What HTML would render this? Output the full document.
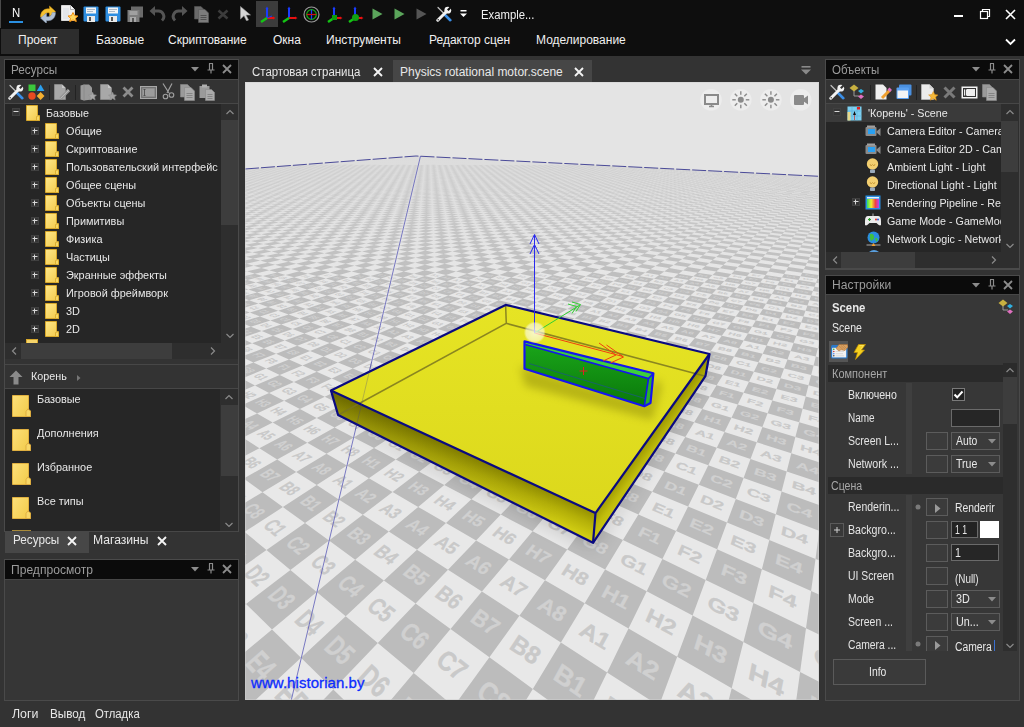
<!DOCTYPE html>
<html><head><meta charset="utf-8"><style>
html,body{margin:0;padding:0;}
body{width:1024px;height:727px;overflow:hidden;position:relative;background:#333333;font-family:"Liberation Sans",sans-serif;}
.a{position:absolute;}
.t{white-space:nowrap;}
svg{overflow:hidden;}
</style></head><body>
<svg class="a" style="left:245px;top:82px" width="574" height="618" viewBox="245 82 574 618"><rect x="245" y="82" width="574" height="618" fill="#e4e4e4"/><defs><clipPath id="fc"><path d="M245 169 L416 156 L819 176.3 L819 700 L245 700Z"/></clipPath><linearGradient id="fog" x1="0" y1="150" x2="0" y2="330" gradientUnits="userSpaceOnUse"><stop offset="0" stop-color="#d8d8d8" stop-opacity="0.75"/><stop offset="0.2" stop-color="#d8d8d8" stop-opacity="0.6"/><stop offset="0.45" stop-color="#d8d8d8" stop-opacity="0.32"/><stop offset="0.7" stop-color="#d8d8d8" stop-opacity="0.1"/><stop offset="1" stop-color="#d8d8d8" stop-opacity="0"/></linearGradient></defs><g clip-path="url(#fc)"><rect x="245" y="150" width="574" height="550" fill="#e8e8e8"/><path fill="#bcbcbc" d="M245.9 164.7 248 164.9 243.9 165.2 241.7 165ZM252.1 164.6 254.3 164.8 250.2 165.1 248 164.9ZM243.9 165.2 246 165.3 241.8 165.6 239.6 165.4ZM258.4 164.5 260.6 164.7 256.5 165 254.3 164.8ZM250.2 165.1 252.4 165.3 248.2 165.5 246 165.3ZM264.6 164.5 266.8 164.6 262.8 164.9 260.6 164.7ZM256.5 165 258.7 165.2 254.6 165.5 252.4 165.3ZM248.2 165.5 250.4 165.7 246.2 166 244 165.8ZM262.8 164.9 265 165.1 260.9 165.4 258.7 165.2ZM254.6 165.5 256.8 165.6 252.6 165.9 250.4 165.7ZM246.2 166 248.4 166.2 244.1 166.5 241.9 166.3ZM269 164.8 271.3 165 267.3 165.3 265 165.1ZM260.9 165.4 263.2 165.6 259.1 165.8 256.8 165.6ZM252.6 165.9 254.9 166.1 250.6 166.4 248.4 166.2ZM244.1 166.5 246.3 166.7 242 167 239.7 166.8ZM275.2 164.7 277.5 164.9 273.5 165.2 271.3 165ZM267.3 165.3 269.5 165.5 265.4 165.7 263.2 165.6ZM259.1 165.8 261.3 166 257.1 166.3 254.9 166.1ZM250.6 166.4 252.9 166.6 248.6 166.9 246.3 166.7ZM281.4 164.7 283.7 164.8 279.8 165.1 277.5 164.9ZM273.5 165.2 275.8 165.4 271.8 165.7 269.5 165.5ZM265.4 165.7 267.7 165.9 263.6 166.2 261.3 166ZM257.1 166.3 259.4 166.5 255.2 166.8 252.9 166.6ZM248.6 166.9 250.9 167.1 246.5 167.4 244.2 167.2ZM287.6 164.6 289.9 164.8 286 165 283.7 164.8ZM279.8 165.1 282.1 165.3 278.1 165.6 275.8 165.4ZM271.8 165.7 274.1 165.9 270 166.1 267.7 165.9ZM263.6 166.2 265.9 166.4 261.7 166.7 259.4 166.5ZM255.2 166.8 257.5 167 253.1 167.3 250.9 167.1ZM246.5 167.4 248.8 167.6 244.3 167.9 242.1 167.7ZM293.7 164.5 296.1 164.7 292.2 164.9 289.9 164.8ZM286 165 288.4 165.2 284.4 165.5 282.1 165.3ZM278.1 165.6 280.5 165.8 276.4 166 274.1 165.9ZM270 166.1 272.4 166.3 268.2 166.6 265.9 166.4ZM261.7 166.7 264 166.9 259.8 167.2 257.5 167ZM253.1 167.3 255.5 167.5 251.1 167.8 248.8 167.6ZM244.3 167.9 246.6 168.1 242.1 168.5 239.8 168.2ZM292.2 164.9 294.6 165.1 290.7 165.4 288.4 165.2ZM284.4 165.5 286.8 165.7 282.8 166 280.5 165.8ZM276.4 166 278.8 166.2 274.7 166.5 272.4 166.3ZM268.2 166.6 270.6 166.8 266.4 167.1 264 166.9ZM259.8 167.2 262.1 167.4 257.8 167.7 255.5 167.5ZM251.1 167.8 253.4 168 249 168.4 246.6 168.1ZM298.4 164.9 300.8 165 297 165.3 294.6 165.1ZM290.7 165.4 293.1 165.6 289.2 165.9 286.8 165.7ZM282.8 166 285.2 166.2 281.2 166.4 278.8 166.2ZM274.7 166.5 277.1 166.7 272.9 167 270.6 166.8ZM266.4 167.1 268.7 167.3 264.5 167.6 262.1 167.4ZM257.8 167.7 260.2 167.9 255.8 168.3 253.4 168ZM249 168.4 251.3 168.6 246.8 168.9 244.5 168.7ZM304.6 164.8 307 165 303.2 165.2 300.8 165ZM297 165.3 299.4 165.5 295.5 165.8 293.1 165.6ZM289.2 165.9 291.6 166.1 287.6 166.4 285.2 166.2ZM281.2 166.4 283.6 166.6 279.5 166.9 277.1 166.7ZM272.9 167 275.3 167.2 271.1 167.5 268.7 167.3ZM264.5 167.6 266.9 167.8 262.5 168.2 260.2 167.9ZM255.8 168.3 258.1 168.5 253.7 168.8 251.3 168.6ZM246.8 168.9 249.2 169.1 244.6 169.4 242.2 169.2ZM310.7 164.7 313.1 164.9 309.4 165.1 307 165ZM303.2 165.2 305.6 165.4 301.8 165.7 299.4 165.5ZM295.5 165.8 297.9 166 294 166.3 291.6 166.1ZM287.6 166.4 290 166.6 286 166.8 283.6 166.6ZM279.5 166.9 281.9 167.1 277.7 167.4 275.3 167.2ZM271.1 167.5 273.5 167.7 269.3 168.1 266.9 167.8ZM262.5 168.2 264.9 168.4 260.5 168.7 258.1 168.5ZM253.7 168.8 256.1 169 251.6 169.3 249.2 169.1ZM244.6 169.4 247 169.7 242.3 170 240 169.8ZM316.8 164.6 319.2 164.8 315.6 165.1 313.1 164.9ZM309.4 165.1 311.8 165.3 308.1 165.6 305.6 165.4ZM301.8 165.7 304.2 165.9 300.4 166.2 297.9 166ZM294 166.3 296.4 166.5 292.5 166.8 290 166.6ZM286 166.8 288.4 167 284.3 167.3 281.9 167.1ZM277.7 167.4 280.2 167.7 276 168 273.5 167.7ZM269.3 168.1 271.7 168.3 267.4 168.6 264.9 168.4ZM260.5 168.7 263 168.9 258.5 169.2 256.1 169ZM251.6 169.3 254 169.6 249.4 169.9 247 169.7ZM322.9 164.5 325.3 164.7 321.7 165 319.2 164.8ZM315.6 165.1 318 165.2 314.3 165.5 311.8 165.3ZM308.1 165.6 310.5 165.8 306.7 166.1 304.2 165.9ZM300.4 166.2 302.8 166.4 298.9 166.7 296.4 166.5ZM292.5 166.8 294.9 167 290.9 167.3 288.4 167ZM284.3 167.3 286.8 167.6 282.6 167.9 280.2 167.7ZM276 168 278.4 168.2 274.1 168.5 271.7 168.3ZM267.4 168.6 269.8 168.8 265.4 169.1 263 168.9ZM258.5 169.2 261 169.5 256.4 169.8 254 169.6ZM249.4 169.9 251.8 170.1 247.2 170.5 244.7 170.2ZM321.7 165 324.2 165.2 320.5 165.4 318 165.2ZM314.3 165.5 316.8 165.7 313 166 310.5 165.8ZM306.7 166.1 309.2 166.3 305.3 166.6 302.8 166.4ZM298.9 166.7 301.4 166.9 297.4 167.2 294.9 167ZM290.9 167.3 293.4 167.5 289.3 167.8 286.8 167.6ZM282.6 167.9 285.1 168.1 280.9 168.4 278.4 168.2ZM274.1 168.5 276.6 168.7 272.3 169 269.8 168.8ZM265.4 169.1 267.9 169.4 263.4 169.7 261 169.5ZM256.4 169.8 258.9 170 254.3 170.4 251.8 170.1ZM247.2 170.5 249.6 170.7 244.9 171.1 242.4 170.8ZM327.8 164.9 330.3 165.1 326.7 165.4 324.2 165.2ZM320.5 165.4 323 165.6 319.3 165.9 316.8 165.7ZM313 166 315.5 166.2 311.7 166.5 309.2 166.3ZM305.3 166.6 307.8 166.8 303.9 167.1 301.4 166.9ZM297.4 167.2 299.9 167.4 295.9 167.7 293.4 167.5ZM289.3 167.8 291.8 168 287.6 168.3 285.1 168.1ZM280.9 168.4 283.4 168.6 279.1 168.9 276.6 168.7ZM272.3 169 274.8 169.3 270.4 169.6 267.9 169.4ZM263.4 169.7 265.9 169.9 261.4 170.3 258.9 170ZM254.3 170.4 256.8 170.6 252.1 171 249.6 170.7ZM244.9 171.1 247.4 171.3 242.5 171.7 240.1 171.4ZM333.9 164.8 336.4 165 332.8 165.3 330.3 165.1ZM326.7 165.4 329.2 165.5 325.5 165.8 323 165.6ZM319.3 165.9 321.8 166.1 318.1 166.4 315.5 166.2ZM311.7 166.5 314.2 166.7 310.4 167 307.8 166.8ZM303.9 167.1 306.4 167.3 302.4 167.6 299.9 167.4ZM295.9 167.7 298.4 167.9 294.3 168.2 291.8 168ZM287.6 168.3 290.1 168.5 285.9 168.8 283.4 168.6ZM279.1 168.9 281.6 169.2 277.3 169.5 274.8 169.3ZM270.4 169.6 272.9 169.8 268.4 170.2 265.9 169.9ZM261.4 170.3 263.9 170.5 259.3 170.9 256.8 170.6ZM252.1 171 254.6 171.2 249.8 171.6 247.4 171.3ZM242.5 171.7 245 171.9 240.1 172.3 237.6 172.1ZM339.9 164.7 342.5 164.9 339 165.2 336.4 165ZM332.8 165.3 335.4 165.5 331.8 165.7 329.2 165.5ZM325.5 165.8 328.1 166 324.4 166.3 321.8 166.1ZM318.1 166.4 320.6 166.6 316.8 166.9 314.2 166.7ZM310.4 167 312.9 167.2 309 167.5 306.4 167.3ZM302.4 167.6 305 167.8 300.9 168.1 298.4 167.9ZM294.3 168.2 296.8 168.4 292.7 168.7 290.1 168.5ZM285.9 168.8 288.5 169.1 284.2 169.4 281.6 169.2ZM277.3 169.5 279.8 169.7 275.4 170.1 272.9 169.8ZM268.4 170.2 271 170.4 266.4 170.7 263.9 170.5ZM259.3 170.9 261.8 171.1 257.1 171.5 254.6 171.2ZM249.8 171.6 252.4 171.8 247.5 172.2 245 171.9ZM346 164.6 348.5 164.8 345.1 165.1 342.5 164.9ZM339 165.2 341.5 165.4 338 165.6 335.4 165.5ZM331.8 165.7 334.3 165.9 330.7 166.2 328.1 166ZM324.4 166.3 327 166.5 323.2 166.8 320.6 166.6ZM316.8 166.9 319.4 167.1 315.5 167.4 312.9 167.2ZM309 167.5 311.6 167.7 307.6 168 305 167.8ZM300.9 168.1 303.5 168.3 299.4 168.6 296.8 168.4ZM292.7 168.7 295.3 169 291 169.3 288.5 169.1ZM284.2 169.4 286.8 169.6 282.4 169.9 279.8 169.7ZM275.4 170.1 278 170.3 273.5 170.6 271 170.4ZM266.4 170.7 269 171 264.4 171.3 261.8 171.1ZM257.1 171.5 259.7 171.7 254.9 172.1 252.4 171.8ZM247.5 172.2 250.1 172.4 245.2 172.8 242.6 172.6ZM352 164.6 354.6 164.7 351.1 165 348.5 164.8ZM345.1 165.1 347.7 165.3 344.1 165.6 341.5 165.4ZM338 165.6 340.6 165.8 336.9 166.1 334.3 165.9ZM330.7 166.2 333.3 166.4 329.6 166.7 327 166.5ZM323.2 166.8 325.8 167 322 167.3 319.4 167.1ZM315.5 167.4 318.1 167.6 314.2 167.9 311.6 167.7ZM307.6 168 310.2 168.2 306.1 168.5 303.5 168.3ZM299.4 168.6 302 168.9 297.9 169.2 295.3 169ZM291 169.3 293.6 169.5 289.4 169.8 286.8 169.6ZM282.4 169.9 285 170.2 280.6 170.5 278 170.3ZM273.5 170.6 276.1 170.9 271.6 171.2 269 171ZM264.4 171.3 266.9 171.6 262.3 172 259.7 171.7ZM254.9 172.1 257.5 172.3 252.7 172.7 250.1 172.4ZM245.2 172.8 247.7 173.1 242.7 173.5 240.2 173.2ZM351.1 165 353.8 165.2 350.3 165.5 347.7 165.3ZM344.1 165.6 346.8 165.8 343.2 166 340.6 165.8ZM336.9 166.1 339.6 166.3 335.9 166.6 333.3 166.4ZM329.6 166.7 332.2 166.9 328.4 167.2 325.8 167ZM322 167.3 324.6 167.5 320.7 167.8 318.1 167.6ZM314.2 167.9 316.8 168.1 312.8 168.4 310.2 168.2ZM306.1 168.5 308.8 168.7 304.7 169.1 302 168.9ZM297.9 169.2 300.5 169.4 296.3 169.7 293.6 169.5ZM289.4 169.8 292 170.1 287.6 170.4 285 170.2ZM280.6 170.5 283.2 170.8 278.7 171.1 276.1 170.9ZM271.6 171.2 274.2 171.5 269.6 171.8 266.9 171.6ZM262.3 172 264.9 172.2 260.1 172.6 257.5 172.3ZM252.7 172.7 255.3 173 250.3 173.4 247.7 173.1ZM242.7 173.5 245.3 173.8 240.3 174.2 237.7 173.9ZM357.2 164.9 359.8 165.1 356.4 165.4 353.8 165.2ZM350.3 165.5 352.9 165.7 349.4 165.9 346.8 165.8ZM343.2 166 345.8 166.2 342.2 166.5 339.6 166.3ZM335.9 166.6 338.6 166.8 334.8 167.1 332.2 166.9ZM328.4 167.2 331.1 167.4 327.2 167.7 324.6 167.5ZM320.7 167.8 323.4 168 319.4 168.3 316.8 168.1ZM312.8 168.4 315.5 168.6 311.4 169 308.8 168.7ZM304.7 169.1 307.3 169.3 303.1 169.6 300.5 169.4ZM296.3 169.7 298.9 170 294.6 170.3 292 170.1ZM287.6 170.4 290.3 170.7 285.9 171 283.2 170.8ZM278.7 171.1 281.4 171.4 276.8 171.7 274.2 171.5ZM269.6 171.8 272.2 172.1 267.5 172.5 264.9 172.2ZM260.1 172.6 262.7 172.8 257.9 173.2 255.3 173ZM250.3 173.4 253 173.6 247.9 174 245.3 173.8ZM363.2 164.8 365.9 165 362.5 165.3 359.8 165.1ZM356.4 165.4 359.1 165.6 355.6 165.9 352.9 165.7ZM349.4 165.9 352.1 166.1 348.5 166.4 345.8 166.2ZM342.2 166.5 344.9 166.7 341.2 167 338.6 166.8ZM334.8 167.1 337.5 167.3 333.7 167.6 331.1 167.4ZM327.2 167.7 329.9 167.9 326 168.2 323.4 168ZM319.4 168.3 322.1 168.5 318.1 168.9 315.5 168.6ZM311.4 169 314.1 169.2 310 169.5 307.3 169.3ZM303.1 169.6 305.8 169.9 301.6 170.2 298.9 170ZM294.6 170.3 297.3 170.5 292.9 170.9 290.3 170.7ZM285.9 171 288.5 171.3 284 171.6 281.4 171.4ZM276.8 171.7 279.5 172 274.9 172.3 272.2 172.1ZM267.5 172.5 270.2 172.7 265.4 173.1 262.7 172.8ZM257.9 173.2 260.5 173.5 255.6 173.9 253 173.6ZM247.9 174 250.6 174.3 245.5 174.7 242.9 174.4ZM369.2 164.8 371.9 164.9 368.5 165.2 365.9 165ZM362.5 165.3 365.2 165.5 361.7 165.8 359.1 165.6ZM355.6 165.9 358.3 166.1 354.8 166.3 352.1 166.1ZM348.5 166.4 351.2 166.6 347.6 166.9 344.9 166.7ZM341.2 167 343.9 167.2 340.2 167.5 337.5 167.3ZM333.7 167.6 336.4 167.8 332.6 168.1 329.9 167.9ZM326 168.2 328.7 168.4 324.8 168.8 322.1 168.5ZM318.1 168.9 320.8 169.1 316.8 169.4 314.1 169.2ZM310 169.5 312.7 169.8 308.5 170.1 305.8 169.9ZM301.6 170.2 304.3 170.4 300 170.8 297.3 170.5ZM292.9 170.9 295.6 171.1 291.2 171.5 288.5 171.3ZM284 171.6 286.7 171.9 282.2 172.2 279.5 172ZM274.9 172.3 277.5 172.6 272.8 173 270.2 172.7ZM265.4 173.1 268.1 173.4 263.2 173.8 260.5 173.5ZM255.6 173.9 258.3 174.2 253.3 174.6 250.6 174.3ZM245.5 174.7 248.2 175 243 175.4 240.3 175.1ZM375.2 164.7 377.8 164.9 374.6 165.1 371.9 164.9ZM368.5 165.2 371.2 165.4 367.9 165.7 365.2 165.5ZM361.7 165.8 364.4 166 361 166.2 358.3 166.1ZM354.8 166.3 357.5 166.5 353.9 166.8 351.2 166.6ZM347.6 166.9 350.3 167.1 346.6 167.4 343.9 167.2ZM340.2 167.5 342.9 167.7 339.2 168 336.4 167.8ZM332.6 168.1 335.3 168.4 331.5 168.7 328.7 168.4ZM324.8 168.8 327.5 169 323.6 169.3 320.8 169.1ZM316.8 169.4 319.5 169.6 315.4 170 312.7 169.8ZM308.5 170.1 311.2 170.3 307 170.7 304.3 170.4ZM300 170.8 302.7 171 298.4 171.4 295.6 171.1ZM291.2 171.5 293.9 171.7 289.5 172.1 286.7 171.9ZM282.2 172.2 284.9 172.5 280.3 172.9 277.5 172.6ZM272.8 173 275.6 173.3 270.8 173.6 268.1 173.4ZM263.2 173.8 265.9 174 261 174.5 258.3 174.2ZM253.3 174.6 256 174.9 250.9 175.3 248.2 175ZM243 175.4 245.7 175.7 240.4 176.1 237.7 175.8ZM374.6 165.1 377.3 165.3 374 165.6 371.2 165.4ZM367.9 165.7 370.6 165.9 367.2 166.2 364.4 166ZM361 166.2 363.7 166.4 360.2 166.7 357.5 166.5ZM353.9 166.8 356.6 167 353 167.3 350.3 167.1ZM346.6 167.4 349.4 167.6 345.7 167.9 342.9 167.7ZM339.2 168 341.9 168.3 338.1 168.6 335.3 168.4ZM331.5 168.7 334.2 168.9 330.3 169.2 327.5 169ZM323.6 169.3 326.3 169.5 322.3 169.9 319.5 169.6ZM315.4 170 318.2 170.2 314 170.6 311.2 170.3ZM307 170.7 309.8 170.9 305.5 171.3 302.7 171ZM298.4 171.4 301.1 171.6 296.7 172 293.9 171.7ZM289.5 172.1 292.2 172.4 287.6 172.7 284.9 172.5ZM280.3 172.9 283 173.1 278.3 173.5 275.6 173.3ZM270.8 173.6 273.5 173.9 268.6 174.3 265.9 174ZM261 174.5 263.7 174.7 258.7 175.1 256 174.9ZM250.9 175.3 253.6 175.6 248.4 176 245.7 175.7ZM380.6 165.1 383.3 165.2 380 165.5 377.3 165.3ZM374 165.6 376.7 165.8 373.3 166.1 370.6 165.9ZM367.2 166.2 369.9 166.4 366.5 166.6 363.7 166.4ZM360.2 166.7 363 166.9 359.4 167.2 356.6 167ZM353 167.3 355.8 167.5 352.2 167.8 349.4 167.6ZM345.7 167.9 348.4 168.2 344.7 168.5 341.9 168.3ZM338.1 168.6 340.9 168.8 337 169.1 334.2 168.9ZM330.3 169.2 333.1 169.4 329.1 169.8 326.3 169.5ZM322.3 169.9 325.1 170.1 321 170.5 318.2 170.2ZM314 170.6 316.8 170.8 312.6 171.2 309.8 170.9ZM305.5 171.3 308.3 171.5 303.9 171.9 301.1 171.6ZM296.7 172 299.5 172.3 295 172.6 292.2 172.4ZM287.6 172.7 290.4 173 285.8 173.4 283 173.1ZM278.3 173.5 281.1 173.8 276.3 174.2 273.5 173.9ZM268.6 174.3 271.4 174.6 266.5 175 263.7 174.7ZM258.7 175.1 261.4 175.4 256.3 175.9 253.6 175.6ZM248.4 176 251.1 176.3 245.8 176.7 243.1 176.4ZM386.5 165 389.3 165.2 386.1 165.4 383.3 165.2ZM380 165.5 382.8 165.7 379.5 166 376.7 165.8ZM373.3 166.1 376.1 166.3 372.7 166.6 369.9 166.4ZM366.5 166.6 369.3 166.8 365.8 167.1 363 166.9ZM359.4 167.2 362.2 167.4 358.6 167.7 355.8 167.5ZM352.2 167.8 355 168.1 351.2 168.4 348.4 168.2ZM344.7 168.5 347.5 168.7 343.7 169 340.9 168.8ZM337 169.1 339.8 169.3 335.9 169.7 333.1 169.4ZM329.1 169.8 331.9 170 327.9 170.3 325.1 170.1ZM321 170.5 323.8 170.7 319.6 171 316.8 170.8ZM312.6 171.2 315.4 171.4 311.1 171.8 308.3 171.5ZM303.9 171.9 306.7 172.1 302.3 172.5 299.5 172.3ZM295 172.6 297.8 172.9 293.2 173.3 290.4 173ZM285.8 173.4 288.6 173.7 283.9 174.1 281.1 173.8ZM276.3 174.2 279.1 174.5 274.2 174.9 271.4 174.6ZM266.5 175 269.3 175.3 264.2 175.7 261.4 175.4ZM256.3 175.9 259.1 176.2 253.9 176.6 251.1 176.3ZM245.8 176.7 248.6 177 243.2 177.5 240.5 177.2ZM392.5 164.9 395.3 165.1 392.1 165.3 389.3 165.2ZM386.1 165.4 388.9 165.6 385.6 165.9 382.8 165.7ZM379.5 166 382.3 166.2 378.9 166.5 376.1 166.3ZM372.7 166.6 375.5 166.8 372.1 167.1 369.3 166.8ZM365.8 167.1 368.6 167.3 365 167.7 362.2 167.4ZM358.6 167.7 361.4 168 357.8 168.3 355 168.1ZM351.2 168.4 354.1 168.6 350.3 168.9 347.5 168.7ZM343.7 169 346.5 169.2 342.6 169.6 339.8 169.3ZM335.9 169.7 338.7 169.9 334.7 170.2 331.9 170ZM327.9 170.3 330.7 170.6 326.6 170.9 323.8 170.7ZM319.6 171 322.4 171.3 318.2 171.7 315.4 171.4ZM311.1 171.8 313.9 172 309.6 172.4 306.7 172.1ZM302.3 172.5 305.1 172.8 300.6 173.2 297.8 172.9ZM293.2 173.3 296.1 173.5 291.4 173.9 288.6 173.7ZM283.9 174.1 286.7 174.3 281.9 174.8 279.1 174.5ZM274.2 174.9 277 175.2 272.1 175.6 269.3 175.3ZM264.2 175.7 267 176 261.9 176.5 259.1 176.2ZM253.9 176.6 256.7 176.9 251.4 177.4 248.6 177ZM243.2 177.5 246 177.8 240.5 178.3 237.8 178ZM398.4 164.8 401.2 165 398.1 165.3 395.3 165.1ZM392.1 165.3 394.9 165.5 391.7 165.8 388.9 165.6ZM385.6 165.9 388.4 166.1 385.1 166.4 382.3 166.2ZM378.9 166.5 381.8 166.7 378.4 167 375.5 166.8ZM372.1 167.1 374.9 167.3 371.4 167.6 368.6 167.3ZM365 167.7 367.9 167.9 364.3 168.2 361.4 168ZM357.8 168.3 360.6 168.5 356.9 168.8 354.1 168.6ZM350.3 168.9 353.2 169.1 349.4 169.5 346.5 169.2ZM342.6 169.6 345.5 169.8 341.6 170.1 338.7 169.9ZM334.7 170.2 337.6 170.5 333.6 170.8 330.7 170.6ZM326.6 170.9 329.5 171.2 325.3 171.5 322.4 171.3ZM318.2 171.7 321.1 171.9 316.8 172.3 313.9 172ZM309.6 172.4 312.4 172.6 308 173 305.1 172.8ZM300.6 173.2 303.5 173.4 298.9 173.8 296.1 173.5ZM291.4 173.9 294.3 174.2 289.6 174.6 286.7 174.3ZM281.9 174.8 284.8 175 279.9 175.5 277 175.2ZM272.1 175.6 274.9 175.9 269.9 176.3 267 176ZM261.9 176.5 264.8 176.8 259.6 177.2 256.7 176.9ZM251.4 177.4 254.3 177.7 248.9 178.1 246 177.8ZM404.3 164.7 407.1 164.9 404 165.2 401.2 165ZM398.1 165.3 400.9 165.4 397.7 165.7 394.9 165.5ZM391.7 165.8 394.5 166 391.3 166.3 388.4 166.1ZM385.1 166.4 388 166.6 384.6 166.9 381.8 166.7ZM378.4 167 381.2 167.2 377.8 167.5 374.9 167.3ZM371.4 167.6 374.3 167.8 370.7 168.1 367.9 167.9ZM364.3 168.2 367.1 168.4 363.5 168.7 360.6 168.5ZM356.9 168.8 359.8 169 356.1 169.4 353.2 169.1ZM349.4 169.5 352.3 169.7 348.4 170 345.5 169.8ZM341.6 170.1 344.5 170.4 340.5 170.7 337.6 170.5ZM333.6 170.8 336.5 171.1 332.4 171.4 329.5 171.2ZM325.3 171.5 328.2 171.8 324 172.2 321.1 171.9ZM316.8 172.3 319.7 172.5 315.3 172.9 312.4 172.6ZM308 173 310.9 173.3 306.4 173.7 303.5 173.4ZM298.9 173.8 301.8 174.1 297.2 174.5 294.3 174.2ZM289.6 174.6 292.5 174.9 287.7 175.3 284.8 175ZM279.9 175.5 282.8 175.7 277.8 176.2 274.9 175.9ZM269.9 176.3 272.8 176.6 267.6 177.1 264.8 176.8ZM259.6 177.2 262.4 177.5 257.1 178 254.3 177.7ZM248.9 178.1 251.7 178.5 246.2 178.9 243.4 178.6ZM404 165.2 406.9 165.4 403.8 165.6 400.9 165.4ZM397.7 165.7 400.6 165.9 397.4 166.2 394.5 166ZM391.3 166.3 394.1 166.5 390.8 166.8 388 166.6ZM384.6 166.9 387.5 167.1 384.1 167.4 381.2 167.2ZM377.8 167.5 380.7 167.7 377.2 168 374.3 167.8ZM370.7 168.1 373.6 168.3 370.1 168.6 367.1 168.4ZM363.5 168.7 366.4 168.9 362.7 169.3 359.8 169ZM356.1 169.4 359 169.6 355.2 169.9 352.3 169.7ZM348.4 170 351.3 170.3 347.4 170.6 344.5 170.4ZM340.5 170.7 343.4 171 339.4 171.3 336.5 171.1ZM332.4 171.4 335.3 171.7 331.1 172 328.2 171.8ZM324 172.2 326.9 172.4 322.6 172.8 319.7 172.5ZM315.3 172.9 318.3 173.2 313.8 173.6 310.9 173.3ZM306.4 173.7 309.3 174 304.8 174.4 301.8 174.1ZM297.2 174.5 300.1 174.8 295.4 175.2 292.5 174.9ZM287.7 175.3 290.6 175.6 285.7 176 282.8 175.7ZM277.8 176.2 280.7 176.5 275.7 176.9 272.8 176.6ZM267.6 177.1 270.6 177.4 265.3 177.8 262.4 177.5ZM257.1 178 260 178.3 254.6 178.8 251.7 178.5ZM246.2 178.9 249.1 179.3 243.5 179.8 240.6 179.4ZM410 165.1 412.9 165.3 409.8 165.5 406.9 165.4ZM403.8 165.6 406.7 165.8 403.5 166.1 400.6 165.9ZM397.4 166.2 400.3 166.4 397 166.7 394.1 166.5ZM390.8 166.8 393.7 167 390.4 167.3 387.5 167.1ZM384.1 167.4 387 167.6 383.6 167.9 380.7 167.7ZM377.2 168 380.1 168.2 376.6 168.5 373.6 168.3ZM370.1 168.6 373 168.8 369.3 169.2 366.4 168.9ZM362.7 169.3 365.7 169.5 361.9 169.8 359 169.6ZM355.2 169.9 358.1 170.2 354.3 170.5 351.3 170.3ZM347.4 170.6 350.3 170.8 346.4 171.2 343.4 171ZM339.4 171.3 342.3 171.6 338.2 171.9 335.3 171.7ZM331.1 172 334.1 172.3 329.9 172.7 326.9 172.4ZM322.6 172.8 325.6 173.1 321.2 173.4 318.3 173.2ZM313.8 173.6 316.8 173.8 312.3 174.2 309.3 174ZM304.8 174.4 307.7 174.6 303.1 175.1 300.1 174.8ZM295.4 175.2 298.3 175.5 293.5 175.9 290.6 175.6ZM285.7 176 288.7 176.3 283.7 176.8 280.7 176.5ZM275.7 176.9 278.6 177.2 273.5 177.7 270.6 177.4ZM265.3 177.8 268.3 178.2 263 178.6 260 178.3ZM254.6 178.8 257.5 179.1 252 179.6 249.1 179.3ZM243.5 179.8 246.4 180.1 240.7 180.6 237.8 180.3ZM415.9 165 418.8 165.2 415.7 165.5 412.9 165.3ZM409.8 165.5 412.7 165.7 409.6 166 406.7 165.8ZM403.5 166.1 406.4 166.3 403.2 166.6 400.3 166.4ZM397 166.7 400 166.9 396.7 167.2 393.7 167ZM390.4 167.3 393.3 167.5 390 167.8 387 167.6ZM383.6 167.9 386.5 168.1 383 168.4 380.1 168.2ZM376.6 168.5 379.5 168.7 375.9 169 373 168.8ZM369.3 169.2 372.3 169.4 368.6 169.7 365.7 169.5ZM361.9 169.8 364.9 170 361.1 170.4 358.1 170.2ZM354.3 170.5 357.2 170.7 353.3 171.1 350.3 170.8ZM346.4 171.2 349.4 171.4 345.3 171.8 342.3 171.6ZM338.2 171.9 341.2 172.2 337.1 172.5 334.1 172.3ZM329.9 172.7 332.9 172.9 328.6 173.3 325.6 173.1ZM321.2 173.4 324.2 173.7 319.8 174.1 316.8 173.8ZM312.3 174.2 315.3 174.5 310.7 174.9 307.7 174.6ZM303.1 175.1 306.1 175.3 301.3 175.8 298.3 175.5ZM293.5 175.9 296.5 176.2 291.6 176.6 288.7 176.3ZM283.7 176.8 286.7 177.1 281.6 177.5 278.6 177.2ZM273.5 177.7 276.5 178 271.2 178.5 268.3 178.2ZM263 178.6 265.9 179 260.5 179.4 257.5 179.1ZM252 179.6 255 179.9 249.4 180.5 246.4 180.1ZM421.8 164.9 424.7 165.1 421.7 165.4 418.8 165.2ZM415.7 165.5 418.7 165.7 415.6 165.9 412.7 165.7ZM409.6 166 412.5 166.2 409.3 166.5 406.4 166.3ZM403.2 166.6 406.1 166.8 402.9 167.1 400 166.9ZM396.7 167.2 399.6 167.4 396.3 167.7 393.3 167.5ZM390 167.8 392.9 168 389.5 168.3 386.5 168.1ZM383 168.4 386 168.6 382.5 168.9 379.5 168.7ZM375.9 169 378.9 169.3 375.3 169.6 372.3 169.4ZM368.6 169.7 371.6 169.9 367.9 170.3 364.9 170ZM361.1 170.4 364.1 170.6 360.2 171 357.2 170.7ZM353.3 171.1 356.3 171.3 352.4 171.7 349.4 171.4ZM345.3 171.8 348.3 172.1 344.2 172.4 341.2 172.2ZM337.1 172.5 340.1 172.8 335.9 173.2 332.9 172.9ZM328.6 173.3 331.6 173.6 327.2 174 324.2 173.7ZM319.8 174.1 322.8 174.4 318.3 174.8 315.3 174.5ZM310.7 174.9 313.7 175.2 309.1 175.6 306.1 175.3ZM301.3 175.8 304.4 176.1 299.5 176.5 296.5 176.2ZM291.6 176.6 294.7 176.9 289.7 177.4 286.7 177.1ZM281.6 177.5 284.6 177.9 279.5 178.3 276.5 178ZM271.2 178.5 274.3 178.8 268.9 179.3 265.9 179ZM260.5 179.4 263.5 179.8 258 180.3 255 179.9ZM249.4 180.5 252.4 180.8 246.6 181.3 243.6 181ZM427.6 164.8 430.6 165 427.6 165.3 424.7 165.1ZM421.7 165.4 424.6 165.6 421.6 165.8 418.7 165.7ZM415.6 165.9 418.6 166.1 415.5 166.4 412.5 166.2ZM409.3 166.5 412.3 166.7 409.1 167 406.1 166.8ZM402.9 167.1 405.9 167.3 402.6 167.6 399.6 167.4ZM396.3 167.7 399.3 167.9 395.9 168.2 392.9 168ZM389.5 168.3 392.5 168.5 389 168.8 386 168.6ZM382.5 168.9 385.5 169.2 381.9 169.5 378.9 169.3ZM375.3 169.6 378.3 169.8 374.6 170.2 371.6 169.9ZM367.9 170.3 370.9 170.5 367.1 170.9 364.1 170.6ZM360.2 171 363.3 171.2 359.4 171.6 356.3 171.3ZM352.4 171.7 355.4 171.9 351.4 172.3 348.3 172.1ZM344.2 172.4 347.3 172.7 343.1 173.1 340.1 172.8ZM335.9 173.2 338.9 173.5 334.6 173.9 331.6 173.6ZM327.2 174 330.3 174.3 325.9 174.7 322.8 174.4ZM318.3 174.8 321.4 175.1 316.8 175.5 313.7 175.2ZM309.1 175.6 312.1 175.9 307.4 176.4 304.4 176.1ZM299.5 176.5 302.6 176.8 297.7 177.3 294.7 176.9ZM289.7 177.4 292.7 177.7 287.7 178.2 284.6 177.9ZM279.5 178.3 282.5 178.7 277.3 179.1 274.3 178.8ZM268.9 179.3 272 179.6 266.5 180.1 263.5 179.8ZM258 180.3 261 180.6 255.4 181.2 252.4 180.8ZM246.6 181.3 249.6 181.7 243.8 182.2 240.8 181.9ZM433.5 164.8 436.4 164.9 433.5 165.2 430.6 165ZM427.6 165.3 430.6 165.5 427.6 165.8 424.6 165.6ZM421.6 165.8 424.6 166 421.5 166.3 418.6 166.1ZM415.5 166.4 418.4 166.6 415.3 166.9 412.3 166.7ZM409.1 167 412.1 167.2 408.9 167.5 405.9 167.3ZM402.6 167.6 405.6 167.8 402.3 168.1 399.3 167.9ZM395.9 168.2 398.9 168.4 395.5 168.7 392.5 168.5ZM389 168.8 392.1 169.1 388.5 169.4 385.5 169.2ZM381.9 169.5 385 169.7 381.4 170.1 378.3 169.8ZM374.6 170.2 377.7 170.4 374 170.8 370.9 170.5ZM367.1 170.9 370.2 171.1 366.3 171.5 363.3 171.2ZM359.4 171.6 362.4 171.8 358.5 172.2 355.4 171.9ZM351.4 172.3 354.5 172.6 350.4 173 347.3 172.7ZM343.1 173.1 346.2 173.3 342 173.7 338.9 173.5ZM334.6 173.9 337.7 174.1 333.4 174.5 330.3 174.3ZM325.9 174.7 328.9 174.9 324.4 175.4 321.4 175.1ZM316.8 175.5 319.9 175.8 315.2 176.2 312.1 175.9ZM307.4 176.4 310.5 176.7 305.7 177.1 302.6 176.8ZM297.7 177.3 300.8 177.6 295.8 178 292.7 177.7ZM287.7 178.2 290.8 178.5 285.6 179 282.5 178.7ZM277.3 179.1 280.4 179.5 275 180 272 179.6ZM266.5 180.1 269.6 180.5 264.1 181 261 180.6ZM255.4 181.2 258.4 181.5 252.7 182 249.6 181.7ZM243.8 182.2 246.8 182.6 240.9 183.1 237.8 182.8ZM433.5 165.2 436.5 165.4 433.6 165.7 430.6 165.5ZM427.6 165.8 430.6 165.9 427.6 166.2 424.6 166ZM421.5 166.3 424.5 166.5 421.5 166.8 418.4 166.6ZM415.3 166.9 418.3 167.1 415.1 167.4 412.1 167.2ZM408.9 167.5 411.9 167.7 408.7 168 405.6 167.8ZM402.3 168.1 405.3 168.3 402 168.6 398.9 168.4ZM395.5 168.7 398.6 169 395.1 169.3 392.1 169.1ZM388.5 169.4 391.6 169.6 388.1 170 385 169.7ZM381.4 170.1 384.4 170.3 380.8 170.6 377.7 170.4ZM374 170.8 377.1 171 373.3 171.3 370.2 171.1ZM366.3 171.5 369.4 171.7 365.5 172.1 362.4 171.8ZM358.5 172.2 361.6 172.5 357.6 172.8 354.5 172.6ZM350.4 173 353.5 173.2 349.3 173.6 346.2 173.3ZM342 173.7 345.1 174 340.8 174.4 337.7 174.1ZM333.4 174.5 336.5 174.8 332.1 175.2 328.9 174.9ZM324.4 175.4 327.6 175.7 323 176.1 319.9 175.8ZM315.2 176.2 318.4 176.5 313.6 177 310.5 176.7ZM305.7 177.1 308.8 177.4 303.9 177.9 300.8 177.6ZM295.8 178 298.9 178.4 293.9 178.8 290.8 178.5ZM285.6 179 288.7 179.3 283.5 179.8 280.4 179.5ZM275 180 278.1 180.3 272.7 180.8 269.6 180.5ZM264.1 181 267.2 181.3 261.5 181.9 258.4 181.5ZM252.7 182 255.8 182.4 249.9 183 246.8 182.6ZM439.4 165.1 442.4 165.3 439.5 165.6 436.5 165.4ZM433.6 165.7 436.6 165.9 433.6 166.1 430.6 165.9ZM427.6 166.2 430.6 166.4 427.6 166.7 424.5 166.5ZM421.5 166.8 424.5 167 421.4 167.3 418.3 167.1ZM415.1 167.4 418.2 167.6 415 167.9 411.9 167.7ZM408.7 168 411.7 168.2 408.4 168.5 405.3 168.3ZM402 168.6 405.1 168.9 401.7 169.2 398.6 169ZM395.1 169.3 398.2 169.5 394.7 169.9 391.6 169.6ZM388.1 170 391.2 170.2 387.5 170.5 384.4 170.3ZM380.8 170.6 383.9 170.9 380.2 171.2 377.1 171ZM373.3 171.3 376.4 171.6 372.6 172 369.4 171.7ZM365.5 172.1 368.7 172.3 364.7 172.7 361.6 172.5ZM357.6 172.8 360.7 173.1 356.6 173.5 353.5 173.2ZM349.3 173.6 352.5 173.9 348.3 174.3 345.1 174ZM340.8 174.4 344 174.7 339.6 175.1 336.5 174.8ZM332.1 175.2 335.2 175.5 330.7 175.9 327.6 175.7ZM323 176.1 326.2 176.4 321.5 176.8 318.4 176.5ZM313.6 177 316.8 177.3 312 177.7 308.8 177.4ZM303.9 177.9 307.1 178.2 302.1 178.7 298.9 178.4ZM293.9 178.8 297 179.2 291.9 179.6 288.7 179.3ZM283.5 179.8 286.6 180.1 281.3 180.7 278.1 180.3ZM272.7 180.8 275.9 181.2 270.3 181.7 267.2 181.3ZM261.5 181.9 264.7 182.2 258.9 182.8 255.8 182.4ZM249.9 183 253 183.4 247.1 183.9 244 183.5ZM445.2 165 448.2 165.2 445.4 165.5 442.4 165.3ZM439.5 165.6 442.5 165.8 439.6 166.1 436.6 165.9ZM433.6 166.1 436.7 166.3 433.7 166.6 430.6 166.4ZM427.6 166.7 430.6 166.9 427.6 167.2 424.5 167ZM421.4 167.3 424.4 167.5 421.3 167.8 418.2 167.6ZM415 167.9 418.1 168.1 414.8 168.4 411.7 168.2ZM408.4 168.5 411.5 168.8 408.2 169.1 405.1 168.9ZM401.7 169.2 404.8 169.4 401.3 169.7 398.2 169.5ZM394.7 169.9 397.8 170.1 394.3 170.4 391.2 170.2ZM387.5 170.5 390.7 170.8 387 171.1 383.9 170.9ZM380.2 171.2 383.3 171.5 379.5 171.8 376.4 171.6ZM372.6 172 375.7 172.2 371.8 172.6 368.7 172.3ZM364.7 172.7 367.9 173 363.9 173.4 360.7 173.1ZM356.6 173.5 359.8 173.8 355.7 174.1 352.5 173.9ZM348.3 174.3 351.5 174.6 347.2 175 344 174.7ZM339.6 175.1 342.8 175.4 338.4 175.8 335.2 175.5ZM330.7 175.9 333.9 176.2 329.4 176.7 326.2 176.4ZM321.5 176.8 324.7 177.1 320 177.6 316.8 177.3ZM312 177.7 315.2 178.1 310.3 178.5 307.1 178.2ZM302.1 178.7 305.3 179 300.2 179.5 297 179.2ZM291.9 179.6 295.1 180 289.8 180.5 286.6 180.1ZM281.3 180.7 284.5 181 279 181.5 275.9 181.2ZM270.3 181.7 273.5 182.1 267.8 182.6 264.7 182.2ZM258.9 182.8 262.1 183.2 256.2 183.7 253 183.4ZM247.1 183.9 250.2 184.3 244.1 184.9 241 184.5ZM451 165 454.1 165.1 451.3 165.4 448.2 165.2ZM445.4 165.5 448.5 165.7 445.6 166 442.5 165.8ZM439.6 166.1 442.7 166.3 439.7 166.5 436.7 166.3ZM433.7 166.6 436.8 166.8 433.7 167.1 430.6 166.9ZM427.6 167.2 430.7 167.4 427.6 167.7 424.4 167.5ZM421.3 167.8 424.4 168 421.2 168.3 418.1 168.1ZM414.8 168.4 418 168.7 414.7 169 411.5 168.8ZM408.2 169.1 411.3 169.3 407.9 169.6 404.8 169.4ZM401.3 169.7 404.5 170 401 170.3 397.8 170.1ZM394.3 170.4 397.5 170.7 393.9 171 390.7 170.8ZM387 171.1 390.2 171.4 386.5 171.7 383.3 171.5ZM379.5 171.8 382.7 172.1 378.9 172.5 375.7 172.2ZM371.8 172.6 375 172.9 371.1 173.2 367.9 173ZM363.9 173.4 367.1 173.6 363 174 359.8 173.8ZM355.7 174.1 358.9 174.4 354.7 174.8 351.5 174.6ZM347.2 175 350.4 175.3 346.1 175.7 342.8 175.4ZM338.4 175.8 341.6 176.1 337.2 176.5 333.9 176.2ZM329.4 176.7 332.6 177 327.9 177.4 324.7 177.1ZM320 177.6 323.2 177.9 318.4 178.4 315.2 178.1ZM310.3 178.5 313.5 178.9 308.5 179.3 305.3 179ZM300.2 179.5 303.5 179.8 298.3 180.3 295.1 180ZM289.8 180.5 293.1 180.8 287.7 181.4 284.5 181ZM279 181.5 282.3 181.9 276.7 182.4 273.5 182.1ZM267.8 182.6 271 183 265.3 183.6 262.1 183.2ZM256.2 183.7 259.4 184.1 253.4 184.7 250.2 184.3ZM244.1 184.9 247.3 185.3 241.1 185.9 237.9 185.5ZM456.8 164.9 459.9 165.1 457.1 165.3 454.1 165.1ZM451.3 165.4 454.4 165.6 451.5 165.9 448.5 165.7ZM445.6 166 448.7 166.2 445.8 166.4 442.7 166.3ZM439.7 166.5 442.8 166.7 439.9 167 436.8 166.8ZM433.7 167.1 436.9 167.3 433.8 167.6 430.7 167.4ZM427.6 167.7 430.7 167.9 427.5 168.2 424.4 168ZM421.2 168.3 424.3 168.6 421.1 168.9 418 168.7ZM414.7 169 417.8 169.2 414.5 169.5 411.3 169.3ZM407.9 169.6 411.1 169.9 407.7 170.2 404.5 170ZM401 170.3 404.2 170.6 400.7 170.9 397.5 170.7ZM393.9 171 397.1 171.3 393.4 171.6 390.2 171.4ZM386.5 171.7 389.7 172 386 172.4 382.7 172.1ZM378.9 172.5 382.1 172.7 378.3 173.1 375 172.9ZM371.1 173.2 374.3 173.5 370.3 173.9 367.1 173.6ZM363 174 366.3 174.3 362.1 174.7 358.9 174.4ZM354.7 174.8 357.9 175.1 353.7 175.5 350.4 175.3ZM346.1 175.7 349.3 176 344.9 176.4 341.6 176.1ZM337.2 176.5 340.4 176.8 335.9 177.3 332.6 177ZM327.9 177.4 331.2 177.8 326.5 178.2 323.2 177.9ZM318.4 178.4 321.7 178.7 316.8 179.2 313.5 178.9ZM308.5 179.3 311.8 179.7 306.7 180.2 303.5 179.8ZM298.3 180.3 301.6 180.7 296.3 181.2 293.1 180.8ZM287.7 181.4 291 181.7 285.5 182.3 282.3 181.9ZM276.7 182.4 280 182.8 274.3 183.4 271 183ZM265.3 183.6 268.5 183.9 262.6 184.5 259.4 184.1ZM253.4 184.7 256.6 185.1 250.5 185.7 247.3 185.3ZM462.6 164.8 465.7 165 463 165.2 459.9 165.1ZM457.1 165.3 460.2 165.5 457.5 165.8 454.4 165.6ZM451.5 165.9 454.6 166.1 451.8 166.4 448.7 166.2ZM445.8 166.4 448.9 166.6 446 166.9 442.8 166.7ZM439.9 167 443 167.2 440 167.5 436.9 167.3ZM433.8 167.6 436.9 167.8 433.8 168.2 430.7 167.9ZM427.5 168.2 430.7 168.5 427.5 168.8 424.3 168.6ZM421.1 168.9 424.3 169.1 421 169.4 417.8 169.2ZM414.5 169.5 417.7 169.8 414.3 170.1 411.1 169.9ZM407.7 170.2 410.9 170.4 407.4 170.8 404.2 170.6ZM400.7 170.9 403.9 171.1 400.3 171.5 397.1 171.3ZM393.4 171.6 396.7 171.9 393 172.2 389.7 172ZM386 172.4 389.2 172.6 385.4 173 382.1 172.7ZM378.3 173.1 381.5 173.4 377.6 173.8 374.3 173.5ZM370.3 173.9 373.6 174.2 369.5 174.6 366.3 174.3ZM362.1 174.7 365.4 175 361.2 175.4 357.9 175.1ZM353.7 175.5 356.9 175.8 352.6 176.3 349.3 176ZM344.9 176.4 348.2 176.7 343.7 177.2 340.4 176.8ZM335.9 177.3 339.2 177.6 334.5 178.1 331.2 177.8ZM326.5 178.2 329.8 178.5 325 179 321.7 178.7ZM316.8 179.2 320.1 179.5 315.1 180 311.8 179.7ZM306.7 180.2 310 180.5 304.9 181 301.6 180.7ZM296.3 181.2 299.6 181.6 294.3 182.1 291 181.7ZM285.5 182.3 288.8 182.6 283.3 183.2 280 182.8ZM274.3 183.4 277.6 183.8 271.8 184.3 268.5 183.9ZM262.6 184.5 265.9 184.9 259.9 185.5 256.6 185.1ZM250.5 185.7 253.8 186.1 247.6 186.8 244.3 186.3ZM463 165.2 466.1 165.4 463.4 165.7 460.2 165.5ZM457.5 165.8 460.6 166 457.8 166.3 454.6 166.1ZM451.8 166.4 454.9 166.6 452.1 166.8 448.9 166.6ZM446 166.9 449.1 167.1 446.2 167.4 443 167.2ZM440 167.5 443.2 167.7 440.1 168.1 436.9 167.8ZM433.8 168.2 437 168.4 433.9 168.7 430.7 168.5ZM427.5 168.8 430.7 169 427.5 169.3 424.3 169.1ZM421 169.4 424.2 169.7 420.9 170 417.7 169.8ZM414.3 170.1 417.6 170.3 414.1 170.7 410.9 170.4ZM407.4 170.8 410.7 171 407.1 171.4 403.9 171.1ZM400.3 171.5 403.6 171.8 399.9 172.1 396.7 171.9ZM393 172.2 396.2 172.5 392.5 172.9 389.2 172.6ZM385.4 173 388.7 173.3 384.8 173.6 381.5 173.4ZM377.6 173.8 380.9 174 376.9 174.4 373.6 174.2ZM369.5 174.6 372.9 174.9 368.7 175.3 365.4 175ZM361.2 175.4 364.5 175.7 360.3 176.1 356.9 175.8ZM352.6 176.3 355.9 176.6 351.5 177 348.2 176.7ZM343.7 177.2 347.1 177.5 342.5 177.9 339.2 177.6ZM334.5 178.1 337.9 178.4 333.1 178.9 329.8 178.5ZM325 179 328.3 179.4 323.4 179.9 320.1 179.5ZM315.1 180 318.5 180.4 313.4 180.9 310 180.5ZM304.9 181 308.2 181.4 303 181.9 299.6 181.6ZM294.3 182.1 297.6 182.5 292.2 183 288.8 182.6ZM283.3 183.2 286.6 183.6 280.9 184.2 277.6 183.8ZM271.8 184.3 275.1 184.7 269.3 185.3 265.9 184.9ZM259.9 185.5 263.2 185.9 257.1 186.6 253.8 186.1ZM247.6 186.8 250.9 187.2 244.5 187.8 241.2 187.4ZM468.8 165.2 471.9 165.3 469.2 165.6 466.1 165.4ZM463.4 165.7 466.5 165.9 463.7 166.2 460.6 166ZM457.8 166.3 460.9 166.5 458.1 166.8 454.9 166.6ZM452.1 166.8 455.2 167.1 452.3 167.3 449.1 167.1ZM446.2 167.4 449.4 167.7 446.4 168 443.2 167.7ZM440.1 168.1 443.3 168.3 440.3 168.6 437 168.4ZM433.9 168.7 437.1 168.9 434 169.2 430.7 169ZM427.5 169.3 430.8 169.6 427.5 169.9 424.2 169.7ZM420.9 170 424.2 170.2 420.8 170.6 417.6 170.3ZM414.1 170.7 417.4 170.9 413.9 171.3 410.7 171ZM407.1 171.4 410.4 171.6 406.9 172 403.6 171.8ZM399.9 172.1 403.2 172.4 399.6 172.8 396.2 172.5ZM392.5 172.9 395.8 173.1 392 173.5 388.7 173.3ZM384.8 173.6 388.2 173.9 384.2 174.3 380.9 174ZM376.9 174.4 380.3 174.7 376.2 175.1 372.9 174.9ZM368.7 175.3 372.1 175.6 367.9 176 364.5 175.7ZM360.3 176.1 363.6 176.4 359.3 176.9 355.9 176.6ZM351.5 177 354.9 177.3 350.4 177.8 347.1 177.5ZM342.5 177.9 345.9 178.2 341.2 178.7 337.9 178.4ZM333.1 178.9 336.5 179.2 331.7 179.7 328.3 179.4ZM323.4 179.9 326.8 180.2 321.9 180.7 318.5 180.4ZM313.4 180.9 316.8 181.2 311.6 181.8 308.2 181.4ZM303 181.9 306.4 182.3 301 182.8 297.6 182.5ZM292.2 183 295.5 183.4 290 184 286.6 183.6ZM280.9 184.2 284.3 184.5 278.5 185.1 275.1 184.7ZM269.3 185.3 272.6 185.7 266.6 186.4 263.2 185.9ZM257.1 186.6 260.5 187 254.2 187.6 250.9 187.2ZM244.5 187.8 247.8 188.3 241.3 189 238 188.5ZM474.5 165.1 477.7 165.3 475.1 165.5 471.9 165.3ZM469.2 165.6 472.4 165.8 469.7 166.1 466.5 165.9ZM463.7 166.2 466.9 166.4 464.1 166.7 460.9 166.5ZM458.1 166.8 461.3 167 458.4 167.3 455.2 167.1ZM452.3 167.3 455.5 167.6 452.6 167.9 449.4 167.7ZM446.4 168 449.6 168.2 446.6 168.5 443.3 168.3ZM440.3 168.6 443.5 168.8 440.4 169.1 437.1 168.9ZM434 169.2 437.2 169.5 434 169.8 430.8 169.6ZM427.5 169.9 430.8 170.1 427.5 170.5 424.2 170.2ZM420.8 170.6 424.1 170.8 420.7 171.2 417.4 170.9ZM413.9 171.3 417.3 171.5 413.8 171.9 410.4 171.6ZM406.9 172 410.2 172.3 406.6 172.6 403.2 172.4ZM399.6 172.8 402.9 173 399.2 173.4 395.8 173.1ZM392 173.5 395.4 173.8 391.5 174.2 388.2 173.9ZM384.2 174.3 387.6 174.6 383.6 175 380.3 174.7ZM376.2 175.1 379.6 175.4 375.5 175.9 372.1 175.6ZM367.9 176 371.3 176.3 367 176.7 363.6 176.4ZM359.3 176.9 362.7 177.2 358.3 177.6 354.9 177.3ZM350.4 177.8 353.8 178.1 349.3 178.6 345.9 178.2ZM341.2 178.7 344.7 179 339.9 179.5 336.5 179.2ZM331.7 179.7 335.1 180 330.3 180.5 326.8 180.2ZM321.9 180.7 325.3 181.1 320.2 181.6 316.8 181.2ZM311.6 181.8 315.1 182.1 309.8 182.7 306.4 182.3ZM301 182.8 304.4 183.2 299 183.8 295.5 183.4ZM290 184 293.4 184.4 287.7 184.9 284.3 184.5ZM278.5 185.1 281.9 185.5 276 186.2 272.6 185.7ZM266.6 186.4 270 186.8 263.9 187.4 260.5 187ZM254.2 187.6 257.6 188.1 251.2 188.7 247.8 188.3ZM480.3 165 483.5 165.2 480.9 165.4 477.7 165.3ZM475.1 165.5 478.2 165.7 475.6 166 472.4 165.8ZM469.7 166.1 472.9 166.3 470.1 166.6 466.9 166.4ZM464.1 166.7 467.4 166.9 464.5 167.2 461.3 167ZM458.4 167.3 461.7 167.5 458.8 167.8 455.5 167.6ZM452.6 167.9 455.9 168.1 452.9 168.4 449.6 168.2ZM446.6 168.5 449.9 168.7 446.8 169 443.5 168.8ZM440.4 169.1 443.7 169.3 440.5 169.7 437.2 169.5ZM434 169.8 437.3 170 434.1 170.4 430.8 170.1ZM427.5 170.5 430.8 170.7 427.5 171.1 424.1 170.8ZM420.7 171.2 424.1 171.4 420.6 171.8 417.3 171.5ZM413.8 171.9 417.1 172.1 413.6 172.5 410.2 172.3ZM406.6 172.6 410 172.9 406.3 173.3 402.9 173ZM399.2 173.4 402.6 173.7 398.8 174.1 395.4 173.8ZM391.5 174.2 394.9 174.5 391 174.9 387.6 174.6ZM383.6 175 387.1 175.3 383 175.7 379.6 175.4ZM375.5 175.9 378.9 176.1 374.7 176.6 371.3 176.3ZM367 176.7 370.5 177 366.2 177.5 362.7 177.2ZM358.3 177.6 361.8 177.9 357.3 178.4 353.8 178.1ZM349.3 178.6 352.8 178.9 348.1 179.4 344.7 179ZM339.9 179.5 343.4 179.9 338.6 180.4 335.1 180ZM330.3 180.5 333.7 180.9 328.8 181.4 325.3 181.1ZM320.2 181.6 323.7 181.9 318.5 182.5 315.1 182.1ZM309.8 182.7 313.3 183 307.9 183.6 304.4 183.2ZM299 183.8 302.4 184.2 296.9 184.8 293.4 184.4ZM287.7 184.9 291.2 185.4 285.4 186 281.9 185.5ZM276 186.2 279.5 186.6 273.5 187.2 270 186.8ZM263.9 187.4 267.3 187.9 261 188.5 257.6 188.1ZM251.2 188.7 254.6 189.2 248.1 189.9 244.7 189.4ZM486 164.9 489.2 165.1 486.7 165.4 483.5 165.2ZM480.9 165.4 484.1 165.6 481.4 165.9 478.2 165.7ZM475.6 166 478.8 166.2 476.1 166.5 472.9 166.3ZM470.1 166.6 473.4 166.8 470.6 167.1 467.4 166.9ZM464.5 167.2 467.8 167.4 465 167.7 461.7 167.5ZM458.8 167.8 462.1 168 459.1 168.3 455.9 168.1ZM452.9 168.4 456.2 168.6 453.2 168.9 449.9 168.7ZM446.8 169 450.1 169.2 447 169.6 443.7 169.3ZM440.5 169.7 443.9 169.9 440.7 170.2 437.3 170ZM434.1 170.4 437.5 170.6 434.2 170.9 430.8 170.7ZM427.5 171.1 430.8 171.3 427.4 171.7 424.1 171.4ZM420.6 171.8 424 172 420.5 172.4 417.1 172.1ZM413.6 172.5 417 172.8 413.4 173.2 410 172.9ZM406.3 173.3 409.7 173.5 406 173.9 402.6 173.7ZM398.8 174.1 402.2 174.3 398.4 174.7 394.9 174.5ZM391 174.9 394.5 175.2 390.5 175.6 387.1 175.3ZM383 175.7 386.5 176 382.4 176.4 378.9 176.1ZM374.7 176.6 378.2 176.9 374 177.3 370.5 177ZM366.2 177.5 369.7 177.8 365.3 178.3 361.8 177.9ZM357.3 178.4 360.8 178.7 356.3 179.2 352.8 178.9ZM348.1 179.4 351.6 179.7 346.9 180.2 343.4 179.9ZM338.6 180.4 342.1 180.7 337.2 181.2 333.7 180.9ZM328.8 181.4 332.3 181.8 327.2 182.3 323.7 181.9ZM318.5 182.5 322 182.9 316.8 183.4 313.3 183ZM307.9 183.6 311.4 184 306 184.6 302.4 184.2ZM296.9 184.8 300.4 185.2 294.7 185.8 291.2 185.4ZM285.4 186 288.9 186.4 283 187 279.5 186.6ZM273.5 187.2 277 187.7 270.8 188.3 267.3 187.9ZM261 188.5 264.5 189 258.1 189.7 254.6 189.2ZM248.1 189.9 251.6 190.4 244.9 191.1 241.4 190.6ZM491.7 164.8 494.9 165 492.4 165.3 489.2 165.1ZM486.7 165.4 489.9 165.6 487.3 165.8 484.1 165.6ZM481.4 165.9 484.7 166.1 482 166.4 478.8 166.2ZM476.1 166.5 479.4 166.7 476.6 167 473.4 166.8ZM470.6 167.1 473.9 167.3 471.1 167.6 467.8 167.4ZM465 167.7 468.3 167.9 465.4 168.2 462.1 168ZM459.1 168.3 462.5 168.5 459.5 168.8 456.2 168.6ZM453.2 168.9 456.5 169.1 453.5 169.5 450.1 169.2ZM447 169.6 450.4 169.8 447.2 170.1 443.9 169.9ZM440.7 170.2 444.1 170.5 440.8 170.8 437.5 170.6ZM434.2 170.9 437.6 171.2 434.2 171.5 430.8 171.3ZM427.4 171.7 430.9 171.9 427.4 172.3 424 172ZM420.5 172.4 423.9 172.7 420.4 173 417 172.8ZM413.4 173.2 416.8 173.4 413.2 173.8 409.7 173.5ZM406 173.9 409.5 174.2 405.7 174.6 402.2 174.3ZM398.4 174.7 401.9 175 398 175.4 394.5 175.2ZM390.5 175.6 394 175.9 390 176.3 386.5 176ZM382.4 176.4 385.9 176.7 381.7 177.2 378.2 176.9ZM374 177.3 377.5 177.7 373.2 178.1 369.7 177.8ZM365.3 178.3 368.8 178.6 364.3 179.1 360.8 178.7ZM356.3 179.2 359.8 179.6 355.2 180.1 351.6 179.7ZM346.9 180.2 350.5 180.6 345.7 181.1 342.1 180.7ZM337.2 181.2 340.8 181.6 335.8 182.1 332.3 181.8ZM327.2 182.3 330.8 182.7 325.6 183.2 322 182.9ZM316.8 183.4 320.3 183.8 315 184.4 311.4 184ZM306 184.6 309.5 185 303.9 185.6 300.4 185.2ZM294.7 185.8 298.3 186.2 292.5 186.8 288.9 186.4ZM283 187 286.6 187.4 280.5 188.1 277 187.7ZM270.8 188.3 274.4 188.8 268.1 189.4 264.5 189ZM258.1 189.7 261.6 190.1 255.1 190.8 251.6 190.4ZM244.9 191.1 248.4 191.6 241.5 192.3 238 191.8ZM492.4 165.3 495.7 165.5 493.1 165.7 489.9 165.6ZM487.3 165.8 490.6 166 488 166.3 484.7 166.1ZM482 166.4 485.3 166.6 482.6 166.9 479.4 166.7ZM476.6 167 479.9 167.2 477.2 167.5 473.9 167.3ZM471.1 167.6 474.4 167.8 471.6 168.1 468.3 167.9ZM465.4 168.2 468.7 168.4 465.8 168.7 462.5 168.5ZM459.5 168.8 462.9 169 459.9 169.4 456.5 169.1ZM453.5 169.5 456.8 169.7 453.8 170 450.4 169.8ZM447.2 170.1 450.6 170.4 447.5 170.7 444.1 170.5ZM440.8 170.8 444.3 171.1 441 171.4 437.6 171.2ZM434.2 171.5 437.7 171.8 434.3 172.2 430.9 171.9ZM427.4 172.3 430.9 172.5 427.4 172.9 423.9 172.7ZM420.4 173 423.9 173.3 420.3 173.7 416.8 173.4ZM413.2 173.8 416.7 174.1 413 174.5 409.5 174.2ZM405.7 174.6 409.2 174.9 405.4 175.3 401.9 175ZM398 175.4 401.5 175.7 397.5 176.2 394 175.9ZM390 176.3 393.5 176.6 389.4 177.1 385.9 176.7ZM381.7 177.2 385.3 177.5 381 178 377.5 177.7ZM373.2 178.1 376.7 178.4 372.4 178.9 368.8 178.6ZM364.3 179.1 367.9 179.4 363.4 179.9 359.8 179.6ZM355.2 180.1 358.8 180.4 354.1 180.9 350.5 180.6ZM345.7 181.1 349.3 181.4 344.4 182 340.8 181.6ZM335.8 182.1 339.4 182.5 334.4 183.1 330.8 182.7ZM325.6 183.2 329.2 183.6 324 184.2 320.3 183.8ZM315 184.4 318.6 184.8 313.1 185.4 309.5 185ZM303.9 185.6 307.6 186 301.9 186.6 298.3 186.2ZM292.5 186.8 296.1 187.2 290.2 187.9 286.6 187.4ZM280.5 188.1 284.1 188.5 277.9 189.2 274.4 188.8ZM268.1 189.4 271.6 189.9 265.2 190.6 261.6 190.1ZM255.1 190.8 258.6 191.3 251.9 192.1 248.4 191.6ZM241.5 192.3 245.1 192.8 238.1 193.6 234.5 193ZM498.1 165.2 501.4 165.4 498.9 165.7 495.7 165.5ZM493.1 165.7 496.4 165.9 493.8 166.2 490.6 166ZM488 166.3 491.3 166.5 488.6 166.8 485.3 166.6ZM482.6 166.9 486 167.1 483.3 167.4 479.9 167.2ZM477.2 167.5 480.5 167.7 477.8 168 474.4 167.8ZM471.6 168.1 474.9 168.3 472.1 168.6 468.7 168.4ZM465.8 168.7 469.2 168.9 466.3 169.3 462.9 169ZM459.9 169.4 463.3 169.6 460.3 169.9 456.8 169.7ZM453.8 170 457.2 170.3 454.1 170.6 450.6 170.4ZM447.5 170.7 450.9 171 447.7 171.3 444.3 171.1ZM441 171.4 444.5 171.7 441.1 172 437.7 171.8ZM434.3 172.2 437.8 172.4 434.4 172.8 430.9 172.5ZM427.4 172.9 430.9 173.2 427.4 173.6 423.9 173.3ZM420.3 173.7 423.8 174 420.2 174.4 416.7 174.1ZM413 174.5 416.5 174.8 412.7 175.2 409.2 174.9ZM405.4 175.3 408.9 175.6 405 176 401.5 175.7ZM397.5 176.2 401.1 176.5 397.1 176.9 393.5 176.6ZM389.4 177.1 393 177.4 388.9 177.8 385.3 177.5ZM381 178 384.6 178.3 380.3 178.8 376.7 178.4ZM372.4 178.9 376 179.2 371.5 179.7 367.9 179.4ZM363.4 179.9 367 180.2 362.4 180.7 358.8 180.4ZM354.1 180.9 357.7 181.3 352.9 181.8 349.3 181.4ZM344.4 182 348 182.3 343.1 182.9 339.4 182.5ZM334.4 183.1 338 183.4 332.9 184 329.2 183.6ZM324 184.2 327.6 184.6 322.2 185.2 318.6 184.8ZM313.1 185.4 316.8 185.8 311.2 186.4 307.6 186ZM301.9 186.6 305.5 187 299.7 187.7 296.1 187.2ZM290.2 187.9 293.8 188.3 287.8 189 284.1 188.5ZM277.9 189.2 281.6 189.7 275.3 190.4 271.6 189.9ZM265.2 190.6 268.8 191.1 262.3 191.8 258.6 191.3ZM251.9 192.1 255.5 192.6 248.7 193.3 245.1 192.8ZM503.9 165.1 507.1 165.3 504.7 165.6 501.4 165.4ZM498.9 165.7 502.2 165.8 499.7 166.1 496.4 165.9ZM493.8 166.2 497.2 166.4 494.6 166.7 491.3 166.5ZM488.6 166.8 492 167 489.3 167.3 486 167.1ZM483.3 167.4 486.6 167.6 483.9 167.9 480.5 167.7ZM477.8 168 481.1 168.2 478.3 168.5 474.9 168.3ZM472.1 168.6 475.5 168.8 472.6 169.2 469.2 168.9ZM466.3 169.3 469.7 169.5 466.7 169.8 463.3 169.6ZM460.3 169.9 463.7 170.2 460.6 170.5 457.2 170.3ZM454.1 170.6 457.5 170.9 454.4 171.2 450.9 171ZM447.7 171.3 451.2 171.6 448 171.9 444.5 171.7ZM441.1 172 444.7 172.3 441.3 172.7 437.8 172.4ZM434.4 172.8 437.9 173.1 434.4 173.4 430.9 173.2ZM427.4 173.6 430.9 173.8 427.4 174.2 423.8 174ZM420.2 174.4 423.7 174.6 420.1 175.1 416.5 174.8ZM412.7 175.2 416.3 175.5 412.5 175.9 408.9 175.6ZM405 176 408.6 176.3 404.7 176.8 401.1 176.5ZM397.1 176.9 400.7 177.2 396.6 177.7 393 177.4ZM388.9 177.8 392.5 178.1 388.3 178.6 384.6 178.3ZM380.3 178.8 384 179.1 379.6 179.6 376 179.2ZM371.5 179.7 375.2 180.1 370.7 180.6 367 180.2ZM362.4 180.7 366.1 181.1 361.4 181.6 357.7 181.3ZM352.9 181.8 356.6 182.2 351.7 182.7 348 182.3ZM343.1 182.9 346.8 183.3 341.7 183.8 338 183.4ZM332.9 184 336.6 184.4 331.3 185 327.6 184.6ZM322.2 185.2 325.9 185.6 320.5 186.2 316.8 185.8ZM311.2 186.4 314.9 186.8 309.2 187.5 305.5 187ZM299.7 187.7 303.4 188.1 297.5 188.8 293.8 188.3ZM287.8 189 291.5 189.5 285.3 190.2 281.6 189.7ZM275.3 190.4 279 190.9 272.5 191.6 268.8 191.1ZM262.3 191.8 265.9 192.3 259.2 193.1 255.5 192.6ZM248.7 193.3 252.3 193.8 245.3 194.6 241.6 194.1ZM509.5 165 512.8 165.2 510.4 165.5 507.1 165.3ZM504.7 165.6 508 165.8 505.5 166 502.2 165.8ZM499.7 166.1 503 166.3 500.5 166.6 497.2 166.4ZM494.6 166.7 497.9 166.9 495.3 167.2 492 167ZM489.3 167.3 492.7 167.5 490 167.8 486.6 167.6ZM483.9 167.9 487.3 168.1 484.6 168.4 481.1 168.2ZM478.3 168.5 481.8 168.7 478.9 169.1 475.5 168.8ZM472.6 169.2 476.1 169.4 473.1 169.7 469.7 169.5ZM466.7 169.8 470.2 170.1 467.2 170.4 463.7 170.2ZM460.6 170.5 464.1 170.7 461 171.1 457.5 170.9ZM454.4 171.2 457.9 171.4 454.7 171.8 451.2 171.6ZM448 171.9 451.5 172.2 448.2 172.6 444.7 172.3ZM441.3 172.7 444.9 172.9 441.5 173.3 437.9 173.1ZM434.4 173.4 438 173.7 434.5 174.1 430.9 173.8ZM427.4 174.2 431 174.5 427.4 174.9 423.7 174.6ZM420.1 175.1 423.7 175.3 419.9 175.8 416.3 175.5ZM412.5 175.9 416.2 176.2 412.3 176.6 408.6 176.3ZM404.7 176.8 408.4 177.1 404.4 177.5 400.7 177.2ZM396.6 177.7 400.3 178 396.2 178.5 392.5 178.1ZM388.3 178.6 392 178.9 387.7 179.4 384 179.1ZM379.6 179.6 383.3 179.9 378.9 180.4 375.2 180.1ZM370.7 180.6 374.4 180.9 369.8 181.5 366.1 181.1ZM361.4 181.6 365.1 182 360.3 182.5 356.6 182.2ZM351.7 182.7 355.5 183.1 350.5 183.6 346.8 183.3ZM341.7 183.8 345.5 184.2 340.3 184.8 336.6 184.4ZM331.3 185 335.1 185.4 329.7 186 325.9 185.6ZM320.5 186.2 324.2 186.6 318.7 187.3 314.9 186.8ZM309.2 187.5 313 187.9 307.2 188.6 303.4 188.1ZM297.5 188.8 301.3 189.2 295.2 189.9 291.5 189.5ZM285.3 190.2 289 190.6 282.7 191.3 279 190.9ZM272.5 191.6 276.3 192.1 269.7 192.8 265.9 192.3ZM259.2 193.1 262.9 193.6 256 194.4 252.3 193.8ZM245.3 194.6 249 195.2 241.8 196 238.1 195.4ZM515.2 164.9 518.5 165.1 516.1 165.4 512.8 165.2ZM510.4 165.5 513.8 165.7 511.3 166 508 165.8ZM505.5 166 508.9 166.2 506.4 166.5 503 166.3ZM500.5 166.6 503.9 166.8 501.3 167.1 497.9 166.9ZM495.3 167.2 498.7 167.4 496.1 167.7 492.7 167.5ZM490 167.8 493.4 168 490.7 168.3 487.3 168.1ZM484.6 168.4 488 168.6 485.2 169 481.8 168.7ZM478.9 169.1 482.4 169.3 479.5 169.6 476.1 169.4ZM473.1 169.7 476.6 169.9 473.7 170.3 470.2 170.1ZM467.2 170.4 470.7 170.6 467.7 171 464.1 170.7ZM461 171.1 464.6 171.3 461.5 171.7 457.9 171.4ZM454.7 171.8 458.3 172.1 455.1 172.4 451.5 172.2ZM448.2 172.6 451.8 172.8 448.5 173.2 444.9 172.9ZM441.5 173.3 445.1 173.6 441.6 174 438 173.7ZM434.5 174.1 438.1 174.4 434.6 174.8 431 174.5ZM427.4 174.9 431 175.2 427.3 175.6 423.7 175.3ZM419.9 175.8 423.6 176.1 419.8 176.5 416.2 176.2ZM412.3 176.6 416 176.9 412.1 177.4 408.4 177.1ZM404.4 177.5 408.1 177.8 404 178.3 400.3 178ZM396.2 178.5 399.9 178.8 395.7 179.3 392 178.9ZM387.7 179.4 391.4 179.8 387.1 180.3 383.3 179.9ZM378.9 180.4 382.6 180.8 378.1 181.3 374.4 180.9ZM369.8 181.5 373.5 181.8 368.9 182.4 365.1 182ZM360.3 182.5 364.1 182.9 359.2 183.5 355.5 183.1ZM350.5 183.6 354.3 184 349.2 184.6 345.5 184.2ZM340.3 184.8 344.1 185.2 338.9 185.8 335.1 185.4ZM329.7 186 333.5 186.4 328 187.1 324.2 186.6ZM318.7 187.3 322.5 187.7 316.8 188.4 313 187.9ZM307.2 188.6 311 189 305.1 189.7 301.3 189.2ZM295.2 189.9 299 190.4 292.8 191.1 289 190.6ZM282.7 191.3 286.5 191.8 280 192.6 276.3 192.1ZM269.7 192.8 273.4 193.3 266.7 194.1 262.9 193.6ZM256 194.4 259.8 194.9 252.7 195.7 249 195.2ZM241.8 196 245.5 196.6 238.1 197.4 234.4 196.8ZM520.8 164.9 524.2 165 521.8 165.3 518.5 165.1ZM516.1 165.4 519.5 165.6 517.1 165.9 513.8 165.7ZM511.3 166 514.7 166.1 512.3 166.4 508.9 166.2ZM506.4 166.5 509.8 166.7 507.3 167 503.9 166.8ZM501.3 167.1 504.7 167.3 502.2 167.6 498.7 167.4ZM496.1 167.7 499.5 167.9 496.9 168.2 493.4 168ZM490.7 168.3 494.2 168.5 491.5 168.9 488 168.6ZM485.2 169 488.7 169.2 485.9 169.5 482.4 169.3ZM479.5 169.6 483.1 169.8 480.2 170.2 476.6 169.9ZM473.7 170.3 477.2 170.5 474.2 170.9 470.7 170.6ZM467.7 171 471.2 171.2 468.2 171.6 464.6 171.3ZM461.5 171.7 465 171.9 461.9 172.3 458.3 172.1ZM455.1 172.4 458.7 172.7 455.4 173.1 451.8 172.8ZM448.5 173.2 452.1 173.5 448.7 173.9 445.1 173.6ZM441.6 174 445.3 174.3 441.8 174.7 438.1 174.4ZM434.6 174.8 438.3 175.1 434.7 175.5 431 175.2ZM427.3 175.6 431 175.9 427.3 176.4 423.6 176.1ZM419.8 176.5 423.5 176.8 419.7 177.2 416 176.9ZM412.1 177.4 415.8 177.7 411.8 178.2 408.1 177.8ZM404 178.3 407.8 178.6 403.7 179.1 399.9 178.8ZM395.7 179.3 399.5 179.6 395.2 180.1 391.4 179.8ZM387.1 180.3 390.9 180.6 386.4 181.1 382.6 180.8ZM378.1 181.3 381.9 181.6 377.4 182.2 373.5 181.8ZM368.9 182.4 372.7 182.7 367.9 183.3 364.1 182.9ZM359.2 183.5 363.1 183.9 358.1 184.4 354.3 184ZM349.2 184.6 353.1 185 347.9 185.6 344.1 185.2ZM338.9 185.8 342.7 186.2 337.4 186.9 333.5 186.4ZM328 187.1 331.9 187.5 326.3 188.1 322.5 187.7ZM316.8 188.4 320.6 188.8 314.8 189.5 311 189ZM305.1 189.7 308.9 190.2 302.9 190.9 299 190.4ZM292.8 191.1 296.7 191.6 290.3 192.3 286.5 191.8ZM280 192.6 283.9 193.1 277.3 193.9 273.4 193.3ZM266.7 194.1 270.5 194.7 263.6 195.5 259.8 194.9ZM252.7 195.7 256.6 196.3 249.3 197.1 245.5 196.6ZM521.8 165.3 525.2 165.5 522.9 165.8 519.5 165.6ZM517.1 165.9 520.5 166.1 518.1 166.3 514.7 166.1ZM512.3 166.4 515.7 166.6 513.2 166.9 509.8 166.7ZM507.3 167 510.7 167.2 508.2 167.5 504.7 167.3ZM502.2 167.6 505.6 167.8 503 168.1 499.5 167.9ZM496.9 168.2 500.4 168.4 497.7 168.8 494.2 168.5ZM491.5 168.9 495 169.1 492.2 169.4 488.7 169.2ZM485.9 169.5 489.4 169.7 486.6 170.1 483.1 169.8ZM480.2 170.2 483.7 170.4 480.8 170.8 477.2 170.5ZM474.2 170.9 477.8 171.1 474.8 171.5 471.2 171.2ZM468.2 171.6 471.8 171.8 468.7 172.2 465 171.9ZM461.9 172.3 465.5 172.6 462.3 173 458.7 172.7ZM455.4 173.1 459.1 173.3 455.7 173.7 452.1 173.5ZM448.7 173.9 452.4 174.1 449 174.5 445.3 174.3ZM441.8 174.7 445.5 174.9 442 175.4 438.3 175.1ZM434.7 175.5 438.4 175.8 434.8 176.2 431 175.9ZM427.3 176.4 431.1 176.7 427.3 177.1 423.5 176.8ZM419.7 177.2 423.5 177.6 419.6 178 415.8 177.7ZM411.8 178.2 415.6 178.5 411.6 179 407.8 178.6ZM403.7 179.1 407.5 179.4 403.3 179.9 399.5 179.6ZM395.2 180.1 399 180.4 394.7 181 390.9 180.6ZM386.4 181.1 390.3 181.5 385.8 182 381.9 181.6ZM377.4 182.2 381.2 182.6 376.5 183.1 372.7 182.7ZM367.9 183.3 371.8 183.7 366.9 184.2 363.1 183.9ZM358.1 184.4 362 184.8 357 185.4 353.1 185ZM347.9 185.6 351.8 186 346.6 186.7 342.7 186.2ZM337.4 186.9 341.3 187.3 335.8 187.9 331.9 187.5ZM326.3 188.1 330.2 188.6 324.5 189.3 320.6 188.8ZM314.8 189.5 318.7 190 312.8 190.7 308.9 190.2ZM302.9 190.9 306.8 191.4 300.6 192.1 296.7 191.6ZM290.3 192.3 294.3 192.9 287.8 193.6 283.9 193.1ZM277.3 193.9 281.2 194.4 274.4 195.2 270.5 194.7ZM263.6 195.5 267.5 196 260.4 196.9 256.6 196.3ZM249.3 197.1 253.2 197.7 245.8 198.6 241.9 198ZM527.5 165.2 530.9 165.4 528.6 165.7 525.2 165.5ZM522.9 165.8 526.3 166 523.9 166.3 520.5 166.1ZM518.1 166.3 521.5 166.5 519.1 166.8 515.7 166.6ZM513.2 166.9 516.7 167.1 514.2 167.4 510.7 167.2ZM508.2 167.5 511.7 167.7 509.1 168 505.6 167.8ZM503 168.1 506.5 168.3 503.9 168.7 500.4 168.4ZM497.7 168.8 501.2 169 498.5 169.3 495 169.1ZM492.2 169.4 495.8 169.6 493 170 489.4 169.7ZM486.6 170.1 490.2 170.3 487.3 170.7 483.7 170.4ZM480.8 170.8 484.4 171 481.5 171.4 477.8 171.1ZM474.8 171.5 478.5 171.7 475.4 172.1 471.8 171.8ZM468.7 172.2 472.3 172.5 469.2 172.8 465.5 172.6ZM462.3 173 466 173.2 462.7 173.6 459.1 173.3ZM455.7 173.7 459.5 174 456.1 174.4 452.4 174.1ZM449 174.5 452.7 174.8 449.3 175.2 445.5 174.9ZM442 175.4 445.7 175.6 442.2 176.1 438.4 175.8ZM434.8 176.2 438.5 176.5 434.8 177 431.1 176.7ZM427.3 177.1 431.1 177.4 427.3 177.9 423.5 177.6ZM419.6 178 423.4 178.3 419.4 178.8 415.6 178.5ZM411.6 179 415.4 179.3 411.3 179.8 407.5 179.4ZM403.3 179.9 407.1 180.3 402.9 180.8 399 180.4ZM394.7 181 398.6 181.3 394.2 181.8 390.3 181.5ZM385.8 182 389.7 182.4 385.1 182.9 381.2 182.6ZM376.5 183.1 380.5 183.5 375.7 184.1 371.8 183.7ZM366.9 184.2 370.9 184.6 365.9 185.2 362 184.8ZM357 185.4 360.9 185.8 355.8 186.5 351.8 186ZM346.6 186.7 350.5 187.1 345.2 187.7 341.3 187.3ZM335.8 187.9 339.8 188.4 334.2 189 330.2 188.6ZM324.5 189.3 328.5 189.7 322.7 190.4 318.7 190ZM312.8 190.7 316.8 191.1 310.7 191.9 306.8 191.4ZM300.6 192.1 304.5 192.6 298.2 193.4 294.3 192.9ZM287.8 193.6 291.7 194.1 285.1 194.9 281.2 194.4ZM274.4 195.2 278.4 195.8 271.4 196.6 267.5 196ZM260.4 196.9 264.4 197.4 257.1 198.3 253.2 197.7ZM245.8 198.6 249.7 199.2 242.1 200.1 238.2 199.5ZM533.2 165.1 536.6 165.3 534.3 165.6 530.9 165.4ZM528.6 165.7 532 165.9 529.7 166.2 526.3 166ZM523.9 166.3 527.4 166.5 525 166.7 521.5 166.5ZM519.1 166.8 522.6 167 520.2 167.3 516.7 167.1ZM514.2 167.4 517.7 167.6 515.2 167.9 511.7 167.7ZM509.1 168 512.6 168.2 510.1 168.6 506.5 168.3ZM503.9 168.7 507.5 168.9 504.8 169.2 501.2 169ZM498.5 169.3 502.1 169.5 499.4 169.9 495.8 169.6ZM493 170 496.6 170.2 493.8 170.5 490.2 170.3ZM487.3 170.7 490.9 170.9 488.1 171.2 484.4 171ZM481.5 171.4 485.1 171.6 482.1 172 478.5 171.7ZM475.4 172.1 479.1 172.3 476 172.7 472.3 172.5ZM469.2 172.8 472.9 173.1 469.7 173.5 466 173.2ZM462.7 173.6 466.5 173.9 463.2 174.3 459.5 174ZM456.1 174.4 459.9 174.7 456.5 175.1 452.7 174.8ZM449.3 175.2 453 175.5 449.5 175.9 445.7 175.6ZM442.2 176.1 446 176.4 442.4 176.8 438.5 176.5ZM434.8 177 438.7 177.3 434.9 177.7 431.1 177.4ZM427.3 177.9 431.1 178.2 427.3 178.7 423.4 178.3ZM419.4 178.8 423.3 179.1 419.3 179.6 415.4 179.3ZM411.3 179.8 415.2 180.1 411.1 180.6 407.1 180.3ZM402.9 180.8 406.8 181.1 402.5 181.7 398.6 181.3ZM394.2 181.8 398.1 182.2 393.6 182.8 389.7 182.4ZM385.1 182.9 389.1 183.3 384.4 183.9 380.5 183.5ZM375.7 184.1 379.7 184.5 374.9 185 370.9 184.6ZM365.9 185.2 369.9 185.6 364.9 186.3 360.9 185.8ZM355.8 186.5 359.8 186.9 354.6 187.5 350.5 187.1ZM345.2 187.7 349.2 188.2 343.8 188.8 339.8 188.4ZM334.2 189 338.2 189.5 332.5 190.2 328.5 189.7ZM322.7 190.4 326.7 190.9 320.8 191.6 316.8 191.1ZM310.7 191.9 314.7 192.4 308.6 193.1 304.5 192.6ZM298.2 193.4 302.2 193.9 295.8 194.7 291.7 194.1ZM285.1 194.9 289.1 195.5 282.4 196.3 278.4 195.8ZM271.4 196.6 275.4 197.2 268.4 198 264.4 197.4ZM257.1 198.3 261.1 198.9 253.6 199.8 249.7 199.2ZM242.1 200.1 246 200.7 238.2 201.7 234.3 201.1ZM538.8 165.1 542.2 165.2 540 165.5 536.6 165.3ZM534.3 165.6 537.7 165.8 535.5 166.1 532 165.9ZM529.7 166.2 533.2 166.4 530.9 166.6 527.4 166.5ZM525 166.7 528.5 166.9 526.1 167.2 522.6 167ZM520.2 167.3 523.7 167.5 521.2 167.8 517.7 167.6ZM515.2 167.9 518.7 168.1 516.2 168.5 512.6 168.2ZM510.1 168.6 513.6 168.8 511 169.1 507.5 168.9ZM504.8 169.2 508.4 169.4 505.7 169.8 502.1 169.5ZM499.4 169.9 503 170.1 500.3 170.4 496.6 170.2ZM493.8 170.5 497.5 170.8 494.6 171.1 490.9 170.9ZM488.1 171.2 491.7 171.5 488.8 171.9 485.1 171.6ZM482.1 172 485.8 172.2 482.8 172.6 479.1 172.3ZM476 172.7 479.7 173 476.6 173.4 472.9 173.1ZM469.7 173.5 473.5 173.7 470.3 174.1 466.5 173.9ZM463.2 174.3 467 174.6 463.7 175 459.9 174.7ZM456.5 175.1 460.3 175.4 456.9 175.8 453 175.5ZM449.5 175.9 453.4 176.2 449.8 176.7 446 176.4ZM442.4 176.8 446.2 177.1 442.6 177.6 438.7 177.3ZM434.9 177.7 438.8 178 435 178.5 431.1 178.2ZM427.3 178.7 431.2 179 427.2 179.5 423.3 179.1ZM419.3 179.6 423.2 180 419.2 180.5 415.2 180.1ZM411.1 180.6 415 181 410.8 181.5 406.8 181.1ZM402.5 181.7 406.5 182 402.1 182.6 398.1 182.2ZM393.6 182.8 397.6 183.1 393.1 183.7 389.1 183.3ZM384.4 183.9 388.4 184.3 383.7 184.9 379.7 184.5ZM374.9 185 378.9 185.4 374 186.1 369.9 185.6ZM364.9 186.3 369 186.7 363.8 187.3 359.8 186.9ZM354.6 187.5 358.6 188 353.3 188.6 349.2 188.2ZM343.8 188.8 347.8 189.3 342.3 190 338.2 189.5ZM332.5 190.2 336.6 190.7 330.8 191.4 326.7 190.9ZM320.8 191.6 324.9 192.1 318.8 192.9 314.7 192.4ZM308.6 193.1 312.6 193.6 306.3 194.4 302.2 193.9ZM295.8 194.7 299.8 195.2 293.2 196 289.1 195.5ZM282.4 196.3 286.4 196.9 279.5 197.7 275.4 197.2ZM268.4 198 272.4 198.6 265.1 199.5 261.1 198.9ZM253.6 199.8 257.7 200.4 250.1 201.4 246 200.7ZM544.4 165 547.8 165.2 545.6 165.4 542.2 165.2ZM540 165.5 543.4 165.7 541.2 166 537.7 165.8ZM535.5 166.1 539 166.3 536.7 166.6 533.2 166.4ZM530.9 166.6 534.4 166.8 532 167.1 528.5 166.9ZM526.1 167.2 529.7 167.4 527.2 167.7 523.7 167.5ZM521.2 167.8 524.8 168.1 522.3 168.4 518.7 168.1ZM516.2 168.5 519.8 168.7 517.3 169 513.6 168.8ZM511 169.1 514.7 169.3 512 169.7 508.4 169.4ZM505.7 169.8 509.4 170 506.7 170.3 503 170.1ZM500.3 170.4 503.9 170.7 501.1 171 497.5 170.8ZM494.6 171.1 498.3 171.4 495.4 171.7 491.7 171.5ZM488.8 171.9 492.5 172.1 489.6 172.5 485.8 172.2ZM482.8 172.6 486.6 172.9 483.5 173.2 479.7 173ZM476.6 173.4 480.4 173.6 477.3 174 473.5 173.7ZM470.3 174.1 474.1 174.4 470.8 174.8 467 174.6ZM463.7 175 467.5 175.2 464.1 175.7 460.3 175.4ZM456.9 175.8 460.7 176.1 457.3 176.5 453.4 176.2ZM449.8 176.7 453.7 177 450.1 177.4 446.2 177.1ZM442.6 177.6 446.5 177.9 442.8 178.4 438.8 178ZM435 178.5 439 178.8 435.1 179.3 431.2 179ZM427.2 179.5 431.2 179.8 427.2 180.3 423.2 180ZM419.2 180.5 423.1 180.8 419 181.3 415 181ZM410.8 181.5 414.8 181.9 410.5 182.4 406.5 182ZM402.1 182.6 406.1 183 401.7 183.5 397.6 183.1ZM393.1 183.7 397.1 184.1 392.5 184.7 388.4 184.3ZM383.7 184.9 387.8 185.3 383 185.9 378.9 185.4ZM374 186.1 378.1 186.5 373 187.1 369 186.7ZM363.8 187.3 367.9 187.7 362.7 188.4 358.6 188ZM353.3 188.6 357.4 189.1 352 189.8 347.8 189.3ZM342.3 190 346.4 190.5 340.7 191.2 336.6 190.7ZM330.8 191.4 334.9 191.9 329 192.6 324.9 192.1ZM318.8 192.9 323 193.4 316.8 194.2 312.6 193.6ZM306.3 194.4 310.5 195 304 195.8 299.8 195.2ZM293.2 196 297.4 196.6 290.6 197.5 286.4 196.9ZM279.5 197.7 283.6 198.3 276.5 199.2 272.4 198.6ZM265.1 199.5 269.2 200.1 261.8 201.1 257.7 200.4ZM250.1 201.4 254.1 202 246.3 203 242.2 202.4ZM549.9 164.9 553.4 165.1 551.3 165.4 547.8 165.2ZM545.6 165.4 549.1 165.6 546.9 165.9 543.4 165.7ZM541.2 166 544.7 166.2 542.5 166.5 539 166.3ZM536.7 166.6 540.2 166.8 537.9 167.1 534.4 166.8ZM532 167.1 535.6 167.3 533.2 167.6 529.7 167.4ZM527.2 167.7 530.8 168 528.4 168.3 524.8 168.1ZM522.3 168.4 525.9 168.6 523.4 168.9 519.8 168.7ZM517.3 169 520.9 169.2 518.3 169.5 514.7 169.3ZM512 169.7 515.7 169.9 513.1 170.2 509.4 170ZM506.7 170.3 510.4 170.6 507.6 170.9 503.9 170.7ZM501.1 171 504.9 171.3 502.1 171.6 498.3 171.4ZM495.4 171.7 499.2 172 496.3 172.4 492.5 172.1ZM489.6 172.5 493.4 172.7 490.4 173.1 486.6 172.9ZM483.5 173.2 487.3 173.5 484.2 173.9 480.4 173.6ZM477.3 174 481.1 174.3 477.9 174.7 474.1 174.4ZM470.8 174.8 474.7 175.1 471.4 175.5 467.5 175.2ZM464.1 175.7 468 176 464.6 176.4 460.7 176.1ZM457.3 176.5 461.2 176.8 457.7 177.3 453.7 177ZM450.1 177.4 454.1 177.7 450.4 178.2 446.5 177.9ZM442.8 178.4 446.7 178.7 443 179.2 439 178.8ZM435.1 179.3 439.1 179.6 435.2 180.1 431.2 179.8ZM427.2 180.3 431.2 180.7 427.2 181.2 423.1 180.8ZM419 181.3 423.1 181.7 418.9 182.2 414.8 181.9ZM410.5 182.4 414.6 182.8 410.2 183.3 406.1 183ZM401.7 183.5 405.8 183.9 401.2 184.5 397.1 184.1ZM392.5 184.7 396.6 185.1 391.9 185.7 387.8 185.3ZM383 185.9 387.1 186.3 382.2 186.9 378.1 186.5ZM373 187.1 377.2 187.5 372.1 188.2 367.9 187.7ZM362.7 188.4 366.9 188.9 361.6 189.5 357.4 189.1ZM352 189.8 356.1 190.2 350.6 190.9 346.4 190.5ZM340.7 191.2 344.9 191.7 339.1 192.4 334.9 191.9ZM329 192.6 333.2 193.1 327.2 193.9 323 193.4ZM316.8 194.2 321 194.7 314.7 195.5 310.5 195ZM304 195.8 308.2 196.3 301.6 197.2 297.4 196.6ZM290.6 197.5 294.8 198 287.8 198.9 283.6 198.3ZM276.5 199.2 280.7 199.8 273.4 200.8 269.2 200.1ZM261.8 201.1 266 201.7 258.3 202.7 254.1 202ZM246.3 203 250.4 203.7 242.4 204.7 238.3 204ZM551.3 165.4 554.8 165.5 552.6 165.8 549.1 165.6ZM546.9 165.9 550.5 166.1 548.3 166.4 544.7 166.2ZM542.5 166.5 546 166.7 543.8 167 540.2 166.8ZM537.9 167.1 541.5 167.3 539.2 167.6 535.6 167.3ZM533.2 167.6 536.8 167.9 534.4 168.2 530.8 168ZM528.4 168.3 532 168.5 529.6 168.8 525.9 168.6ZM523.4 168.9 527.1 169.1 524.6 169.4 520.9 169.2ZM518.3 169.5 522 169.8 519.4 170.1 515.7 169.9ZM513.1 170.2 516.8 170.5 514.1 170.8 510.4 170.6ZM507.6 170.9 511.4 171.2 508.6 171.5 504.9 171.3ZM502.1 171.6 505.8 171.9 503 172.2 499.2 172ZM496.3 172.4 500.1 172.6 497.2 173 493.4 172.7ZM490.4 173.1 494.2 173.4 491.2 173.8 487.3 173.5ZM484.2 173.9 488.1 174.2 485 174.6 481.1 174.3ZM477.9 174.7 481.8 175 478.6 175.4 474.7 175.1ZM471.4 175.5 475.3 175.8 472 176.3 468 176ZM464.6 176.4 468.6 176.7 465.1 177.1 461.2 176.8ZM457.7 177.3 461.6 177.6 458.1 178.1 454.1 177.7ZM450.4 178.2 454.4 178.5 450.7 179 446.7 178.7ZM443 179.2 447 179.5 443.2 180 439.1 179.6ZM435.2 180.1 439.3 180.5 435.3 181 431.2 180.7ZM427.2 181.2 431.3 181.5 427.2 182.1 423.1 181.7ZM418.9 182.2 423 182.6 418.7 183.2 414.6 182.8ZM410.2 183.3 414.4 183.7 409.9 184.3 405.8 183.9ZM401.2 184.5 405.4 184.9 400.8 185.5 396.6 185.1ZM391.9 185.7 396.1 186.1 391.3 186.7 387.1 186.3ZM382.2 186.9 386.4 187.3 381.4 188 377.2 187.5ZM372.1 188.2 376.3 188.6 371.1 189.3 366.9 188.9ZM361.6 189.5 365.8 190 360.4 190.7 356.1 190.2ZM350.6 190.9 354.8 191.4 349.2 192.2 344.9 191.7ZM339.1 192.4 343.4 192.9 337.5 193.7 333.2 193.1ZM327.2 193.9 331.4 194.5 325.3 195.3 321 194.7ZM314.7 195.5 318.9 196.1 312.4 196.9 308.2 196.3ZM301.6 197.2 305.8 197.8 299 198.6 294.8 198ZM287.8 198.9 292.1 199.5 285 200.5 280.7 199.8ZM273.4 200.8 277.7 201.4 270.2 202.4 266 201.7ZM258.3 202.7 262.5 203.4 254.7 204.4 250.4 203.7ZM242.4 204.7 246.6 205.4 238.3 206.5 234.1 205.8ZM556.9 165.3 560.4 165.5 558.3 165.7 554.8 165.5ZM552.6 165.8 556.2 166 554 166.3 550.5 166.1ZM548.3 166.4 551.8 166.6 549.6 166.9 546 166.7ZM543.8 167 547.4 167.2 545.1 167.5 541.5 167.3ZM539.2 167.6 542.8 167.8 540.5 168.1 536.8 167.9ZM534.4 168.2 538.1 168.4 535.7 168.7 532 168.5ZM529.6 168.8 533.3 169 530.8 169.3 527.1 169.1ZM524.6 169.4 528.3 169.7 525.7 170 522 169.8ZM519.4 170.1 523.2 170.3 520.5 170.7 516.8 170.5ZM514.1 170.8 517.9 171 515.2 171.4 511.4 171.2ZM508.6 171.5 512.4 171.8 509.7 172.1 505.8 171.9ZM503 172.2 506.8 172.5 504 172.9 500.1 172.6ZM497.2 173 501 173.3 498.1 173.6 494.2 173.4ZM491.2 173.8 495.1 174 492 174.4 488.1 174.2ZM485 174.6 488.9 174.9 485.7 175.3 481.8 175ZM478.6 175.4 482.5 175.7 479.3 176.1 475.3 175.8ZM472 176.3 476 176.6 472.6 177 468.6 176.7ZM465.1 177.1 469.2 177.4 465.7 177.9 461.6 177.6ZM458.1 178.1 462.1 178.4 458.5 178.9 454.4 178.5ZM450.7 179 454.8 179.3 451.1 179.8 447 179.5ZM443.2 180 447.3 180.3 443.4 180.8 439.3 180.5ZM435.3 181 439.4 181.4 435.4 181.9 431.3 181.5ZM427.2 182.1 431.3 182.4 427.1 183 423 182.6ZM418.7 183.2 422.9 183.5 418.5 184.1 414.4 183.7ZM409.9 184.3 414.1 184.7 409.6 185.3 405.4 184.9ZM400.8 185.5 405 185.9 400.3 186.5 396.1 186.1ZM391.3 186.7 395.5 187.1 390.7 187.8 386.4 187.3ZM381.4 188 385.7 188.4 380.6 189.1 376.3 188.6ZM371.1 189.3 375.4 189.8 370.1 190.5 365.8 190ZM360.4 190.7 364.7 191.2 359.2 191.9 354.8 191.4ZM349.2 192.2 353.5 192.7 347.7 193.4 343.4 192.9ZM337.5 193.7 341.8 194.2 335.8 195 331.4 194.5ZM325.3 195.3 329.6 195.8 323.3 196.6 318.9 196.1ZM312.4 196.9 316.8 197.5 310.2 198.4 305.8 197.8ZM299 198.6 303.4 199.3 296.4 200.2 292.1 199.5ZM285 200.5 289.3 201.1 282 202.1 277.7 201.4ZM270.2 202.4 274.5 203 266.8 204.1 262.5 203.4ZM254.7 204.4 258.9 205.1 250.9 206.2 246.6 205.4ZM562.4 165.2 566 165.4 563.9 165.6 560.4 165.5ZM558.3 165.7 561.8 165.9 559.7 166.2 556.2 166ZM554 166.3 557.6 166.5 555.4 166.8 551.8 166.6ZM549.6 166.9 553.2 167.1 551 167.4 547.4 167.2ZM545.1 167.5 548.7 167.7 546.5 168 542.8 167.8ZM540.5 168.1 544.1 168.3 541.8 168.6 538.1 168.4ZM535.7 168.7 539.4 168.9 537 169.2 533.3 169ZM530.8 169.3 534.5 169.6 532 169.9 528.3 169.7ZM525.7 170 529.5 170.2 526.9 170.6 523.2 170.3ZM520.5 170.7 524.3 170.9 521.7 171.3 517.9 171ZM515.2 171.4 519 171.6 516.3 172 512.4 171.8ZM509.7 172.1 513.5 172.4 510.7 172.8 506.8 172.5ZM504 172.9 507.8 173.1 504.9 173.5 501 173.3ZM498.1 173.6 502 173.9 499 174.3 495.1 174ZM492 174.4 496 174.7 492.9 175.1 488.9 174.9ZM485.7 175.3 489.7 175.6 486.5 176 482.5 175.7ZM479.3 176.1 483.3 176.4 480 176.9 476 176.6ZM472.6 177 476.6 177.3 473.2 177.8 469.2 177.4ZM465.7 177.9 469.7 178.2 466.2 178.7 462.1 178.4ZM458.5 178.9 462.6 179.2 458.9 179.7 454.8 179.3ZM451.1 179.8 455.2 180.2 451.4 180.7 447.3 180.3ZM443.4 180.8 447.5 181.2 443.6 181.7 439.4 181.4ZM435.4 181.9 439.6 182.3 435.5 182.8 431.3 182.4ZM427.1 183 431.3 183.4 427.1 183.9 422.9 183.5ZM418.5 184.1 422.8 184.5 418.4 185.1 414.1 184.7ZM409.6 185.3 413.9 185.7 409.3 186.3 405 185.9ZM400.3 186.5 404.6 186.9 399.8 187.6 395.5 187.1ZM390.7 187.8 395 188.2 390 188.9 385.7 188.4ZM380.6 189.1 384.9 189.6 379.7 190.2 375.4 189.8ZM370.1 190.5 374.5 191 369 191.7 364.7 191.2ZM359.2 191.9 363.5 192.4 357.9 193.2 353.5 192.7ZM347.7 193.4 352.1 193.9 346.2 194.7 341.8 194.2ZM335.8 195 340.2 195.5 334 196.4 329.6 195.8ZM323.3 196.6 327.7 197.2 321.2 198.1 316.8 197.5ZM310.2 198.4 314.6 199 307.8 199.9 303.4 199.3ZM296.4 200.2 300.8 200.8 293.7 201.7 289.3 201.1ZM282 202.1 286.4 202.7 278.9 203.7 274.5 203ZM266.8 204.1 271.2 204.8 263.3 205.8 258.9 205.1ZM250.9 206.2 255.2 206.9 246.9 208 242.6 207.2ZM568 165.1 571.5 165.3 569.5 165.6 566 165.4ZM563.9 165.6 567.5 165.8 565.4 166.1 561.8 165.9ZM559.7 166.2 563.3 166.4 561.2 166.7 557.6 166.5ZM555.4 166.8 559.1 167 556.9 167.3 553.2 167.1ZM551 167.4 554.7 167.6 552.4 167.9 548.7 167.7ZM546.5 168 550.2 168.2 547.8 168.5 544.1 168.3ZM541.8 168.6 545.5 168.8 543.1 169.1 539.4 168.9ZM537 169.2 540.7 169.5 538.3 169.8 534.5 169.6ZM532 169.9 535.8 170.1 533.3 170.5 529.5 170.2ZM526.9 170.6 530.8 170.8 528.2 171.2 524.3 170.9ZM521.7 171.3 525.5 171.5 522.9 171.9 519 171.6ZM516.3 172 520.2 172.3 517.4 172.6 513.5 172.4ZM510.7 172.8 514.6 173 511.8 173.4 507.8 173.1ZM504.9 173.5 508.9 173.8 506 174.2 502 173.9ZM499 174.3 503 174.6 500 175 496 174.7ZM492.9 175.1 496.9 175.4 493.8 175.8 489.7 175.6ZM486.5 176 490.6 176.3 487.3 176.7 483.3 176.4ZM480 176.9 484.1 177.2 480.7 177.6 476.6 177.3ZM473.2 177.8 477.3 178.1 473.9 178.5 469.7 178.2ZM466.2 178.7 470.3 179 466.7 179.5 462.6 179.2ZM458.9 179.7 463.1 180 459.4 180.5 455.2 180.2ZM451.4 180.7 455.6 181 451.8 181.5 447.5 181.2ZM443.6 181.7 447.8 182.1 443.8 182.6 439.6 182.3ZM435.5 182.8 439.8 183.2 435.6 183.7 431.3 183.4ZM427.1 183.9 431.4 184.3 427.1 184.9 422.8 184.5ZM418.4 185.1 422.7 185.5 418.2 186.1 413.9 185.7ZM409.3 186.3 413.6 186.7 409 187.4 404.6 186.9ZM399.8 187.6 404.2 188 399.3 188.7 395 188.2ZM390 188.9 394.4 189.3 389.3 190 384.9 189.6ZM379.7 190.2 384.2 190.7 378.9 191.4 374.5 191ZM369 191.7 373.5 192.2 368 192.9 363.5 192.4ZM357.9 193.2 362.3 193.7 356.5 194.5 352.1 193.9ZM346.2 194.7 350.7 195.3 344.6 196.1 340.2 195.5ZM334 196.4 338.4 196.9 332.1 197.8 327.7 197.2ZM321.2 198.1 325.7 198.7 319 199.6 314.6 199ZM307.8 199.9 312.2 200.5 305.3 201.4 300.8 200.8ZM293.7 201.7 298.1 202.4 290.8 203.4 286.4 202.7ZM278.9 203.7 283.3 204.4 275.6 205.5 271.2 204.8ZM263.3 205.8 267.7 206.5 259.6 207.6 255.2 206.9ZM246.9 208 251.3 208.8 242.8 209.9 238.4 209.1ZM573.5 165 577.1 165.2 575.1 165.5 571.5 165.3ZM569.5 165.6 573.1 165.7 571.1 166 567.5 165.8ZM565.4 166.1 569 166.3 567 166.6 563.3 166.4ZM561.2 166.7 564.9 166.9 562.7 167.2 559.1 167ZM556.9 167.3 560.6 167.5 558.4 167.8 554.7 167.6ZM552.4 167.9 556.1 168.1 553.9 168.4 550.2 168.2ZM547.8 168.5 551.6 168.7 549.3 169 545.5 168.8ZM543.1 169.1 546.9 169.4 544.5 169.7 540.7 169.5ZM538.3 169.8 542.1 170 539.6 170.4 535.8 170.1ZM533.3 170.5 537.1 170.7 534.6 171.1 530.8 170.8ZM528.2 171.2 532 171.4 529.4 171.8 525.5 171.5ZM522.9 171.9 526.8 172.1 524.1 172.5 520.2 172.3ZM517.4 172.6 521.3 172.9 518.6 173.3 514.6 173ZM511.8 173.4 515.7 173.7 512.9 174.1 508.9 173.8ZM506 174.2 510 174.5 507 174.9 503 174.6ZM500 175 504 175.3 500.9 175.7 496.9 175.4ZM493.8 175.8 497.8 176.1 494.7 176.6 490.6 176.3ZM487.3 176.7 491.4 177 488.2 177.5 484.1 177.2ZM480.7 177.6 484.8 177.9 481.5 178.4 477.3 178.1ZM473.9 178.5 478 178.9 474.5 179.4 470.3 179ZM466.7 179.5 470.9 179.8 467.3 180.4 463.1 180ZM459.4 180.5 463.6 180.9 459.9 181.4 455.6 181ZM451.8 181.5 456 181.9 452.1 182.4 447.8 182.1ZM443.8 182.6 448.1 183 444.1 183.6 439.8 183.2ZM435.6 183.7 439.9 184.1 435.7 184.7 431.4 184.3ZM427.1 184.9 431.4 185.3 427.1 185.9 422.7 185.5ZM418.2 186.1 422.6 186.5 418 187.2 413.6 186.7ZM409 187.4 413.4 187.8 408.6 188.5 404.2 188ZM399.3 188.7 403.8 189.1 398.8 189.8 394.4 189.3ZM389.3 190 393.8 190.5 388.6 191.2 384.2 190.7ZM378.9 191.4 383.4 191.9 378 192.7 373.5 192.2ZM368 192.9 372.5 193.4 366.8 194.2 362.3 193.7ZM356.5 194.5 361.1 195 355.2 195.8 350.7 195.3ZM344.6 196.1 349.1 196.7 343 197.5 338.4 196.9ZM332.1 197.8 336.7 198.4 330.2 199.3 325.7 198.7ZM319 199.6 323.6 200.2 316.8 201.1 312.2 200.5ZM305.3 201.4 309.8 202.1 302.7 203.1 298.1 202.4ZM290.8 203.4 295.4 204.1 287.9 205.1 283.3 204.4ZM275.6 205.5 280.2 206.2 272.3 207.3 267.7 206.5ZM259.6 207.6 264.1 208.4 255.8 209.5 251.3 208.8ZM242.8 209.9 247.2 210.7 238.4 211.9 234 211.1ZM579 164.9 582.6 165.1 580.7 165.4 577.1 165.2ZM575.1 165.5 578.7 165.7 576.7 165.9 573.1 165.7ZM571.1 166 574.7 166.2 572.7 166.5 569 166.3ZM567 166.6 570.6 166.8 568.5 167.1 564.9 166.9ZM562.7 167.2 566.4 167.4 564.3 167.7 560.6 167.5ZM558.4 167.8 562.1 168 559.9 168.3 556.1 168.1ZM553.9 168.4 557.6 168.6 555.4 168.9 551.6 168.7ZM549.3 169 553.1 169.3 550.7 169.6 546.9 169.4ZM544.5 169.7 548.4 169.9 545.9 170.3 542.1 170ZM539.6 170.4 543.5 170.6 541 171 537.1 170.7ZM534.6 171.1 538.5 171.3 535.9 171.7 532 171.4ZM529.4 171.8 533.3 172 530.7 172.4 526.8 172.1ZM524.1 172.5 528 172.8 525.3 173.2 521.3 172.9ZM518.6 173.3 522.6 173.5 519.8 173.9 515.7 173.7ZM512.9 174.1 516.9 174.3 514 174.7 510 174.5ZM507 174.9 511.1 175.2 508.1 175.6 504 175.3ZM500.9 175.7 505 176 501.9 176.4 497.8 176.1ZM494.7 176.6 498.8 176.9 495.6 177.3 491.4 177ZM488.2 177.5 492.3 177.8 489 178.2 484.8 177.9ZM481.5 178.4 485.7 178.7 482.2 179.2 478 178.9ZM474.5 179.4 478.7 179.7 475.2 180.2 470.9 179.8ZM467.3 180.4 471.6 180.7 467.9 181.2 463.6 180.9ZM459.9 181.4 464.1 181.7 460.3 182.3 456 181.9ZM452.1 182.4 456.4 182.8 452.5 183.4 448.1 183ZM444.1 183.6 448.4 183.9 444.3 184.5 439.9 184.1ZM435.7 184.7 440.1 185.1 435.8 185.7 431.4 185.3ZM427.1 185.9 431.5 186.3 427 187 422.6 186.5ZM418 187.2 422.5 187.6 417.8 188.2 413.4 187.8ZM408.6 188.5 413.1 188.9 408.3 189.6 403.8 189.1ZM398.8 189.8 403.3 190.3 398.3 191 393.8 190.5ZM388.6 191.2 393.2 191.7 387.9 192.4 383.4 191.9ZM378 192.7 382.5 193.2 377 194 372.5 193.4ZM366.8 194.2 371.4 194.8 365.6 195.6 361.1 195ZM355.2 195.8 359.8 196.4 353.7 197.2 349.1 196.7ZM343 197.5 347.6 198.1 341.3 199 336.7 198.4ZM330.2 199.3 334.8 199.9 328.2 200.8 323.6 200.2ZM316.8 201.1 321.4 201.8 314.4 202.8 309.8 202.1ZM302.7 203.1 307.3 203.8 300 204.8 295.4 204.1ZM287.9 205.1 292.5 205.8 284.8 206.9 280.2 206.2ZM272.3 207.3 276.9 208 268.7 209.2 264.1 208.4ZM255.8 209.5 260.4 210.3 251.8 211.5 247.2 210.7ZM580.7 165.4 584.3 165.6 582.3 165.9 578.7 165.7ZM576.7 165.9 580.4 166.1 578.4 166.4 574.7 166.2ZM572.7 166.5 576.4 166.7 574.3 167 570.6 166.8ZM568.5 167.1 572.3 167.3 570.2 167.6 566.4 167.4ZM564.3 167.7 568 167.9 565.9 168.2 562.1 168ZM559.9 168.3 563.7 168.5 561.4 168.8 557.6 168.6ZM555.4 168.9 559.2 169.2 556.9 169.5 553.1 169.3ZM550.7 169.6 554.6 169.8 552.2 170.2 548.4 169.9ZM545.9 170.3 549.8 170.5 547.4 170.8 543.5 170.6ZM541 171 544.9 171.2 542.4 171.5 538.5 171.3ZM535.9 171.7 539.9 171.9 537.3 172.3 533.3 172ZM530.7 172.4 534.7 172.7 532 173 528 172.8ZM525.3 173.2 529.3 173.4 526.6 173.8 522.6 173.5ZM519.8 173.9 523.8 174.2 521 174.6 516.9 174.3ZM514 174.7 518.1 175 515.2 175.4 511.1 175.2ZM508.1 175.6 512.2 175.9 509.2 176.3 505 176ZM501.9 176.4 506.1 176.7 503 177.2 498.8 176.9ZM495.6 177.3 499.8 177.6 496.5 178.1 492.3 177.8ZM489 178.2 493.3 178.6 489.9 179 485.7 178.7ZM482.2 179.2 486.5 179.5 483 180 478.7 179.7ZM475.2 180.2 479.5 180.5 475.9 181 471.6 180.7ZM467.9 181.2 472.2 181.6 468.5 182.1 464.1 181.7ZM460.3 182.3 464.7 182.6 460.8 183.2 456.4 182.8ZM452.5 183.4 456.9 183.8 452.9 184.3 448.4 183.9ZM444.3 184.5 448.8 184.9 444.6 185.5 440.1 185.1ZM435.8 185.7 440.3 186.1 436 186.7 431.5 186.3ZM427 187 431.5 187.4 427 188 422.5 187.6ZM417.8 188.2 422.4 188.7 417.7 189.4 413.1 188.9ZM408.3 189.6 412.8 190 407.9 190.8 403.3 190.3ZM398.3 191 402.9 191.5 397.8 192.2 393.2 191.7ZM387.9 192.4 392.5 193 387.1 193.7 382.5 193.2ZM377 194 381.7 194.5 376 195.3 371.4 194.8ZM365.6 195.6 370.3 196.1 364.4 197 359.8 196.4ZM353.7 197.2 358.4 197.8 352.3 198.7 347.6 198.1ZM341.3 199 346 199.6 339.5 200.5 334.8 199.9ZM328.2 200.8 332.9 201.5 326.1 202.4 321.4 201.8ZM314.4 202.8 319.1 203.4 312 204.4 307.3 203.8ZM300 204.8 304.7 205.5 297.2 206.6 292.5 205.8ZM284.8 206.9 289.5 207.7 281.5 208.8 276.9 208ZM268.7 209.2 273.4 210 265 211.1 260.4 210.3ZM251.8 211.5 256.4 212.4 247.6 213.6 243 212.8ZM586.2 165.3 589.8 165.5 587.9 165.8 584.3 165.6ZM582.3 165.9 586 166 584.1 166.3 580.4 166.1ZM578.4 166.4 582.1 166.6 580.1 166.9 576.4 166.7ZM574.3 167 578.1 167.2 576 167.5 572.3 167.3ZM570.2 167.6 573.9 167.8 571.8 168.1 568 167.9ZM565.9 168.2 569.7 168.4 567.5 168.7 563.7 168.5ZM561.4 168.8 565.3 169.1 563 169.4 559.2 169.2ZM556.9 169.5 560.8 169.7 558.5 170 554.6 169.8ZM552.2 170.2 556.1 170.4 553.7 170.7 549.8 170.5ZM547.4 170.8 551.3 171.1 548.9 171.4 544.9 171.2ZM542.4 171.5 546.4 171.8 543.9 172.2 539.9 171.9ZM537.3 172.3 541.3 172.5 538.7 172.9 534.7 172.7ZM532 173 536.1 173.3 533.4 173.7 529.3 173.4ZM526.6 173.8 530.7 174.1 527.9 174.5 523.8 174.2ZM521 174.6 525.1 174.9 522.2 175.3 518.1 175ZM515.2 175.4 519.3 175.7 516.4 176.2 512.2 175.9ZM509.2 176.3 513.4 176.6 510.3 177 506.1 176.7ZM503 177.2 507.2 177.5 504 178 499.8 177.6ZM496.5 178.1 500.8 178.4 497.5 178.9 493.3 178.6ZM489.9 179 494.2 179.4 490.8 179.9 486.5 179.5ZM483 180 487.4 180.4 483.8 180.9 479.5 180.5ZM475.9 181 480.3 181.4 476.6 181.9 472.2 181.6ZM468.5 182.1 472.9 182.5 469.1 183 464.7 182.6ZM460.8 183.2 465.3 183.6 461.3 184.2 456.9 183.8ZM452.9 184.3 457.3 184.7 453.2 185.3 448.8 184.9ZM444.6 185.5 449.1 185.9 444.8 186.5 440.3 186.1ZM436 186.7 440.5 187.2 436.1 187.8 431.5 187.4ZM427 188 431.6 188.5 427 189.1 422.4 188.7ZM417.7 189.4 422.3 189.8 417.5 190.5 412.8 190ZM407.9 190.8 412.6 191.2 407.5 192 402.9 191.5ZM397.8 192.2 402.4 192.7 397.2 193.5 392.5 193ZM387.1 193.7 391.8 194.2 386.4 195 381.7 194.5ZM376 195.3 380.8 195.9 375 196.7 370.3 196.1ZM364.4 197 369.2 197.5 363.2 198.4 358.4 197.8ZM352.3 198.7 357 199.3 350.7 200.2 346 199.6ZM339.5 200.5 344.3 201.2 337.6 202.1 332.9 201.5ZM326.1 202.4 330.9 203.1 323.9 204.1 319.1 203.4ZM312 204.4 316.8 205.1 309.5 206.2 304.7 205.5ZM297.2 206.6 301.9 207.3 294.2 208.4 289.5 207.7ZM281.5 208.8 286.3 209.6 278.1 210.8 273.4 210ZM265 211.1 269.8 212 261.2 213.2 256.4 212.4ZM247.6 213.6 252.3 214.5 243.2 215.8 238.5 214.9ZM591.7 165.2 595.4 165.4 593.5 165.7 589.8 165.5ZM587.9 165.8 591.6 166 589.7 166.2 586 166ZM584.1 166.3 587.8 166.5 585.8 166.8 582.1 166.6ZM580.1 166.9 583.8 167.1 581.8 167.4 578.1 167.2ZM576 167.5 579.8 167.7 577.7 168 573.9 167.8ZM571.8 168.1 575.6 168.3 573.5 168.6 569.7 168.4ZM567.5 168.7 571.3 169 569.1 169.3 565.3 169.1ZM563 169.4 566.9 169.6 564.7 169.9 560.8 169.7ZM558.5 170 562.4 170.3 560.1 170.6 556.1 170.4ZM553.7 170.7 557.7 171 555.3 171.3 551.3 171.1ZM548.9 171.4 552.9 171.7 550.4 172 546.4 171.8ZM543.9 172.2 547.9 172.4 545.4 172.8 541.3 172.5ZM538.7 172.9 542.8 173.2 540.2 173.6 536.1 173.3ZM533.4 173.7 537.5 174 534.8 174.4 530.7 174.1ZM527.9 174.5 532 174.8 529.2 175.2 525.1 174.9ZM522.2 175.3 526.4 175.6 523.5 176 519.3 175.7ZM516.4 176.2 520.6 176.5 517.6 176.9 513.4 176.6ZM510.3 177 514.5 177.3 511.5 177.8 507.2 177.5ZM504 178 508.3 178.3 505.1 178.7 500.8 178.4ZM497.5 178.9 501.9 179.2 498.5 179.7 494.2 179.4ZM490.8 179.9 495.2 180.2 491.7 180.7 487.4 180.4ZM483.8 180.9 488.2 181.2 484.7 181.8 480.3 181.4ZM476.6 181.9 481.1 182.3 477.4 182.8 472.9 182.5ZM469.1 183 473.6 183.4 469.8 184 465.3 183.6ZM461.3 184.2 465.9 184.5 461.9 185.1 457.3 184.7ZM453.2 185.3 457.8 185.7 453.7 186.3 449.1 185.9ZM444.8 186.5 449.4 187 445.1 187.6 440.5 187.2ZM436.1 187.8 440.7 188.3 436.2 188.9 431.6 188.5ZM427 189.1 431.6 189.6 426.9 190.3 422.3 189.8ZM417.5 190.5 422.1 191 417.3 191.7 412.6 191.2ZM407.5 192 412.3 192.5 407.2 193.2 402.4 192.7ZM397.2 193.5 401.9 194 396.6 194.8 391.8 194.2ZM386.4 195 391.1 195.6 385.5 196.4 380.8 195.9ZM375 196.7 379.8 197.3 374 198.1 369.2 197.5ZM363.2 198.4 368 199 361.8 199.9 357 199.3ZM350.7 200.2 355.5 200.8 349.1 201.8 344.3 201.2ZM337.6 202.1 342.5 202.8 335.7 203.8 330.9 203.1ZM323.9 204.1 328.8 204.8 321.6 205.9 316.8 205.1ZM309.5 206.2 314.3 206.9 306.8 208.1 301.9 207.3ZM294.2 208.4 299.1 209.2 291.1 210.4 286.3 209.6ZM278.1 210.8 283 211.6 274.6 212.8 269.8 212ZM261.2 213.2 266 214.1 257.1 215.4 252.3 214.5ZM243.2 215.8 248 216.8 238.5 218.1 233.8 217.2ZM597.2 165.1 600.9 165.3 599 165.6 595.4 165.4ZM593.5 165.7 597.2 165.9 595.3 166.2 591.6 166ZM589.7 166.2 593.5 166.4 591.5 166.7 587.8 166.5ZM585.8 166.8 589.6 167 587.6 167.3 583.8 167.1ZM581.8 167.4 585.6 167.6 583.6 167.9 579.8 167.7ZM577.7 168 581.6 168.2 579.5 168.5 575.6 168.3ZM573.5 168.6 577.4 168.9 575.2 169.2 571.3 169ZM569.1 169.3 573.1 169.5 570.8 169.8 566.9 169.6ZM564.7 169.9 568.6 170.2 566.3 170.5 562.4 170.3ZM560.1 170.6 564 170.9 561.7 171.2 557.7 171ZM555.3 171.3 559.3 171.6 556.9 171.9 552.9 171.7ZM550.4 172 554.5 172.3 552 172.7 547.9 172.4ZM545.4 172.8 549.5 173.1 546.9 173.4 542.8 173.2ZM540.2 173.6 544.3 173.8 541.6 174.2 537.5 174ZM534.8 174.4 539 174.6 536.2 175 532 174.8ZM529.2 175.2 533.4 175.5 530.6 175.9 526.4 175.6ZM523.5 176 527.8 176.3 524.8 176.8 520.6 176.5ZM517.6 176.9 521.9 177.2 518.8 177.7 514.5 177.3ZM511.5 177.8 515.8 178.1 512.7 178.6 508.3 178.3ZM505.1 178.7 509.5 179.1 506.2 179.6 501.9 179.2ZM498.5 179.7 502.9 180.1 499.6 180.6 495.2 180.2ZM491.7 180.7 496.2 181.1 492.7 181.6 488.2 181.2ZM484.7 181.8 489.2 182.1 485.6 182.7 481.1 182.3ZM477.4 182.8 481.9 183.2 478.1 183.8 473.6 183.4ZM469.8 184 474.3 184.4 470.4 184.9 465.9 184.5ZM461.9 185.1 466.5 185.5 462.4 186.2 457.8 185.7ZM453.7 186.3 458.3 186.8 454.1 187.4 449.4 187ZM445.1 187.6 449.8 188.1 445.4 188.7 440.7 188.3ZM436.2 188.9 440.9 189.4 436.3 190.1 431.6 189.6ZM426.9 190.3 431.7 190.8 426.9 191.5 422.1 191ZM417.3 191.7 422 192.2 417 193 412.3 192.5ZM407.2 193.2 412 193.7 406.7 194.5 401.9 194ZM396.6 194.8 401.4 195.3 396 196.1 391.1 195.6ZM385.5 196.4 390.4 197 384.7 197.8 379.8 197.3ZM374 198.1 378.9 198.7 372.9 199.6 368 199ZM361.8 199.9 366.7 200.5 360.5 201.5 355.5 200.8ZM349.1 201.8 354 202.5 347.4 203.5 342.5 202.8ZM335.7 203.8 340.7 204.5 333.7 205.5 328.8 204.8ZM321.6 205.9 326.6 206.6 319.3 207.7 314.3 206.9ZM306.8 208.1 311.7 208.8 304 210 299.1 209.2ZM291.1 210.4 296.1 211.2 287.9 212.4 283 211.6ZM274.6 212.8 279.5 213.7 270.9 215 266 214.1ZM257.1 215.4 262 216.3 252.8 217.7 248 216.8ZM602.6 165.1 606.3 165.2 604.6 165.5 600.9 165.3ZM599 165.6 602.8 165.8 600.9 166.1 597.2 165.9ZM595.3 166.2 599.1 166.3 597.2 166.6 593.5 166.4ZM591.5 166.7 595.3 166.9 593.4 167.2 589.6 167ZM587.6 167.3 591.4 167.5 589.5 167.8 585.6 167.6ZM583.6 167.9 587.5 168.1 585.4 168.4 581.6 168.2ZM579.5 168.5 583.4 168.8 581.3 169.1 577.4 168.9ZM575.2 169.2 579.1 169.4 577 169.7 573.1 169.5ZM570.8 169.8 574.8 170.1 572.6 170.4 568.6 170.2ZM566.3 170.5 570.3 170.8 568.1 171.1 564 170.9ZM561.7 171.2 565.7 171.5 563.4 171.8 559.3 171.6ZM556.9 171.9 561 172.2 558.6 172.6 554.5 172.3ZM552 172.7 556.1 172.9 553.6 173.3 549.5 173.1ZM546.9 173.4 551 173.7 548.5 174.1 544.3 173.8ZM541.6 174.2 545.8 174.5 543.2 174.9 539 174.6ZM536.2 175 540.5 175.3 537.7 175.8 533.4 175.5ZM530.6 175.9 534.9 176.2 532 176.6 527.8 176.3ZM524.8 176.8 529.1 177.1 526.2 177.5 521.9 177.2ZM518.8 177.7 523.2 178 520.1 178.4 515.8 178.1ZM512.7 178.6 517 178.9 513.9 179.4 509.5 179.1ZM506.2 179.6 510.7 179.9 507.4 180.4 502.9 180.1ZM499.6 180.6 504.1 180.9 500.7 181.4 496.2 181.1ZM492.7 181.6 497.2 182 493.7 182.5 489.2 182.1ZM485.6 182.7 490.1 183 486.5 183.6 481.9 183.2ZM478.1 183.8 482.7 184.2 478.9 184.8 474.3 184.4ZM470.4 184.9 475.1 185.3 471.1 186 466.5 185.5ZM462.4 186.2 467.1 186.6 463 187.2 458.3 186.8ZM454.1 187.4 458.8 187.8 454.5 188.5 449.8 188.1ZM445.4 188.7 450.1 189.2 445.7 189.9 440.9 189.4ZM436.3 190.1 441.1 190.5 436.5 191.3 431.7 190.8ZM426.9 191.5 431.7 192 426.9 192.7 422 192.2ZM417 193 421.9 193.5 416.8 194.3 412 193.7ZM406.7 194.5 411.6 195.1 406.3 195.9 401.4 195.3ZM396 196.1 400.9 196.7 395.3 197.6 390.4 197ZM384.7 197.8 389.6 198.4 383.8 199.3 378.9 198.7ZM372.9 199.6 377.8 200.2 371.7 201.2 366.7 200.5ZM360.5 201.5 365.5 202.1 359 203.1 354 202.5ZM347.4 203.5 352.4 204.1 345.7 205.2 340.7 204.5ZM333.7 205.5 338.7 206.2 331.6 207.3 326.6 206.6ZM319.3 207.7 324.3 208.4 316.8 209.6 311.7 208.8ZM304 210 309.1 210.8 301.1 212 296.1 211.2ZM287.9 212.4 292.9 213.3 284.5 214.5 279.5 213.7ZM270.9 215 275.9 215.9 267 217.2 262 216.3ZM252.8 217.7 257.8 218.6 248.4 220.1 243.4 219.1ZM608.1 165 611.8 165.2 610.1 165.4 606.3 165.2ZM604.6 165.5 608.3 165.7 606.5 166 602.8 165.8ZM600.9 166.1 604.7 166.3 602.9 166.5 599.1 166.3ZM597.2 166.6 601 166.8 599.1 167.1 595.3 166.9ZM593.4 167.2 597.2 167.4 595.3 167.7 591.4 167.5ZM589.5 167.8 593.3 168 591.4 168.3 587.5 168.1ZM585.4 168.4 589.3 168.7 587.3 169 583.4 168.8ZM581.3 169.1 585.2 169.3 583.1 169.6 579.1 169.4ZM577 169.7 581 170 578.8 170.3 574.8 170.1ZM572.6 170.4 576.6 170.6 574.4 171 570.3 170.8ZM568.1 171.1 572.1 171.3 569.8 171.7 565.7 171.5ZM563.4 171.8 567.5 172.1 565.1 172.4 561 172.2ZM558.6 172.6 562.7 172.8 560.3 173.2 556.1 172.9ZM553.6 173.3 557.8 173.6 555.2 174 551 173.7ZM548.5 174.1 552.7 174.4 550.1 174.8 545.8 174.5ZM543.2 174.9 547.4 175.2 544.7 175.6 540.5 175.3ZM537.7 175.8 542 176 539.2 176.5 534.9 176.2ZM532 176.6 536.4 176.9 533.5 177.4 529.1 177.1ZM526.2 177.5 530.6 177.8 527.6 178.3 523.2 178ZM520.1 178.4 524.6 178.8 521.5 179.2 517 178.9ZM513.9 179.4 518.3 179.7 515.2 180.2 510.7 179.9ZM507.4 180.4 511.9 180.7 508.6 181.3 504.1 180.9ZM500.7 181.4 505.2 181.8 501.8 182.3 497.2 182ZM493.7 182.5 498.3 182.9 494.7 183.4 490.1 183ZM486.5 183.6 491.1 184 487.4 184.6 482.7 184.2ZM478.9 184.8 483.6 185.2 479.7 185.8 475.1 185.3ZM471.1 186 475.8 186.4 471.8 187 467.1 186.6ZM463 187.2 467.7 187.6 463.6 188.3 458.8 187.8ZM454.5 188.5 459.3 189 454.9 189.6 450.1 189.2ZM445.7 189.9 450.5 190.3 446 191 441.1 190.5ZM436.5 191.3 441.3 191.8 436.6 192.5 431.7 192ZM426.9 192.7 431.8 193.2 426.8 194 421.9 193.5ZM416.8 194.3 421.8 194.8 416.6 195.6 411.6 195.1ZM406.3 195.9 411.3 196.4 405.9 197.3 400.9 196.7ZM395.3 197.6 400.3 198.2 394.7 199 389.6 198.4ZM383.8 199.3 388.9 199.9 382.9 200.9 377.8 200.2ZM371.7 201.2 376.8 201.8 370.5 202.8 365.5 202.1ZM359 203.1 364.1 203.8 357.5 204.8 352.4 204.1ZM345.7 205.2 350.8 205.9 343.9 207 338.7 206.2ZM331.6 207.3 336.7 208.1 329.4 209.2 324.3 208.4ZM316.8 209.6 321.9 210.4 314.2 211.6 309.1 210.8ZM301.1 212 306.2 212.8 298.1 214.1 292.9 213.3ZM284.5 214.5 289.7 215.4 281 216.8 275.9 215.9ZM267 217.2 272.1 218.2 262.9 219.6 257.8 218.6ZM248.4 220.1 253.4 221.1 243.6 222.6 238.6 221.6ZM610.1 165.4 613.8 165.6 612.1 165.9 608.3 165.7ZM606.5 166 610.3 166.2 608.5 166.5 604.7 166.3ZM602.9 166.5 606.7 166.7 604.9 167 601 166.8ZM599.1 167.1 603 167.3 601.1 167.6 597.2 167.4ZM595.3 167.7 599.2 167.9 597.3 168.2 593.3 168ZM591.4 168.3 595.3 168.6 593.3 168.9 589.3 168.7ZM587.3 169 591.3 169.2 589.2 169.5 585.2 169.3ZM583.1 169.6 587.1 169.9 585 170.2 581 170ZM578.8 170.3 582.9 170.5 580.7 170.9 576.6 170.6ZM574.4 171 578.5 171.2 576.2 171.6 572.1 171.3ZM569.8 171.7 573.9 172 571.6 172.3 567.5 172.1ZM565.1 172.4 569.3 172.7 566.9 173.1 562.7 172.8ZM560.3 173.2 564.5 173.5 562 173.9 557.8 173.6ZM555.2 174 559.5 174.2 556.9 174.7 552.7 174.4ZM550.1 174.8 554.4 175.1 551.7 175.5 547.4 175.2ZM544.7 175.6 549.1 175.9 546.3 176.3 542 176ZM539.2 176.5 543.6 176.8 540.8 177.2 536.4 176.9ZM533.5 177.4 537.9 177.7 535 178.1 530.6 177.8ZM527.6 178.3 532 178.6 529 179.1 524.6 178.8ZM521.5 179.2 526 179.6 522.9 180.1 518.3 179.7ZM515.2 180.2 519.7 180.6 516.5 181.1 511.9 180.7ZM508.6 181.3 513.2 181.6 509.8 182.1 505.2 181.8ZM501.8 182.3 506.4 182.7 502.9 183.2 498.3 182.9ZM494.7 183.4 499.4 183.8 495.8 184.4 491.1 184ZM487.4 184.6 492.1 185 488.3 185.6 483.6 185.2ZM479.7 185.8 484.5 186.2 480.6 186.8 475.8 186.4ZM471.8 187 476.6 187.4 472.5 188.1 467.7 187.6ZM463.6 188.3 468.4 188.7 464.2 189.4 459.3 189ZM454.9 189.6 459.8 190.1 455.4 190.8 450.5 190.3ZM446 191 450.9 191.5 446.3 192.3 441.3 191.8ZM436.6 192.5 441.6 193 436.8 193.8 431.8 193.2ZM426.8 194 431.8 194.6 426.8 195.4 421.8 194.8ZM416.6 195.6 421.6 196.2 416.4 197 411.3 196.4ZM405.9 197.3 411 197.9 405.4 198.7 400.3 198.2ZM394.7 199 399.8 199.6 394 200.6 388.9 199.9ZM382.9 200.9 388 201.5 381.9 202.5 376.8 201.8ZM370.5 202.8 375.7 203.5 369.3 204.5 364.1 203.8ZM357.5 204.8 362.7 205.5 356 206.6 350.8 205.9ZM343.9 207 349.1 207.7 341.9 208.8 336.7 208.1ZM329.4 209.2 334.6 210 327.1 211.2 321.9 210.4ZM314.2 211.6 319.4 212.4 311.5 213.7 306.2 212.8ZM298.1 214.1 303.3 215 294.9 216.3 289.7 215.4ZM281 216.8 286.2 217.7 277.3 219.1 272.1 218.2ZM262.9 219.6 268.1 220.6 258.6 222.1 253.4 221.1ZM243.6 222.6 248.8 223.7 238.7 225.3 233.6 224.2ZM615.5 165.3 619.3 165.5 617.6 165.8 613.8 165.6ZM612.1 165.9 615.9 166.1 614.1 166.4 610.3 166.2ZM608.5 166.5 612.3 166.7 610.5 166.9 606.7 166.7ZM604.9 167 608.7 167.2 606.9 167.5 603 167.3ZM601.1 167.6 605 167.8 603.1 168.1 599.2 167.9ZM597.3 168.2 601.2 168.5 599.2 168.8 595.3 168.6ZM593.3 168.9 597.3 169.1 595.3 169.4 591.3 169.2ZM589.2 169.5 593.2 169.8 591.2 170.1 587.1 169.9ZM585 170.2 589.1 170.4 586.9 170.8 582.9 170.5ZM580.7 170.9 584.8 171.1 582.6 171.5 578.5 171.2ZM576.2 171.6 580.4 171.8 578.1 172.2 573.9 172ZM571.6 172.3 575.8 172.6 573.5 173 569.3 172.7ZM566.9 173.1 571.1 173.3 568.7 173.7 564.5 173.5ZM562 173.9 566.3 174.1 563.8 174.5 559.5 174.2ZM556.9 174.7 561.2 174.9 558.7 175.4 554.4 175.1ZM551.7 175.5 556.1 175.8 553.4 176.2 549.1 175.9ZM546.3 176.3 550.7 176.6 548 177.1 543.6 176.8ZM540.8 177.2 545.2 177.5 542.4 178 537.9 177.7ZM535 178.1 539.5 178.5 536.5 178.9 532 178.6ZM529 179.1 533.6 179.4 530.5 179.9 526 179.6ZM522.9 180.1 527.4 180.4 524.3 180.9 519.7 180.6ZM516.5 181.1 521.1 181.4 517.8 182 513.2 181.6ZM509.8 182.1 514.5 182.5 511.1 183.1 506.4 182.7ZM502.9 183.2 507.6 183.6 504.1 184.2 499.4 183.8ZM495.8 184.4 500.5 184.8 496.9 185.4 492.1 185ZM488.3 185.6 493.1 186 489.3 186.6 484.5 186.2ZM480.6 186.8 485.4 187.2 481.5 187.9 476.6 187.4ZM472.5 188.1 477.4 188.5 473.3 189.2 468.4 188.7ZM464.2 189.4 469.1 189.9 464.8 190.6 459.8 190.1ZM455.4 190.8 460.4 191.3 455.9 192 450.9 191.5ZM446.3 192.3 451.3 192.8 446.6 193.5 441.6 193ZM436.8 193.8 441.8 194.3 436.9 195.1 431.8 194.6ZM426.8 195.4 431.9 195.9 426.8 196.7 421.6 196.2ZM416.4 197 421.5 197.6 416.1 198.5 411 197.9ZM405.4 198.7 410.6 199.4 405 200.3 399.8 199.6ZM394 200.6 399.2 201.2 393.3 202.2 388 201.5ZM381.9 202.5 387.2 203.2 381 204.2 375.7 203.5ZM369.3 204.5 374.6 205.2 368 206.3 362.7 205.5ZM356 206.6 361.3 207.4 354.4 208.5 349.1 207.7ZM341.9 208.8 347.2 209.6 339.9 210.8 334.6 210ZM327.1 211.2 332.4 212 324.7 213.3 319.4 212.4ZM311.5 213.7 316.8 214.6 308.6 215.9 303.3 215ZM294.9 216.3 300.2 217.3 291.5 218.7 286.2 217.7ZM277.3 219.1 282.6 220.1 273.4 221.6 268.1 220.6ZM258.6 222.1 263.8 223.1 254 224.7 248.8 223.7ZM621 165.3 624.7 165.4 623.1 165.7 619.3 165.5ZM617.6 165.8 621.4 166 619.7 166.3 615.9 166.1ZM614.1 166.4 618 166.6 616.2 166.9 612.3 166.7ZM610.5 166.9 614.4 167.1 612.6 167.4 608.7 167.2ZM606.9 167.5 610.8 167.7 609 168 605 167.8ZM603.1 168.1 607.1 168.4 605.2 168.7 601.2 168.5ZM599.2 168.8 603.2 169 601.3 169.3 597.3 169.1ZM595.3 169.4 599.3 169.6 597.3 170 593.2 169.8ZM591.2 170.1 595.2 170.3 593.2 170.7 589.1 170.4ZM586.9 170.8 591.1 171 588.9 171.4 584.8 171.1ZM582.6 171.5 586.7 171.7 584.5 172.1 580.4 171.8ZM578.1 172.2 582.3 172.5 580 172.8 575.8 172.6ZM573.5 173 577.7 173.2 575.4 173.6 571.1 173.3ZM568.7 173.7 573 174 570.6 174.4 566.3 174.1ZM563.8 174.5 568.1 174.8 565.6 175.2 561.2 174.9ZM558.7 175.4 563.1 175.6 560.5 176.1 556.1 175.8ZM553.4 176.2 557.8 176.5 555.2 176.9 550.7 176.6ZM548 177.1 552.5 177.4 549.7 177.8 545.2 177.5ZM542.4 178 546.9 178.3 544 178.8 539.5 178.5ZM536.5 178.9 541.1 179.3 538.1 179.8 533.6 179.4ZM530.5 179.9 535.1 180.3 532.1 180.8 527.4 180.4ZM524.3 180.9 528.9 181.3 525.7 181.8 521.1 181.4ZM517.8 182 522.5 182.3 519.2 182.9 514.5 182.5ZM511.1 183.1 515.8 183.4 512.4 184 507.6 183.6ZM504.1 184.2 508.9 184.6 505.3 185.2 500.5 184.8ZM496.9 185.4 501.7 185.8 498 186.4 493.1 186ZM489.3 186.6 494.2 187 490.3 187.7 485.4 187.2ZM481.5 187.9 486.4 188.3 482.4 189 477.4 188.5ZM473.3 189.2 478.3 189.7 474.1 190.3 469.1 189.9ZM464.8 190.6 469.8 191.1 465.4 191.8 460.4 191.3ZM455.9 192 461 192.5 456.4 193.3 451.3 192.8ZM446.6 193.5 451.7 194 446.9 194.8 441.8 194.3ZM436.9 195.1 442.1 195.6 437.1 196.5 431.9 195.9ZM426.8 196.7 431.9 197.3 426.7 198.2 421.5 197.6ZM416.1 198.5 421.4 199.1 415.9 200 410.6 199.4ZM405 200.3 410.2 200.9 404.5 201.9 399.2 201.2ZM393.3 202.2 398.6 202.8 392.5 203.8 387.2 203.2ZM381 204.2 386.3 204.9 379.9 205.9 374.6 205.2ZM368 206.3 373.4 207 366.6 208.1 361.3 207.4ZM354.4 208.5 359.7 209.2 352.6 210.4 347.2 209.6ZM339.9 210.8 345.4 211.6 337.9 212.9 332.4 212ZM324.7 213.3 330.1 214.1 322.2 215.5 316.8 214.6ZM308.6 215.9 314 216.8 305.6 218.2 300.2 217.3ZM291.5 218.7 296.9 219.6 288 221.1 282.6 220.1ZM273.4 221.6 278.8 222.6 269.2 224.2 263.8 223.1ZM254 224.7 259.4 225.8 249.2 227.5 243.9 226.4ZM626.4 165.2 630.2 165.4 628.6 165.6 624.7 165.4ZM623.1 165.7 626.9 165.9 625.2 166.2 621.4 166ZM619.7 166.3 623.6 166.5 621.9 166.8 618 166.6ZM616.2 166.9 620.1 167.1 618.4 167.3 614.4 167.1ZM612.6 167.4 616.6 167.6 614.8 168 610.8 167.7ZM609 168 612.9 168.3 611.1 168.6 607.1 168.4ZM605.2 168.7 609.2 168.9 607.3 169.2 603.2 169ZM601.3 169.3 605.3 169.5 603.4 169.9 599.3 169.6ZM597.3 170 601.4 170.2 599.4 170.6 595.2 170.3ZM593.2 170.7 597.3 170.9 595.2 171.3 591.1 171ZM588.9 171.4 593.1 171.6 590.9 172 586.7 171.7ZM584.5 172.1 588.8 172.3 586.5 172.7 582.3 172.5ZM580 172.8 584.3 173.1 582 173.5 577.7 173.2ZM575.4 173.6 579.7 173.9 577.3 174.3 573 174ZM570.6 174.4 574.9 174.7 572.5 175.1 568.1 174.8ZM565.6 175.2 570 175.5 567.5 175.9 563.1 175.6ZM560.5 176.1 564.9 176.4 562.3 176.8 557.8 176.5ZM555.2 176.9 559.7 177.2 557 177.7 552.5 177.4ZM549.7 177.8 554.2 178.2 551.4 178.6 546.9 178.3ZM544 178.8 548.6 179.1 545.7 179.6 541.1 179.3ZM538.1 179.8 542.8 180.1 539.8 180.6 535.1 180.3ZM532.1 180.8 536.7 181.1 533.6 181.6 528.9 181.3ZM525.7 181.8 530.5 182.2 527.2 182.7 522.5 182.3ZM519.2 182.9 524 183.3 520.6 183.8 515.8 183.4ZM512.4 184 517.2 184.4 513.7 185 508.9 184.6ZM505.3 185.2 510.2 185.6 506.6 186.2 501.7 185.8ZM498 186.4 502.9 186.8 499.1 187.5 494.2 187ZM490.3 187.7 495.3 188.1 491.4 188.8 486.4 188.3ZM482.4 189 487.4 189.4 483.3 190.1 478.3 189.7ZM474.1 190.3 479.1 190.8 474.9 191.5 469.8 191.1ZM465.4 191.8 470.5 192.3 466.1 193 461 192.5ZM456.4 193.3 461.6 193.8 456.9 194.6 451.7 194ZM446.9 194.8 452.2 195.4 447.3 196.2 442.1 195.6ZM437.1 196.5 442.3 197 437.2 197.9 431.9 197.3ZM426.7 198.2 432 198.8 426.7 199.7 421.4 199.1ZM415.9 200 421.2 200.6 415.6 201.5 410.2 200.9ZM404.5 201.9 409.9 202.5 404 203.5 398.6 202.8ZM392.5 203.8 397.9 204.5 391.7 205.6 386.3 204.9ZM379.9 205.9 385.4 206.6 378.8 207.7 373.4 207ZM366.6 208.1 372.1 208.9 365.2 210 359.7 209.2ZM352.6 210.4 358.1 211.2 350.9 212.5 345.4 211.6ZM337.9 212.9 343.4 213.7 335.7 215 330.1 214.1ZM322.2 215.5 327.7 216.4 319.6 217.7 314 216.8ZM305.6 218.2 311.1 219.2 302.5 220.6 296.9 219.6ZM288 221.1 293.5 222.1 284.3 223.7 278.8 222.6ZM269.2 224.2 274.7 225.3 264.9 227 259.4 225.8ZM249.2 227.5 254.7 228.7 244.2 230.4 238.7 229.3ZM631.8 165.1 635.6 165.3 634 165.5 630.2 165.4ZM628.6 165.6 632.4 165.8 630.8 166.1 626.9 165.9ZM625.2 166.2 629.1 166.4 627.5 166.7 623.6 166.5ZM621.9 166.8 625.8 167 624.1 167.3 620.1 167.1ZM618.4 167.3 622.3 167.6 620.6 167.9 616.6 167.6ZM614.8 168 618.8 168.2 617 168.5 612.9 168.3ZM611.1 168.6 615.1 168.8 613.3 169.1 609.2 168.9ZM607.3 169.2 611.4 169.4 609.4 169.8 605.3 169.5ZM603.4 169.9 607.5 170.1 605.5 170.4 601.4 170.2ZM599.4 170.6 603.5 170.8 601.5 171.1 597.3 170.9ZM595.2 171.3 599.4 171.5 597.3 171.9 593.1 171.6ZM590.9 172 595.2 172.2 593 172.6 588.8 172.3ZM586.5 172.7 590.8 173 588.6 173.4 584.3 173.1ZM582 173.5 586.3 173.7 584 174.1 579.7 173.9ZM577.3 174.3 581.7 174.5 579.3 175 574.9 174.7ZM572.5 175.1 576.9 175.4 574.4 175.8 570 175.5ZM567.5 175.9 571.9 176.2 569.4 176.7 564.9 176.4ZM562.3 176.8 566.8 177.1 564.2 177.6 559.7 177.2ZM557 177.7 561.5 178 558.8 178.5 554.2 178.2ZM551.4 178.6 556 179 553.2 179.4 548.6 179.1ZM545.7 179.6 550.4 179.9 547.5 180.4 542.8 180.1ZM539.8 180.6 544.5 180.9 541.5 181.5 536.7 181.1ZM533.6 181.6 538.4 182 535.2 182.5 530.5 182.2ZM527.2 182.7 532.1 183.1 528.8 183.6 524 183.3ZM520.6 183.8 525.5 184.2 522.1 184.8 517.2 184.4ZM513.7 185 518.6 185.4 515.1 186 510.2 185.6ZM506.6 186.2 511.5 186.6 507.9 187.2 502.9 186.8ZM499.1 187.5 504.2 187.9 500.3 188.5 495.3 188.1ZM491.4 188.8 496.5 189.2 492.5 189.9 487.4 189.4ZM483.3 190.1 488.4 190.6 484.3 191.3 479.1 190.8ZM474.9 191.5 480.1 192 475.7 192.8 470.5 192.3ZM466.1 193 471.3 193.5 466.8 194.3 461.6 193.8ZM456.9 194.6 462.2 195.1 457.4 195.9 452.2 195.4ZM447.3 196.2 452.6 196.8 447.7 197.6 442.3 197ZM437.2 197.9 442.6 198.5 437.4 199.4 432 198.8ZM426.7 199.7 432.1 200.3 426.6 201.2 421.2 200.6ZM415.6 201.5 421 202.2 415.3 203.2 409.9 202.5ZM404 203.5 409.5 204.2 403.4 205.2 397.9 204.5ZM391.7 205.6 397.3 206.3 390.9 207.4 385.4 206.6ZM378.8 207.7 384.4 208.5 377.7 209.7 372.1 208.9ZM365.2 210 370.8 210.8 363.8 212.1 358.1 211.2ZM350.9 212.5 356.5 213.3 349 214.6 343.4 213.7ZM335.7 215 341.3 215.9 333.4 217.3 327.7 216.4ZM319.6 217.7 325.2 218.7 316.8 220.1 311.1 219.2ZM302.5 220.6 308.1 221.6 299.1 223.2 293.5 222.1ZM284.3 223.7 289.9 224.8 280.3 226.4 274.7 225.3ZM264.9 227 270.5 228.1 260.3 229.9 254.7 228.7ZM244.2 230.4 249.7 231.7 238.8 233.6 233.3 232.3ZM637.1 165 641 165.2 639.4 165.5 635.6 165.3ZM634 165.5 637.9 165.7 636.3 166 632.4 165.8ZM630.8 166.1 634.7 166.3 633 166.6 629.1 166.4ZM627.5 166.7 631.4 166.9 629.7 167.2 625.8 167ZM624.1 167.3 628 167.5 626.3 167.8 622.3 167.6ZM620.6 167.9 624.6 168.1 622.8 168.4 618.8 168.2ZM617 168.5 621 168.7 619.2 169 615.1 168.8ZM613.3 169.1 617.4 169.3 615.5 169.7 611.4 169.4ZM609.4 169.8 613.6 170 611.7 170.3 607.5 170.1ZM605.5 170.4 609.7 170.7 607.7 171 603.5 170.8ZM601.5 171.1 605.7 171.4 603.7 171.7 599.4 171.5ZM597.3 171.9 601.6 172.1 599.5 172.5 595.2 172.2ZM593 172.6 597.3 172.9 595.2 173.2 590.8 173ZM588.6 173.4 593 173.6 590.7 174 586.3 173.7ZM584 174.1 588.4 174.4 586.1 174.8 581.7 174.5ZM579.3 175 583.8 175.2 581.4 175.7 576.9 175.4ZM574.4 175.8 578.9 176.1 576.5 176.5 571.9 176.2ZM569.4 176.7 574 177 571.4 177.4 566.8 177.1ZM564.2 177.6 568.8 177.9 566.1 178.3 561.5 178ZM558.8 178.5 563.5 178.8 560.7 179.3 556 179ZM553.2 179.4 557.9 179.8 555.1 180.3 550.4 179.9ZM547.5 180.4 552.2 180.8 549.3 181.3 544.5 180.9ZM541.5 181.5 546.3 181.8 543.2 182.4 538.4 182ZM535.2 182.5 540.1 182.9 536.9 183.5 532.1 183.1ZM528.8 183.6 533.7 184 530.4 184.6 525.5 184.2ZM522.1 184.8 527 185.2 523.6 185.8 518.6 185.4ZM515.1 186 520.1 186.4 516.6 187 511.5 186.6ZM507.9 187.2 512.9 187.7 509.2 188.3 504.2 187.9ZM500.3 188.5 505.5 189 501.6 189.7 496.5 189.2ZM492.5 189.9 497.6 190.4 493.6 191.1 488.4 190.6ZM484.3 191.3 489.5 191.8 485.3 192.5 480.1 192ZM475.7 192.8 481 193.3 476.6 194.1 471.3 193.5ZM466.8 194.3 472.1 194.9 467.5 195.7 462.2 195.1ZM457.4 195.9 462.8 196.5 458 197.3 452.6 196.8ZM447.7 197.6 453.1 198.2 448 199.1 442.6 198.5ZM437.4 199.4 442.9 200 437.6 200.9 432.1 200.3ZM426.6 201.2 432.1 201.9 426.6 202.9 421 202.2ZM415.3 203.2 420.9 203.9 415 204.9 409.5 204.2ZM403.4 205.2 409 205.9 402.9 207 397.3 206.3ZM390.9 207.4 396.6 208.1 390.1 209.3 384.4 208.5ZM377.7 209.7 383.4 210.4 376.5 211.7 370.8 210.8ZM363.8 212.1 369.5 212.9 362.2 214.2 356.5 213.3ZM349 214.6 354.7 215.5 347 216.8 341.3 215.9ZM333.4 217.3 339.1 218.2 331 219.7 325.2 218.7ZM316.8 220.1 322.5 221.1 313.9 222.7 308.1 221.6ZM299.1 223.2 304.9 224.2 295.6 225.9 289.9 224.8ZM280.3 226.4 286.1 227.5 276.2 229.3 270.5 228.1ZM260.3 229.9 266 231.1 255.4 232.9 249.7 231.7ZM639.4 165.5 643.3 165.6 641.8 165.9 637.9 165.7ZM636.3 166 640.2 166.2 638.6 166.5 634.7 166.3ZM633 166.6 637 166.8 635.4 167.1 631.4 166.9ZM629.7 167.2 633.7 167.4 632 167.7 628 167.5ZM626.3 167.8 630.4 168 628.6 168.3 624.6 168.1ZM622.8 168.4 626.9 168.6 625.1 168.9 621 168.7ZM619.2 169 623.3 169.2 621.5 169.6 617.4 169.3ZM615.5 169.7 619.6 169.9 617.8 170.2 613.6 170ZM611.7 170.3 615.9 170.6 613.9 170.9 609.7 170.7ZM607.7 171 612 171.3 610 171.6 605.7 171.4ZM603.7 171.7 608 172 605.9 172.4 601.6 172.1ZM599.5 172.5 603.8 172.7 601.7 173.1 597.3 172.9ZM595.2 173.2 599.5 173.5 597.4 173.9 593 173.6ZM590.7 174 595.1 174.3 592.9 174.7 588.4 174.4ZM586.1 174.8 590.6 175.1 588.3 175.5 583.8 175.2ZM581.4 175.7 585.9 176 583.5 176.4 578.9 176.1ZM576.5 176.5 581 176.8 578.5 177.3 574 177ZM571.4 177.4 576 177.7 573.4 178.2 568.8 177.9ZM566.1 178.3 570.8 178.7 568.1 179.1 563.5 178.8ZM560.7 179.3 565.4 179.6 562.7 180.1 557.9 179.8ZM555.1 180.3 559.9 180.6 557 181.1 552.2 180.8ZM549.3 181.3 554.1 181.7 551.1 182.2 546.3 181.8ZM543.2 182.4 548.1 182.7 545 183.3 540.1 182.9ZM536.9 183.5 541.9 183.9 538.7 184.4 533.7 184ZM530.4 184.6 535.4 185 532.1 185.6 527 185.2ZM523.6 185.8 528.7 186.2 525.2 186.8 520.1 186.4ZM516.6 187 521.7 187.5 518.1 188.1 512.9 187.7ZM509.2 188.3 514.4 188.8 510.6 189.5 505.5 189ZM501.6 189.7 506.8 190.1 502.9 190.8 497.6 190.4ZM493.6 191.1 498.9 191.6 494.8 192.3 489.5 191.8ZM485.3 192.5 490.6 193.1 486.3 193.8 481 193.3ZM476.6 194.1 482 194.6 477.5 195.4 472.1 194.9ZM467.5 195.7 472.9 196.2 468.3 197.1 462.8 196.5ZM458 197.3 463.5 197.9 458.6 198.8 453.1 198.2ZM448 199.1 453.6 199.7 448.4 200.6 442.9 200ZM437.6 200.9 443.2 201.6 437.8 202.5 432.1 201.9ZM426.6 202.9 432.2 203.5 426.5 204.5 420.9 203.9ZM415 204.9 420.7 205.6 414.7 206.7 409 205.9ZM402.9 207 408.6 207.8 402.3 208.9 396.6 208.1ZM390.1 209.3 395.8 210.1 389.2 211.3 383.4 210.4ZM376.5 211.7 382.3 212.5 375.3 213.7 369.5 212.9ZM362.2 214.2 368 215 360.6 216.4 354.7 215.5ZM347 216.8 352.9 217.8 345 219.2 339.1 218.2ZM331 219.7 336.8 220.6 328.4 222.2 322.5 221.1ZM313.9 222.7 319.7 223.7 310.8 225.3 304.9 224.2ZM295.6 225.9 301.5 227 292 228.7 286.1 227.5ZM276.2 229.3 282.1 230.5 271.8 232.3 266 231.1ZM255.4 232.9 261.3 234.2 250.3 236.2 244.5 234.9ZM644.8 165.4 648.7 165.6 647.2 165.8 643.3 165.6ZM641.8 165.9 645.7 166.1 644.1 166.4 640.2 166.2ZM638.6 166.5 642.6 166.7 641 167 637 166.8ZM635.4 167.1 639.4 167.3 637.8 167.6 633.7 167.4ZM632 167.7 636.1 167.9 634.4 168.2 630.4 168ZM628.6 168.3 632.7 168.5 631 168.8 626.9 168.6ZM625.1 168.9 629.2 169.1 627.5 169.5 623.3 169.2ZM621.5 169.6 625.7 169.8 623.8 170.1 619.6 169.9ZM617.8 170.2 622 170.5 620.1 170.8 615.9 170.6ZM613.9 170.9 618.2 171.2 616.3 171.5 612 171.3ZM610 171.6 614.3 171.9 612.3 172.2 608 172ZM605.9 172.4 610.3 172.6 608.2 173 603.8 172.7ZM601.7 173.1 606.1 173.4 604 173.8 599.5 173.5ZM597.4 173.9 601.8 174.2 599.6 174.6 595.1 174.3ZM592.9 174.7 597.4 175 595.1 175.4 590.6 175.1ZM588.3 175.5 592.8 175.8 590.5 176.2 585.9 176ZM583.5 176.4 588.1 176.7 585.7 177.1 581 176.8ZM578.5 177.3 583.2 177.6 580.7 178 576 177.7ZM573.4 178.2 578.1 178.5 575.5 179 570.8 178.7ZM568.1 179.1 572.9 179.5 570.2 180 565.4 179.6ZM562.7 180.1 567.5 180.5 564.7 181 559.9 180.6ZM557 181.1 561.8 181.5 559 182 554.1 181.7ZM551.1 182.2 556 182.6 553 183.1 548.1 182.7ZM545 183.3 550 183.7 546.8 184.2 541.9 183.9ZM538.7 184.4 543.7 184.8 540.4 185.4 535.4 185ZM532.1 185.6 537.1 186 533.8 186.6 528.7 186.2ZM525.2 186.8 530.3 187.3 526.8 187.9 521.7 187.5ZM518.1 188.1 523.3 188.6 519.6 189.2 514.4 188.8ZM510.6 189.5 515.9 189.9 512.1 190.6 506.8 190.1ZM502.9 190.8 508.2 191.3 504.2 192.1 498.9 191.6ZM494.8 192.3 500.1 192.8 496 193.6 490.6 193.1ZM486.3 193.8 491.8 194.3 487.4 195.1 482 194.6ZM477.5 195.4 483 196 478.4 196.8 472.9 196.2ZM468.3 197.1 473.8 197.6 469 198.5 463.5 197.9ZM458.6 198.8 464.2 199.4 459.2 200.3 453.6 199.7ZM448.4 200.6 454.1 201.3 448.8 202.2 443.2 201.6ZM437.8 202.5 443.5 203.2 437.9 204.2 432.2 203.5ZM426.5 204.5 432.3 205.3 426.5 206.3 420.7 205.6ZM414.7 206.7 420.5 207.4 414.4 208.5 408.6 207.8ZM402.3 208.9 408.1 209.7 401.7 210.9 395.8 210.1ZM389.2 211.3 395 212.1 388.2 213.3 382.3 212.5ZM375.3 213.7 381.2 214.6 374 215.9 368 215ZM360.6 216.4 366.5 217.3 358.9 218.7 352.9 217.8ZM345 219.2 351 220.2 342.8 221.7 336.8 220.6ZM328.4 222.2 334.4 223.2 325.7 224.8 319.7 223.7ZM310.8 225.3 316.8 226.4 307.5 228.1 301.5 227ZM292 228.7 298 229.9 288.1 231.7 282.1 230.5ZM271.8 232.3 277.8 233.6 267.2 235.5 261.3 234.2ZM250.3 236.2 256.2 237.5 244.8 239.6 238.9 238.2ZM650.2 165.3 654.1 165.5 652.6 165.8 648.7 165.6ZM647.2 165.8 651.2 166 649.7 166.3 645.7 166.1ZM644.1 166.4 648.1 166.6 646.6 166.9 642.6 166.7ZM641 167 645 167.2 643.4 167.5 639.4 167.3ZM637.8 167.6 641.8 167.8 640.2 168.1 636.1 167.9ZM634.4 168.2 638.5 168.4 636.9 168.7 632.7 168.5ZM631 168.8 635.1 169 633.4 169.4 629.2 169.1ZM627.5 169.5 631.7 169.7 629.9 170 625.7 169.8ZM623.8 170.1 628.1 170.4 626.2 170.7 622 170.5ZM620.1 170.8 624.4 171 622.5 171.4 618.2 171.2ZM616.3 171.5 620.6 171.8 618.6 172.1 614.3 171.9ZM612.3 172.2 616.7 172.5 614.7 172.9 610.3 172.6ZM608.2 173 612.6 173.3 610.5 173.6 606.1 173.4ZM604 173.8 608.4 174 606.3 174.4 601.8 174.2ZM599.6 174.6 604.1 174.8 601.9 175.3 597.4 175ZM595.1 175.4 599.7 175.7 597.4 176.1 592.8 175.8ZM590.5 176.2 595.1 176.5 592.7 177 588.1 176.7ZM585.7 177.1 590.3 177.4 587.9 177.9 583.2 177.6ZM580.7 178 585.4 178.4 582.9 178.8 578.1 178.5ZM575.5 179 580.3 179.3 577.7 179.8 572.9 179.5ZM570.2 180 575 180.3 572.3 180.8 567.5 180.5ZM564.7 181 569.6 181.3 566.8 181.9 561.8 181.5ZM559 182 563.9 182.4 561 182.9 556 182.6ZM553 183.1 558 183.5 555 184.1 550 183.7ZM546.8 184.2 551.9 184.6 548.8 185.2 543.7 184.8ZM540.4 185.4 545.6 185.8 542.3 186.4 537.1 186ZM533.8 186.6 538.9 187.1 535.5 187.7 530.3 187.3ZM526.8 187.9 532.1 188.4 528.5 189 523.3 188.6ZM519.6 189.2 524.9 189.7 521.2 190.4 515.9 189.9ZM512.1 190.6 517.4 191.1 513.6 191.8 508.2 191.3ZM504.2 192.1 509.6 192.6 505.6 193.3 500.1 192.8ZM496 193.6 501.5 194.1 497.3 194.9 491.8 194.3ZM487.4 195.1 493 195.7 488.5 196.5 483 196ZM478.4 196.8 484 197.4 479.4 198.2 473.8 197.6ZM469 198.5 474.7 199.1 469.8 200 464.2 199.4ZM459.2 200.3 464.9 201 459.8 201.9 454.1 201.3ZM448.8 202.2 454.6 202.9 449.2 203.9 443.5 203.2ZM437.9 204.2 443.8 204.9 438.1 206 432.3 205.3ZM426.5 206.3 432.4 207 426.4 208.2 420.5 207.4ZM414.4 208.5 420.4 209.3 414.1 210.5 408.1 209.7ZM401.7 210.9 407.7 211.7 401 212.9 395 212.1ZM388.2 213.3 394.2 214.2 387.2 215.5 381.2 214.6ZM374 215.9 380 216.9 372.6 218.3 366.5 217.3ZM358.9 218.7 365 219.7 357.1 221.2 351 220.2ZM342.8 221.7 348.9 222.7 340.5 224.3 334.4 223.2ZM325.7 224.8 331.9 225.9 322.9 227.6 316.8 226.4ZM307.5 228.1 313.7 229.3 304.1 231.1 298 229.9ZM288.1 231.7 294.2 233 283.9 234.9 277.8 233.6ZM267.2 235.5 273.3 236.9 262.3 238.9 256.2 237.5ZM244.8 239.6 250.9 241.1 239 243.3 233 241.8ZM655.6 165.2 659.5 165.4 658.1 165.7 654.1 165.5ZM652.6 165.8 656.6 165.9 655.1 166.2 651.2 166ZM649.7 166.3 653.7 166.5 652.2 166.8 648.1 166.6ZM646.6 166.9 650.6 167.1 649.1 167.4 645 167.2ZM643.4 167.5 647.5 167.7 645.9 168 641.8 167.8ZM640.2 168.1 644.3 168.3 642.7 168.6 638.5 168.4ZM636.9 168.7 641 168.9 639.3 169.3 635.1 169ZM633.4 169.4 637.6 169.6 635.9 169.9 631.7 169.7ZM629.9 170 634.1 170.2 632.4 170.6 628.1 170.4ZM626.2 170.7 630.6 170.9 628.7 171.3 624.4 171ZM622.5 171.4 626.8 171.6 625 172 620.6 171.8ZM618.6 172.1 623 172.4 621.1 172.8 616.7 172.5ZM614.7 172.9 619.1 173.1 617.1 173.5 612.6 173.3ZM610.5 173.6 615 173.9 613 174.3 608.4 174ZM606.3 174.4 610.9 174.7 608.7 175.1 604.1 174.8ZM601.9 175.3 606.5 175.5 604.3 176 599.7 175.7ZM597.4 176.1 602.1 176.4 599.8 176.8 595.1 176.5ZM592.7 177 597.4 177.3 595.1 177.7 590.3 177.4ZM587.9 177.9 592.6 178.2 590.2 178.7 585.4 178.4ZM582.9 178.8 587.7 179.2 585.2 179.6 580.3 179.3ZM577.7 179.8 582.6 180.1 579.9 180.6 575 180.3ZM572.3 180.8 577.3 181.2 574.5 181.7 569.6 181.3ZM566.8 181.9 571.7 182.2 568.9 182.8 563.9 182.4ZM561 182.9 566 183.3 563.1 183.9 558 183.5ZM555 184.1 560.1 184.5 557 185 551.9 184.6ZM548.8 185.2 553.9 185.6 550.7 186.2 545.6 185.8ZM542.3 186.4 547.5 186.9 544.2 187.5 538.9 187.1ZM535.5 187.7 540.8 188.1 537.4 188.8 532.1 188.4ZM528.5 189 533.8 189.5 530.3 190.2 524.9 189.7ZM521.2 190.4 526.6 190.9 522.8 191.6 517.4 191.1ZM513.6 191.8 519 192.3 515.1 193.1 509.6 192.6ZM505.6 193.3 511.1 193.8 507 194.6 501.5 194.1ZM497.3 194.9 502.8 195.4 498.6 196.2 493 195.7ZM488.5 196.5 494.2 197.1 489.7 197.9 484 197.4ZM479.4 198.2 485.1 198.8 480.4 199.7 474.7 199.1ZM469.8 200 475.6 200.6 470.7 201.6 464.9 201ZM459.8 201.9 465.6 202.6 460.5 203.6 454.6 202.9ZM449.2 203.9 455.1 204.6 449.7 205.6 443.8 204.9ZM438.1 206 444.1 206.7 438.3 207.8 432.4 207ZM426.4 208.2 432.4 208.9 426.4 210.1 420.4 209.3ZM414.1 210.5 420.2 211.3 413.8 212.5 407.7 211.7ZM401 212.9 407.2 213.8 400.4 215.1 394.2 214.2ZM387.2 215.5 393.4 216.4 386.2 217.8 380 216.9ZM372.6 218.3 378.8 219.2 371.2 220.7 365 219.7ZM357.1 221.2 363.3 222.2 355.2 223.7 348.9 222.7ZM340.5 224.3 346.8 225.4 338.1 227 331.9 225.9ZM322.9 227.6 329.2 228.7 319.9 230.5 313.7 229.3ZM304.1 231.1 310.4 232.3 300.5 234.2 294.2 233ZM283.9 234.9 290.2 236.2 279.6 238.2 273.3 236.9ZM262.3 238.9 268.5 240.4 257.1 242.6 250.9 241.1ZM239 243.3 245.2 244.8 232.8 247.2 226.7 245.6ZM660.9 165.1 664.8 165.3 663.4 165.6 659.5 165.4ZM658.1 165.7 662 165.9 660.6 166.1 656.6 165.9ZM655.1 166.2 659.2 166.4 657.7 166.7 653.7 166.5ZM652.2 166.8 656.2 167 654.7 167.3 650.6 167.1ZM649.1 167.4 653.2 167.6 651.6 167.9 647.5 167.7ZM645.9 168 650.1 168.2 648.5 168.5 644.3 168.3ZM642.7 168.6 646.9 168.8 645.2 169.2 641 168.9ZM639.3 169.3 643.6 169.5 641.9 169.8 637.6 169.6ZM635.9 169.9 640.2 170.1 638.4 170.5 634.1 170.2ZM632.4 170.6 636.7 170.8 634.9 171.2 630.6 170.9ZM628.7 171.3 633.1 171.5 631.2 171.9 626.8 171.6ZM625 172 629.4 172.3 627.5 172.6 623 172.4ZM621.1 172.8 625.5 173 623.6 173.4 619.1 173.1ZM617.1 173.5 621.6 173.8 619.6 174.2 615 173.9ZM613 174.3 617.5 174.6 615.4 175 610.9 174.7ZM608.7 175.1 613.3 175.4 611.2 175.8 606.5 175.5ZM604.3 176 609 176.3 606.7 176.7 602.1 176.4ZM599.8 176.8 604.5 177.1 602.2 177.6 597.4 177.3ZM595.1 177.7 599.8 178.1 597.5 178.5 592.6 178.2ZM590.2 178.7 595 179 592.6 179.5 587.7 179.2ZM585.2 179.6 590 180 587.5 180.5 582.6 180.1ZM579.9 180.6 584.9 181 582.2 181.5 577.3 181.2ZM574.5 181.7 579.5 182 576.8 182.6 571.7 182.2ZM568.9 182.8 574 183.1 571.1 183.7 566 183.3ZM563.1 183.9 568.2 184.3 565.2 184.8 560.1 184.5ZM557 185 562.2 185.4 559.1 186 553.9 185.6ZM550.7 186.2 556 186.7 552.8 187.3 547.5 186.9ZM544.2 187.5 549.5 187.9 546.2 188.6 540.8 188.1ZM537.4 188.8 542.7 189.3 539.3 189.9 533.8 189.5ZM530.3 190.2 535.7 190.6 532.1 191.4 526.6 190.9ZM522.8 191.6 528.4 192.1 524.6 192.8 519 192.3ZM515.1 193.1 520.7 193.6 516.7 194.4 511.1 193.8ZM507 194.6 512.7 195.2 508.5 196 502.8 195.4ZM498.6 196.2 504.3 196.8 499.9 197.7 494.2 197.1ZM489.7 197.9 495.5 198.5 490.9 199.4 485.1 198.8ZM480.4 199.7 486.3 200.3 481.5 201.3 475.6 200.6ZM470.7 201.6 476.6 202.2 471.6 203.2 465.6 202.6ZM460.5 203.6 466.4 204.2 461.1 205.3 455.1 204.6ZM449.7 205.6 455.7 206.3 450.2 207.4 444.1 206.7ZM438.3 207.8 444.4 208.6 438.6 209.7 432.4 208.9ZM426.4 210.1 432.5 210.9 426.3 212.1 420.2 211.3ZM413.8 212.5 420 213.4 413.4 214.6 407.2 213.8ZM400.4 215.1 406.6 216 399.7 217.3 393.4 216.4ZM386.2 217.8 392.5 218.7 385.1 220.2 378.8 219.2ZM371.2 220.7 377.5 221.7 369.7 223.2 363.3 222.2ZM355.2 223.7 361.6 224.8 353.2 226.5 346.8 225.4ZM338.1 227 344.5 228.2 335.6 229.9 329.2 228.7ZM319.9 230.5 326.3 231.7 316.8 233.6 310.4 232.3ZM300.5 234.2 306.9 235.6 296.6 237.6 290.2 236.2ZM279.6 238.2 285.9 239.7 274.9 241.8 268.5 240.4ZM257.1 242.6 263.4 244.1 251.5 246.4 245.2 244.8ZM663.4 165.6 667.4 165.8 666 166 662 165.9ZM660.6 166.1 664.6 166.3 663.2 166.6 659.2 166.4ZM657.7 166.7 661.8 166.9 660.3 167.2 656.2 167ZM654.7 167.3 658.8 167.5 657.3 167.8 653.2 167.6ZM651.6 167.9 655.8 168.1 654.2 168.4 650.1 168.2ZM648.5 168.5 652.7 168.7 651.1 169.1 646.9 168.8ZM645.2 169.2 649.5 169.4 647.8 169.7 643.6 169.5ZM641.9 169.8 646.2 170 644.5 170.4 640.2 170.1ZM638.4 170.5 642.8 170.7 641 171.1 636.7 170.8ZM634.9 171.2 639.3 171.4 637.5 171.8 633.1 171.5ZM631.2 171.9 635.7 172.1 633.8 172.5 629.4 172.3ZM627.5 172.6 632 172.9 630.1 173.3 625.5 173ZM623.6 173.4 628.1 173.7 626.2 174.1 621.6 173.8ZM619.6 174.2 624.2 174.5 622.1 174.9 617.5 174.6ZM615.4 175 620.1 175.3 618 175.7 613.3 175.4ZM611.2 175.8 615.9 176.1 613.7 176.6 609 176.3ZM606.7 176.7 611.5 177 609.3 177.5 604.5 177.1ZM602.2 177.6 607 177.9 604.7 178.4 599.8 178.1ZM597.5 178.5 602.3 178.9 599.9 179.3 595 179ZM592.6 179.5 597.5 179.8 595 180.3 590 180ZM587.5 180.5 592.5 180.8 589.9 181.3 584.9 181ZM582.2 181.5 587.3 181.9 584.6 182.4 579.5 182ZM576.8 182.6 581.9 183 579.1 183.5 574 183.1ZM571.1 183.7 576.3 184.1 573.4 184.7 568.2 184.3ZM565.2 184.8 570.5 185.3 567.5 185.9 562.2 185.4ZM559.1 186 564.4 186.5 561.3 187.1 556 186.7ZM552.8 187.3 558.1 187.7 554.9 188.4 549.5 187.9ZM546.2 188.6 551.6 189 548.2 189.7 542.7 189.3ZM539.3 189.9 544.7 190.4 541.2 191.1 535.7 190.6ZM532.1 191.4 537.6 191.9 533.9 192.6 528.4 192.1ZM524.6 192.8 530.2 193.3 526.3 194.1 520.7 193.6ZM516.7 194.4 522.4 194.9 518.4 195.7 512.7 195.2ZM508.5 196 514.3 196.5 510.1 197.4 504.3 196.8ZM499.9 197.7 505.8 198.3 501.3 199.1 495.5 198.5ZM490.9 199.4 496.8 200 492.2 201 486.3 200.3ZM481.5 201.3 487.4 201.9 482.6 202.9 476.6 202.2ZM471.6 203.2 477.6 203.9 472.5 204.9 466.4 204.2ZM461.1 205.3 467.2 206 461.8 207.1 455.7 206.3ZM450.2 207.4 456.3 208.2 450.6 209.3 444.4 208.6ZM438.6 209.7 444.8 210.5 438.8 211.7 432.5 210.9ZM426.3 212.1 432.6 212.9 426.3 214.2 420 213.4ZM413.4 214.6 419.7 215.5 413 216.9 406.6 216ZM399.7 217.3 406.1 218.3 398.9 219.7 392.5 218.7ZM385.1 220.2 391.6 221.2 384 222.7 377.5 221.7ZM369.7 223.2 376.2 224.3 368.1 225.9 361.6 224.8ZM353.2 226.5 359.7 227.6 351.1 229.3 344.5 228.2ZM335.6 229.9 342.1 231.1 332.9 233 326.3 231.7ZM316.8 233.6 323.3 234.9 313.4 236.9 306.9 235.6ZM296.6 237.6 303.2 239 292.5 241.1 285.9 239.7ZM274.9 241.8 281.4 243.3 270 245.6 263.4 244.1ZM251.5 246.4 258 248 245.6 250.5 239.1 248.8ZM668.8 165.5 672.8 165.7 671.4 166 667.4 165.8ZM666 166 670.1 166.2 668.7 166.5 664.6 166.3ZM663.2 166.6 667.3 166.8 665.9 167.1 661.8 166.9ZM660.3 167.2 664.4 167.4 663 167.7 658.8 167.5ZM657.3 167.8 661.5 168 660 168.3 655.8 168.1ZM654.2 168.4 658.5 168.6 656.9 169 652.7 168.7ZM651.1 169.1 655.4 169.3 653.8 169.6 649.5 169.4ZM647.8 169.7 652.2 169.9 650.5 170.3 646.2 170ZM644.5 170.4 648.9 170.6 647.2 171 642.8 170.7ZM641 171.1 645.5 171.3 643.7 171.7 639.3 171.4ZM637.5 171.8 642 172 640.2 172.4 635.7 172.1ZM633.8 172.5 638.3 172.8 636.5 173.2 632 172.9ZM630.1 173.3 634.6 173.5 632.7 173.9 628.1 173.7ZM626.2 174.1 630.8 174.3 628.8 174.7 624.2 174.5ZM622.1 174.9 626.8 175.1 624.8 175.6 620.1 175.3ZM618 175.7 622.7 176 620.6 176.4 615.9 176.1ZM613.7 176.6 618.5 176.9 616.3 177.3 611.5 177ZM609.3 177.5 614.1 177.8 611.8 178.2 607 177.9ZM604.7 178.4 609.6 178.7 607.2 179.2 602.3 178.9ZM599.9 179.3 604.9 179.7 602.5 180.2 597.5 179.8ZM595 180.3 600 180.7 597.5 181.2 592.5 180.8ZM589.9 181.3 595 181.7 592.4 182.2 587.3 181.9ZM584.6 182.4 589.7 182.8 587 183.3 581.9 183ZM579.1 183.5 584.3 183.9 581.5 184.5 576.3 184.1ZM573.4 184.7 578.7 185.1 575.8 185.7 570.5 185.3ZM567.5 185.9 572.8 186.3 569.8 186.9 564.4 186.5ZM561.3 187.1 566.7 187.5 563.5 188.2 558.1 187.7ZM554.9 188.4 560.3 188.8 557.1 189.5 551.6 189ZM548.2 189.7 553.7 190.2 550.3 190.9 544.7 190.4ZM541.2 191.1 546.8 191.6 543.2 192.4 537.6 191.9ZM533.9 192.6 539.6 193.1 535.9 193.9 530.2 193.3ZM526.3 194.1 532.1 194.7 528.2 195.5 522.4 194.9ZM518.4 195.7 524.2 196.3 520.1 197.1 514.3 196.5ZM510.1 197.4 515.9 198 511.7 198.9 505.8 198.3ZM501.3 199.1 507.3 199.8 502.8 200.7 496.8 200ZM492.2 201 498.2 201.6 493.5 202.6 487.4 201.9ZM482.6 202.9 488.7 203.6 483.7 204.6 477.6 203.9ZM472.5 204.9 478.7 205.6 473.4 206.7 467.2 206ZM461.8 207.1 468.1 207.8 462.6 209 456.3 208.2ZM450.6 209.3 456.9 210.1 451.1 211.3 444.8 210.5ZM438.8 211.7 445.2 212.5 439 213.8 432.6 212.9ZM426.3 214.2 432.7 215.1 426.2 216.4 419.7 215.5ZM413 216.9 419.5 217.8 412.6 219.2 406.1 218.3ZM398.9 219.7 405.5 220.7 398.2 222.2 391.6 221.2ZM384 222.7 390.6 223.8 382.8 225.4 376.2 224.3ZM368.1 225.9 374.7 227 366.4 228.8 359.7 227.6ZM351.1 229.3 357.8 230.5 348.9 232.4 342.1 231.1ZM332.9 233 339.6 234.3 330.1 236.2 323.3 234.9ZM313.4 236.9 320.2 238.3 309.9 240.4 303.2 239ZM292.5 241.1 299.2 242.6 288.1 244.9 281.4 243.3ZM270 245.6 276.6 247.2 264.7 249.7 258 248ZM245.6 250.5 252.2 252.3 239.2 254.9 232.7 253.1ZM674.1 165.4 678.1 165.6 676.8 165.9 672.8 165.7ZM671.4 166 675.5 166.2 674.2 166.4 670.1 166.2ZM668.7 166.5 672.8 166.7 671.4 167 667.3 166.8ZM665.9 167.1 670 167.3 668.6 167.6 664.4 167.4ZM663 167.7 667.2 167.9 665.7 168.2 661.5 168ZM660 168.3 664.2 168.5 662.7 168.8 658.5 168.6ZM656.9 169 661.2 169.2 659.7 169.5 655.4 169.3ZM653.8 169.6 658.1 169.8 656.5 170.2 652.2 169.9ZM650.5 170.3 654.9 170.5 653.3 170.8 648.9 170.6ZM647.2 171 651.6 171.2 649.9 171.6 645.5 171.3ZM643.7 171.7 648.2 171.9 646.5 172.3 642 172ZM640.2 172.4 644.7 172.7 642.9 173 638.3 172.8ZM636.5 173.2 641.1 173.4 639.2 173.8 634.6 173.5ZM632.7 173.9 637.4 174.2 635.4 174.6 630.8 174.3ZM628.8 174.7 633.5 175 631.5 175.4 626.8 175.1ZM624.8 175.6 629.5 175.9 627.5 176.3 622.7 176ZM620.6 176.4 625.4 176.7 623.3 177.2 618.5 176.9ZM616.3 177.3 621.2 177.6 619 178.1 614.1 177.8ZM611.8 178.2 616.8 178.5 614.5 179 609.6 178.7ZM607.2 179.2 612.2 179.5 609.9 180 604.9 179.7ZM602.5 180.2 607.5 180.5 605.1 181 600 180.7ZM597.5 181.2 602.6 181.5 600.1 182.1 595 181.7ZM592.4 182.2 597.5 182.6 594.9 183.2 589.7 182.8ZM587 183.3 592.3 183.7 589.6 184.3 584.3 183.9ZM581.5 184.5 586.8 184.9 584 185.5 578.7 185.1ZM575.8 185.7 581.1 186.1 578.2 186.7 572.8 186.3ZM569.8 186.9 575.2 187.3 572.2 188 566.7 187.5ZM563.5 188.2 569 188.6 565.9 189.3 560.3 188.8ZM557.1 189.5 562.6 190 559.3 190.7 553.7 190.2ZM550.3 190.9 555.9 191.4 552.5 192.1 546.8 191.6ZM543.2 192.4 549 192.9 545.4 193.6 539.6 193.1ZM535.9 193.9 541.7 194.4 537.9 195.2 532.1 194.7ZM528.2 195.5 534 196 530.1 196.8 524.2 196.3ZM520.1 197.1 526 197.7 521.9 198.6 515.9 198ZM511.7 198.9 517.7 199.5 513.3 200.4 507.3 199.8ZM502.8 200.7 508.9 201.3 504.3 202.3 498.2 201.6ZM493.5 202.6 499.7 203.3 494.9 204.3 488.7 203.6ZM483.7 204.6 490 205.3 484.9 206.4 478.7 205.6ZM473.4 206.7 479.8 207.5 474.4 208.6 468.1 207.8ZM462.6 209 469 209.7 463.4 210.9 456.9 210.1ZM451.1 211.3 457.6 212.1 451.7 213.4 445.2 212.5ZM439 213.8 445.6 214.7 439.3 216 432.7 215.1ZM426.2 216.4 432.8 217.4 426.1 218.8 419.5 217.8ZM412.6 219.2 419.3 220.2 412.2 221.7 405.5 220.7ZM398.2 222.2 404.9 223.3 397.4 224.8 390.6 223.8ZM382.8 225.4 389.6 226.5 381.5 228.2 374.7 227ZM366.4 228.8 373.2 229.9 364.6 231.8 357.8 230.5ZM348.9 232.4 355.7 233.6 346.5 235.6 339.6 234.3ZM330.1 236.2 336.9 237.6 327 239.7 320.2 238.3ZM309.9 240.4 316.8 241.9 306.1 244.1 299.2 242.6ZM288.1 244.9 295 246.4 283.5 248.9 276.6 247.2ZM264.7 249.7 271.5 251.4 259 254 252.2 252.3ZM239.2 254.9 246 256.8 232.5 259.6 225.7 257.7ZM679.4 165.3 683.5 165.5 682.2 165.8 678.1 165.6ZM676.8 165.9 680.9 166.1 679.6 166.3 675.5 166.2ZM674.2 166.4 678.3 166.6 676.9 166.9 672.8 166.7ZM671.4 167 675.6 167.2 674.2 167.5 670 167.3ZM668.6 167.6 672.8 167.8 671.4 168.1 667.2 167.9ZM665.7 168.2 670 168.4 668.5 168.8 664.2 168.5ZM662.7 168.8 667 169.1 665.5 169.4 661.2 169.2ZM659.7 169.5 664 169.7 662.5 170.1 658.1 169.8ZM656.5 170.2 660.9 170.4 659.3 170.7 654.9 170.5ZM653.3 170.8 657.7 171.1 656.1 171.4 651.6 171.2ZM649.9 171.6 654.4 171.8 652.7 172.2 648.2 171.9ZM646.5 172.3 651 172.5 649.3 172.9 644.7 172.7ZM642.9 173 647.5 173.3 645.7 173.7 641.1 173.4ZM639.2 173.8 643.9 174.1 642 174.5 637.4 174.2ZM635.4 174.6 640.2 174.9 638.2 175.3 633.5 175ZM631.5 175.4 636.3 175.7 634.3 176.1 629.5 175.9ZM627.5 176.3 632.3 176.6 630.3 177 625.4 176.7ZM623.3 177.2 628.2 177.5 626.1 177.9 621.2 177.6ZM619 178.1 623.9 178.4 621.7 178.9 616.8 178.5ZM614.5 179 619.5 179.4 617.2 179.8 612.2 179.5ZM609.9 180 614.9 180.3 612.6 180.9 607.5 180.5ZM605.1 181 610.2 181.4 607.8 181.9 602.6 181.5ZM600.1 182.1 605.3 182.4 602.8 183 597.5 182.6ZM594.9 183.2 600.2 183.5 597.6 184.1 592.3 183.7ZM589.6 184.3 594.9 184.7 592.2 185.3 586.8 184.9ZM584 185.5 589.4 185.9 586.5 186.5 581.1 186.1ZM578.2 186.7 583.7 187.1 580.7 187.8 575.2 187.3ZM572.2 188 577.7 188.4 574.6 189.1 569 188.6ZM565.9 189.3 571.5 189.8 568.3 190.4 562.6 190ZM559.3 190.7 565 191.2 561.7 191.9 555.9 191.4ZM552.5 192.1 558.2 192.6 554.8 193.4 549 192.9ZM545.4 193.6 551.2 194.1 547.5 194.9 541.7 194.4ZM537.9 195.2 543.8 195.7 540 196.6 534 196ZM530.1 196.8 536.1 197.4 532.1 198.3 526 197.7ZM521.9 198.6 528 199.2 523.8 200.1 517.7 199.5ZM513.3 200.4 519.5 201 515.1 202 508.9 201.3ZM504.3 202.3 510.6 202.9 505.9 203.9 499.7 203.3ZM494.9 204.3 501.2 205 496.3 206 490 205.3ZM484.9 206.4 491.3 207.1 486.2 208.2 479.8 207.5ZM474.4 208.6 480.9 209.4 475.5 210.5 469 209.7ZM463.4 210.9 469.9 211.7 464.2 213 457.6 212.1ZM451.7 213.4 458.3 214.3 452.2 215.6 445.6 214.7ZM439.3 216 446 216.9 439.5 218.3 432.8 217.4ZM426.1 218.8 432.9 219.7 426.1 221.2 419.3 220.2ZM412.2 221.7 419 222.7 411.8 224.3 404.9 223.3ZM397.4 224.8 404.3 225.9 396.5 227.6 389.6 226.5ZM381.5 228.2 388.5 229.4 380.2 231.2 373.2 229.9ZM364.6 231.8 371.6 233 362.7 234.9 355.7 233.6ZM346.5 235.6 353.5 236.9 344 239 336.9 237.6ZM327 239.7 334.1 241.1 323.8 243.4 316.8 241.9ZM306.1 244.1 313.2 245.7 302.1 248.1 295 246.4ZM283.5 248.9 290.6 250.6 278.5 253.2 271.5 251.4ZM259 254 266 255.9 253 258.7 246 256.8ZM684.7 165.2 688.8 165.4 687.5 165.7 683.5 165.5ZM682.2 165.8 686.3 166 685 166.3 680.9 166.1ZM679.6 166.3 683.7 166.5 682.4 166.8 678.3 166.6ZM676.9 166.9 681.1 167.1 679.8 167.4 675.6 167.2ZM674.2 167.5 678.4 167.7 677.1 168 672.8 167.8ZM671.4 168.1 675.7 168.3 674.3 168.7 670 168.4ZM668.5 168.8 672.8 169 671.4 169.3 667 169.1ZM665.5 169.4 669.9 169.6 668.4 170 664 169.7ZM662.5 170.1 666.9 170.3 665.3 170.6 660.9 170.4ZM659.3 170.7 663.8 171 662.2 171.3 657.7 171.1ZM656.1 171.4 660.6 171.7 659 172.1 654.4 171.8ZM652.7 172.2 657.3 172.4 655.6 172.8 651 172.5ZM649.3 172.9 653.9 173.2 652.2 173.6 647.5 173.3ZM645.7 173.7 650.4 174 648.6 174.4 643.9 174.1ZM642 174.5 646.8 174.8 644.9 175.2 640.2 174.9ZM638.2 175.3 643 175.6 641.1 176 636.3 175.7ZM634.3 176.1 639.2 176.4 637.2 176.9 632.3 176.6ZM630.3 177 635.2 177.3 633.1 177.8 628.2 177.5ZM626.1 177.9 631 178.3 628.9 178.7 623.9 178.4ZM621.7 178.9 626.8 179.2 624.6 179.7 619.5 179.4ZM617.2 179.8 622.3 180.2 620.1 180.7 614.9 180.3ZM612.6 180.9 617.8 181.2 615.4 181.7 610.2 181.4ZM607.8 181.9 613 182.3 610.5 182.8 605.3 182.4ZM602.8 183 608.1 183.4 605.5 183.9 600.2 183.5ZM597.6 184.1 602.9 184.5 600.3 185.1 594.9 184.7ZM592.2 185.3 597.6 185.7 594.8 186.3 589.4 185.9ZM586.5 186.5 592 186.9 589.2 187.5 583.7 187.1ZM580.7 187.8 586.3 188.2 583.3 188.9 577.7 188.4ZM574.6 189.1 580.3 189.5 577.2 190.2 571.5 189.8ZM568.3 190.4 574 190.9 570.8 191.6 565 191.2ZM561.7 191.9 567.5 192.4 564.1 193.1 558.2 192.6ZM554.8 193.4 560.6 193.9 557.1 194.7 551.2 194.1ZM547.5 194.9 553.5 195.5 549.8 196.3 543.8 195.7ZM540 196.6 546 197.1 542.2 198 536.1 197.4ZM532.1 198.3 538.2 198.9 534.1 199.8 528 199.2ZM523.8 200.1 530 200.7 525.7 201.6 519.5 201ZM515.1 202 521.4 202.6 516.9 203.6 510.6 202.9ZM505.9 203.9 512.3 204.6 507.6 205.7 501.2 205ZM496.3 206 502.8 206.7 497.8 207.8 491.3 207.1ZM486.2 208.2 492.7 209 487.5 210.1 480.9 209.4ZM475.5 210.5 482.1 211.3 476.6 212.6 469.9 211.7ZM464.2 213 470.9 213.8 465 215.1 458.3 214.3ZM452.2 215.6 459 216.5 452.8 217.8 446 216.9ZM439.5 218.3 446.4 219.3 439.8 220.7 432.9 219.7ZM426.1 221.2 433 222.2 426 223.8 419 222.7ZM411.8 224.3 418.8 225.4 411.3 227.1 404.3 225.9ZM396.5 227.6 403.6 228.8 395.6 230.6 388.5 229.4ZM380.2 231.2 387.3 232.4 378.8 234.3 371.6 233ZM362.7 234.9 369.9 236.3 360.7 238.3 353.5 236.9ZM344 239 351.2 240.4 341.3 242.6 334.1 241.1ZM323.8 243.4 331.1 244.9 320.4 247.3 313.2 245.7ZM302.1 248.1 309.3 249.7 297.8 252.3 290.6 250.6ZM278.5 253.2 285.8 255 273.2 257.7 266 255.9ZM253 258.7 260.2 260.6 246.5 263.7 239.4 261.6ZM690 165.2 694 165.3 692.8 165.6 688.8 165.4ZM687.5 165.7 691.6 165.9 690.4 166.2 686.3 166ZM685 166.3 689.2 166.5 687.9 166.7 683.7 166.5ZM682.4 166.8 686.6 167 685.3 167.3 681.1 167.1ZM679.8 167.4 684 167.6 682.7 167.9 678.4 167.7ZM677.1 168 681.3 168.2 680 168.6 675.7 168.3ZM674.3 168.7 678.6 168.9 677.2 169.2 672.8 169ZM671.4 169.3 675.8 169.5 674.3 169.8 669.9 169.6ZM668.4 170 672.8 170.2 671.3 170.5 666.9 170.3ZM665.3 170.6 669.8 170.9 668.3 171.2 663.8 171ZM662.2 171.3 666.7 171.6 665.1 171.9 660.6 171.7ZM659 172.1 663.5 172.3 661.9 172.7 657.3 172.4ZM655.6 172.8 660.2 173.1 658.6 173.4 653.9 173.2ZM652.2 173.6 656.9 173.8 655.1 174.2 650.4 174ZM648.6 174.4 653.3 174.6 651.6 175 646.8 174.8ZM644.9 175.2 649.7 175.5 647.9 175.9 643 175.6ZM641.1 176 646 176.3 644.1 176.7 639.2 176.4ZM637.2 176.9 642.1 177.2 640.1 177.6 635.2 177.3ZM633.1 177.8 638.1 178.1 636.1 178.6 631 178.3ZM628.9 178.7 634 179 631.9 179.5 626.8 179.2ZM624.6 179.7 629.7 180 627.5 180.5 622.3 180.2ZM620.1 180.7 625.3 181 623 181.6 617.8 181.2ZM615.4 181.7 620.6 182.1 618.3 182.6 613 182.3ZM610.5 182.8 615.9 183.2 613.4 183.7 608.1 183.4ZM605.5 183.9 610.9 184.3 608.4 184.9 602.9 184.5ZM600.3 185.1 605.7 185.5 603.1 186.1 597.6 185.7ZM594.8 186.3 600.4 186.7 597.6 187.3 592 186.9ZM589.2 187.5 594.8 188 591.9 188.6 586.3 188.2ZM583.3 188.9 589 189.3 586 190 580.3 189.5ZM577.2 190.2 582.9 190.7 579.8 191.4 574 190.9ZM570.8 191.6 576.6 192.1 573.4 192.9 567.5 192.4ZM564.1 193.1 570 193.6 566.6 194.4 560.6 193.9ZM557.1 194.7 563.1 195.2 559.5 196 553.5 195.5ZM549.8 196.3 555.9 196.9 552.2 197.7 546 197.1ZM542.2 198 548.3 198.6 544.4 199.5 538.2 198.9ZM534.1 199.8 540.4 200.4 536.3 201.3 530 200.7ZM525.7 201.6 532.1 202.3 527.8 203.3 521.4 202.6ZM516.9 203.6 523.3 204.3 518.8 205.3 512.3 204.6ZM507.6 205.7 514.1 206.4 509.3 207.5 502.8 206.7ZM497.8 207.8 504.4 208.6 499.4 209.8 492.7 209ZM487.5 210.1 494.2 210.9 488.9 212.2 482.1 211.3ZM476.6 212.6 483.4 213.4 477.7 214.7 470.9 213.8ZM465 215.1 471.9 216 465.9 217.4 459 216.5ZM452.8 217.8 459.8 218.8 453.4 220.2 446.4 219.3ZM439.8 220.7 446.9 221.7 440.1 223.3 433 222.2ZM426 223.8 433.1 224.9 425.9 226.5 418.8 225.4ZM411.3 227.1 418.5 228.2 410.8 230 403.6 228.8ZM395.6 230.6 402.9 231.8 394.6 233.7 387.3 232.4ZM378.8 234.3 386.1 235.6 377.3 237.6 369.9 236.3ZM360.7 238.3 368.1 239.7 358.6 241.9 351.2 240.4ZM341.3 242.6 348.8 244.1 338.5 246.5 331.1 244.9ZM320.4 247.3 327.9 248.9 316.8 251.4 309.3 249.7ZM297.8 252.3 305.2 254.1 293.2 256.8 285.8 255ZM273.2 257.7 280.6 259.7 267.5 262.7 260.2 260.6ZM246.5 263.7 253.8 265.8 239.5 269.1 232.2 266.8ZM692.8 165.6 697 165.8 695.8 166.1 691.6 165.9ZM690.4 166.2 694.6 166.4 693.4 166.7 689.2 166.5ZM687.9 166.7 692.1 166.9 690.9 167.2 686.6 167ZM685.3 167.3 689.6 167.5 688.3 167.8 684 167.6ZM682.7 167.9 687 168.1 685.7 168.5 681.3 168.2ZM680 168.6 684.3 168.8 683 169.1 678.6 168.9ZM677.2 169.2 681.6 169.4 680.2 169.7 675.8 169.5ZM674.3 169.8 678.8 170.1 677.3 170.4 672.8 170.2ZM671.3 170.5 675.8 170.8 674.4 171.1 669.8 170.9ZM668.3 171.2 672.8 171.5 671.3 171.8 666.7 171.6ZM665.1 171.9 669.8 172.2 668.2 172.6 663.5 172.3ZM661.9 172.7 666.6 172.9 664.9 173.3 660.2 173.1ZM658.6 173.4 663.3 173.7 661.6 174.1 656.9 173.8ZM655.1 174.2 659.9 174.5 658.2 174.9 653.3 174.6ZM651.6 175 656.4 175.3 654.6 175.7 649.7 175.5ZM647.9 175.9 652.8 176.2 650.9 176.6 646 176.3ZM644.1 176.7 649 177 647.1 177.5 642.1 177.2ZM640.1 177.6 645.2 178 643.2 178.4 638.1 178.1ZM636.1 178.6 641.2 178.9 639.1 179.4 634 179ZM631.9 179.5 637 179.9 634.9 180.4 629.7 180ZM627.5 180.5 632.7 180.9 630.5 181.4 625.3 181ZM623 181.6 628.3 181.9 626 182.5 620.6 182.1ZM618.3 182.6 623.6 183 621.3 183.6 615.9 183.2ZM613.4 183.7 618.8 184.1 616.4 184.7 610.9 184.3ZM608.4 184.9 613.9 185.3 611.3 185.9 605.7 185.5ZM603.1 186.1 608.7 186.5 606 187.1 600.4 186.7ZM597.6 187.3 603.3 187.8 600.5 188.4 594.8 188ZM591.9 188.6 597.7 189.1 594.8 189.8 589 189.3ZM586 190 591.8 190.5 588.8 191.2 582.9 190.7ZM579.8 191.4 585.7 191.9 582.5 192.6 576.6 192.1ZM573.4 192.9 579.3 193.4 576 194.2 570 193.6ZM566.6 194.4 572.7 195 569.2 195.8 563.1 195.2ZM559.5 196 565.7 196.6 562.1 197.4 555.9 196.9ZM552.2 197.7 558.4 198.3 554.6 199.2 548.3 198.6ZM544.4 199.5 550.7 200.1 546.8 201 540.4 200.4ZM536.3 201.3 542.7 202 538.5 203 532.1 202.3ZM527.8 203.3 534.3 204 529.9 205 523.3 204.3ZM518.8 205.3 525.4 206 520.8 207.1 514.1 206.4ZM509.3 207.5 516 208.2 511.2 209.4 504.4 208.6ZM499.4 209.8 506.2 210.6 501 211.8 494.2 210.9ZM488.9 212.2 495.7 213 490.3 214.3 483.4 213.4ZM477.7 214.7 484.7 215.6 478.9 216.9 471.9 216ZM465.9 217.4 473 218.3 466.9 219.8 459.8 218.8ZM453.4 220.2 460.6 221.2 454.1 222.8 446.9 221.7ZM440.1 223.3 447.3 224.3 440.4 226 433.1 224.9ZM425.9 226.5 433.3 227.7 425.9 229.4 418.5 228.2ZM410.8 230 418.2 231.2 410.3 233 402.9 231.8ZM394.6 233.7 402.1 235 393.6 237 386.1 235.6ZM377.3 237.6 384.8 239 375.7 241.2 368.1 239.7ZM358.6 241.9 366.2 243.4 356.4 245.7 348.8 244.1ZM338.5 246.5 346.1 248.1 335.5 250.6 327.9 248.9ZM316.8 251.4 324.4 253.2 312.9 255.9 305.2 254.1ZM293.2 256.8 300.8 258.7 288.3 261.7 280.6 259.7ZM267.5 262.7 275.1 264.7 261.4 268 253.8 265.8ZM239.5 269.1 247 271.3 232 274.9 224.5 272.5ZM698.1 165.5 702.3 165.7 701.1 166 697 165.8ZM695.8 166.1 700 166.3 698.8 166.6 694.6 166.4ZM693.4 166.7 697.6 166.9 696.4 167.1 692.1 166.9ZM690.9 167.2 695.1 167.4 693.9 167.7 689.6 167.5ZM688.3 167.8 692.6 168 691.3 168.4 687 168.1ZM685.7 168.5 690 168.7 688.7 169 684.3 168.8ZM683 169.1 687.4 169.3 686 169.6 681.6 169.4ZM680.2 169.7 684.6 170 683.2 170.3 678.8 170.1ZM677.3 170.4 681.8 170.7 680.4 171 675.8 170.8ZM674.4 171.1 678.9 171.4 677.4 171.7 672.8 171.5ZM671.3 171.8 675.9 172.1 674.4 172.4 669.8 172.2ZM668.2 172.6 672.9 172.8 671.3 173.2 666.6 172.9ZM664.9 173.3 669.7 173.6 668.1 174 663.3 173.7ZM661.6 174.1 666.4 174.4 664.7 174.8 659.9 174.5ZM658.2 174.9 663 175.2 661.3 175.6 656.4 175.3ZM654.6 175.7 659.5 176 657.7 176.5 652.8 176.2ZM650.9 176.6 655.9 176.9 654 177.4 649 177ZM647.1 177.5 652.2 177.8 650.2 178.3 645.2 178ZM643.2 178.4 648.3 178.7 646.3 179.2 641.2 178.9ZM639.1 179.4 644.3 179.7 642.2 180.2 637 179.9ZM634.9 180.4 640.1 180.7 638 181.2 632.7 180.9ZM630.5 181.4 635.8 181.8 633.6 182.3 628.3 181.9ZM626 182.5 631.4 182.8 629.1 183.4 623.6 183ZM621.3 183.6 626.7 183.9 624.3 184.5 618.8 184.1ZM616.4 184.7 621.9 185.1 619.4 185.7 613.9 185.3ZM611.3 185.9 616.9 186.3 614.3 186.9 608.7 186.5ZM606 187.1 611.7 187.6 609 188.2 603.3 187.8ZM600.5 188.4 606.3 188.9 603.5 189.6 597.7 189.1ZM594.8 189.8 600.6 190.2 597.7 190.9 591.8 190.5ZM588.8 191.2 594.7 191.7 591.7 192.4 585.7 191.9ZM582.5 192.6 588.6 193.1 585.4 193.9 579.3 193.4ZM576 194.2 582.1 194.7 578.8 195.5 572.7 195ZM569.2 195.8 575.4 196.3 571.9 197.2 565.7 196.6ZM562.1 197.4 568.4 198 564.7 198.9 558.4 198.3ZM554.6 199.2 561 199.8 557.2 200.7 550.7 200.1ZM546.8 201 553.2 201.7 549.2 202.6 542.7 202ZM538.5 203 545.1 203.6 540.9 204.7 534.3 204ZM529.9 205 536.5 205.7 532.1 206.8 525.4 206ZM520.8 207.1 527.5 207.9 522.8 209 516 208.2ZM511.2 209.4 518 210.2 513.1 211.4 506.2 210.6ZM501 211.8 508 212.6 502.7 213.9 495.7 213ZM490.3 214.3 497.3 215.2 491.8 216.5 484.7 215.6ZM478.9 216.9 486.1 217.9 480.2 219.3 473 218.3ZM466.9 219.8 474.1 220.8 467.9 222.3 460.6 221.2ZM454.1 222.8 461.4 223.8 454.7 225.4 447.3 224.3ZM440.4 226 447.8 227.1 440.7 228.8 433.3 227.7ZM425.9 229.4 433.4 230.6 425.8 232.4 418.2 231.2ZM410.3 233 417.9 234.3 409.7 236.3 402.1 235ZM393.6 237 401.3 238.3 392.5 240.4 384.8 239ZM375.7 241.2 383.4 242.6 374 244.9 366.2 243.4ZM356.4 245.7 364.2 247.3 354 249.7 346.1 248.1ZM335.5 250.6 343.3 252.3 332.3 255 324.4 253.2ZM312.9 255.9 320.7 257.8 308.7 260.7 300.8 258.7ZM288.3 261.7 296.1 263.7 283 266.9 275.1 264.7ZM261.4 268 269.2 270.2 254.8 273.7 247 271.3ZM703.4 165.4 707.6 165.6 706.4 165.9 702.3 165.7ZM701.1 166 705.3 166.2 704.2 166.5 700 166.3ZM698.8 166.6 703 166.8 701.8 167.1 697.6 166.9ZM696.4 167.1 700.6 167.3 699.4 167.6 695.1 167.4ZM693.9 167.7 698.2 168 697 168.3 692.6 168ZM691.3 168.4 695.7 168.6 694.4 168.9 690 168.7ZM688.7 169 693.2 169.2 691.8 169.5 687.4 169.3ZM686 169.6 690.5 169.9 689.2 170.2 684.6 170ZM683.2 170.3 687.8 170.5 686.4 170.9 681.8 170.7ZM680.4 171 685 171.2 683.5 171.6 678.9 171.4ZM677.4 171.7 682.1 172 680.6 172.3 675.9 172.1ZM674.4 172.4 679.1 172.7 677.6 173.1 672.9 172.8ZM671.3 173.2 676 173.5 674.5 173.8 669.7 173.6ZM668.1 174 672.9 174.2 671.2 174.6 666.4 174.4ZM664.7 174.8 669.6 175.1 667.9 175.5 663 175.2ZM661.3 175.6 666.2 175.9 664.5 176.3 659.5 176ZM657.7 176.5 662.7 176.8 660.9 177.2 655.9 176.9ZM654 177.4 659.1 177.7 657.3 178.1 652.2 177.8ZM650.2 178.3 655.4 178.6 653.5 179.1 648.3 178.7ZM646.3 179.2 651.5 179.6 649.5 180 644.3 179.7ZM642.2 180.2 647.5 180.5 645.4 181.1 640.1 180.7ZM638 181.2 643.3 181.6 641.2 182.1 635.8 181.8ZM633.6 182.3 639 182.7 636.8 183.2 631.4 182.8ZM629.1 183.4 634.5 183.8 632.2 184.3 626.7 183.9ZM624.3 184.5 629.9 184.9 627.5 185.5 621.9 185.1ZM619.4 185.7 625.1 186.1 622.6 186.7 616.9 186.3ZM614.3 186.9 620 187.4 617.5 188 611.7 187.6ZM609 188.2 614.8 188.7 612.1 189.3 606.3 188.9ZM603.5 189.6 609.4 190 606.5 190.7 600.6 190.2ZM597.7 190.9 603.7 191.4 600.7 192.2 594.7 191.7ZM591.7 192.4 597.7 192.9 594.7 193.7 588.6 193.1ZM585.4 193.9 591.5 194.4 588.3 195.2 582.1 194.7ZM578.8 195.5 585 196.1 581.7 196.9 575.4 196.3ZM571.9 197.2 578.3 197.7 574.7 198.6 568.4 198ZM564.7 198.9 571.1 199.5 567.5 200.4 561 199.8ZM557.2 200.7 563.7 201.4 559.8 202.3 553.2 201.7ZM549.2 202.6 555.8 203.3 551.8 204.3 545.1 203.6ZM540.9 204.7 547.6 205.4 543.3 206.4 536.5 205.7ZM532.1 206.8 538.9 207.5 534.4 208.6 527.5 207.9ZM522.8 209 529.8 209.8 525 211 518 210.2ZM513.1 211.4 520.1 212.2 515 213.4 508 212.6ZM502.7 213.9 509.9 214.7 504.5 216.1 497.3 215.2ZM491.8 216.5 499 217.4 493.4 218.8 486.1 217.9ZM480.2 219.3 487.5 220.3 481.5 221.8 474.1 220.8ZM467.9 222.3 475.3 223.3 468.9 224.9 461.4 223.8ZM454.7 225.4 462.3 226.5 455.4 228.2 447.8 227.1ZM440.7 228.8 448.4 230 441.1 231.8 433.4 230.6ZM425.8 232.4 433.5 233.7 425.7 235.6 417.9 234.3ZM409.7 236.3 417.6 237.6 409.2 239.7 401.3 238.3ZM392.5 240.4 400.4 241.9 391.4 244.2 383.4 242.6ZM374 244.9 382 246.5 372.2 248.9 364.2 247.3ZM354 249.7 362 251.5 351.4 254.1 343.3 252.3ZM332.3 255 340.3 256.8 328.8 259.7 320.7 257.8ZM308.7 260.7 316.8 262.7 304.2 265.8 296.1 263.7ZM283 266.9 291 269.1 277.2 272.5 269.2 270.2ZM254.8 273.7 262.8 276.1 247.6 279.9 239.7 277.3ZM708.6 165.4 712.8 165.5 711.7 165.8 707.6 165.6ZM706.4 165.9 710.6 166.1 709.5 166.4 705.3 166.2ZM704.2 166.5 708.4 166.7 707.3 167 703 166.8ZM701.8 167.1 706.1 167.3 705 167.6 700.6 167.3ZM699.4 167.6 703.8 167.9 702.6 168.2 698.2 168ZM697 168.3 701.4 168.5 700.1 168.8 695.7 168.6ZM694.4 168.9 698.9 169.1 697.6 169.4 693.2 169.2ZM691.8 169.5 696.3 169.8 695 170.1 690.5 169.9ZM689.2 170.2 693.7 170.4 692.4 170.8 687.8 170.5ZM686.4 170.9 691 171.1 689.6 171.5 685 171.2ZM683.5 171.6 688.2 171.8 686.8 172.2 682.1 172ZM680.6 172.3 685.3 172.6 683.9 173 679.1 172.7ZM677.6 173.1 682.4 173.3 680.9 173.7 676 173.5ZM674.5 173.8 679.3 174.1 677.7 174.5 672.9 174.2ZM671.2 174.6 676.1 174.9 674.5 175.3 669.6 175.1ZM667.9 175.5 672.9 175.8 671.2 176.2 666.2 175.9ZM664.5 176.3 669.5 176.6 667.8 177.1 662.7 176.8ZM660.9 177.2 666 177.5 664.2 178 659.1 177.7ZM657.3 178.1 662.4 178.4 660.6 178.9 655.4 178.6ZM653.5 179.1 658.7 179.4 656.8 179.9 651.5 179.6ZM649.5 180 654.8 180.4 652.8 180.9 647.5 180.5ZM645.4 181.1 650.8 181.4 648.7 181.9 643.3 181.6ZM641.2 182.1 646.6 182.5 644.5 183 639 182.7ZM636.8 183.2 642.3 183.6 640.1 184.2 634.5 183.8ZM632.2 184.3 637.8 184.7 635.5 185.3 629.9 184.9ZM627.5 185.5 633.2 185.9 630.8 186.5 625.1 186.1ZM622.6 186.7 628.3 187.2 625.8 187.8 620 187.4ZM617.5 188 623.3 188.5 620.7 189.1 614.8 188.7ZM612.1 189.3 618 189.8 615.3 190.5 609.4 190ZM606.5 190.7 612.6 191.2 609.7 191.9 603.7 191.4ZM600.7 192.2 606.8 192.7 603.9 193.4 597.7 192.9ZM594.7 193.7 600.9 194.2 597.8 195 591.5 194.4ZM588.3 195.2 594.6 195.8 591.4 196.6 585 196.1ZM581.7 196.9 588.1 197.5 584.7 198.3 578.3 197.7ZM574.7 198.6 581.2 199.2 577.7 200.1 571.1 199.5ZM567.5 200.4 574 201.1 570.3 202 563.7 201.4ZM559.8 202.3 566.5 203 562.6 204 555.8 203.3ZM551.8 204.3 558.6 205 554.4 206.1 547.6 205.4ZM543.3 206.4 550.2 207.2 545.9 208.3 538.9 207.5ZM534.4 208.6 541.4 209.4 536.8 210.6 529.8 209.8ZM525 211 532.1 211.8 527.2 213 520.1 212.2ZM515 213.4 522.3 214.3 517.1 215.6 509.9 214.7ZM504.5 216.1 511.8 217 506.4 218.4 499 217.4ZM493.4 218.8 500.8 219.8 495 221.3 487.5 220.3ZM481.5 221.8 489.1 222.8 482.9 224.4 475.3 223.3ZM468.9 224.9 476.6 226 470 227.7 462.3 226.5ZM455.4 228.2 463.2 229.4 456.2 231.2 448.4 230ZM441.1 231.8 448.9 233.1 441.4 235 433.5 233.7ZM425.7 235.6 433.7 237 425.6 239 417.6 237.6ZM409.2 239.7 417.2 241.2 408.5 243.4 400.4 241.9ZM391.4 244.2 399.5 245.7 390.1 248.1 382 246.5ZM372.2 248.9 380.4 250.6 370.2 253.2 362 251.5ZM351.4 254.1 359.7 255.9 348.6 258.7 340.3 256.8ZM328.8 259.7 337.1 261.7 325.1 264.8 316.8 262.7ZM304.2 265.8 312.5 268 299.3 271.3 291 269.1ZM277.2 272.5 285.5 274.9 271.1 278.6 262.8 276.1ZM247.6 279.9 255.9 282.5 239.9 286.6 231.7 283.8ZM711.7 165.8 716 166 714.9 166.3 710.6 166.1ZM709.5 166.4 713.8 166.6 712.7 166.9 708.4 166.7ZM707.3 167 711.6 167.2 710.5 167.5 706.1 167.3ZM705 167.6 709.3 167.8 708.2 168.1 703.8 167.9ZM702.6 168.2 707 168.4 705.8 168.7 701.4 168.5ZM700.1 168.8 704.6 169 703.4 169.3 698.9 169.1ZM697.6 169.4 702.1 169.7 700.9 170 696.3 169.8ZM695 170.1 699.6 170.3 698.3 170.7 693.7 170.4ZM692.4 170.8 697 171 695.7 171.4 691 171.1ZM689.6 171.5 694.3 171.7 692.9 172.1 688.2 171.8ZM686.8 172.2 691.5 172.5 690.1 172.8 685.3 172.6ZM683.9 173 688.7 173.2 687.2 173.6 682.4 173.3ZM680.9 173.7 685.7 174 684.2 174.4 679.3 174.1ZM677.7 174.5 682.7 174.8 681.1 175.2 676.1 174.9ZM674.5 175.3 679.5 175.6 677.9 176.1 672.9 175.8ZM671.2 176.2 676.3 176.5 674.6 176.9 669.5 176.6ZM667.8 177.1 672.9 177.4 671.2 177.8 666 177.5ZM664.2 178 669.4 178.3 667.6 178.8 662.4 178.4ZM660.6 178.9 665.8 179.2 664 179.7 658.7 179.4ZM656.8 179.9 662.1 180.2 660.2 180.7 654.8 180.4ZM652.8 180.9 658.2 181.2 656.2 181.8 650.8 181.4ZM648.7 181.9 654.2 182.3 652.2 182.9 646.6 182.5ZM644.5 183 650.1 183.4 647.9 184 642.3 183.6ZM640.1 184.2 645.7 184.5 643.5 185.1 637.8 184.7ZM635.5 185.3 641.2 185.7 638.9 186.3 633.2 185.9ZM630.8 186.5 636.6 187 634.2 187.6 628.3 187.2ZM625.8 187.8 631.7 188.2 629.2 188.9 623.3 188.5ZM620.7 189.1 626.7 189.6 624 190.3 618 189.8ZM615.3 190.5 621.4 191 618.7 191.7 612.6 191.2ZM609.7 191.9 615.9 192.4 613 193.2 606.8 192.7ZM603.9 193.4 610.1 193.9 607.2 194.7 600.9 194.2ZM597.8 195 604.1 195.5 601 196.3 594.6 195.8ZM591.4 196.6 597.8 197.2 594.6 198 588.1 197.5ZM584.7 198.3 591.2 198.9 587.8 199.8 581.2 199.2ZM577.7 200.1 584.3 200.8 580.7 201.7 574 201.1ZM570.3 202 577.1 202.7 573.3 203.7 566.5 203ZM562.6 204 569.4 204.7 565.5 205.7 558.6 205ZM554.4 206.1 561.4 206.8 557.2 207.9 550.2 207.2ZM545.9 208.3 552.9 209 548.5 210.2 541.4 209.4ZM536.8 210.6 544 211.4 539.3 212.6 532.1 211.8ZM527.2 213 534.5 213.9 529.6 215.2 522.3 214.3ZM517.1 215.6 524.5 216.5 519.3 217.9 511.8 217ZM506.4 218.4 513.9 219.3 508.4 220.8 500.8 219.8ZM495 221.3 502.7 222.3 496.8 223.9 489.1 222.8ZM482.9 224.4 490.7 225.5 484.4 227.1 476.6 226ZM470 227.7 477.9 228.8 471.2 230.6 463.2 229.4ZM456.2 231.2 464.2 232.4 457 234.3 448.9 233.1ZM441.4 235 449.5 236.3 441.8 238.4 433.7 237ZM425.6 239 433.8 240.5 425.5 242.7 417.2 241.2ZM408.5 243.4 416.9 244.9 407.9 247.3 399.5 245.7ZM390.1 248.1 398.6 249.8 388.8 252.3 380.4 250.6ZM370.2 253.2 378.7 255 368.2 257.8 359.7 255.9ZM348.6 258.7 357.2 260.7 345.7 263.7 337.1 261.7ZM325.1 264.8 333.7 266.9 321.1 270.2 312.5 268ZM299.3 271.3 307.9 273.7 294.1 277.3 285.5 274.9ZM271.1 278.6 279.6 281.2 264.4 285.2 255.9 282.5ZM239.9 286.6 248.3 289.4 231.4 293.9 223 290.9ZM717 165.7 721.2 165.9 720.2 166.2 716 166ZM714.9 166.3 719.2 166.5 718.1 166.8 713.8 166.6ZM712.7 166.9 717 167.1 716 167.4 711.6 167.2ZM710.5 167.5 714.9 167.7 713.7 168 709.3 167.8ZM708.2 168.1 712.6 168.3 711.5 168.6 707 168.4ZM705.8 168.7 710.3 168.9 709.1 169.2 704.6 169ZM703.4 169.3 707.9 169.6 706.7 169.9 702.1 169.7ZM700.9 170 705.5 170.2 704.2 170.6 699.6 170.3ZM698.3 170.7 703 170.9 701.7 171.3 697 171ZM695.7 171.4 700.4 171.6 699 172 694.3 171.7ZM692.9 172.1 697.7 172.3 696.3 172.7 691.5 172.5ZM690.1 172.8 694.9 173.1 693.5 173.5 688.7 173.2ZM687.2 173.6 692.1 173.9 690.6 174.3 685.7 174ZM684.2 174.4 689.1 174.7 687.6 175.1 682.7 174.8ZM681.1 175.2 686.1 175.5 684.6 175.9 679.5 175.6ZM677.9 176.1 683 176.4 681.4 176.8 676.3 176.5ZM674.6 176.9 679.7 177.2 678.1 177.7 672.9 177.4ZM671.2 177.8 676.4 178.1 674.7 178.6 669.4 178.3ZM667.6 178.8 672.9 179.1 671.1 179.6 665.8 179.2ZM664 179.7 669.3 180.1 667.5 180.6 662.1 180.2ZM660.2 180.7 665.6 181.1 663.7 181.6 658.2 181.2ZM656.2 181.8 661.7 182.1 659.8 182.7 654.2 182.3ZM652.2 182.9 657.7 183.2 655.7 183.8 650.1 183.4ZM647.9 184 653.6 184.4 651.4 184.9 645.7 184.5ZM643.5 185.1 649.3 185.5 647 186.1 641.2 185.7ZM638.9 186.3 644.8 186.8 642.4 187.4 636.6 187ZM634.2 187.6 640.1 188 637.7 188.7 631.7 188.2ZM629.2 188.9 635.2 189.4 632.7 190 626.7 189.6ZM624 190.3 630.1 190.7 627.5 191.5 621.4 191ZM618.7 191.7 624.8 192.2 622.1 192.9 615.9 192.4ZM613 193.2 619.3 193.7 616.5 194.5 610.1 193.9ZM607.2 194.7 613.5 195.3 610.5 196.1 604.1 195.5ZM601 196.3 607.5 196.9 604.4 197.8 597.8 197.2ZM594.6 198 601.1 198.6 597.9 199.5 591.2 198.9ZM587.8 199.8 594.5 200.5 591.1 201.4 584.3 200.8ZM580.7 201.7 587.5 202.4 583.9 203.3 577.1 202.7ZM573.3 203.7 580.2 204.3 576.4 205.4 569.4 204.7ZM565.5 205.7 572.5 206.4 568.5 207.5 561.4 206.8ZM557.2 207.9 564.4 208.7 560.1 209.8 552.9 209ZM548.5 210.2 555.8 211 551.3 212.2 544 211.4ZM539.3 212.6 546.7 213.5 542 214.8 534.5 213.9ZM529.6 215.2 537.1 216.1 532.1 217.4 524.5 216.5ZM519.3 217.9 526.9 218.9 521.6 220.3 513.9 219.3ZM508.4 220.8 516.1 221.8 510.5 223.3 502.7 222.3ZM496.8 223.9 504.6 224.9 498.6 226.6 490.7 225.5ZM484.4 227.1 492.4 228.3 485.9 230 477.9 228.8ZM471.2 230.6 479.3 231.8 472.4 233.7 464.2 232.4ZM457 234.3 465.2 235.7 457.8 237.7 449.5 236.3ZM441.8 238.4 450.2 239.8 442.2 241.9 433.8 240.5ZM425.5 242.7 434 244.2 425.4 246.5 416.9 244.9ZM407.9 247.3 416.5 248.9 407.2 251.5 398.6 249.8ZM388.8 252.3 397.5 254.1 387.4 256.9 378.7 255ZM368.2 257.8 376.9 259.7 366 262.7 357.2 260.7ZM345.7 263.7 354.5 265.8 342.5 269.1 333.7 266.9ZM321.1 270.2 329.9 272.5 316.8 276.1 307.9 273.7ZM294.1 277.3 302.9 279.9 288.4 283.8 279.6 281.2ZM264.4 285.2 273.1 288 257 292.4 248.3 289.4ZM720.2 166.2 724.5 166.4 723.5 166.7 719.2 166.5ZM718.1 166.8 722.5 167 721.4 167.3 717 167.1ZM716 167.4 720.4 167.6 719.3 167.9 714.9 167.7ZM713.7 168 718.2 168.2 717.1 168.5 712.6 168.3ZM711.5 168.6 716 168.8 714.8 169.1 710.3 168.9ZM709.1 169.2 713.7 169.5 712.5 169.8 707.9 169.6ZM706.7 169.9 711.3 170.1 710.1 170.5 705.5 170.2ZM704.2 170.6 708.9 170.8 707.6 171.1 703 170.9ZM701.7 171.3 706.4 171.5 705.1 171.9 700.4 171.6ZM699 172 703.8 172.2 702.5 172.6 697.7 172.3ZM696.3 172.7 701.2 173 699.8 173.4 694.9 173.1ZM693.5 173.5 698.4 173.7 697 174.1 692.1 173.9ZM690.6 174.3 695.6 174.5 694.1 174.9 689.1 174.7ZM687.6 175.1 692.7 175.4 691.2 175.8 686.1 175.5ZM684.6 175.9 689.7 176.2 688.1 176.6 683 176.4ZM681.4 176.8 686.5 177.1 684.9 177.5 679.7 177.2ZM678.1 177.7 683.3 178 681.7 178.5 676.4 178.1ZM674.7 178.6 680 178.9 678.3 179.4 672.9 179.1ZM671.1 179.6 676.5 179.9 674.7 180.4 669.3 180.1ZM667.5 180.6 672.9 180.9 671.1 181.4 665.6 181.1ZM663.7 181.6 669.2 182 667.3 182.5 661.7 182.1ZM659.8 182.7 665.4 183 663.4 183.6 657.7 183.2ZM655.7 183.8 661.4 184.2 659.3 184.8 653.6 184.4ZM651.4 184.9 657.2 185.3 655.1 185.9 649.3 185.5ZM647 186.1 652.9 186.6 650.7 187.2 644.8 186.8ZM642.4 187.4 648.4 187.8 646.1 188.5 640.1 188ZM637.7 188.7 643.7 189.1 641.3 189.8 635.2 189.4ZM632.7 190 638.8 190.5 636.3 191.2 630.1 190.7ZM627.5 191.5 633.7 191.9 631.1 192.7 624.8 192.2ZM622.1 192.9 628.4 193.4 625.7 194.2 619.3 193.7ZM616.5 194.5 622.9 195 620 195.8 613.5 195.3ZM610.5 196.1 617.1 196.6 614.1 197.5 607.5 196.9ZM604.4 197.8 611 198.4 607.8 199.2 601.1 198.6ZM597.9 199.5 604.6 200.2 601.3 201.1 594.5 200.5ZM591.1 201.4 597.9 202 594.4 203 587.5 202.4ZM583.9 203.3 590.9 204 587.2 205 580.2 204.3ZM576.4 205.4 583.5 206.1 579.6 207.2 572.5 206.4ZM568.5 207.5 575.7 208.3 571.6 209.4 564.4 208.7ZM560.1 209.8 567.5 210.6 563.2 211.8 555.8 211ZM551.3 212.2 558.8 213.1 554.2 214.3 546.7 213.5ZM542 214.8 549.6 215.6 544.8 217 537.1 216.1ZM532.1 217.4 539.8 218.4 534.7 219.8 526.9 218.9ZM521.6 220.3 529.5 221.3 524 222.8 516.1 221.8ZM510.5 223.3 518.5 224.4 512.7 226 504.6 224.9ZM498.6 226.6 506.7 227.7 500.5 229.4 492.4 228.3ZM485.9 230 494.2 231.2 487.6 233.1 479.3 231.8ZM472.4 233.7 480.8 235 473.7 237 465.2 235.7ZM457.8 237.7 466.4 239.1 458.7 241.2 450.2 239.8ZM442.2 241.9 450.9 243.4 442.7 245.7 434 244.2ZM425.4 246.5 434.1 248.1 425.3 250.6 416.5 248.9ZM407.2 251.5 416 253.2 406.4 255.9 397.5 254.1ZM387.4 256.9 396.4 258.8 385.9 261.7 376.9 259.7ZM366 262.7 375 264.8 363.6 268 354.5 265.8ZM342.5 269.1 351.6 271.4 339.1 274.9 329.9 272.5ZM316.8 276.1 325.9 278.6 312.1 282.5 302.9 279.9ZM288.4 283.8 297.5 286.6 282.2 290.9 273.1 288ZM257 292.4 266.1 295.4 249.1 300.2 240.1 297ZM725.5 166.1 729.8 166.3 728.8 166.6 724.5 166.4ZM723.5 166.7 727.8 166.9 726.8 167.2 722.5 167ZM721.4 167.3 725.8 167.5 724.8 167.8 720.4 167.6ZM719.3 167.9 723.7 168.1 722.7 168.4 718.2 168.2ZM717.1 168.5 721.6 168.7 720.5 169 716 168.8ZM714.8 169.1 719.4 169.3 718.3 169.7 713.7 169.5ZM712.5 169.8 717.1 170 716 170.3 711.3 170.1ZM710.1 170.5 714.8 170.7 713.6 171 708.9 170.8ZM707.6 171.1 712.4 171.4 711.2 171.7 706.4 171.5ZM705.1 171.9 709.9 172.1 708.6 172.5 703.8 172.2ZM702.5 172.6 707.4 172.9 706 173.2 701.2 173ZM699.8 173.4 704.7 173.6 703.4 174 698.4 173.7ZM697 174.1 702 174.4 700.6 174.8 695.6 174.5ZM694.1 174.9 699.2 175.2 697.8 175.7 692.7 175.4ZM691.2 175.8 696.3 176.1 694.8 176.5 689.7 176.2ZM688.1 176.6 693.3 176.9 691.8 177.4 686.5 177.1ZM684.9 177.5 690.2 177.9 688.6 178.3 683.3 178ZM681.7 178.5 687 178.8 685.3 179.3 680 178.9ZM678.3 179.4 683.7 179.8 682 180.3 676.5 179.9ZM674.7 180.4 680.2 180.8 678.5 181.3 672.9 180.9ZM671.1 181.4 676.7 181.8 674.8 182.3 669.2 182ZM667.3 182.5 672.9 182.9 671 183.4 665.4 183ZM663.4 183.6 669.1 184 667.1 184.6 661.4 184.2ZM659.3 184.8 665.1 185.2 663.1 185.8 657.2 185.3ZM655.1 185.9 661 186.4 658.8 187 652.9 186.6ZM650.7 187.2 656.6 187.6 654.4 188.3 648.4 187.8ZM646.1 188.5 652.2 188.9 649.8 189.6 643.7 189.1ZM641.3 189.8 647.5 190.3 645.1 191 638.8 190.5ZM636.3 191.2 642.6 191.7 640.1 192.4 633.7 191.9ZM631.1 192.7 637.5 193.2 634.9 194 628.4 193.4ZM625.7 194.2 632.2 194.8 629.4 195.6 622.9 195ZM620 195.8 626.6 196.4 623.7 197.2 617.1 196.6ZM614.1 197.5 620.7 198.1 617.7 199 611 198.4ZM607.8 199.2 614.6 199.9 611.5 200.8 604.6 200.2ZM601.3 201.1 608.2 201.7 604.9 202.7 597.9 202ZM594.4 203 601.5 203.7 598 204.7 590.9 204ZM587.2 205 594.4 205.8 590.7 206.8 583.5 206.1ZM579.6 207.2 586.9 207.9 583 209.1 575.7 208.3ZM571.6 209.4 579 210.2 574.9 211.4 567.5 210.6ZM563.2 211.8 570.7 212.6 566.4 213.9 558.8 213.1ZM554.2 214.3 561.9 215.2 557.3 216.6 549.6 215.6ZM544.8 217 552.6 217.9 547.7 219.4 539.8 218.4ZM534.7 219.8 542.7 220.8 537.5 222.3 529.5 221.3ZM524 222.8 532.1 223.9 526.6 225.5 518.5 224.4ZM512.7 226 520.9 227.2 515 228.9 506.7 227.7ZM500.5 229.4 508.9 230.6 502.6 232.5 494.2 231.2ZM487.6 233.1 496.1 234.4 489.3 236.3 480.8 235ZM473.7 237 482.3 238.4 475.1 240.5 466.4 239.1ZM458.7 241.2 467.5 242.7 459.7 245 450.9 243.4ZM442.7 245.7 451.6 247.3 443.1 249.8 434.1 248.1ZM425.3 250.6 434.3 252.4 425.2 255 416 253.2ZM406.4 255.9 415.6 257.8 405.6 260.7 396.4 258.8ZM385.9 261.7 395.2 263.7 384.3 266.9 375 264.8ZM363.6 268 372.9 270.2 361 273.7 351.6 271.4ZM339.1 274.9 348.5 277.4 335.3 281.2 325.9 278.6ZM312.1 282.5 321.5 285.2 307 289.4 297.5 286.6ZM282.2 290.9 291.7 293.9 275.5 298.6 266.1 295.4ZM249.1 300.2 258.4 303.6 240.3 308.9 231 305.3ZM728.8 166.6 733.2 166.8 732.2 167.1 727.8 166.9ZM726.8 167.2 731.3 167.4 730.3 167.7 725.8 167.5ZM724.8 167.8 729.3 168 728.2 168.3 723.7 168.1ZM722.7 168.4 727.2 168.6 726.2 168.9 721.6 168.7ZM720.5 169 725.1 169.2 724 169.6 719.4 169.3ZM718.3 169.7 722.9 169.9 721.8 170.2 717.1 170ZM716 170.3 720.7 170.6 719.5 170.9 714.8 170.7ZM713.6 171 718.4 171.3 717.2 171.6 712.4 171.4ZM711.2 171.7 716 172 714.8 172.4 709.9 172.1ZM708.6 172.5 713.5 172.7 712.3 173.1 707.4 172.9ZM706 173.2 711 173.5 709.7 173.9 704.7 173.6ZM703.4 174 708.4 174.3 707 174.7 702 174.4ZM700.6 174.8 705.7 175.1 704.3 175.5 699.2 175.2ZM697.8 175.7 702.9 175.9 701.5 176.4 696.3 176.1ZM694.8 176.5 700 176.8 698.5 177.3 693.3 176.9ZM691.8 177.4 697 177.7 695.5 178.2 690.2 177.9ZM688.6 178.3 694 178.6 692.4 179.1 687 178.8ZM685.3 179.3 690.8 179.6 689.1 180.1 683.7 179.8ZM682 180.3 687.5 180.6 685.8 181.1 680.2 180.8ZM678.5 181.3 684 181.6 682.3 182.2 676.7 181.8ZM674.8 182.3 680.5 182.7 678.7 183.2 672.9 182.9ZM671 183.4 676.8 183.8 674.9 184.4 669.1 184ZM667.1 184.6 673 185 671 185.6 665.1 185.2ZM663.1 185.8 669 186.2 666.9 186.8 661 186.4ZM658.8 187 664.8 187.4 662.7 188.1 656.6 187.6ZM654.4 188.3 660.5 188.7 658.3 189.4 652.2 188.9ZM649.8 189.6 656 190.1 653.7 190.8 647.5 190.3ZM645.1 191 651.4 191.5 648.9 192.2 642.6 191.7ZM640.1 192.4 646.5 193 643.9 193.7 637.5 193.2ZM634.9 194 641.4 194.5 638.7 195.3 632.2 194.8ZM629.4 195.6 636 196.1 633.3 196.9 626.6 196.4ZM623.7 197.2 630.4 197.8 627.5 198.7 620.7 198.1ZM617.7 199 624.6 199.6 621.5 200.5 614.6 199.9ZM611.5 200.8 618.4 201.4 615.2 202.4 608.2 201.7ZM604.9 202.7 612 203.4 608.6 204.4 601.5 203.7ZM598 204.7 605.2 205.4 601.6 206.5 594.4 205.8ZM590.7 206.8 598 207.6 594.3 208.7 586.9 207.9ZM583 209.1 590.5 209.8 586.6 211 579 210.2ZM574.9 211.4 582.5 212.2 578.4 213.5 570.7 212.6ZM566.4 213.9 574.1 214.8 569.7 216.1 561.9 215.2ZM557.3 216.6 565.2 217.5 560.5 218.9 552.6 217.9ZM547.7 219.4 555.7 220.3 550.7 221.8 542.7 220.8ZM537.5 222.3 545.6 223.4 540.4 225 532.1 223.9ZM526.6 225.5 534.9 226.6 529.3 228.3 520.9 227.2ZM515 228.9 523.5 230.1 517.5 231.9 508.9 230.6ZM502.6 232.5 511.2 233.7 504.8 235.7 496.1 234.4ZM489.3 236.3 498.1 237.7 491.2 239.8 482.3 238.4ZM475.1 240.5 484 242 476.5 244.2 467.5 242.7ZM459.7 245 468.8 246.5 460.7 249 451.6 247.3ZM443.1 249.8 452.3 251.5 443.6 254.1 434.3 252.4ZM425.2 255 434.5 256.9 425 259.7 415.6 257.8ZM405.6 260.7 415.1 262.7 404.8 265.9 395.2 263.7ZM384.3 266.9 393.9 269.1 382.6 272.5 372.9 270.2ZM361 273.7 370.7 276.1 358.2 279.9 348.5 277.4ZM335.3 281.2 345.1 283.8 331.3 288 321.5 285.2ZM307 289.4 316.8 292.4 301.4 297 291.7 293.9ZM275.5 298.6 285.2 301.9 268.1 307.1 258.4 303.6ZM240.3 308.9 249.9 312.5 230.6 318.4 221.1 314.4ZM734.2 166.5 738.5 166.7 737.6 167 733.2 166.8ZM732.2 167.1 736.7 167.3 735.7 167.6 731.3 167.4ZM730.3 167.7 734.8 167.9 733.8 168.2 729.3 168ZM728.2 168.3 732.8 168.5 731.8 168.8 727.2 168.6ZM726.2 168.9 730.7 169.1 729.7 169.5 725.1 169.2ZM724 169.6 728.7 169.8 727.6 170.1 722.9 169.9ZM721.8 170.2 726.5 170.5 725.4 170.8 720.7 170.6ZM719.5 170.9 724.3 171.2 723.2 171.5 718.4 171.3ZM717.2 171.6 722 171.9 720.8 172.2 716 172ZM714.8 172.4 719.6 172.6 718.4 173 713.5 172.7ZM712.3 173.1 717.2 173.4 716 173.8 711 173.5ZM709.7 173.9 714.7 174.2 713.4 174.6 708.4 174.3ZM707 174.7 712.1 175 710.8 175.4 705.7 175.1ZM704.3 175.5 709.5 175.8 708.1 176.2 702.9 175.9ZM701.5 176.4 706.7 176.7 705.3 177.1 700 176.8ZM698.5 177.3 703.8 177.6 702.4 178 697 177.7ZM695.5 178.2 700.9 178.5 699.4 179 694 178.6ZM692.4 179.1 697.8 179.4 696.3 179.9 690.8 179.6ZM689.1 180.1 694.7 180.4 693 180.9 687.5 180.6ZM685.8 181.1 691.4 181.5 689.7 182 684 181.6ZM682.3 182.2 688 182.5 686.2 183.1 680.5 182.7ZM678.7 183.2 684.4 183.6 682.6 184.2 676.8 183.8ZM674.9 184.4 680.8 184.8 678.9 185.4 673 185ZM671 185.6 677 186 675 186.6 669 186.2ZM666.9 186.8 673 187.2 670.9 187.8 664.8 187.4ZM662.7 188.1 668.9 188.5 666.7 189.2 660.5 188.7ZM658.3 189.4 664.6 189.8 662.3 190.5 656 190.1ZM653.7 190.8 660.1 191.2 657.8 192 651.4 191.5ZM648.9 192.2 655.4 192.7 653 193.5 646.5 193ZM643.9 193.7 650.5 194.2 648 195 641.4 194.5ZM638.7 195.3 645.4 195.8 642.7 196.7 636 196.1ZM633.3 196.9 640 197.5 637.3 198.4 630.4 197.8ZM627.5 198.7 634.4 199.3 631.5 200.2 624.6 199.6ZM621.5 200.5 628.6 201.1 625.5 202.1 618.4 201.4ZM615.2 202.4 622.4 203 619.2 204 612 203.4ZM608.6 204.4 615.9 205.1 612.5 206.1 605.2 205.4ZM601.6 206.5 609 207.2 605.5 208.3 598 207.6ZM594.3 208.7 601.8 209.5 598.1 210.6 590.5 209.8ZM586.6 211 594.2 211.8 590.3 213.1 582.5 212.2ZM578.4 213.5 586.2 214.4 582 215.7 574.1 214.8ZM569.7 216.1 577.7 217 573.2 218.4 565.2 217.5ZM560.5 218.9 568.6 219.9 563.9 221.3 555.7 220.3ZM550.7 221.8 559 222.9 554 224.4 545.6 223.4ZM540.4 225 548.8 226.1 543.4 227.7 534.9 226.6ZM529.3 228.3 537.9 229.5 532.1 231.3 523.5 230.1ZM517.5 231.9 526.2 233.1 520 235 511.2 233.7ZM504.8 235.7 513.7 237 507.1 239.1 498.1 237.7ZM491.2 239.8 500.2 241.2 493.1 243.5 484 242ZM476.5 244.2 485.8 245.8 478.1 248.2 468.8 246.5ZM460.7 249 470.1 250.7 461.8 253.3 452.3 251.5ZM443.6 254.1 453.2 256 444.1 258.8 434.5 256.9ZM425 259.7 434.7 261.7 424.9 264.8 415.1 262.7ZM404.8 265.9 414.6 268 403.8 271.4 393.9 269.1ZM382.6 272.5 392.5 274.9 380.7 278.6 370.7 276.1ZM358.2 279.9 368.3 282.5 355.2 286.6 345.1 283.8ZM331.3 288 341.4 290.9 326.9 295.4 316.8 292.4ZM301.4 297 311.6 300.2 295.3 305.3 285.2 301.9ZM268.1 307.1 278.2 310.7 259.9 316.4 249.9 312.5ZM737.6 167 742.1 167.2 741.2 167.5 736.7 167.3ZM735.7 167.6 740.2 167.8 739.3 168.1 734.8 167.9ZM733.8 168.2 738.3 168.4 737.4 168.7 732.8 168.5ZM731.8 168.8 736.4 169 735.4 169.4 730.7 169.1ZM729.7 169.5 734.4 169.7 733.4 170 728.7 169.8ZM727.6 170.1 732.3 170.4 731.3 170.7 726.5 170.5ZM725.4 170.8 730.2 171.1 729.1 171.4 724.3 171.2ZM723.2 171.5 728 171.8 726.9 172.1 722 171.9ZM720.8 172.2 725.7 172.5 724.6 172.9 719.6 172.6ZM718.4 173 723.4 173.3 722.2 173.6 717.2 173.4ZM716 173.8 721 174 719.8 174.4 714.7 174.2ZM713.4 174.6 718.5 174.8 717.3 175.3 712.1 175ZM710.8 175.4 716 175.7 714.7 176.1 709.5 175.8ZM708.1 176.2 713.3 176.5 712 177 706.7 176.7ZM705.3 177.1 710.6 177.4 709.2 177.9 703.8 177.6ZM702.4 178 707.8 178.3 706.3 178.8 700.9 178.5ZM699.4 179 704.8 179.3 703.3 179.8 697.8 179.4ZM696.3 179.9 701.8 180.3 700.3 180.8 694.7 180.4ZM693 180.9 698.7 181.3 697.1 181.8 691.4 181.5ZM689.7 182 695.4 182.4 693.7 182.9 688 182.5ZM686.2 183.1 692 183.4 690.3 184 684.4 183.6ZM682.6 184.2 688.5 184.6 686.7 185.2 680.8 184.8ZM678.9 185.4 684.9 185.8 683 186.4 677 186ZM675 186.6 681.1 187 679.1 187.6 673 187.2ZM670.9 187.8 677.1 188.3 675.1 189 668.9 188.5ZM666.7 189.2 673 189.6 670.9 190.3 664.6 189.8ZM662.3 190.5 668.7 191 666.5 191.7 660.1 191.2ZM657.8 192 664.2 192.5 661.9 193.2 655.4 192.7ZM653 193.5 659.6 194 657.2 194.8 650.5 194.2ZM648 195 654.7 195.6 652.2 196.4 645.4 195.8ZM642.7 196.7 649.6 197.2 646.9 198.1 640 197.5ZM637.3 198.4 644.2 199 641.4 199.9 634.4 199.3ZM631.5 200.2 638.6 200.8 635.7 201.7 628.6 201.1ZM625.5 202.1 632.7 202.7 629.6 203.7 622.4 203ZM619.2 204 626.5 204.7 623.3 205.8 615.9 205.1ZM612.5 206.1 620 206.9 616.6 208 609 207.2ZM605.5 208.3 613.1 209.1 609.5 210.3 601.8 209.5ZM598.1 210.6 605.8 211.4 602 212.7 594.2 211.8ZM590.3 213.1 598.1 213.9 594.1 215.2 586.2 214.4ZM582 215.7 590 216.6 585.8 218 577.7 217ZM573.2 218.4 581.4 219.4 576.9 220.8 568.6 219.9ZM563.9 221.3 572.2 222.4 567.4 223.9 559 222.9ZM554 224.4 562.5 225.5 557.4 227.2 548.8 226.1ZM543.4 227.7 552.1 228.9 546.6 230.7 537.9 229.5ZM532.1 231.3 541 232.5 535.1 234.4 526.2 233.1ZM520 235 529.1 236.4 522.8 238.4 513.7 237ZM507.1 239.1 516.3 240.5 509.5 242.7 500.2 241.2ZM493.1 243.5 502.5 245 495.2 247.4 485.8 245.8ZM478.1 248.2 487.7 249.8 479.8 252.4 470.1 250.7ZM461.8 253.3 471.5 255.1 463 257.8 453.2 256ZM444.1 258.8 454 260.7 444.7 263.8 434.7 261.7ZM424.9 264.8 434.9 266.9 424.7 270.3 414.6 268ZM403.8 271.4 414 273.7 402.8 277.4 392.5 274.9ZM380.7 278.6 391 281.2 378.7 285.2 368.3 282.5ZM355.2 286.6 365.6 289.5 351.9 293.9 341.4 290.9ZM326.9 295.4 337.4 298.6 322.1 303.6 311.6 300.2ZM295.3 305.3 305.8 308.9 288.6 314.5 278.2 310.7ZM259.9 316.4 270.4 320.4 250.9 326.7 240.6 322.4ZM743 166.9 747.4 167.1 746.6 167.4 742.1 167.2ZM741.2 167.5 745.7 167.7 744.8 168 740.2 167.8ZM739.3 168.1 743.9 168.3 742.9 168.6 738.3 168.4ZM737.4 168.7 742 168.9 741 169.3 736.4 169ZM735.4 169.4 740.1 169.6 739.1 169.9 734.4 169.7ZM733.4 170 738.1 170.3 737.1 170.6 732.3 170.4ZM731.3 170.7 736.1 170.9 735 171.3 730.2 171.1ZM729.1 171.4 734 171.7 732.9 172 728 171.8ZM726.9 172.1 731.8 172.4 730.7 172.8 725.7 172.5ZM724.6 172.9 729.6 173.1 728.4 173.5 723.4 173.3ZM722.2 173.6 727.3 173.9 726.1 174.3 721 174ZM719.8 174.4 724.9 174.7 723.7 175.1 718.5 174.8ZM717.3 175.3 722.5 175.5 721.2 176 716 175.7ZM714.7 176.1 719.9 176.4 718.6 176.8 713.3 176.5ZM712 177 717.3 177.3 716 177.7 710.6 177.4ZM709.2 177.9 714.6 178.2 713.2 178.7 707.8 178.3ZM706.3 178.8 711.8 179.1 710.4 179.6 704.8 179.3ZM703.3 179.8 708.9 180.1 707.4 180.6 701.8 180.3ZM700.3 180.8 705.9 181.1 704.4 181.6 698.7 181.3ZM697.1 181.8 702.8 182.2 701.2 182.7 695.4 182.4ZM693.7 182.9 699.6 183.3 697.9 183.8 692 183.4ZM690.3 184 696.2 184.4 694.5 185 688.5 184.6ZM686.7 185.2 692.7 185.6 690.9 186.2 684.9 185.8ZM683 186.4 689.1 186.8 687.2 187.4 681.1 187ZM679.1 187.6 685.3 188.1 683.4 188.7 677.1 188.3ZM675.1 189 681.4 189.4 679.4 190.1 673 189.6ZM670.9 190.3 677.3 190.8 675.2 191.5 668.7 191ZM666.5 191.7 673 192.2 670.8 193 664.2 192.5ZM661.9 193.2 668.6 193.7 666.3 194.5 659.6 194ZM657.2 194.8 663.9 195.3 661.5 196.1 654.7 195.6ZM652.2 196.4 659 197 656.5 197.8 649.6 197.2ZM646.9 198.1 653.9 198.7 651.3 199.6 644.2 199ZM641.4 199.9 648.6 200.5 645.8 201.4 638.6 200.8ZM635.7 201.7 642.9 202.4 640 203.4 632.7 202.7ZM629.6 203.7 637 204.4 633.9 205.4 626.5 204.7ZM623.3 205.8 630.8 206.5 627.6 207.6 620 206.9ZM616.6 208 624.2 208.7 620.8 209.9 613.1 209.1ZM609.5 210.3 617.3 211.1 613.7 212.3 605.8 211.4ZM602 212.7 610 213.5 606.2 214.8 598.1 213.9ZM594.1 215.2 602.3 216.1 598.2 217.5 590 216.6ZM585.8 218 594.1 218.9 589.8 220.4 581.4 219.4ZM576.9 220.8 585.3 221.9 580.8 223.4 572.2 222.4ZM567.4 223.9 576.1 225 571.2 226.6 562.5 225.5ZM557.4 227.2 566.2 228.3 561 230.1 552.1 228.9ZM546.6 230.7 555.6 231.9 550 233.8 541 232.5ZM535.1 234.4 544.3 235.7 538.3 237.7 529.1 236.4ZM522.8 238.4 532.1 239.8 525.7 242 516.3 240.5ZM509.5 242.7 519.1 244.2 512.1 246.6 502.5 245ZM495.2 247.4 505 249 497.5 251.5 487.7 249.8ZM479.8 252.4 489.7 254.2 481.5 256.9 471.5 255.1ZM463 257.8 473.1 259.8 464.2 262.8 454 260.7ZM444.7 263.8 455 265.9 445.3 269.1 434.9 266.9ZM424.7 270.3 435.2 272.6 424.6 276.1 414 273.7ZM402.8 277.4 413.4 279.9 401.7 283.9 391 281.2ZM378.7 285.2 389.4 288 376.4 292.4 365.6 289.5ZM351.9 293.9 362.7 297 348.3 301.9 337.4 298.6ZM322.1 303.6 333 307.1 316.8 312.6 305.8 308.9ZM288.6 314.5 299.5 318.4 281.2 324.6 270.4 320.4ZM250.9 326.7 261.7 331.1 240.9 338.2 230.2 333.4ZM746.6 167.4 751.1 167.6 750.2 167.9 745.7 167.7ZM744.8 168 749.4 168.2 748.5 168.5 743.9 168.3ZM742.9 168.6 747.6 168.8 746.7 169.2 742 168.9ZM741 169.3 745.7 169.5 744.8 169.8 740.1 169.6ZM739.1 169.9 743.9 170.2 742.9 170.5 738.1 170.3ZM737.1 170.6 741.9 170.8 740.9 171.2 736.1 170.9ZM735 171.3 739.9 171.5 738.9 171.9 734 171.7ZM732.9 172 737.9 172.3 736.8 172.6 731.8 172.4ZM730.7 172.8 735.7 173 734.6 173.4 729.6 173.1ZM728.4 173.5 733.5 173.8 732.4 174.2 727.3 173.9ZM726.1 174.3 731.3 174.6 730.1 175 724.9 174.7ZM723.7 175.1 728.9 175.4 727.7 175.8 722.5 175.5ZM721.2 176 726.5 176.3 725.3 176.7 719.9 176.4ZM718.6 176.8 724 177.1 722.7 177.6 717.3 177.3ZM716 177.7 721.4 178 720.1 178.5 714.6 178.2ZM713.2 178.7 718.8 179 717.4 179.5 711.8 179.1ZM710.4 179.6 716 180 714.6 180.5 708.9 180.1ZM707.4 180.6 713.1 181 711.7 181.5 705.9 181.1ZM704.4 181.6 710.2 182 708.6 182.5 702.8 182.2ZM701.2 182.7 707.1 183.1 705.5 183.7 699.6 183.3ZM697.9 183.8 703.9 184.2 702.2 184.8 696.2 184.4ZM694.5 185 700.5 185.4 698.8 186 692.7 185.6ZM690.9 186.2 697.1 186.6 695.3 187.2 689.1 186.8ZM687.2 187.4 693.5 187.9 691.6 188.5 685.3 188.1ZM683.4 188.7 689.7 189.2 687.8 189.9 681.4 189.4ZM679.4 190.1 685.8 190.6 683.8 191.3 677.3 190.8ZM675.2 191.5 681.8 192 679.7 192.7 673 192.2ZM670.8 193 677.5 193.5 675.3 194.3 668.6 193.7ZM666.3 194.5 673.1 195.1 670.8 195.9 663.9 195.3ZM661.5 196.1 668.4 196.7 666 197.5 659 197ZM656.5 197.8 663.5 198.4 661 199.3 653.9 198.7ZM651.3 199.6 658.4 200.2 655.8 201.1 648.6 200.5ZM645.8 201.4 653.1 202.1 650.3 203.1 642.9 202.4ZM640 203.4 647.4 204.1 644.5 205.1 637 204.4ZM633.9 205.4 641.5 206.2 638.4 207.2 630.8 206.5ZM627.6 207.6 635.3 208.3 632 209.5 624.2 208.7ZM620.8 209.9 628.7 210.7 625.3 211.9 617.3 211.1ZM613.7 212.3 621.7 213.1 618.1 214.4 610 213.5ZM606.2 214.8 614.4 215.7 610.5 217.1 602.3 216.1ZM598.2 217.5 606.6 218.4 602.5 219.9 594.1 218.9ZM589.8 220.4 598.3 221.4 594 222.9 585.3 221.9ZM580.8 223.4 589.5 224.5 584.9 226.1 576.1 225ZM571.2 226.6 580.1 227.8 575.2 229.5 566.2 228.3ZM561 230.1 570.1 231.3 564.8 233.1 555.6 231.9ZM550 233.8 559.3 235.1 553.7 237.1 544.3 235.7ZM538.3 237.7 547.8 239.1 541.7 241.3 532.1 239.8ZM525.7 242 535.4 243.5 528.8 245.8 519.1 244.2ZM512.1 246.6 522 248.2 514.9 250.7 505 249ZM497.5 251.5 507.5 253.3 499.9 256 489.7 254.2ZM481.5 256.9 491.8 258.8 483.5 261.7 473.1 259.8ZM464.2 262.8 474.7 264.8 465.6 268 455 265.9ZM445.3 269.1 456 271.4 446 274.9 435.2 272.6ZM424.6 276.1 435.4 278.6 424.4 282.5 413.4 279.9ZM401.7 283.9 412.8 286.6 400.5 290.9 389.4 288ZM376.4 292.4 387.6 295.5 374 300.3 362.7 297ZM348.3 301.9 359.6 305.3 344.3 310.7 333 307.1ZM316.8 312.6 328.1 316.4 310.9 322.5 299.5 318.4ZM281.2 324.6 292.6 328.9 273 335.8 261.7 331.1ZM240.9 338.2 252.1 343.2 229.6 351 218.5 345.7ZM751.9 167.3 756.5 167.5 755.7 167.8 751.1 167.6ZM750.2 167.9 754.8 168.1 754 168.4 749.4 168.2ZM748.5 168.5 753.1 168.7 752.3 169.1 747.6 168.8ZM746.7 169.2 751.4 169.4 750.5 169.7 745.7 169.5ZM744.8 169.8 749.6 170 748.7 170.4 743.9 170.2ZM742.9 170.5 747.7 170.7 746.8 171.1 741.9 170.8ZM740.9 171.2 745.8 171.4 744.8 171.8 739.9 171.5ZM738.9 171.9 743.9 172.2 742.9 172.5 737.9 172.3ZM736.8 172.6 741.8 172.9 740.8 173.3 735.7 173ZM734.6 173.4 739.7 173.7 738.7 174.1 733.5 173.8ZM732.4 174.2 737.6 174.5 736.5 174.9 731.3 174.6ZM730.1 175 735.3 175.3 734.2 175.7 728.9 175.4ZM727.7 175.8 733 176.1 731.9 176.6 726.5 176.3ZM725.3 176.7 730.7 177 729.4 177.4 724 177.1ZM722.7 177.6 728.2 177.9 726.9 178.4 721.4 178ZM720.1 178.5 725.7 178.8 724.4 179.3 718.8 179ZM717.4 179.5 723 179.8 721.7 180.3 716 180ZM714.6 180.5 720.3 180.8 718.9 181.3 713.1 181ZM711.7 181.5 717.5 181.8 716 182.4 710.2 182ZM708.6 182.5 714.5 182.9 713 183.5 707.1 183.1ZM705.5 183.7 711.5 184 709.9 184.6 703.9 184.2ZM702.2 184.8 708.3 185.2 706.7 185.8 700.5 185.4ZM698.8 186 705 186.4 703.3 187 697.1 186.6ZM695.3 187.2 701.6 187.7 699.8 188.3 693.5 187.9ZM691.6 188.5 698 189 696.2 189.7 689.7 189.2ZM687.8 189.9 694.3 190.3 692.4 191 685.8 190.6ZM683.8 191.3 690.4 191.8 688.4 192.5 681.8 192ZM679.7 192.7 686.4 193.2 684.3 194 677.5 193.5ZM675.3 194.3 682.1 194.8 680 195.6 673.1 195.1ZM670.8 195.9 677.7 196.4 675.4 197.3 668.4 196.7ZM666 197.5 673.1 198.1 670.7 199 663.5 198.4ZM661 199.3 668.2 199.9 665.7 200.8 658.4 200.2ZM655.8 201.1 663.1 201.8 660.5 202.7 653.1 202.1ZM650.3 203.1 657.8 203.7 655 204.8 647.4 204.1ZM644.5 205.1 652.2 205.8 649.2 206.9 641.5 206.2ZM638.4 207.2 646.2 208 643.1 209.1 635.3 208.3ZM632 209.5 640 210.3 636.7 211.5 628.7 210.7ZM625.3 211.9 633.4 212.7 629.9 214 621.7 213.1ZM618.1 214.4 626.4 215.3 622.7 216.6 614.4 215.7ZM610.5 217.1 619 218 615.1 219.4 606.6 218.4ZM602.5 219.9 611.1 220.9 607 222.4 598.3 221.4ZM594 222.9 602.8 223.9 598.4 225.5 589.5 224.5ZM584.9 226.1 593.9 227.2 589.2 228.9 580.1 227.8ZM575.2 229.5 584.3 230.7 579.3 232.5 570.1 231.3ZM564.8 233.1 574.2 234.4 568.8 236.4 559.3 235.1ZM553.7 237.1 563.3 238.4 557.5 240.5 547.8 239.1ZM541.7 241.3 551.5 242.7 545.3 245 535.4 243.5ZM528.8 245.8 538.9 247.4 532.2 249.8 522 248.2ZM514.9 250.7 525.2 252.4 517.9 255.1 507.5 253.3ZM499.9 256 510.3 257.9 502.4 260.8 491.8 258.8ZM483.5 261.7 494.2 263.8 485.5 267 474.7 264.8ZM465.6 268 476.5 270.3 467 273.8 456 271.4ZM446 274.9 457.1 277.4 446.7 281.2 435.4 278.6ZM424.4 282.5 435.7 285.2 424.2 289.5 412.8 286.6ZM400.5 290.9 412.1 293.9 399.2 298.6 387.6 295.5ZM374 300.3 385.7 303.6 371.3 308.9 359.6 305.3ZM344.3 310.7 356.1 314.5 339.9 320.4 328.1 316.4ZM310.9 322.5 322.7 326.7 304.4 333.4 292.6 328.9ZM273 335.8 284.8 340.6 263.8 348.3 252.1 343.2ZM755.7 167.8 760.3 168 759.5 168.3 754.8 168.1ZM754 168.4 758.7 168.6 757.8 169 753.1 168.7ZM752.3 169.1 757 169.3 756.1 169.6 751.4 169.4ZM750.5 169.7 755.3 169.9 754.4 170.3 749.6 170ZM748.7 170.4 753.5 170.6 752.6 171 747.7 170.7ZM746.8 171.1 751.7 171.3 750.8 171.7 745.8 171.4ZM744.8 171.8 749.8 172 748.9 172.4 743.9 172.2ZM742.9 172.5 747.9 172.8 746.9 173.2 741.8 172.9ZM740.8 173.3 745.9 173.5 744.9 173.9 739.7 173.7ZM738.7 174.1 743.9 174.3 742.8 174.7 737.6 174.5ZM736.5 174.9 741.7 175.1 740.6 175.6 735.3 175.3ZM734.2 175.7 739.5 176 738.4 176.4 733 176.1ZM731.9 176.6 737.3 176.9 736.1 177.3 730.7 177ZM729.4 177.4 734.9 177.7 733.7 178.2 728.2 177.9ZM726.9 178.4 732.5 178.7 731.3 179.2 725.7 178.8ZM724.4 179.3 730 179.6 728.7 180.1 723 179.8ZM721.7 180.3 727.4 180.6 726.1 181.2 720.3 180.8ZM718.9 181.3 724.7 181.7 723.3 182.2 717.5 181.8ZM716 182.4 721.9 182.7 720.5 183.3 714.5 182.9ZM713 183.5 719 183.9 717.5 184.4 711.5 184ZM709.9 184.6 716 185 714.5 185.6 708.3 185.2ZM706.7 185.8 712.9 186.2 711.3 186.8 705 186.4ZM703.3 187 709.6 187.5 707.9 188.1 701.6 187.7ZM699.8 188.3 706.2 188.8 704.5 189.4 698 189ZM696.2 189.7 702.7 190.1 700.9 190.8 694.3 190.3ZM692.4 191 699 191.5 697.1 192.3 690.4 191.8ZM688.4 192.5 695.2 193 693.2 193.8 686.4 193.2ZM684.3 194 691.2 194.5 689.1 195.3 682.1 194.8ZM680 195.6 687 196.2 684.8 197 677.7 196.4ZM675.4 197.3 682.6 197.8 680.3 198.7 673.1 198.1ZM670.7 199 678 199.6 675.6 200.5 668.2 199.9ZM665.7 200.8 673.1 201.5 670.6 202.4 663.1 201.8ZM660.5 202.7 668 203.4 665.4 204.4 657.8 203.7ZM655 204.8 662.7 205.5 659.9 206.5 652.2 205.8ZM649.2 206.9 657.1 207.6 654.2 208.7 646.2 208ZM643.1 209.1 651.1 209.9 648.1 211.1 640 210.3ZM636.7 211.5 644.9 212.3 641.6 213.5 633.4 212.7ZM629.9 214 638.3 214.8 634.8 216.2 626.4 215.3ZM622.7 216.6 631.2 217.5 627.6 218.9 619 218ZM615.1 219.4 623.8 220.4 619.9 221.9 611.1 220.9ZM607 222.4 615.9 223.4 611.7 225 602.8 223.9ZM598.4 225.5 607.5 226.7 603 228.4 593.9 227.2ZM589.2 228.9 598.5 230.1 593.7 231.9 584.3 230.7ZM579.3 232.5 588.8 233.8 583.8 235.7 574.2 234.4ZM568.8 236.4 578.5 237.8 573.1 239.8 563.3 238.4ZM557.5 240.5 567.4 242 561.6 244.3 551.5 242.7ZM545.3 245 555.5 246.6 549.1 249 538.9 247.4ZM532.2 249.8 542.6 251.6 535.7 254.2 525.2 252.4ZM517.9 255.1 528.6 256.9 521.1 259.8 510.3 257.9ZM502.4 260.8 513.3 262.8 505.2 265.9 494.2 263.8ZM485.5 267 496.7 269.2 487.7 272.6 476.5 270.3ZM467 273.8 478.4 276.2 468.6 279.9 457.1 277.4ZM446.7 281.2 458.3 283.9 447.5 288 435.7 285.2ZM424.2 289.5 436 292.4 424 297 412.1 293.9ZM399.2 298.6 411.3 301.9 397.8 307.1 385.7 303.6ZM371.3 308.9 383.5 312.6 368.4 318.4 356.1 314.5ZM339.9 320.4 352.3 324.6 335.1 331.1 322.7 326.7ZM304.4 333.4 316.8 338.2 297.1 345.7 284.8 340.6ZM263.8 348.3 276.1 353.8 253.4 362.5 241.2 356.6ZM761.1 167.7 765.7 167.9 764.9 168.2 760.3 168ZM759.5 168.3 764.2 168.5 763.4 168.9 758.7 168.6ZM757.8 169 762.6 169.2 761.8 169.5 757 169.3ZM756.1 169.6 761 169.8 760.1 170.2 755.3 169.9ZM754.4 170.3 759.3 170.5 758.4 170.9 753.5 170.6ZM752.6 171 757.6 171.2 756.7 171.6 751.7 171.3ZM750.8 171.7 755.8 171.9 754.9 172.3 749.8 172ZM748.9 172.4 753.9 172.7 753 173 747.9 172.8ZM746.9 173.2 752 173.4 751.1 173.8 745.9 173.5ZM744.9 173.9 750.1 174.2 749.1 174.6 743.9 174.3ZM742.8 174.7 748.1 175 747.1 175.4 741.7 175.1ZM740.6 175.6 746 175.8 744.9 176.3 739.5 176ZM738.4 176.4 743.9 176.7 742.8 177.2 737.3 176.9ZM736.1 177.3 741.6 177.6 740.5 178.1 734.9 177.7ZM733.7 178.2 739.3 178.5 738.1 179 732.5 178.7ZM731.3 179.2 736.9 179.5 735.7 180 730 179.6ZM728.7 180.1 734.5 180.5 733.2 181 727.4 180.6ZM726.1 181.2 731.9 181.5 730.6 182 724.7 181.7ZM723.3 182.2 729.3 182.6 727.9 183.1 721.9 182.7ZM720.5 183.3 726.5 183.7 725.1 184.2 719 183.9ZM717.5 184.4 723.7 184.8 722.2 185.4 716 185ZM714.5 185.6 720.7 186 719.2 186.6 712.9 186.2ZM711.3 186.8 717.6 187.3 716 187.9 709.6 187.5ZM707.9 188.1 714.4 188.5 712.7 189.2 706.2 188.8ZM704.5 189.4 711 189.9 709.3 190.6 702.7 190.1ZM700.9 190.8 707.6 191.3 705.8 192 699 191.5ZM697.1 192.3 703.9 192.8 702 193.5 695.2 193ZM693.2 193.8 700.1 194.3 698.1 195.1 691.2 194.5ZM689.1 195.3 696.1 195.9 694.1 196.7 687 196.2ZM684.8 197 692 197.6 689.8 198.4 682.6 197.8ZM680.3 198.7 687.6 199.3 685.3 200.2 678 199.6ZM675.6 200.5 683 201.2 680.6 202.1 673.1 201.5ZM670.6 202.4 678.2 203.1 675.7 204.1 668 203.4ZM665.4 204.4 673.2 205.1 670.5 206.2 662.7 205.5ZM659.9 206.5 667.8 207.3 665.1 208.4 657.1 207.6ZM654.2 208.7 662.2 209.5 659.3 210.7 651.1 209.9ZM648.1 211.1 656.3 211.9 653.2 213.1 644.9 212.3ZM641.6 213.5 650 214.4 646.8 215.7 638.3 214.8ZM634.8 216.2 643.4 217.1 639.9 218.5 631.2 217.5ZM627.6 218.9 636.4 219.9 632.7 221.4 623.8 220.4ZM619.9 221.9 628.9 222.9 625 224.5 615.9 223.4ZM611.7 225 620.9 226.1 616.7 227.8 607.5 226.7ZM603 228.4 612.4 229.5 608 231.3 598.5 230.1ZM593.7 231.9 603.3 233.2 598.6 235.1 588.8 233.8ZM583.8 235.7 593.6 237.1 588.5 239.1 578.5 237.8ZM573.1 239.8 583.2 241.3 577.6 243.5 567.4 242ZM561.6 244.3 571.9 245.8 565.9 248.2 555.5 246.6ZM549.1 249 559.7 250.7 553.2 253.3 542.6 251.6ZM535.7 254.2 546.5 256 539.5 258.8 528.6 256.9ZM521.1 259.8 532.2 261.8 524.5 264.8 513.3 262.8ZM505.2 265.9 516.5 268.1 508.1 271.4 496.7 269.2ZM487.7 272.6 499.4 275 490.2 278.7 478.4 276.2ZM468.6 279.9 480.5 282.5 470.3 286.6 458.3 283.9ZM447.5 288 459.6 290.9 448.3 295.5 436 292.4ZM424 297 436.4 300.3 423.8 305.3 411.3 301.9ZM397.8 307.1 410.4 310.7 396.2 316.4 383.5 312.6ZM368.4 318.4 381.2 322.5 365.1 328.9 352.3 324.6ZM335.1 331.1 348 335.8 329.7 343.1 316.8 338.2ZM297.1 345.7 310.1 351 289 359.5 276.1 353.8ZM253.4 362.5 266.2 368.6 241.6 378.5 229 371.9ZM764.9 168.2 769.6 168.5 768.9 168.8 764.2 168.5ZM763.4 168.9 768.1 169.1 767.4 169.4 762.6 169.2ZM761.8 169.5 766.6 169.7 765.8 170.1 761 169.8ZM760.1 170.2 765 170.4 764.2 170.7 759.3 170.5ZM758.4 170.9 763.4 171.1 762.5 171.4 757.6 171.2ZM756.7 171.6 761.7 171.8 760.8 172.2 755.8 171.9ZM754.9 172.3 759.9 172.5 759.1 172.9 753.9 172.7ZM753 173 758.2 173.3 757.2 173.7 752 173.4ZM751.1 173.8 756.3 174.1 755.4 174.5 750.1 174.2ZM749.1 174.6 754.4 174.9 753.4 175.3 748.1 175ZM747.1 175.4 752.4 175.7 751.4 176.1 746 175.8ZM744.9 176.3 750.4 176.6 749.3 177 743.9 176.7ZM742.8 177.2 748.3 177.5 747.2 177.9 741.6 177.6ZM740.5 178.1 746.1 178.4 745 178.9 739.3 178.5ZM738.1 179 743.9 179.3 742.7 179.8 736.9 179.5ZM735.7 180 741.5 180.3 740.3 180.8 734.5 180.5ZM733.2 181 739.1 181.3 737.9 181.9 731.9 181.5ZM730.6 182 736.6 182.4 735.3 182.9 729.3 182.6ZM727.9 183.1 734 183.5 732.6 184.1 726.5 183.7ZM725.1 184.2 731.3 184.6 729.9 185.2 723.7 184.8ZM722.2 185.4 728.5 185.8 727 186.4 720.7 186ZM719.2 186.6 725.5 187.1 724 187.7 717.6 187.3ZM716 187.9 722.5 188.3 720.9 189 714.4 188.5ZM712.7 189.2 719.3 189.7 717.7 190.4 711 189.9ZM709.3 190.6 716 191.1 714.3 191.8 707.6 191.3ZM705.8 192 712.6 192.5 710.8 193.3 703.9 192.8ZM702 193.5 709 194 707.1 194.8 700.1 194.3ZM698.1 195.1 705.2 195.6 703.3 196.4 696.1 195.9ZM694.1 196.7 701.3 197.3 699.2 198.1 692 197.6ZM689.8 198.4 697.2 199 695 199.9 687.6 199.3ZM685.3 200.2 692.8 200.9 690.6 201.8 683 201.2ZM680.6 202.1 688.3 202.8 685.9 203.8 678.2 203.1ZM675.7 204.1 683.5 204.8 681 205.8 673.2 205.1ZM670.5 206.2 678.5 206.9 675.9 208 667.8 207.3ZM665.1 208.4 673.2 209.1 670.4 210.3 662.2 209.5ZM659.3 210.7 667.6 211.5 664.7 212.7 656.3 211.9ZM653.2 213.1 661.7 214 658.6 215.3 650 214.4ZM646.8 215.7 655.4 216.6 652.2 218 643.4 217.1ZM639.9 218.5 648.8 219.4 645.3 220.9 636.4 219.9ZM632.7 221.4 641.7 222.4 638 224 628.9 222.9ZM625 224.5 634.2 225.6 630.3 227.2 620.9 226.1ZM616.7 227.8 626.2 228.9 622 230.7 612.4 229.5ZM608 231.3 617.7 232.6 613.2 234.5 603.3 233.2ZM598.6 235.1 608.5 236.4 603.7 238.5 593.6 237.1ZM588.5 239.1 598.7 240.6 593.5 242.8 583.2 241.3ZM577.6 243.5 588.1 245 582.5 247.4 571.9 245.8ZM565.9 248.2 576.6 249.9 570.6 252.4 559.7 250.7ZM553.2 253.3 564.2 255.1 557.6 257.9 546.5 256ZM539.5 258.8 550.8 260.8 543.6 263.8 532.2 261.8ZM524.5 264.8 536.1 267 528.2 270.3 516.5 268.1ZM508.1 271.4 520 273.8 511.3 277.4 499.4 275ZM490.2 278.7 502.3 281.2 492.8 285.3 480.5 282.5ZM470.3 286.6 482.7 289.5 472.2 293.9 459.6 290.9ZM448.3 295.5 461 298.6 449.2 303.6 436.4 300.3ZM423.8 305.3 436.7 308.9 423.5 314.5 410.4 310.7ZM396.2 316.4 409.5 320.4 394.5 326.7 381.2 322.5ZM365.1 328.9 378.5 333.4 361.5 340.6 348 335.8ZM329.7 343.1 343.2 348.3 323.6 356.6 310.1 351ZM289 359.5 302.5 365.5 279.7 375.1 266.2 368.6ZM241.6 378.5 255 385.5 228.2 396.9 215 389.2ZM770.4 168.1 775.1 168.4 774.4 168.7 769.6 168.5ZM768.9 168.8 773.7 169 773 169.3 768.1 169.1ZM767.4 169.4 772.2 169.6 771.5 170 766.6 169.7ZM765.8 170.1 770.7 170.3 769.9 170.6 765 170.4ZM764.2 170.7 769.2 171 768.4 171.3 763.4 171.1ZM762.5 171.4 767.6 171.7 766.8 172.1 761.7 171.8ZM760.8 172.2 765.9 172.4 765.1 172.8 759.9 172.5ZM759.1 172.9 764.2 173.2 763.4 173.6 758.2 173.3ZM757.2 173.7 762.5 174 761.6 174.3 756.3 174.1ZM755.4 174.5 760.7 174.8 759.8 175.2 754.4 174.9ZM753.4 175.3 758.8 175.6 757.9 176 752.4 175.7ZM751.4 176.1 756.9 176.4 755.9 176.9 750.4 176.6ZM749.3 177 754.9 177.3 753.9 177.8 748.3 177.5ZM747.2 177.9 752.8 178.2 751.8 178.7 746.1 178.4ZM745 178.9 750.7 179.2 749.6 179.7 743.9 179.3ZM742.7 179.8 748.5 180.2 747.4 180.7 741.5 180.3ZM740.3 180.8 746.2 181.2 745 181.7 739.1 181.3ZM737.9 181.9 743.8 182.2 742.6 182.8 736.6 182.4ZM735.3 182.9 741.4 183.3 740.1 183.9 734 183.5ZM732.6 184.1 738.8 184.5 737.5 185 731.3 184.6ZM729.9 185.2 736.2 185.6 734.8 186.2 728.5 185.8ZM727 186.4 733.4 186.9 732 187.5 725.5 187.1ZM724 187.7 730.5 188.1 729.1 188.8 722.5 188.3ZM720.9 189 727.6 189.5 726 190.1 719.3 189.7ZM717.7 190.4 724.4 190.8 722.8 191.6 716 191.1ZM714.3 191.8 721.2 192.3 719.5 193 712.6 192.5ZM710.8 193.3 717.8 193.8 716 194.6 709 194ZM707.1 194.8 714.2 195.4 712.4 196.2 705.2 195.6ZM703.3 196.4 710.5 197 708.6 197.9 701.3 197.3ZM699.2 198.1 706.6 198.7 704.6 199.6 697.2 199ZM695 199.9 702.6 200.6 700.4 201.5 692.8 200.9ZM690.6 201.8 698.3 202.5 696.1 203.4 688.3 202.8ZM685.9 203.8 693.8 204.5 691.4 205.5 683.5 204.8ZM681 205.8 689 206.6 686.6 207.6 678.5 206.9ZM675.9 208 684.1 208.8 681.5 209.9 673.2 209.1ZM670.4 210.3 678.8 211.1 676 212.3 667.6 211.5ZM664.7 212.7 673.2 213.6 670.3 214.9 661.7 214ZM658.6 215.3 667.3 216.2 664.3 217.6 655.4 216.6ZM652.2 218 661.1 219 657.8 220.4 648.8 219.4ZM645.3 220.9 654.5 221.9 651 223.4 641.7 222.4ZM638 224 647.4 225 643.7 226.7 634.2 225.6ZM630.3 227.2 639.9 228.4 635.9 230.1 626.2 228.9ZM622 230.7 631.8 231.9 627.6 233.8 617.7 232.6ZM613.2 234.5 623.2 235.8 618.7 237.8 608.5 236.4ZM603.7 238.5 614 239.9 609.1 242 598.7 240.6ZM593.5 242.8 604.1 244.3 598.8 246.6 588.1 245ZM582.5 247.4 593.3 249.1 587.6 251.6 576.6 249.9ZM570.6 252.4 581.7 254.2 575.5 257 564.2 255.1ZM557.6 257.9 569.1 259.8 562.3 262.8 550.8 260.8ZM543.6 263.8 555.3 265.9 548 269.2 536.1 267ZM528.2 270.3 540.3 272.6 532.2 276.2 520 273.8ZM511.3 277.4 523.7 279.9 514.8 283.9 502.3 281.2ZM492.8 285.3 505.5 288.1 495.6 292.4 482.7 289.5ZM472.2 293.9 485.2 297.1 474.2 301.9 461 298.6ZM449.2 303.6 462.6 307.1 450.2 312.6 436.7 308.9ZM423.5 314.5 437.2 318.4 423.2 324.6 409.5 320.4ZM394.5 326.7 408.4 331.1 392.6 338.2 378.5 333.4ZM361.5 340.6 375.6 345.7 357.4 353.8 343.2 348.3ZM323.6 356.6 337.9 362.5 316.7 371.8 302.5 365.5ZM279.7 375.1 293.9 382 269.1 393 255 385.5ZM774.4 168.7 779.2 168.9 778.5 169.2 773.7 169ZM773 169.3 777.8 169.5 777.1 169.9 772.2 169.6ZM771.5 170 776.4 170.2 775.7 170.5 770.7 170.3ZM769.9 170.6 774.9 170.9 774.2 171.2 769.2 171ZM768.4 171.3 773.4 171.6 772.7 171.9 767.6 171.7ZM766.8 172.1 771.9 172.3 771.1 172.7 765.9 172.4ZM765.1 172.8 770.3 173.1 769.5 173.4 764.2 173.2ZM763.4 173.6 768.6 173.8 767.8 174.2 762.5 174ZM761.6 174.3 766.9 174.6 766.1 175 760.7 174.8ZM759.8 175.2 765.2 175.4 764.3 175.9 758.8 175.6ZM757.9 176 763.4 176.3 762.4 176.7 756.9 176.4ZM755.9 176.9 761.5 177.2 760.5 177.6 754.9 177.3ZM753.9 177.8 759.5 178.1 758.5 178.6 752.8 178.2ZM751.8 178.7 757.5 179 756.5 179.5 750.7 179.2ZM749.6 179.7 755.5 180 754.4 180.5 748.5 180.2ZM747.4 180.7 753.3 181 752.2 181.5 746.2 181.2ZM745 181.7 751.1 182.1 749.9 182.6 743.8 182.2ZM742.6 182.8 748.7 183.1 747.6 183.7 741.4 183.3ZM740.1 183.9 746.3 184.3 745.1 184.8 738.8 184.5ZM737.5 185 743.8 185.4 742.6 186 736.2 185.6ZM734.8 186.2 741.2 186.7 739.9 187.3 733.4 186.9ZM732 187.5 738.5 187.9 737.2 188.6 730.5 188.1ZM729.1 188.8 735.7 189.2 734.3 189.9 727.6 189.5ZM726 190.1 732.8 190.6 731.3 191.3 724.4 190.8ZM722.8 191.6 729.7 192 728.2 192.8 721.2 192.3ZM719.5 193 726.5 193.5 724.9 194.3 717.8 193.8ZM716 194.6 723.2 195.1 721.5 195.9 714.2 195.4ZM712.4 196.2 719.7 196.7 717.9 197.6 710.5 197ZM708.6 197.9 716 198.5 714.2 199.3 706.6 198.7ZM704.6 199.6 712.2 200.3 710.2 201.2 702.6 200.6ZM700.4 201.5 708.2 202.1 706.1 203.1 698.3 202.5ZM696.1 203.4 704 204.1 701.8 205.1 693.8 204.5ZM691.4 205.5 699.5 206.2 697.2 207.3 689 206.6ZM686.6 207.6 694.8 208.4 692.4 209.5 684.1 208.8ZM681.5 209.9 689.9 210.7 687.3 211.9 678.8 211.1ZM676 212.3 684.7 213.2 681.9 214.4 673.2 213.6ZM670.3 214.9 679.1 215.8 676.2 217.1 667.3 216.2ZM664.3 217.6 673.3 218.5 670.2 219.9 661.1 219ZM657.8 220.4 667.1 221.4 663.8 222.9 654.5 221.9ZM651 223.4 660.4 224.5 657 226.1 647.4 225ZM643.7 226.7 653.4 227.8 649.7 229.6 639.9 228.4ZM635.9 230.1 645.8 231.3 641.9 233.2 631.8 231.9ZM627.6 233.8 637.8 235.1 633.5 237.1 623.2 235.8ZM618.7 237.8 629.1 239.2 624.6 241.3 614 239.9ZM609.1 242 619.8 243.5 614.9 245.8 604.1 244.3ZM598.8 246.6 609.8 248.2 604.5 250.7 593.3 249.1ZM587.6 251.6 598.9 253.3 593.1 256 581.7 254.2ZM575.5 257 587.1 258.9 580.8 261.8 569.1 259.8ZM562.3 262.8 574.3 264.9 567.4 268.1 555.3 265.9ZM548 269.2 560.2 271.5 552.7 275 540.3 272.6ZM532.2 276.2 544.8 278.7 536.5 282.6 523.7 279.9ZM514.8 283.9 527.8 286.7 518.6 291 505.5 288.1ZM495.6 292.4 508.9 295.5 498.7 300.3 485.2 297.1ZM474.2 301.9 487.9 305.3 476.4 310.7 462.6 307.1ZM450.2 312.6 464.3 316.4 451.4 322.5 437.2 318.4ZM423.2 324.6 437.6 328.9 422.9 335.8 408.4 331.1ZM392.6 338.2 407.2 343.1 390.4 351 375.6 345.7ZM357.4 353.8 372.3 359.5 352.8 368.6 337.9 362.5ZM316.7 371.8 331.8 378.5 308.9 389.2 293.9 382ZM269.1 393 284.1 400.8 257 413.5 242.2 404.9ZM779.9 168.6 784.7 168.8 784 169.1 779.2 168.9ZM778.5 169.2 783.4 169.4 782.7 169.8 777.8 169.5ZM777.1 169.9 782 170.1 781.4 170.4 776.4 170.2ZM775.7 170.5 780.7 170.8 780 171.1 774.9 170.9ZM774.2 171.2 779.2 171.5 778.5 171.8 773.4 171.6ZM772.7 171.9 777.8 172.2 777 172.6 771.9 172.3ZM771.1 172.7 776.3 172.9 775.5 173.3 770.3 173.1ZM769.5 173.4 774.7 173.7 773.9 174.1 768.6 173.8ZM767.8 174.2 773.1 174.5 772.3 174.9 766.9 174.6ZM766.1 175 771.5 175.3 770.6 175.7 765.2 175.4ZM764.3 175.9 769.8 176.2 768.9 176.6 763.4 176.3ZM762.4 176.7 768 177 767.1 177.5 761.5 177.2ZM760.5 177.6 766.2 177.9 765.3 178.4 759.5 178.1ZM758.5 178.6 764.3 178.9 763.3 179.4 757.5 179ZM756.5 179.5 762.4 179.8 761.4 180.3 755.5 180ZM754.4 180.5 760.3 180.8 759.3 181.4 753.3 181ZM752.2 181.5 758.2 181.9 757.2 182.4 751.1 182.1ZM749.9 182.6 756.1 183 754.9 183.5 748.7 183.1ZM747.6 183.7 753.8 184.1 752.6 184.7 746.3 184.3ZM745.1 184.8 751.5 185.2 750.3 185.8 743.8 185.4ZM742.6 186 749 186.5 747.8 187.1 741.2 186.7ZM739.9 187.3 746.5 187.7 745.2 188.4 738.5 187.9ZM737.2 188.6 743.8 189 742.5 189.7 735.7 189.2ZM734.3 189.9 741.1 190.4 739.7 191.1 732.8 190.6ZM731.3 191.3 738.2 191.8 736.7 192.5 729.7 192ZM728.2 192.8 735.2 193.3 733.7 194.1 726.5 193.5ZM724.9 194.3 732.1 194.9 730.5 195.7 723.2 195.1ZM721.5 195.9 728.8 196.5 727.1 197.3 719.7 196.7ZM717.9 197.6 725.4 198.2 723.6 199.1 716 198.5ZM714.2 199.3 721.8 200 719.9 200.9 712.2 200.3ZM710.2 201.2 718 201.8 716.1 202.8 708.2 202.1ZM706.1 203.1 714.1 203.8 712 204.8 704 204.1ZM701.8 205.1 709.9 205.9 707.7 206.9 699.5 206.2ZM697.2 207.3 705.5 208 703.2 209.2 694.8 208.4ZM692.4 209.5 700.9 210.3 698.5 211.5 689.9 210.7ZM687.3 211.9 696 212.8 693.4 214 684.7 213.2ZM681.9 214.4 690.8 215.3 688.1 216.7 679.1 215.8ZM676.2 217.1 685.3 218 682.5 219.5 673.3 218.5ZM670.2 219.9 679.5 220.9 676.5 222.4 667.1 221.4ZM663.8 222.9 673.3 224 670.1 225.6 660.4 224.5ZM657 226.1 666.7 227.3 663.3 229 653.4 227.8ZM649.7 229.6 659.7 230.7 656 232.6 645.8 231.3ZM641.9 233.2 652.2 234.5 648.2 236.4 637.8 235.1ZM633.5 237.1 644.1 238.5 639.8 240.6 629.1 239.2ZM624.6 241.3 635.4 242.8 630.8 245.1 619.8 243.5ZM614.9 245.8 626 247.4 621.1 249.9 609.8 248.2ZM604.5 250.7 615.9 252.5 610.5 255.1 598.9 253.3ZM593.1 256 604.9 257.9 599.1 260.8 587.1 258.9ZM580.8 261.8 593 263.8 586.6 267 574.3 264.9ZM567.4 268.1 579.9 270.3 572.9 273.8 560.2 271.5ZM552.7 275 565.5 277.4 557.8 281.3 544.8 278.7ZM536.5 282.6 549.7 285.3 541.2 289.5 527.8 286.7ZM518.6 291 532.2 294 522.7 298.7 508.9 295.5ZM498.7 300.3 512.7 303.6 502.1 308.9 487.9 305.3ZM476.4 310.7 490.9 314.5 478.9 320.4 464.3 316.4ZM451.4 322.5 466.2 326.7 452.6 333.4 437.6 328.9ZM422.9 335.8 438.1 340.6 422.6 348.3 407.2 343.1ZM390.4 351 405.9 356.6 388 365.5 372.3 359.5ZM352.8 368.6 368.6 375.1 347.6 385.5 331.8 378.5ZM308.9 389.2 324.8 396.8 299.9 409.1 284.1 400.8ZM257 413.5 272.7 422.6 242.8 437.5 227.2 427.4ZM784 169.1 788.9 169.3 788.3 169.7 783.4 169.4ZM782.7 169.8 787.6 170 787 170.3 782 170.1ZM781.4 170.4 786.4 170.7 785.7 171 780.7 170.8ZM780 171.1 785 171.4 784.4 171.7 779.2 171.5ZM778.5 171.8 783.7 172.1 783 172.4 777.8 172.2ZM777 172.6 782.3 172.8 781.5 173.2 776.3 172.9ZM775.5 173.3 780.8 173.6 780.1 174 774.7 173.7ZM773.9 174.1 779.3 174.4 778.6 174.8 773.1 174.5ZM772.3 174.9 777.8 175.2 777 175.6 771.5 175.3ZM770.6 175.7 776.2 176 775.4 176.5 769.8 176.2ZM768.9 176.6 774.5 176.9 773.7 177.3 768 177ZM767.1 177.5 772.8 177.8 771.9 178.3 766.2 177.9ZM765.3 178.4 771.1 178.7 770.1 179.2 764.3 178.9ZM763.3 179.4 769.2 179.7 768.3 180.2 762.4 179.8ZM761.4 180.3 767.3 180.7 766.4 181.2 760.3 180.8ZM759.3 181.4 765.4 181.7 764.4 182.2 758.2 181.9ZM757.2 182.4 763.3 182.8 762.3 183.3 756.1 183ZM754.9 183.5 761.2 183.9 760.1 184.5 753.8 184.1ZM752.6 184.7 759 185.1 757.9 185.7 751.5 185.2ZM750.3 185.8 756.7 186.3 755.6 186.9 749 186.5ZM747.8 187.1 754.4 187.5 753.1 188.2 746.5 187.7ZM745.2 188.4 751.9 188.8 750.6 189.5 743.8 189ZM742.5 189.7 749.3 190.2 748 190.9 741.1 190.4ZM739.7 191.1 746.6 191.6 745.3 192.3 738.2 191.8ZM736.7 192.5 743.8 193.1 742.4 193.8 735.2 193.3ZM733.7 194.1 740.9 194.6 739.4 195.4 732.1 194.9ZM730.5 195.7 737.8 196.2 736.3 197 728.8 196.5ZM727.1 197.3 734.6 197.9 733 198.8 725.4 198.2ZM723.6 199.1 731.3 199.7 729.5 200.6 721.8 200ZM719.9 200.9 727.8 201.5 725.9 202.5 718 201.8ZM716.1 202.8 724.1 203.5 722.1 204.5 714.1 203.8ZM712 204.8 720.2 205.5 718.2 206.6 709.9 205.9ZM707.7 206.9 716.1 207.7 713.9 208.8 705.5 208ZM703.2 209.2 711.8 209.9 709.5 211.1 700.9 210.3ZM698.5 211.5 707.2 212.4 704.8 213.6 696 212.8ZM693.4 214 702.4 214.9 699.9 216.2 690.8 215.3ZM688.1 216.7 697.3 217.6 694.6 219 685.3 218ZM682.5 219.5 691.8 220.4 689 221.9 679.5 220.9ZM676.5 222.4 686.1 223.5 683 225.1 673.3 224ZM670.1 225.6 679.9 226.7 676.7 228.4 666.7 227.3ZM663.3 229 673.4 230.2 669.9 232 659.7 230.7ZM656 232.6 666.4 233.9 662.7 235.8 652.2 234.5ZM648.2 236.4 658.9 237.8 654.9 239.9 644.1 238.5ZM639.8 240.6 650.8 242.1 646.5 244.3 635.4 242.8ZM630.8 245.1 642.1 246.6 637.5 249.1 626 247.4ZM621.1 249.9 632.7 251.6 627.7 254.2 615.9 252.5ZM610.5 255.1 622.5 257 617 259.8 604.9 257.9ZM599.1 260.8 611.4 262.8 605.4 265.9 593 263.8ZM586.6 267 599.2 269.2 592.7 272.6 579.9 270.3ZM572.9 273.8 585.9 276.2 578.8 280 565.5 277.4ZM557.8 281.3 571.3 283.9 563.4 288.1 549.7 285.3ZM541.2 289.5 555.1 292.4 546.3 297.1 532.2 294ZM522.7 298.7 537.1 301.9 527.3 307.1 512.7 303.6ZM502.1 308.9 516.9 312.6 505.9 318.4 490.9 314.5ZM478.9 320.4 494.1 324.6 481.6 331.1 466.2 326.7ZM452.6 333.4 468.3 338.2 454 345.7 438.1 340.6ZM422.6 348.3 438.7 353.8 422.2 362.4 405.9 356.6ZM388 365.5 404.4 371.8 385.2 381.9 368.6 375.1ZM347.6 385.5 364.3 392.9 341.6 404.9 324.8 396.8ZM299.9 409.1 316.7 418 289.5 432.3 272.7 422.6ZM242.8 437.5 259.4 448.2 226 465.7 209.7 453.9ZM789.5 169 794.4 169.2 793.8 169.5 788.9 169.3ZM788.3 169.7 793.2 169.9 792.6 170.2 787.6 170ZM787 170.3 792 170.6 791.4 170.9 786.4 170.7ZM785.7 171 790.8 171.2 790.2 171.6 785 171.4ZM784.4 171.7 789.5 172 788.9 172.3 783.7 172.1ZM783 172.4 788.2 172.7 787.5 173.1 782.3 172.8ZM781.5 173.2 786.9 173.5 786.2 173.8 780.8 173.6ZM780.1 174 785.5 174.2 784.7 174.6 779.3 174.4ZM778.6 174.8 784 175.1 783.3 175.5 777.8 175.2ZM777 175.6 782.5 175.9 781.8 176.3 776.2 176ZM775.4 176.5 781 176.8 780.2 177.2 774.5 176.9ZM773.7 177.3 779.4 177.6 778.6 178.1 772.8 177.8ZM771.9 178.3 777.8 178.6 776.9 179 771.1 178.7ZM770.1 179.2 776 179.5 775.2 180 769.2 179.7ZM768.3 180.2 774.3 180.5 773.4 181 767.3 180.7ZM766.4 181.2 772.5 181.5 771.5 182.1 765.4 181.7ZM764.4 182.2 770.6 182.6 769.6 183.2 763.3 182.8ZM762.3 183.3 768.6 183.7 767.6 184.3 761.2 183.9ZM760.1 184.5 766.5 184.9 765.5 185.5 759 185.1ZM757.9 185.7 764.4 186.1 763.3 186.7 756.7 186.3ZM755.6 186.9 762.2 187.3 761.1 187.9 754.4 187.5ZM753.1 188.2 759.9 188.6 758.7 189.3 751.9 188.8ZM750.6 189.5 757.5 189.9 756.3 190.6 749.3 190.2ZM748 190.9 755 191.3 753.7 192.1 746.6 191.6ZM745.3 192.3 752.4 192.8 751 193.6 743.8 193.1ZM742.4 193.8 749.7 194.3 748.3 195.1 740.9 194.6ZM739.4 195.4 746.8 195.9 745.3 196.8 737.8 196.2ZM736.3 197 743.8 197.6 742.3 198.5 734.6 197.9ZM733 198.8 740.7 199.4 739.1 200.3 731.3 199.7ZM729.5 200.6 737.4 201.2 735.7 202.2 727.8 201.5ZM725.9 202.5 734 203.1 732.2 204.1 724.1 203.5ZM722.1 204.5 730.4 205.2 728.5 206.2 720.2 205.5ZM718.2 206.6 726.6 207.3 724.6 208.4 716.1 207.7ZM713.9 208.8 722.5 209.6 720.5 210.7 711.8 209.9ZM709.5 211.1 718.3 212 716.1 213.2 707.2 212.4ZM704.8 213.6 713.8 214.5 711.5 215.8 702.4 214.9ZM699.9 216.2 709.1 217.1 706.6 218.5 697.3 217.6ZM694.6 219 704 220 701.4 221.4 691.8 220.4ZM689 221.9 698.7 223 695.9 224.5 686.1 223.5ZM683 225.1 693 226.2 690 227.8 679.9 226.7ZM676.7 228.4 686.9 229.6 683.7 231.4 673.4 230.2ZM669.9 232 680.4 233.2 677 235.1 666.4 233.9ZM662.7 235.8 673.4 237.1 669.8 239.2 658.9 237.8ZM654.9 239.9 666 241.3 662 243.6 650.8 242.1ZM646.5 244.3 657.9 245.9 653.6 248.3 642.1 246.6ZM637.5 249.1 649.2 250.8 644.6 253.4 632.7 251.6ZM627.7 254.2 639.7 256.1 634.7 258.9 622.5 257ZM617 259.8 629.5 261.8 624 264.9 611.4 262.8ZM605.4 265.9 618.3 268.1 612.3 271.5 599.2 269.2ZM592.7 272.6 606 275 599.4 278.7 585.9 276.2ZM578.8 280 592.5 282.6 585.2 286.7 571.3 283.9ZM563.4 288.1 577.6 291 569.5 295.5 555.1 292.4ZM546.3 297.1 561 300.3 551.9 305.4 537.1 301.9ZM527.3 307.1 542.4 310.7 532.3 316.4 516.9 312.6ZM505.9 318.4 521.5 322.5 510 328.9 494.1 324.6ZM481.6 331.1 497.8 335.8 484.7 343.1 468.3 338.2ZM454 345.7 470.6 351 455.6 359.5 438.7 353.8ZM422.2 362.4 439.3 368.6 421.8 378.4 404.4 371.8ZM385.2 381.9 402.7 389.1 382 400.8 364.3 392.9ZM341.6 404.9 359.4 413.5 334.6 427.4 316.7 418ZM289.5 432.3 307.3 442.7 277.2 459.6 259.4 448.2ZM793.8 169.5 798.8 169.8 798.2 170.1 793.2 169.9ZM792.6 170.2 797.7 170.4 797.1 170.8 792 170.6ZM791.4 170.9 796.5 171.1 795.9 171.5 790.8 171.2ZM790.2 171.6 795.4 171.8 794.7 172.2 789.5 172ZM788.9 172.3 794.1 172.6 793.5 173 788.2 172.7ZM787.5 173.1 792.9 173.3 792.2 173.7 786.9 173.5ZM786.2 173.8 791.6 174.1 790.9 174.5 785.5 174.2ZM784.7 174.6 790.2 174.9 789.5 175.3 784 175.1ZM783.3 175.5 788.9 175.8 788.1 176.2 782.5 175.9ZM781.8 176.3 787.4 176.6 786.7 177.1 781 176.8ZM780.2 177.2 785.9 177.5 785.2 178 779.4 177.6ZM778.6 178.1 784.4 178.4 783.6 178.9 777.8 178.6ZM776.9 179 782.8 179.4 782 179.9 776 179.5ZM775.2 180 781.2 180.4 780.3 180.9 774.3 180.5ZM773.4 181 779.5 181.4 778.6 181.9 772.5 181.5ZM771.5 182.1 777.7 182.4 776.8 183 770.6 182.6ZM769.6 183.2 775.9 183.5 775 184.1 768.6 183.7ZM767.6 184.3 774 184.7 773 185.3 766.5 184.9ZM765.5 185.5 772 185.9 771 186.5 764.4 186.1ZM763.3 186.7 770 187.1 768.9 187.7 762.2 187.3ZM761.1 187.9 767.8 188.4 766.7 189 759.9 188.6ZM758.7 189.3 765.6 189.7 764.5 190.4 757.5 189.9ZM756.3 190.6 763.3 191.1 762.1 191.8 755 191.3ZM753.7 192.1 760.9 192.6 759.6 193.3 752.4 192.8ZM751 193.6 758.4 194.1 757 194.9 749.7 194.3ZM748.3 195.1 755.7 195.7 754.3 196.5 746.8 195.9ZM745.3 196.8 752.9 197.3 751.5 198.2 743.8 197.6ZM742.3 198.5 750.1 199.1 748.6 200 740.7 199.4ZM739.1 200.3 747 200.9 745.4 201.9 737.4 201.2ZM735.7 202.2 743.8 202.8 742.2 203.8 734 203.1ZM732.2 204.1 740.5 204.8 738.7 205.9 730.4 205.2ZM728.5 206.2 736.9 207 735.1 208.1 726.6 207.3ZM724.6 208.4 733.2 209.2 731.3 210.4 722.5 209.6ZM720.5 210.7 729.3 211.6 727.3 212.8 718.3 212ZM716.1 213.2 725.2 214 723 215.3 713.8 214.5ZM711.5 215.8 720.8 216.7 718.5 218.1 709.1 217.1ZM706.6 218.5 716.1 219.5 713.7 221 704 220ZM701.4 221.4 711.2 222.5 708.6 224 698.7 223ZM695.9 224.5 705.9 225.6 703.1 227.3 693 226.2ZM690 227.8 700.3 229 697.3 230.8 686.9 229.6ZM683.7 231.4 694.3 232.6 691.1 234.5 680.4 233.2ZM677 235.1 687.9 236.5 684.5 238.5 673.4 237.1ZM669.8 239.2 680.9 240.6 677.3 242.8 666 241.3ZM662 243.6 673.5 245.1 669.6 247.5 657.9 245.9ZM653.6 248.3 665.5 249.9 661.2 252.5 649.2 250.8ZM644.6 253.4 656.8 255.2 652.2 257.9 639.7 256.1ZM634.7 258.9 647.3 260.8 642.3 263.9 629.5 261.8ZM624 264.9 637 267 631.5 270.3 618.3 268.1ZM612.3 271.5 625.7 273.8 619.7 277.5 606 275ZM599.4 278.7 613.3 281.3 606.7 285.3 592.5 282.6ZM585.2 286.7 599.6 289.5 592.2 294 577.6 291ZM569.5 295.5 584.4 298.7 576.1 303.6 561 300.3ZM551.9 305.4 567.4 308.9 558.1 314.5 542.4 310.7ZM532.3 316.4 548.3 320.4 537.8 326.7 521.5 322.5ZM510 328.9 526.6 333.4 514.6 340.6 497.8 335.8ZM484.7 343.1 501.8 348.3 488.1 356.6 470.6 351ZM455.6 359.5 473.3 365.5 457.3 375.1 439.3 368.6ZM421.8 378.4 440 385.5 421.3 396.8 402.7 389.1ZM382 400.8 400.8 409.1 378.3 422.6 359.4 413.5ZM334.6 427.4 353.7 437.4 326.5 453.7 307.3 442.7ZM277.2 459.6 296.2 471.9 262.5 492.2 243.6 478.5ZM799.3 169.4 804.3 169.7 803.8 170 798.8 169.8ZM798.2 170.1 803.3 170.3 802.8 170.7 797.7 170.4ZM797.1 170.8 802.2 171 801.7 171.4 796.5 171.1ZM795.9 171.5 801.1 171.7 800.6 172.1 795.4 171.8ZM794.7 172.2 800 172.5 799.4 172.8 794.1 172.6ZM793.5 173 798.9 173.2 798.3 173.6 792.9 173.3ZM792.2 173.7 797.7 174 797 174.4 791.6 174.1ZM790.9 174.5 796.4 174.8 795.8 175.2 790.2 174.9ZM789.5 175.3 795.1 175.6 794.5 176 788.9 175.8ZM788.1 176.2 793.8 176.5 793.1 176.9 787.4 176.6ZM786.7 177.1 792.5 177.4 791.7 177.8 785.9 177.5ZM785.2 178 791 178.3 790.3 178.7 784.4 178.4ZM783.6 178.9 789.6 179.2 788.8 179.7 782.8 179.4ZM782 179.9 788.1 180.2 787.3 180.7 781.2 180.4ZM780.3 180.9 786.5 181.2 785.7 181.7 779.5 181.4ZM778.6 181.9 784.9 182.3 784 182.8 777.7 182.4ZM776.8 183 783.2 183.4 782.3 183.9 775.9 183.5ZM775 184.1 781.4 184.5 780.5 185.1 774 184.7ZM773 185.3 779.6 185.7 778.7 186.3 772 185.9ZM771 186.5 777.7 186.9 776.7 187.5 770 187.1ZM768.9 187.7 775.7 188.2 774.7 188.8 767.8 188.4ZM766.7 189 773.7 189.5 772.6 190.2 765.6 189.7ZM764.5 190.4 771.5 190.9 770.4 191.6 763.3 191.1ZM762.1 191.8 769.3 192.3 768.2 193.1 760.9 192.6ZM759.6 193.3 767 193.8 765.8 194.6 758.4 194.1ZM757 194.9 764.5 195.4 763.3 196.2 755.7 195.7ZM754.3 196.5 762 197.1 760.7 197.9 752.9 197.3ZM751.5 198.2 759.3 198.8 757.9 199.7 750.1 199.1ZM748.6 200 756.5 200.6 755.1 201.5 747 200.9ZM745.4 201.9 753.6 202.5 752.1 203.5 743.8 202.8ZM742.2 203.8 750.5 204.5 748.9 205.5 740.5 204.8ZM738.7 205.9 747.2 206.6 745.6 207.7 736.9 207ZM735.1 208.1 743.8 208.8 742 210 733.2 209.2ZM731.3 210.4 740.2 211.2 738.3 212.4 729.3 211.6ZM727.3 212.8 736.4 213.6 734.4 214.9 725.2 214ZM723 215.3 732.3 216.2 730.2 217.6 720.8 216.7ZM718.5 218.1 728.1 219 725.8 220.5 716.1 219.5ZM713.7 221 723.5 222 721.1 223.5 711.2 222.5ZM708.6 224 718.7 225.1 716.1 226.7 705.9 225.6ZM703.1 227.3 713.5 228.4 710.8 230.2 700.3 229ZM697.3 230.8 708 232 705.1 233.9 694.3 232.6ZM691.1 234.5 702.1 235.8 699 237.8 687.9 236.5ZM684.5 238.5 695.8 239.9 692.4 242.1 680.9 240.6ZM677.3 242.8 688.9 244.3 685.3 246.7 673.5 245.1ZM669.6 247.5 681.6 249.1 677.7 251.6 665.5 249.9ZM661.2 252.5 673.6 254.3 669.4 257 656.8 255.2ZM652.2 257.9 664.9 259.9 660.3 262.8 647.3 260.8ZM642.3 263.9 655.5 266 650.5 269.2 637 267ZM631.5 270.3 645.2 272.6 639.6 276.2 625.7 273.8ZM619.7 277.5 633.8 280 627.7 283.9 613.3 281.3ZM606.7 285.3 621.3 288.1 614.5 292.5 599.6 289.5ZM592.2 294 607.4 297.1 599.9 302 584.4 298.7ZM576.1 303.6 591.9 307.1 583.5 312.6 567.4 308.9ZM558.1 314.5 574.5 318.4 564.9 324.6 548.3 320.4ZM537.8 326.7 554.8 331.1 543.9 338.2 526.6 333.4ZM514.6 340.6 532.3 345.7 519.8 353.7 501.8 348.3ZM488.1 356.6 506.4 362.4 492 371.8 473.3 365.5ZM457.3 375.1 476.3 381.9 459.4 392.9 440 385.5ZM421.3 396.8 440.9 404.8 420.7 417.9 400.8 409.1ZM378.3 422.6 398.5 432.2 374 448.1 353.7 437.4ZM326.5 453.7 346.9 465.6 316.7 485.1 296.2 471.9ZM262.5 492.2 282.9 507.1 244.6 531.8 224.5 515ZM803.8 170 808.9 170.2 808.4 170.6 803.3 170.3ZM802.8 170.7 807.9 170.9 807.4 171.3 802.2 171ZM801.7 171.4 806.9 171.6 806.4 172 801.1 171.7ZM800.6 172.1 805.9 172.3 805.3 172.7 800 172.5ZM799.4 172.8 804.8 173.1 804.3 173.5 798.9 173.2ZM798.3 173.6 803.7 173.9 803.1 174.3 797.7 174ZM797 174.4 802.6 174.7 802 175.1 796.4 174.8ZM795.8 175.2 801.4 175.5 800.8 175.9 795.1 175.6ZM794.5 176 800.2 176.3 799.6 176.8 793.8 176.5ZM793.1 176.9 798.9 177.2 798.3 177.7 792.5 177.4ZM791.7 177.8 797.6 178.1 797 178.6 791 178.3ZM790.3 178.7 796.3 179.1 795.6 179.6 789.6 179.2ZM788.8 179.7 794.9 180 794.2 180.5 788.1 180.2ZM787.3 180.7 793.4 181.1 792.7 181.6 786.5 181.2ZM785.7 181.7 792 182.1 791.2 182.6 784.9 182.3ZM784 182.8 790.4 183.2 789.6 183.7 783.2 183.4ZM782.3 183.9 788.8 184.3 788 184.9 781.4 184.5ZM780.5 185.1 787.1 185.5 786.3 186.1 779.6 185.7ZM778.7 186.3 785.4 186.7 784.5 187.3 777.7 186.9ZM776.7 187.5 783.6 188 782.6 188.6 775.7 188.2ZM774.7 188.8 781.7 189.3 780.7 190 773.7 189.5ZM772.6 190.2 779.7 190.7 778.7 191.4 771.5 190.9ZM770.4 191.6 777.7 192.1 776.6 192.8 769.3 192.3ZM768.2 193.1 775.5 193.6 774.4 194.4 767 193.8ZM765.8 194.6 773.3 195.2 772.1 196 764.5 195.4ZM763.3 196.2 771 196.8 769.8 197.6 762 197.1ZM760.7 197.9 768.5 198.5 767.3 199.4 759.3 198.8ZM757.9 199.7 766 200.3 764.6 201.2 756.5 200.6ZM755.1 201.5 763.3 202.2 761.9 203.2 753.6 202.5ZM752.1 203.5 760.4 204.2 759 205.2 750.5 204.5ZM748.9 205.5 757.5 206.3 755.9 207.3 747.2 206.6ZM745.6 207.7 754.3 208.5 752.7 209.6 743.8 208.8ZM742 210 751 210.8 749.3 212 740.2 211.2ZM738.3 212.4 747.5 213.2 745.7 214.5 736.4 213.6ZM734.4 214.9 743.8 215.8 741.9 217.2 732.3 216.2ZM730.2 217.6 739.9 218.6 737.8 220 728.1 219ZM725.8 220.5 735.7 221.5 733.6 223 723.5 222ZM721.1 223.5 731.3 224.6 729 226.2 718.7 225.1ZM716.1 226.7 726.6 227.9 724.1 229.6 713.5 228.4ZM710.8 230.2 721.6 231.4 718.9 233.3 708 232ZM705.1 233.9 716.2 235.2 713.3 237.2 702.1 235.8ZM699 237.8 710.4 239.2 707.3 241.4 695.8 239.9ZM692.4 242.1 704.1 243.6 700.9 245.9 688.9 244.3ZM685.3 246.7 697.4 248.3 693.9 250.8 681.6 249.1ZM677.7 251.6 690.2 253.4 686.3 256.1 673.6 254.3ZM669.4 257 682.3 258.9 678.1 261.8 664.9 259.9ZM660.3 262.8 673.7 264.9 669.1 268.1 655.5 266ZM650.5 269.2 664.3 271.5 659.3 275 645.2 272.6ZM639.6 276.2 654 278.7 648.4 282.6 633.8 280ZM627.7 283.9 642.6 286.7 636.5 291 621.3 288.1ZM614.5 292.5 630 295.5 623.2 300.3 607.4 297.1ZM599.9 302 615.9 305.4 608.3 310.7 591.9 307.1ZM583.5 312.6 600.2 316.4 591.5 322.5 574.5 318.4ZM564.9 324.6 582.3 328.9 572.5 335.8 554.8 331.1ZM543.9 338.2 562 343.1 550.8 351 532.3 345.7ZM519.8 353.7 538.7 359.4 525.7 368.6 506.4 362.4ZM492 371.8 511.6 378.4 496.4 389.1 476.3 381.9ZM459.4 392.9 479.8 400.7 461.7 413.4 440.9 404.8ZM420.7 417.9 441.8 427.3 420 442.6 398.5 432.2ZM374 448.1 395.8 459.5 368.9 478.3 346.9 465.6ZM316.7 485.1 338.8 499.4 305 523.1 282.9 507.1ZM244.6 531.8 266.5 550.1 222.5 580.9 201.1 560ZM809.4 169.9 814.5 170.1 814 170.5 808.9 170.2ZM808.4 170.6 813.6 170.8 813.1 171.2 807.9 170.9ZM807.4 171.3 812.6 171.5 812.2 171.9 806.9 171.6ZM806.4 172 811.7 172.2 811.2 172.6 805.9 172.3ZM805.3 172.7 810.7 173 810.2 173.4 804.8 173.1ZM804.3 173.5 809.7 173.7 809.2 174.1 803.7 173.9ZM803.1 174.3 808.7 174.5 808.1 174.9 802.6 174.7ZM802 175.1 807.6 175.4 807.1 175.8 801.4 175.5ZM800.8 175.9 806.5 176.2 805.9 176.6 800.2 176.3ZM799.6 176.8 805.4 177.1 804.8 177.5 798.9 177.2ZM798.3 177.7 804.2 178 803.6 178.4 797.6 178.1ZM797 178.6 802.9 178.9 802.3 179.4 796.3 179.1ZM795.6 179.6 801.7 179.9 801 180.4 794.9 180ZM794.2 180.5 800.4 180.9 799.7 181.4 793.4 181.1ZM792.7 181.6 799 181.9 798.3 182.5 792 182.1ZM791.2 182.6 797.6 183 796.9 183.6 790.4 183.2ZM789.6 183.7 796.1 184.1 795.4 184.7 788.8 184.3ZM788 184.9 794.6 185.3 793.8 185.9 787.1 185.5ZM786.3 186.1 793 186.5 792.2 187.1 785.4 186.7ZM784.5 187.3 791.4 187.8 790.5 188.4 783.6 188ZM782.6 188.6 789.6 189.1 788.8 189.7 781.7 189.3ZM780.7 190 787.8 190.4 786.9 191.1 779.7 190.7ZM778.7 191.4 786 191.9 785 192.6 777.7 192.1ZM776.6 192.8 784 193.3 783 194.1 775.5 193.6ZM774.4 194.4 782 194.9 780.9 195.7 773.3 195.2ZM772.1 196 779.9 196.5 778.8 197.4 771 196.8ZM769.8 197.6 777.6 198.2 776.5 199.1 768.5 198.5ZM767.3 199.4 775.3 200 774.1 200.9 766 200.3ZM764.6 201.2 772.9 201.9 771.6 202.8 763.3 202.2ZM761.9 203.2 770.3 203.8 768.9 204.9 760.4 204.2ZM759 205.2 767.6 205.9 766.2 207 757.5 206.3ZM755.9 207.3 764.7 208.1 763.2 209.2 754.3 208.5ZM752.7 209.6 761.7 210.4 760.1 211.6 751 210.8ZM749.3 212 758.5 212.8 756.9 214.1 747.5 213.2ZM745.7 214.5 755.2 215.4 753.4 216.7 743.8 215.8ZM741.9 217.2 751.6 218.1 749.7 219.5 739.9 218.6ZM737.8 220 747.8 221 745.8 222.5 735.7 221.5ZM733.6 223 743.8 224 741.7 225.7 731.3 224.6ZM729 226.2 739.5 227.3 737.3 229 726.6 227.9ZM724.1 229.6 735 230.8 732.5 232.6 721.6 231.4ZM718.9 233.3 730.1 234.5 727.5 236.5 716.2 235.2ZM713.3 237.2 724.8 238.5 722 240.7 710.4 239.2ZM707.3 241.4 719.2 242.8 716.2 245.1 704.1 243.6ZM700.9 245.9 713.1 247.5 709.9 249.9 697.4 248.3ZM693.9 250.8 706.5 252.5 703 255.2 690.2 253.4ZM686.3 256.1 699.4 258 695.6 260.9 682.3 258.9ZM678.1 261.8 691.6 263.9 687.5 267.1 673.7 264.9ZM669.1 268.1 683.1 270.4 678.6 273.8 664.3 271.5ZM659.3 275 673.8 277.5 668.8 281.3 654 278.7ZM648.4 282.6 663.5 285.3 658 289.5 642.6 286.7ZM636.5 291 652.2 294 646 298.7 630 295.5ZM623.2 300.3 639.5 303.6 632.6 308.9 615.9 305.4ZM608.3 310.7 625.3 314.5 617.6 320.4 600.2 316.4ZM591.5 322.5 609.3 326.7 600.5 333.4 582.3 328.9ZM572.5 335.8 591.1 340.6 581 348.3 562 343.1ZM550.8 351 570.2 356.5 558.5 365.4 538.7 359.4ZM525.7 368.6 546 375 532.4 385.4 511.6 378.4ZM496.4 389.1 517.6 396.7 501.4 409 479.8 400.7ZM461.7 413.4 483.8 422.5 464.4 437.3 441.8 427.3ZM420 442.6 443 453.6 419.2 471.8 395.8 459.5ZM368.9 478.3 392.6 492.1 362.8 514.8 338.8 499.4ZM305 523.1 329 540.6 290.4 570 266.5 550.1ZM222.5 580.9 246 604 194.3 643.4 171.6 616.6ZM814 170.5 819.2 170.7 818.8 171 813.6 170.8ZM813.1 171.2 818.4 171.4 817.9 171.8 812.6 171.5ZM812.2 171.9 817.5 172.1 817.1 172.5 811.7 172.2ZM811.2 172.6 816.6 172.9 816.2 173.2 810.7 173ZM810.2 173.4 815.7 173.6 815.2 174 809.7 173.7ZM809.2 174.1 814.8 174.4 814.3 174.8 808.7 174.5ZM808.1 174.9 813.8 175.2 813.3 175.6 807.6 175.4ZM807.1 175.8 812.8 176.1 812.3 176.5 806.5 176.2ZM805.9 176.6 811.7 176.9 811.2 177.4 805.4 177.1ZM804.8 177.5 810.7 177.8 810.1 178.3 804.2 178ZM803.6 178.4 809.6 178.8 809 179.2 802.9 178.9ZM802.3 179.4 808.4 179.7 807.8 180.2 801.7 179.9ZM801 180.4 807.2 180.7 806.6 181.2 800.4 180.9ZM799.7 181.4 806 181.8 805.4 182.3 799 181.9ZM798.3 182.5 804.7 182.8 804.1 183.4 797.6 183ZM796.9 183.6 803.4 183.9 802.7 184.5 796.1 184.1ZM795.4 184.7 802 185.1 801.3 185.7 794.6 185.3ZM793.8 185.9 800.6 186.3 799.8 186.9 793 186.5ZM792.2 187.1 799.1 187.6 798.3 188.2 791.4 187.8ZM790.5 188.4 797.5 188.9 796.7 189.5 789.6 189.1ZM788.8 189.7 795.9 190.2 795.1 190.9 787.8 190.4ZM786.9 191.1 794.2 191.6 793.4 192.4 786 191.9ZM785 192.6 792.5 193.1 791.6 193.9 784 193.3ZM783 194.1 790.6 194.6 789.7 195.4 782 194.9ZM780.9 195.7 788.7 196.3 787.7 197.1 779.9 196.5ZM778.8 197.4 786.7 197.9 785.6 198.8 777.6 198.2ZM776.5 199.1 784.6 199.7 783.5 200.6 775.3 200ZM774.1 200.9 782.4 201.6 781.2 202.5 772.9 201.9ZM771.6 202.8 780 203.5 778.8 204.5 770.3 203.8ZM768.9 204.9 777.6 205.6 776.3 206.6 767.6 205.9ZM766.2 207 775 207.7 773.7 208.8 764.7 208.1ZM763.2 209.2 772.3 210 770.9 211.2 761.7 210.4ZM760.1 211.6 769.4 212.4 767.9 213.7 758.5 212.8ZM756.9 214.1 766.4 214.9 764.8 216.3 755.2 215.4ZM753.4 216.7 763.2 217.6 761.5 219 751.6 218.1ZM749.7 219.5 759.8 220.5 758 222 747.8 221ZM745.8 222.5 756.2 223.5 754.3 225.1 743.8 224ZM741.7 225.7 752.3 226.8 750.3 228.5 739.5 227.3ZM737.3 229 748.2 230.2 746 232 735 230.8ZM732.5 232.6 743.8 233.9 741.5 235.8 730.1 234.5ZM727.5 236.5 739.1 237.9 736.6 240 724.8 238.5ZM722 240.7 734 242.1 731.3 244.4 719.2 242.8ZM716.2 245.1 728.5 246.7 725.6 249.1 713.1 247.5ZM709.9 249.9 722.6 251.7 719.5 254.3 706.5 252.5ZM703 255.2 716.2 257 712.8 259.9 699.4 258ZM695.6 260.9 709.3 262.9 705.5 266 691.6 263.9ZM687.5 267.1 701.6 269.2 697.6 272.7 683.1 270.4ZM678.6 273.8 693.3 276.2 688.8 280 673.8 277.5ZM668.8 281.3 684.1 284 679.2 288.1 663.5 285.3ZM658 289.5 673.9 292.5 668.4 297.1 652.2 294ZM646 298.7 662.6 302 656.5 307.1 639.5 303.6ZM632.6 308.9 650 312.6 643 318.4 625.3 314.5ZM617.6 320.4 635.7 324.6 627.8 331.1 609.3 326.7ZM600.5 333.4 619.5 338.1 610.5 345.7 591.1 340.6ZM581 348.3 600.9 353.7 590.6 362.4 570.2 356.5ZM558.5 365.4 579.4 371.7 567.3 381.8 546 375ZM532.4 385.4 554.3 392.8 540 404.8 517.6 396.7ZM501.4 409 524.4 417.8 507.3 432.2 483.8 422.5ZM464.4 437.3 488.5 448 467.6 465.5 443 453.6ZM419.2 471.8 444.3 485 418.2 506.9 392.6 492.1ZM362.8 514.8 388.8 531.6 355.2 559.7 329 540.6ZM290.4 570 316.7 592 272 629.4 246 604ZM818.8 171 824 171.3 823.7 171.6 818.4 171.4ZM817.9 171.8 823.3 172 822.9 172.4 817.5 172.1ZM817.1 172.5 822.5 172.7 822.1 173.1 816.6 172.9ZM816.2 173.2 821.7 173.5 821.2 173.9 815.7 173.6ZM815.2 174 820.8 174.3 820.4 174.7 814.8 174.4ZM814.3 174.8 819.9 175.1 819.5 175.5 813.8 175.2ZM813.3 175.6 819 175.9 818.6 176.4 812.8 176.1ZM812.3 176.5 818.1 176.8 817.6 177.2 811.7 176.9ZM811.2 177.4 817.1 177.7 816.7 178.1 810.7 177.8ZM810.1 178.3 816.2 178.6 815.6 179.1 809.6 178.8ZM809 179.2 815.1 179.6 814.6 180.1 808.4 179.7ZM807.8 180.2 814.1 180.6 813.5 181.1 807.2 180.7ZM806.6 181.2 813 181.6 812.4 182.1 806 181.8ZM805.4 182.3 811.8 182.7 811.2 183.2 804.7 182.8ZM804.1 183.4 810.6 183.8 810 184.3 803.4 183.9ZM802.7 184.5 809.4 184.9 808.7 185.5 802 185.1ZM801.3 185.7 808.1 186.1 807.4 186.7 800.6 186.3ZM799.8 186.9 806.8 187.4 806.1 188 799.1 187.6ZM798.3 188.2 805.4 188.6 804.7 189.3 797.5 188.9ZM796.7 189.5 803.9 190 803.2 190.7 795.9 190.2ZM795.1 190.9 802.4 191.4 801.6 192.1 794.2 191.6ZM793.4 192.4 800.8 192.9 800 193.6 792.5 193.1ZM791.6 193.9 799.2 194.4 798.3 195.2 790.6 194.6ZM789.7 195.4 797.5 196 796.6 196.8 788.7 196.3ZM787.7 197.1 795.7 197.7 794.7 198.5 786.7 197.9ZM785.6 198.8 793.8 199.4 792.8 200.3 784.6 199.7ZM783.5 200.6 791.8 201.3 790.8 202.2 782.4 201.6ZM781.2 202.5 789.7 203.2 788.6 204.2 780 203.5ZM778.8 204.5 787.5 205.2 786.4 206.3 777.6 205.6ZM776.3 206.6 785.2 207.4 784 208.5 775 207.7ZM773.7 208.8 782.8 209.6 781.6 210.8 772.3 210ZM770.9 211.2 780.3 212 778.9 213.2 769.4 212.4ZM767.9 213.7 777.5 214.5 776.1 215.8 766.4 214.9ZM764.8 216.3 774.7 217.2 773.2 218.6 763.2 217.6ZM761.5 219 771.6 220 770 221.5 759.8 220.5ZM758 222 768.4 223 766.7 224.6 756.2 223.5ZM754.3 225.1 765 226.2 763.2 227.9 752.3 226.8ZM750.3 228.5 761.3 229.6 759.4 231.4 748.2 230.2ZM746 232 757.4 233.3 755.3 235.2 743.8 233.9ZM741.5 235.8 753.2 237.2 751 239.3 739.1 237.9ZM736.6 240 748.7 241.4 746.3 243.6 734 242.1ZM731.3 244.4 743.8 245.9 741.2 248.3 728.5 246.7ZM725.6 249.1 738.5 250.8 735.7 253.4 722.6 251.7ZM719.5 254.3 732.8 256.1 729.8 258.9 716.2 257ZM712.8 259.9 726.6 261.9 723.3 264.9 709.3 262.9ZM705.5 266 719.9 268.2 716.3 271.5 701.6 269.2ZM697.6 272.7 712.5 275 708.5 278.7 693.3 276.2ZM688.8 280 704.3 282.6 699.9 286.7 684.1 284ZM679.2 288.1 695.3 291 690.4 295.5 673.9 292.5ZM668.4 297.1 685.3 300.3 679.9 305.4 662.6 302ZM656.5 307.1 674.1 310.7 668 316.4 650 312.6ZM643 318.4 661.5 322.5 654.6 328.9 635.7 324.6ZM627.8 331.1 647.2 335.8 639.3 343.1 619.5 338.1ZM610.5 345.7 630.8 351 621.8 359.4 600.9 353.7ZM590.6 362.4 612 368.5 601.4 378.4 579.4 371.7ZM567.3 381.8 589.9 389 577.4 400.6 554.3 392.8ZM540 404.8 563.8 413.3 548.9 427.2 524.4 417.8ZM507.3 432.2 532.4 442.5 514.3 459.4 488.5 448ZM467.6 465.5 494.1 478.2 471.4 499.2 444.3 485ZM418.2 506.9 446 522.9 417 549.8 388.8 531.6ZM355.2 559.7 383.9 580.6 345.7 616.2 316.7 592ZM272 629.4 301 657.8 248 707 219.6 673.4ZM818.6 176.4 824.4 176.7 824 177.1 818.1 176.8ZM817.6 177.2 823.6 177.5 823.1 178 817.1 177.7ZM816.7 178.1 822.7 178.5 822.2 178.9 816.2 178.6ZM815.6 179.1 821.8 179.4 821.3 179.9 815.1 179.6ZM814.6 180.1 820.8 180.4 820.4 180.9 814.1 180.6ZM813.5 181.1 819.9 181.4 819.4 182 813 181.6ZM812.4 182.1 818.8 182.5 818.3 183 811.8 182.7ZM811.2 183.2 817.8 183.6 817.3 184.2 810.6 183.8ZM810 184.3 816.7 184.7 816.1 185.3 809.4 184.9ZM808.7 185.5 815.6 185.9 815 186.5 808.1 186.1ZM807.4 186.7 814.4 187.1 813.8 187.8 806.8 187.4ZM806.1 188 813.2 188.4 812.5 189.1 805.4 188.6ZM804.7 189.3 811.9 189.8 811.2 190.5 803.9 190ZM803.2 190.7 810.5 191.2 809.8 191.9 802.4 191.4ZM801.6 192.1 809.1 192.6 808.4 193.4 800.8 192.9ZM800 193.6 807.7 194.1 806.9 194.9 799.2 194.4ZM798.3 195.2 806.2 195.7 805.4 196.6 797.5 196ZM796.6 196.8 804.6 197.4 803.8 198.3 795.7 197.7ZM794.7 198.5 802.9 199.1 802 200 793.8 199.4ZM792.8 200.3 801.2 201 800.3 201.9 791.8 201.3ZM790.8 202.2 799.3 202.9 798.4 203.9 789.7 203.2ZM788.6 204.2 797.4 204.9 796.4 205.9 787.5 205.2ZM786.4 206.3 795.4 207 794.3 208.1 785.2 207.4ZM784 208.5 793.2 209.2 792.1 210.4 782.8 209.6ZM781.6 210.8 791 211.6 789.8 212.8 780.3 212ZM778.9 213.2 788.6 214.1 787.3 215.4 777.5 214.5ZM776.1 215.8 786 216.7 784.7 218.1 774.7 217.2ZM773.2 218.6 783.4 219.5 782 221 771.6 220ZM770 221.5 780.5 222.5 779 224.1 768.4 223ZM766.7 224.6 777.5 225.7 775.9 227.3 765 226.2ZM763.2 227.9 774.2 229.1 772.6 230.8 761.3 229.6ZM759.4 231.4 770.8 232.7 769 234.6 757.4 233.3ZM755.3 235.2 767.1 236.5 765.1 238.6 753.2 237.2ZM751 239.3 763.1 240.7 761 242.9 748.7 241.4ZM746.3 243.6 758.8 245.2 756.6 247.5 743.8 245.9ZM741.2 248.3 754.2 250 751.8 252.5 738.5 250.8ZM735.7 253.4 749.2 255.2 746.5 258 732.8 256.1ZM729.8 258.9 743.8 260.9 740.9 263.9 726.6 261.9ZM723.3 264.9 737.8 267.1 734.7 270.4 719.9 268.2ZM716.3 271.5 731.3 273.9 727.9 277.5 712.5 275ZM708.5 278.7 724.2 281.3 720.4 285.3 704.3 282.6ZM699.9 286.7 716.3 289.5 712.1 294 695.3 291ZM690.4 295.5 707.6 298.7 702.8 303.7 685.3 300.3ZM679.9 305.4 697.8 308.9 692.4 314.5 674.1 310.7ZM668 316.4 686.8 320.4 680.7 326.7 661.5 322.5ZM654.6 328.9 674.3 333.4 667.4 340.6 647.2 335.8ZM639.3 343.1 660.1 348.3 652.2 356.5 630.8 351ZM621.8 359.4 643.7 365.4 634.5 375 612 368.5ZM601.4 378.4 624.5 385.4 613.7 396.6 589.9 389ZM577.4 400.6 602 408.9 589.1 422.4 563.8 413.3ZM548.9 427.2 574.9 437.2 559.3 453.5 532.4 442.5ZM514.3 459.4 541.9 471.6 522.5 491.9 494.1 478.2ZM471.4 499.2 500.8 514.6 476.1 540.4 446 522.9ZM417 549.8 448 569.7 415.6 603.6 383.9 580.6ZM345.7 616.2 377.8 643 333.3 689.4 301 657.8ZM819.4 182 825.9 182.3 825.4 182.9 818.8 182.5ZM818.3 183 824.9 183.4 824.5 184 817.8 183.6ZM817.3 184.2 824 184.5 823.5 185.1 816.7 184.7ZM816.1 185.3 823 185.7 822.5 186.3 815.6 185.9ZM815 186.5 822 186.9 821.4 187.6 814.4 187.1ZM813.8 187.8 820.9 188.2 820.3 188.9 813.2 188.4ZM812.5 189.1 819.8 189.6 819.2 190.2 811.9 189.8ZM811.2 190.5 818.6 190.9 818 191.7 810.5 191.2ZM809.8 191.9 817.4 192.4 816.8 193.1 809.1 192.6ZM808.4 193.4 816.1 193.9 815.5 194.7 807.7 194.1ZM806.9 194.9 814.8 195.5 814.1 196.3 806.2 195.7ZM805.4 196.6 813.4 197.1 812.7 198 804.6 197.4ZM803.8 198.3 812 198.8 811.2 199.7 802.9 199.1ZM802 200 810.4 200.7 809.7 201.6 801.2 201ZM800.3 201.9 808.8 202.6 808 203.5 799.3 202.9ZM798.4 203.9 807.2 204.6 806.3 205.6 797.4 204.9ZM796.4 205.9 805.4 206.7 804.5 207.8 795.4 207ZM794.3 208.1 803.5 208.9 802.6 210 793.2 209.2ZM792.1 210.4 801.6 211.2 800.5 212.4 791 211.6ZM789.8 212.8 799.5 213.7 798.4 215 788.6 214.1ZM787.3 215.4 797.3 216.3 796.1 217.7 786 216.7ZM784.7 218.1 795 219.1 793.7 220.5 783.4 219.5ZM782 221 792.5 222 791.2 223.6 780.5 222.5ZM779 224.1 789.9 225.1 788.5 226.8 777.5 225.7ZM775.9 227.3 787.1 228.5 785.6 230.2 774.2 229.1ZM772.6 230.8 784.1 232.1 782.5 233.9 770.8 232.7ZM769 234.6 780.8 235.9 779.2 237.9 767.1 236.5ZM765.1 238.6 777.4 240 775.6 242.1 763.1 240.7ZM761 242.9 773.7 244.4 771.7 246.7 758.8 245.2ZM756.6 247.5 769.7 249.2 767.6 251.7 754.2 250ZM751.8 252.5 765.4 254.3 763.1 257 749.2 255.2ZM746.5 258 760.7 259.9 758.1 262.9 743.8 260.9ZM740.9 263.9 755.5 266 752.8 269.3 737.8 267.1ZM734.7 270.4 749.9 272.7 746.9 276.3 731.3 273.9ZM727.9 277.5 743.8 280 740.4 284 724.2 281.3ZM720.4 285.3 737 288.1 733.3 292.5 716.3 289.5ZM712.1 294 729.4 297.1 725.3 302 707.6 298.7ZM702.8 303.7 721 307.1 716.4 312.6 697.8 308.9ZM692.4 314.5 711.5 318.4 706.3 324.6 686.8 320.4ZM680.7 326.7 700.8 331.1 694.9 338.1 674.3 333.4ZM667.4 340.6 688.6 345.6 681.8 353.7 660.1 348.3ZM652.2 356.5 674.6 362.4 666.7 371.7 643.7 365.4ZM634.5 375 658.2 381.8 649 392.8 624.5 385.4ZM613.7 396.6 639 404.7 628 417.7 602 408.9ZM589.1 422.4 616 432.1 602.7 447.8 574.9 437.2ZM559.3 453.5 588 465.3 571.7 484.8 541.9 471.6ZM522.5 491.9 553.3 506.7 532.6 531.3 500.8 514.6ZM476.1 540.4 509 559.4 481.9 591.6 448 569.7ZM415.6 603.6 450.5 629 413.7 672.9 377.8 643ZM333.3 689.4 369.8 725.1 316.7 788.3 280.1 745ZM819.2 190.2 826.6 190.7 826.1 191.4 818.6 190.9ZM818 191.7 825.6 192.1 825 192.9 817.4 192.4ZM816.8 193.1 824.5 193.6 823.9 194.4 816.1 193.9ZM815.5 194.7 823.4 195.2 822.8 196 814.8 195.5ZM814.1 196.3 822.2 196.8 821.6 197.7 813.4 197.1ZM812.7 198 820.9 198.6 820.3 199.4 812 198.8ZM811.2 199.7 819.6 200.4 819 201.3 810.4 200.7ZM809.7 201.6 818.3 202.2 817.6 203.2 808.8 202.6ZM808 203.5 816.8 204.2 816.1 205.3 807.2 204.6ZM806.3 205.6 815.3 206.3 814.6 207.4 805.4 206.7ZM804.5 207.8 813.8 208.5 812.9 209.6 803.5 208.9ZM802.6 210 812.1 210.8 811.2 212 801.6 211.2ZM800.5 212.4 810.3 213.3 809.4 214.5 799.5 213.7ZM798.4 215 808.4 215.9 807.5 217.2 797.3 216.3ZM796.1 217.7 806.5 218.6 805.4 220 795 219.1ZM793.7 220.5 804.3 221.5 803.2 223 792.5 222ZM791.2 223.6 802.1 224.6 800.9 226.2 789.9 225.1ZM788.5 226.8 799.7 227.9 798.5 229.7 787.1 228.5ZM785.6 230.2 797.2 231.5 795.8 233.3 784.1 232.1ZM782.5 233.9 794.4 235.2 793 237.2 780.8 235.9ZM779.2 237.9 791.5 239.3 790 241.4 777.4 240ZM775.6 242.1 788.4 243.6 786.7 245.9 773.7 244.4ZM771.7 246.7 785 248.3 783.2 250.8 769.7 249.2ZM767.6 251.7 781.3 253.4 779.3 256.1 765.4 254.3ZM763.1 257 777.3 258.9 775.2 261.9 760.7 259.9ZM758.1 262.9 772.9 265 770.6 268.2 755.5 266ZM752.8 269.3 768.2 271.5 765.6 275.1 749.9 272.7ZM746.9 276.3 763 278.8 760.2 282.6 743.8 280ZM740.4 284 757.2 286.7 754.1 291 737 288.1ZM733.3 292.5 750.8 295.5 747.4 300.3 729.4 297.1ZM725.3 302 743.7 305.4 739.9 310.7 721 307.1ZM716.4 312.6 735.8 316.4 731.4 322.5 711.5 318.4ZM706.3 324.6 726.7 328.9 721.8 335.7 700.8 331.1ZM694.9 338.1 716.5 343.1 710.8 350.9 688.6 345.6ZM681.8 353.7 704.7 359.4 698.1 368.5 674.6 362.4ZM666.7 371.7 691 378.3 683.3 389 658.2 381.8ZM649 392.8 674.9 400.6 665.8 413.2 639 404.7ZM628 417.7 655.7 427.1 644.7 442.4 616 432.1ZM602.7 447.8 632.5 459.3 618.9 478 588 465.3ZM571.7 484.8 603.7 499 586.6 522.7 553.3 506.7ZM532.6 531.3 567.2 549.6 545 580.3 509 559.4ZM481.9 591.6 519.4 615.8 489.4 657.3 450.5 629ZM413.7 672.9 453.8 706.4 411.1 765.6 369.8 725.1ZM819 201.3 827.6 201.9 827.1 202.9 818.3 202.2ZM817.6 203.2 826.5 203.9 825.8 204.9 816.8 204.2ZM816.1 205.3 825.2 206 824.5 207 815.3 206.3ZM814.6 207.4 823.9 208.1 823.2 209.3 813.8 208.5ZM812.9 209.6 822.5 210.4 821.8 211.6 812.1 210.8ZM811.2 212 821 212.9 820.3 214.1 810.3 213.3ZM809.4 214.5 819.5 215.4 818.7 216.8 808.4 215.9ZM807.5 217.2 817.8 218.1 817 219.6 806.5 218.6ZM805.4 220 816.1 221 815.2 222.5 804.3 221.5ZM803.2 223 814.2 224.1 813.2 225.7 802.1 224.6ZM800.9 226.2 812.2 227.4 811.2 229.1 799.7 227.9ZM798.5 229.7 810.1 230.9 809 232.7 797.2 231.5ZM795.8 233.3 807.9 234.6 806.7 236.6 794.4 235.2ZM793 237.2 805.4 238.6 804.2 240.7 791.5 239.3ZM790 241.4 802.8 242.9 801.5 245.2 788.4 243.6ZM786.7 245.9 800 247.5 798.5 250 785 248.3ZM783.2 250.8 797 252.6 795.4 255.2 781.3 253.4ZM779.3 256.1 793.7 258 791.9 260.9 777.3 258.9ZM775.2 261.9 790.1 263.9 788.2 267.1 772.9 265ZM770.6 268.2 786.2 270.4 784.1 273.9 768.2 271.5ZM765.6 275.1 781.9 277.5 779.6 281.3 763 278.8ZM760.2 282.6 777.1 285.3 774.6 289.6 757.2 286.7ZM754.1 291 771.9 294 769 298.7 750.8 295.5ZM747.4 300.3 766 303.7 762.9 308.9 743.7 305.4ZM739.9 310.7 759.5 314.5 755.9 320.4 735.8 316.4ZM731.4 322.5 752.1 326.7 748 333.4 726.7 328.9ZM721.8 335.7 743.7 340.6 739 348.3 716.5 343.1ZM710.8 350.9 734.1 356.5 728.7 365.4 704.7 359.4ZM698.1 368.5 722.9 375 716.6 385.3 691 378.3ZM683.3 389 709.8 396.6 702.3 408.9 674.9 400.6ZM665.8 413.2 694.2 422.3 685.3 437.1 655.7 427.1ZM644.7 442.4 675.4 453.4 664.4 471.5 632.5 459.3ZM618.9 478 652.2 491.7 638.4 514.4 603.7 499ZM586.6 522.7 622.9 540.1 605.1 569.5 567.2 549.6ZM545 580.3 584.7 603.2 560.9 642.5 519.4 615.8ZM489.4 657.3 532.8 688.9 499.3 744.3 453.8 706.4ZM818.7 216.8 829.1 217.7 828.4 219.1 817.8 218.1ZM817 219.6 827.7 220.5 827 222 816.1 221ZM815.2 222.5 826.2 223.6 825.4 225.2 814.2 224.1ZM813.2 225.7 824.6 226.8 823.8 228.5 812.2 227.4ZM811.2 229.1 822.9 230.3 822.1 232.1 810.1 230.9ZM809 232.7 821.1 234 820.2 235.9 807.9 234.6ZM806.7 236.6 819.2 237.9 818.2 240 805.4 238.6ZM804.2 240.7 817.1 242.2 816 244.4 802.8 242.9ZM801.5 245.2 814.9 246.8 813.7 249.2 800 247.5ZM798.5 250 812.5 251.7 811.2 254.3 797 252.6ZM795.4 255.2 809.9 257.1 808.5 259.9 793.7 258ZM791.9 260.9 807 262.9 805.5 266 790.1 263.9ZM788.2 267.1 803.9 269.3 802.2 272.7 786.2 270.4ZM784.1 273.9 800.5 276.3 798.6 280 781.9 277.5ZM779.6 281.3 796.7 284 794.7 288.1 777.1 285.3ZM774.6 289.6 792.6 292.5 790.3 297.1 771.9 294ZM769 298.7 787.9 302 785.4 307.1 766 303.7ZM762.9 308.9 782.8 312.6 779.9 318.4 759.5 314.5ZM755.9 320.4 776.9 324.6 773.7 331.1 752.1 326.7ZM748 333.4 770.3 338.1 766.6 345.6 743.7 340.6ZM739 348.3 762.7 353.7 758.5 362.3 734.1 356.5ZM728.7 365.4 753.9 371.7 749 381.8 722.9 375ZM716.6 385.3 743.6 392.7 737.8 404.6 709.8 396.6ZM702.3 408.9 731.5 417.7 724.5 432 694.2 422.3ZM685.3 437.1 716.8 447.7 708.3 465.2 675.4 453.4ZM664.4 471.5 698.8 484.7 688.1 506.5 652.2 491.7ZM638.4 514.4 676.1 531.1 662.4 559.1 622.9 540.1ZM605.1 569.5 646.7 591.3 628.5 628.6 584.7 603.2ZM560.9 642.5 607.1 672.4 581.7 724.5 532.8 688.9ZM818.2 240 831.2 241.4 830.4 243.7 817.1 242.2ZM816 244.4 829.6 246 828.7 248.4 814.9 246.8ZM813.7 249.2 827.8 250.9 826.8 253.5 812.5 251.7ZM811.2 254.3 825.8 256.2 824.7 259 809.9 257.1ZM808.5 259.9 823.7 261.9 822.5 265 807 262.9ZM805.5 266 821.3 268.2 820.1 271.6 803.9 269.3ZM802.2 272.7 818.8 275.1 817.4 278.8 800.5 276.3ZM798.6 280 816 282.7 814.5 286.7 796.7 284ZM794.7 288.1 812.9 291 811.2 295.6 792.6 292.5ZM790.3 297.1 809.4 300.3 807.5 305.4 787.9 302ZM785.4 307.1 805.5 310.7 803.4 316.4 782.8 312.6ZM779.9 318.4 801.2 322.5 798.8 328.9 776.9 324.6ZM773.7 331.1 796.3 335.7 793.6 343.1 770.3 338.1ZM766.6 345.6 790.6 350.9 787.5 359.4 762.7 353.7ZM758.5 362.3 784.1 368.5 780.5 378.3 753.9 371.7ZM749 381.8 776.5 388.9 772.3 400.5 743.6 392.7ZM737.8 404.6 767.6 413.2 762.4 427 731.5 417.7ZM724.5 432 756.8 442.3 750.5 459.1 716.8 447.7ZM708.3 465.2 743.6 477.9 735.8 498.9 698.8 484.7ZM688.1 506.5 727 522.5 717.1 549.3 676.1 531.1ZM662.4 559.1 705.7 580 692.6 615.4 646.7 591.3ZM628.5 628.6 677.2 656.8 659 705.8 607.1 672.4ZM820.1 271.6 836.8 273.9 835.9 277.5 818.8 275.1ZM817.4 278.8 834.9 281.3 833.9 285.4 816 282.7ZM814.5 286.7 832.8 289.6 831.7 294 812.9 291ZM811.2 295.6 830.5 298.7 829.2 303.7 809.4 300.3ZM807.5 305.4 827.9 308.9 826.5 314.5 805.5 310.7ZM803.4 316.4 825 320.4 823.4 326.7 801.2 322.5ZM798.8 328.9 821.7 333.4 819.9 340.6 796.3 335.7ZM793.6 343.1 817.9 348.2 815.8 356.5 790.6 350.9ZM787.5 359.4 813.6 365.4 811.2 374.9 784.1 368.5ZM780.5 378.3 808.5 385.3 805.7 396.5 776.5 388.9ZM772.3 400.5 802.6 408.8 799.2 422.2 767.6 413.2ZM762.4 427 795.4 437 791.3 453.3 756.8 442.3ZM750.5 459.1 786.7 471.4 781.6 491.6 743.6 477.9ZM735.8 498.9 775.8 514.2 769.3 539.9 727 522.5ZM717.1 549.3 761.9 569.2 753.4 602.9 705.7 580ZM692.6 615.4 743.4 642.1 731.7 688.3 677.2 656.8ZM819.9 340.6 844.5 345.6 843.5 353.7 817.9 348.2ZM815.8 356.5 842.3 362.3 841 371.6 813.6 365.4ZM811.2 374.9 839.6 381.7 838.1 392.7 808.5 385.3ZM805.7 396.5 836.5 404.6 834.7 417.6 802.6 408.8ZM799.2 422.2 832.8 431.9 830.6 447.6 795.4 437ZM791.3 453.3 828.3 465.1 825.6 484.5 786.7 471.4ZM781.6 491.6 822.6 506.3 819.3 530.9 775.8 514.2ZM769.3 539.9 815.5 558.9 811.1 591 761.9 569.2ZM753.4 602.9 806 628.2 800.1 671.9 743.4 642.1ZM731.7 688.3 793 723.8 784.4 786.6 717.7 743.6ZM819.3 530.9 866.6 549 866 579.6 815.5 558.9ZM811.1 591 865.3 615 864.5 656.3 806 628.2ZM800.1 671.9 863.6 705.2 862.5 764 793 723.8Z"/><g fill="#c9c9c9" stroke="#c9c9c9" stroke-width="0.8" font-family="Liberation Sans" font-weight="bold" font-size="47" text-anchor="middle"><text transform="matrix(0.0792 0.0260 -0.1590 0.0389 235.8 280.5)" x="0" y="16">A3</text><text transform="matrix(0.0824 0.0256 -0.1518 0.0383 259.4 279.2)" x="0" y="16">H4</text><text transform="matrix(0.0855 0.0252 -0.1449 0.0376 282.6 278.0)" x="0" y="16">G5</text><text transform="matrix(0.0847 0.0278 -0.1602 0.0416 252.2 285.9)" x="0" y="16">A5</text><text transform="matrix(0.0885 0.0248 -0.1382 0.0370 305.5 276.7)" x="0" y="16">F6</text><text transform="matrix(0.0881 0.0273 -0.1526 0.0409 276.4 284.5)" x="0" y="16">H6</text><text transform="matrix(0.0871 0.0303 -0.1695 0.0454 244.3 293.1)" x="0" y="16">B6</text><text transform="matrix(0.0913 0.0244 -0.1316 0.0364 328.0 275.5)" x="0" y="16">E7</text><text transform="matrix(0.0913 0.0269 -0.1453 0.0402 300.3 283.2)" x="0" y="16">G7</text><text transform="matrix(0.0908 0.0298 -0.1612 0.0446 269.7 291.6)" x="0" y="16">A7</text><text transform="matrix(0.0896 0.0332 -0.1798 0.0498 235.7 301.1)" x="0" y="16">C7</text><text transform="matrix(0.0944 0.0264 -0.1382 0.0395 323.8 281.8)" x="0" y="16">F8</text><text transform="matrix(0.0943 0.0293 -0.1531 0.0438 294.7 290.2)" x="0" y="16">H8</text><text transform="matrix(0.0936 0.0326 -0.1707 0.0489 262.3 299.4)" x="0" y="16">B8</text><text transform="matrix(0.0974 0.0260 -0.1313 0.0389 346.8 280.5)" x="0" y="16">E1</text><text transform="matrix(0.0977 0.0288 -0.1454 0.0431 319.2 288.7)" x="0" y="16">G1</text><text transform="matrix(0.0975 0.0320 -0.1619 0.0480 288.5 297.8)" x="0" y="16">A1</text><text transform="matrix(0.0966 0.0358 -0.1813 0.0537 254.3 308.0)" x="0" y="16">C1</text><text transform="matrix(0.1003 0.0256 -0.1246 0.0383 369.5 279.3)" x="0" y="16">D2</text><text transform="matrix(0.1010 0.0283 -0.1378 0.0423 343.3 287.3)" x="0" y="16">F2</text><text transform="matrix(0.1013 0.0314 -0.1533 0.0471 314.2 296.2)" x="0" y="16">H2</text><text transform="matrix(0.1009 0.0352 -0.1716 0.0527 281.8 306.2)" x="0" y="16">B2</text><text transform="matrix(0.0997 0.0396 -0.1933 0.0594 245.4 317.4)" x="0" y="16">D2</text><text transform="matrix(0.1031 0.0251 -0.1181 0.0376 391.8 278.0)" x="0" y="16">C3</text><text transform="matrix(0.1042 0.0278 -0.1305 0.0416 367.0 285.9)" x="0" y="16">E3</text><text transform="matrix(0.1049 0.0309 -0.1451 0.0462 339.4 294.7)" x="0" y="16">G3</text><text transform="matrix(0.1051 0.0345 -0.1622 0.0517 308.8 304.5)" x="0" y="16">A3</text><text transform="matrix(0.1045 0.0388 -0.1825 0.0582 274.4 315.4)" x="0" y="16">C3</text><text transform="matrix(0.1030 0.0439 -0.2069 0.0659 235.5 327.8)" x="0" y="16">E3</text><text transform="matrix(0.1057 0.0247 -0.1118 0.0370 413.7 276.8)" x="0" y="16">B4</text><text transform="matrix(0.1072 0.0273 -0.1235 0.0409 390.2 284.5)" x="0" y="16">D4</text><text transform="matrix(0.1083 0.0303 -0.1371 0.0454 364.2 293.2)" x="0" y="16">F4</text><text transform="matrix(0.1090 0.0338 -0.1531 0.0507 335.2 302.7)" x="0" y="16">H4</text><text transform="matrix(0.1091 0.0380 -0.1721 0.0570 302.8 313.5)" x="0" y="16">B4</text><text transform="matrix(0.1084 0.0430 -0.1948 0.0645 266.1 325.6)" x="0" y="16">D4</text><text transform="matrix(0.1083 0.0243 -0.1057 0.0364 435.3 275.5)" x="0" y="16">A5</text><text transform="matrix(0.1101 0.0269 -0.1167 0.0402 413.1 283.2)" x="0" y="16">C5</text><text transform="matrix(0.1116 0.0298 -0.1294 0.0446 388.5 291.7)" x="0" y="16">E5</text><text transform="matrix(0.1128 0.0332 -0.1444 0.0497 361.2 301.1)" x="0" y="16">G5</text><text transform="matrix(0.1135 0.0373 -0.1621 0.0558 330.6 311.6)" x="0" y="16">A5</text><text transform="matrix(0.1135 0.0421 -0.1832 0.0631 296.1 323.5)" x="0" y="16">C5</text><text transform="matrix(0.1124 0.0480 -0.2089 0.0720 257.0 337.0)" x="0" y="16">E5</text><text transform="matrix(0.1129 0.0264 -0.1100 0.0395 435.6 281.9)" x="0" y="16">B6</text><text transform="matrix(0.1148 0.0293 -0.1219 0.0438 412.4 290.2)" x="0" y="16">D6</text><text transform="matrix(0.1164 0.0326 -0.1359 0.0488 386.7 299.4)" x="0" y="16">F6</text><text transform="matrix(0.1177 0.0365 -0.1524 0.0547 357.9 309.8)" x="0" y="16">H6</text><text transform="matrix(0.1184 0.0412 -0.1721 0.0618 325.5 321.4)" x="0" y="16">B6</text><text transform="matrix(0.1182 0.0469 -0.1959 0.0704 288.8 334.6)" x="0" y="16">D6</text><text transform="matrix(0.1167 0.0538 -0.2250 0.0808 246.8 349.7)" x="0" y="16">F6</text><text transform="matrix(0.1155 0.0260 -0.1036 0.0389 457.7 280.6)" x="0" y="16">A7</text><text transform="matrix(0.1178 0.0287 -0.1147 0.0430 435.9 288.7)" x="0" y="16">C7</text><text transform="matrix(0.1199 0.0320 -0.1277 0.0479 411.7 297.8)" x="0" y="16">E7</text><text transform="matrix(0.1217 0.0358 -0.1431 0.0537 384.6 308.0)" x="0" y="16">G7</text><text transform="matrix(0.1230 0.0404 -0.1614 0.0605 354.2 319.4)" x="0" y="16">A7</text><text transform="matrix(0.1236 0.0459 -0.1834 0.0688 319.8 332.3)" x="0" y="16">C7</text><text transform="matrix(0.1232 0.0526 -0.2103 0.0789 280.5 347.0)" x="0" y="16">E7</text><text transform="matrix(0.1212 0.0608 -0.2436 0.0914 235.3 364.0)" x="0" y="16">G7</text><text transform="matrix(0.1181 0.0255 -0.0974 0.0382 479.4 279.3)" x="0" y="16">H8</text><text transform="matrix(0.1207 0.0283 -0.1077 0.0423 458.9 287.3)" x="0" y="16">B8</text><text transform="matrix(0.1232 0.0314 -0.1198 0.0470 436.2 296.3)" x="0" y="16">D8</text><text transform="matrix(0.1255 0.0351 -0.1341 0.0526 410.9 306.2)" x="0" y="16">F8</text><text transform="matrix(0.1274 0.0395 -0.1511 0.0593 382.4 317.4)" x="0" y="16">H8</text><text transform="matrix(0.1288 0.0449 -0.1715 0.0673 350.2 330.0)" x="0" y="16">B8</text><text transform="matrix(0.1293 0.0513 -0.1963 0.0771 313.5 344.4)" x="0" y="16">D8</text><text transform="matrix(0.1286 0.0593 -0.2269 0.0891 271.3 361.0)" x="0" y="16">F8</text><text transform="matrix(0.1206 0.0251 -0.0914 0.0376 500.8 278.0)" x="0" y="16">G1</text><text transform="matrix(0.1235 0.0278 -0.1010 0.0416 481.6 285.9)" x="0" y="16">A1</text><text transform="matrix(0.1264 0.0308 -0.1122 0.0462 460.3 294.7)" x="0" y="16">C1</text><text transform="matrix(0.1291 0.0345 -0.1254 0.0516 436.6 304.5)" x="0" y="16">E1</text><text transform="matrix(0.1316 0.0387 -0.1411 0.0581 409.9 315.4)" x="0" y="16">G1</text><text transform="matrix(0.1337 0.0439 -0.1600 0.0658 379.9 327.8)" x="0" y="16">A1</text><text transform="matrix(0.1352 0.0501 -0.1829 0.0753 345.7 341.9)" x="0" y="16">C1</text><text transform="matrix(0.1356 0.0578 -0.2110 0.0869 306.4 358.0)" x="0" y="16">E1</text><text transform="matrix(0.1344 0.0675 -0.2463 0.1014 260.8 376.8)" x="0" y="16">G1</text><text transform="matrix(0.1230 0.0247 -0.0855 0.0370 521.8 276.8)" x="0" y="16">F2</text><text transform="matrix(0.1262 0.0273 -0.0945 0.0409 503.8 284.6)" x="0" y="16">H2</text><text transform="matrix(0.1294 0.0303 -0.1049 0.0454 483.9 293.2)" x="0" y="16">B2</text><text transform="matrix(0.1326 0.0338 -0.1171 0.0507 461.8 302.8)" x="0" y="16">D2</text><text transform="matrix(0.1357 0.0380 -0.1316 0.0569 436.9 313.5)" x="0" y="16">F2</text><text transform="matrix(0.1384 0.0430 -0.1490 0.0644 408.9 325.6)" x="0" y="16">H2</text><text transform="matrix(0.1407 0.0490 -0.1700 0.0735 377.1 339.4)" x="0" y="16">B2</text><text transform="matrix(0.1422 0.0564 -0.1959 0.0847 340.6 355.2)" x="0" y="16">D2</text><text transform="matrix(0.1424 0.0657 -0.2281 0.0987 298.4 373.5)" x="0" y="16">F2</text><text transform="matrix(0.1405 0.0774 -0.2690 0.1164 248.8 394.9)" x="0" y="16">H2</text><text transform="matrix(0.1252 0.0243 -0.0799 0.0364 542.5 275.6)" x="0" y="16">E3</text><text transform="matrix(0.1288 0.0268 -0.0881 0.0402 525.7 283.2)" x="0" y="16">G3</text><text transform="matrix(0.1324 0.0298 -0.0977 0.0446 507.2 291.7)" x="0" y="16">A3</text><text transform="matrix(0.1360 0.0332 -0.1090 0.0497 486.5 301.1)" x="0" y="16">C3</text><text transform="matrix(0.1395 0.0372 -0.1224 0.0558 463.4 311.6)" x="0" y="16">E3</text><text transform="matrix(0.1429 0.0421 -0.1384 0.0631 437.4 323.5)" x="0" y="16">G3</text><text transform="matrix(0.1459 0.0479 -0.1577 0.0719 407.8 337.0)" x="0" y="16">A3</text><text transform="matrix(0.1484 0.0551 -0.1814 0.0827 374.0 352.4)" x="0" y="16">C3</text><text transform="matrix(0.1499 0.0640 -0.2108 0.0961 334.9 370.2)" x="0" y="16">E3</text><text transform="matrix(0.1498 0.0752 -0.2480 0.1131 289.2 391.1)" x="0" y="16">G3</text><text transform="matrix(0.1471 0.0897 -0.2961 0.1350 235.0 415.8)" x="0" y="16">A3</text><text transform="matrix(0.1312 0.0264 -0.0820 0.0395 547.2 281.9)" x="0" y="16">F4</text><text transform="matrix(0.1351 0.0292 -0.0909 0.0438 530.0 290.2)" x="0" y="16">H4</text><text transform="matrix(0.1391 0.0326 -0.1012 0.0488 510.8 299.5)" x="0" y="16">B4</text><text transform="matrix(0.1432 0.0365 -0.1135 0.0547 489.3 309.8)" x="0" y="16">D4</text><text transform="matrix(0.1471 0.0412 -0.1282 0.0618 465.2 321.4)" x="0" y="16">F4</text><text transform="matrix(0.1509 0.0468 -0.1459 0.0703 437.9 334.6)" x="0" y="16">H4</text><text transform="matrix(0.1543 0.0537 -0.1675 0.0807 406.6 349.7)" x="0" y="16">B4</text><text transform="matrix(0.1570 0.0623 -0.1943 0.0936 370.5 367.0)" x="0" y="16">D4</text><text transform="matrix(0.1585 0.0731 -0.2281 0.1099 328.4 387.3)" x="0" y="16">F4</text><text transform="matrix(0.1580 0.0870 -0.2716 0.1309 278.6 411.3)" x="0" y="16">H4</text><text transform="matrix(0.1336 0.0260 -0.0761 0.0388 568.4 280.6)" x="0" y="16">E5</text><text transform="matrix(0.1378 0.0287 -0.0842 0.0430 552.4 288.8)" x="0" y="16">G5</text><text transform="matrix(0.1422 0.0320 -0.0937 0.0479 534.6 297.9)" x="0" y="16">A5</text><text transform="matrix(0.1466 0.0358 -0.1050 0.0536 514.7 308.0)" x="0" y="16">C5</text><text transform="matrix(0.1512 0.0403 -0.1184 0.0605 492.4 319.4)" x="0" y="16">E5</text><text transform="matrix(0.1556 0.0458 -0.1346 0.0687 467.2 332.3)" x="0" y="16">G5</text><text transform="matrix(0.1599 0.0525 -0.1543 0.0788 438.4 347.0)" x="0" y="16">A5</text><text transform="matrix(0.1637 0.0607 -0.1786 0.0912 405.2 364.0)" x="0" y="16">C5</text><text transform="matrix(0.1667 0.0711 -0.2093 0.1069 366.5 383.7)" x="0" y="16">E5</text><text transform="matrix(0.1681 0.0844 -0.2485 0.1269 320.9 407.0)" x="0" y="16">G5</text><text transform="matrix(0.1669 0.1018 -0.2999 0.1532 266.3 434.9)" x="0" y="16">A5</text><text transform="matrix(0.1359 0.0255 -0.0703 0.0382 589.2 279.3)" x="0" y="16">D6</text><text transform="matrix(0.1404 0.0282 -0.0778 0.0423 574.4 287.4)" x="0" y="16">F6</text><text transform="matrix(0.1451 0.0314 -0.0865 0.0470 558.0 296.3)" x="0" y="16">H6</text><text transform="matrix(0.1500 0.0351 -0.0968 0.0526 539.7 306.2)" x="0" y="16">B6</text><text transform="matrix(0.1550 0.0395 -0.1090 0.0592 519.1 317.4)" x="0" y="16">D6</text><text transform="matrix(0.1601 0.0448 -0.1237 0.0672 495.9 330.0)" x="0" y="16">F6</text><text transform="matrix(0.1652 0.0513 -0.1416 0.0769 469.4 344.4)" x="0" y="16">H6</text><text transform="matrix(0.1700 0.0592 -0.1637 0.0889 439.0 360.9)" x="0" y="16">B6</text><text transform="matrix(0.1743 0.0692 -0.1913 0.1040 403.6 380.2)" x="0" y="16">D6</text><text transform="matrix(0.1776 0.0819 -0.2266 0.1232 362.0 402.8)" x="0" y="16">F6</text><text transform="matrix(0.1789 0.0985 -0.2727 0.1482 312.2 429.8)" x="0" y="16">H6</text><text transform="matrix(0.1766 0.1207 -0.3344 0.1817 251.8 462.7)" x="0" y="16">B6</text><text transform="matrix(0.1380 0.0251 -0.0647 0.0376 609.6 278.1)" x="0" y="16">C7</text><text transform="matrix(0.1428 0.0277 -0.0715 0.0415 596.0 286.0)" x="0" y="16">E7</text><text transform="matrix(0.1478 0.0308 -0.0795 0.0462 580.9 294.7)" x="0" y="16">G7</text><text transform="matrix(0.1531 0.0344 -0.0888 0.0516 564.1 304.5)" x="0" y="16">A7</text><text transform="matrix(0.1586 0.0387 -0.1000 0.0580 545.3 315.4)" x="0" y="16">C7</text><text transform="matrix(0.1643 0.0438 -0.1133 0.0658 524.0 327.8)" x="0" y="16">E7</text><text transform="matrix(0.1702 0.0501 -0.1295 0.0752 499.7 341.9)" x="0" y="16">G7</text><text transform="matrix(0.1760 0.0578 -0.1494 0.0867 471.9 358.0)" x="0" y="16">A7</text><text transform="matrix(0.1815 0.0673 -0.1743 0.1012 439.7 376.7)" x="0" y="16">C7</text><text transform="matrix(0.1864 0.0795 -0.2059 0.1196 401.8 398.7)" x="0" y="16">E7</text><text transform="matrix(0.1900 0.0954 -0.2471 0.1435 356.7 424.9)" x="0" y="16">G7</text><text transform="matrix(0.1910 0.1165 -0.3020 0.1753 302.0 456.7)" x="0" y="16">A7</text><text transform="matrix(0.1872 0.1455 -0.3774 0.2191 234.5 495.9)" x="0" y="16">C7</text><text transform="matrix(0.1401 0.0247 -0.0593 0.0370 629.7 276.8)" x="0" y="16">B8</text><text transform="matrix(0.1452 0.0273 -0.0655 0.0408 617.2 284.6)" x="0" y="16">D8</text><text transform="matrix(0.1505 0.0303 -0.0727 0.0453 603.4 293.2)" x="0" y="16">F8</text><text transform="matrix(0.1561 0.0338 -0.0812 0.0506 588.1 302.8)" x="0" y="16">H8</text><text transform="matrix(0.1621 0.0379 -0.0912 0.0569 570.8 313.5)" x="0" y="16">B8</text><text transform="matrix(0.1684 0.0429 -0.1033 0.0644 551.4 325.6)" x="0" y="16">D8</text><text transform="matrix(0.1749 0.0489 -0.1179 0.0735 529.4 339.4)" x="0" y="16">F8</text><text transform="matrix(0.1816 0.0563 -0.1358 0.0846 504.1 355.1)" x="0" y="16">H8</text><text transform="matrix(0.1883 0.0656 -0.1581 0.0985 474.8 373.4)" x="0" y="16">B8</text><text transform="matrix(0.1947 0.0773 -0.1864 0.1161 440.4 394.8)" x="0" y="16">D8</text><text transform="matrix(0.2003 0.0924 -0.2230 0.1390 399.7 420.2)" x="0" y="16">F8</text><text transform="matrix(0.2042 0.1125 -0.2716 0.1693 350.5 450.9)" x="0" y="16">H8</text><text transform="matrix(0.2047 0.1399 -0.3380 0.2107 289.9 488.6)" x="0" y="16">B8</text><text transform="matrix(0.1421 0.0243 -0.0541 0.0364 649.5 275.6)" x="0" y="16">A1</text><text transform="matrix(0.1474 0.0268 -0.0597 0.0401 638.1 283.3)" x="0" y="16">C1</text><text transform="matrix(0.1530 0.0297 -0.0662 0.0445 625.6 291.7)" x="0" y="16">E1</text><text transform="matrix(0.1590 0.0331 -0.0738 0.0497 611.6 301.1)" x="0" y="16">G1</text><text transform="matrix(0.1654 0.0372 -0.0829 0.0557 595.9 311.6)" x="0" y="16">A1</text><text transform="matrix(0.1722 0.0420 -0.0937 0.0630 578.3 323.5)" x="0" y="16">C1</text><text transform="matrix(0.1793 0.0478 -0.1068 0.0718 558.3 337.0)" x="0" y="16">E1</text><text transform="matrix(0.1868 0.0550 -0.1228 0.0826 535.4 352.4)" x="0" y="16">G1</text><text transform="matrix(0.1946 0.0639 -0.1426 0.0959 508.9 370.2)" x="0" y="16">A1</text><text transform="matrix(0.2024 0.0751 -0.1678 0.1129 478.0 391.0)" x="0" y="16">C1</text><text transform="matrix(0.2099 0.0895 -0.2002 0.1347 441.3 415.6)" x="0" y="16">E1</text><text transform="matrix(0.2164 0.1087 -0.2431 0.1635 397.2 445.3)" x="0" y="16">G1</text><text transform="matrix(0.2207 0.1346 -0.3013 0.2027 343.1 481.7)" x="0" y="16">A1</text><text transform="matrix(0.2202 0.1711 -0.3833 0.2578 275.1 527.4)" x="0" y="16">C1</text><text transform="matrix(0.1495 0.0264 -0.0540 0.0395 658.7 281.9)" x="0" y="16">B2</text><text transform="matrix(0.1554 0.0292 -0.0599 0.0437 647.3 290.3)" x="0" y="16">D2</text><text transform="matrix(0.1618 0.0325 -0.0667 0.0487 634.6 299.5)" x="0" y="16">F2</text><text transform="matrix(0.1685 0.0365 -0.0748 0.0546 620.5 309.8)" x="0" y="16">H2</text><text transform="matrix(0.1758 0.0411 -0.0845 0.0617 604.6 321.4)" x="0" y="16">B2</text><text transform="matrix(0.1835 0.0468 -0.0961 0.0702 586.6 334.6)" x="0" y="16">D2</text><text transform="matrix(0.1918 0.0537 -0.1103 0.0806 566.0 349.6)" x="0" y="16">F2</text><text transform="matrix(0.2005 0.0622 -0.1280 0.0935 542.2 367.0)" x="0" y="16">H2</text><text transform="matrix(0.2096 0.0730 -0.1502 0.1097 514.5 387.2)" x="0" y="16">B2</text><text transform="matrix(0.2188 0.0868 -0.1788 0.1306 481.7 411.2)" x="0" y="16">D2</text><text transform="matrix(0.2277 0.1050 -0.2164 0.1580 442.4 439.9)" x="0" y="16">F2</text><text transform="matrix(0.2353 0.1296 -0.2672 0.1951 394.3 475.0)" x="0" y="16">H2</text><text transform="matrix(0.2399 0.1640 -0.3382 0.2470 334.2 518.9)" x="0" y="16">B2</text><text transform="matrix(0.2377 0.2141 -0.4419 0.3227 256.9 575.4)" x="0" y="16">D2</text><text transform="matrix(0.1516 0.0259 -0.0486 0.0388 678.8 280.6)" x="0" y="16">A3</text><text transform="matrix(0.1577 0.0287 -0.0538 0.0430 668.6 288.8)" x="0" y="16">C3</text><text transform="matrix(0.1644 0.0319 -0.0599 0.0478 657.3 297.9)" x="0" y="16">E3</text><text transform="matrix(0.1715 0.0357 -0.0671 0.0536 644.6 308.0)" x="0" y="16">G3</text><text transform="matrix(0.1792 0.0403 -0.0756 0.0604 630.4 319.4)" x="0" y="16">A3</text><text transform="matrix(0.1875 0.0458 -0.0859 0.0686 614.2 332.3)" x="0" y="16">C3</text><text transform="matrix(0.1965 0.0524 -0.0985 0.0787 595.8 347.0)" x="0" y="16">E3</text><text transform="matrix(0.2061 0.0606 -0.1140 0.0911 574.7 363.9)" x="0" y="16">G3</text><text transform="matrix(0.2163 0.0710 -0.1335 0.1067 550.0 383.6)" x="0" y="16">A3</text><text transform="matrix(0.2271 0.0842 -0.1585 0.1267 520.9 406.9)" x="0" y="16">C3</text><text transform="matrix(0.2381 0.1016 -0.1913 0.1528 486.0 434.7)" x="0" y="16">E3</text><text transform="matrix(0.2488 0.1249 -0.2353 0.1880 443.6 468.6)" x="0" y="16">G3</text><text transform="matrix(0.2579 0.1573 -0.2965 0.2369 390.8 510.8)" x="0" y="16">A3</text><text transform="matrix(0.2627 0.2042 -0.3851 0.3077 323.2 564.8)" x="0" y="16">C3</text><text transform="matrix(0.2573 0.2757 -0.5203 0.4157 233.7 636.3)" x="0" y="16">E3</text><text transform="matrix(0.1536 0.0255 -0.0433 0.0382 698.7 279.4)" x="0" y="16">H4</text><text transform="matrix(0.1599 0.0282 -0.0479 0.0422 689.6 287.4)" x="0" y="16">B4</text><text transform="matrix(0.1669 0.0314 -0.0533 0.0470 679.5 296.3)" x="0" y="16">D4</text><text transform="matrix(0.1743 0.0351 -0.0596 0.0525 668.2 306.2)" x="0" y="16">F4</text><text transform="matrix(0.1824 0.0395 -0.0671 0.0592 655.6 317.4)" x="0" y="16">H4</text><text transform="matrix(0.1913 0.0448 -0.0761 0.0672 641.3 330.0)" x="0" y="16">B4</text><text transform="matrix(0.2009 0.0512 -0.0871 0.0768 625.0 344.4)" x="0" y="16">D4</text><text transform="matrix(0.2113 0.0591 -0.1007 0.0888 606.3 360.9)" x="0" y="16">F4</text><text transform="matrix(0.2226 0.0691 -0.1177 0.1038 584.5 380.1)" x="0" y="16">H4</text><text transform="matrix(0.2347 0.0818 -0.1394 0.1229 558.9 402.7)" x="0" y="16">B4</text><text transform="matrix(0.2477 0.0983 -0.1677 0.1479 528.3 429.7)" x="0" y="16">D4</text><text transform="matrix(0.2611 0.1204 -0.2056 0.1813 491.1 462.4)" x="0" y="16">F4</text><text transform="matrix(0.2742 0.1510 -0.2579 0.2274 445.1 503.0)" x="0" y="16">H4</text><text transform="matrix(0.2851 0.1949 -0.3330 0.2937 386.5 554.7)" x="0" y="16">B4</text><text transform="matrix(0.2899 0.2612 -0.4466 0.3938 309.4 622.7)" x="0" y="16">D4</text><text transform="matrix(0.2785 0.3682 -0.6298 0.5554 203.3 716.2)" x="0" y="16">F4</text><text transform="matrix(0.1554 0.0251 -0.0382 0.0376 718.2 278.1)" x="0" y="16">G5</text><text transform="matrix(0.1620 0.0277 -0.0422 0.0415 710.2 286.0)" x="0" y="16">A5</text><text transform="matrix(0.1692 0.0308 -0.0469 0.0461 701.3 294.8)" x="0" y="16">C5</text><text transform="matrix(0.1770 0.0344 -0.0524 0.0515 691.4 304.5)" x="0" y="16">E5</text><text transform="matrix(0.1855 0.0387 -0.0589 0.0580 680.3 315.4)" x="0" y="16">G5</text><text transform="matrix(0.1948 0.0438 -0.0668 0.0657 667.7 327.8)" x="0" y="16">A5</text><text transform="matrix(0.2050 0.0500 -0.0763 0.0751 653.5 341.8)" x="0" y="16">C5</text><text transform="matrix(0.2162 0.0577 -0.0880 0.0866 637.1 358.0)" x="0" y="16">E5</text><text transform="matrix(0.2284 0.0672 -0.1027 0.1010 618.0 376.7)" x="0" y="16">G5</text><text transform="matrix(0.2419 0.0794 -0.1213 0.1194 595.7 398.6)" x="0" y="16">A5</text><text transform="matrix(0.2566 0.0952 -0.1455 0.1432 569.1 424.8)" x="0" y="16">C5</text><text transform="matrix(0.2724 0.1162 -0.1778 0.1749 537.0 456.4)" x="0" y="16">E5</text><text transform="matrix(0.2890 0.1451 -0.2221 0.2185 497.2 495.5)" x="0" y="16">G5</text><text transform="matrix(0.3053 0.1862 -0.2852 0.2806 446.9 545.0)" x="0" y="16">A5</text><text transform="matrix(0.3188 0.2478 -0.3797 0.3736 381.1 609.8)" x="0" y="16">C5</text><text transform="matrix(0.3228 0.3459 -0.5304 0.5218 291.3 698.1)" x="0" y="16">E5</text><text transform="matrix(0.1572 0.0247 -0.0332 0.0370 737.4 276.9)" x="0" y="16">F6</text><text transform="matrix(0.1641 0.0273 -0.0367 0.0408 730.4 284.6)" x="0" y="16">H6</text><text transform="matrix(0.1715 0.0302 -0.0407 0.0453 722.7 293.2)" x="0" y="16">B6</text><text transform="matrix(0.1796 0.0337 -0.0455 0.0506 714.1 302.8)" x="0" y="16">D6</text><text transform="matrix(0.1884 0.0379 -0.0511 0.0568 704.5 313.5)" x="0" y="16">F6</text><text transform="matrix(0.1982 0.0429 -0.0578 0.0643 693.6 325.6)" x="0" y="16">H6</text><text transform="matrix(0.2089 0.0489 -0.0660 0.0734 681.3 339.4)" x="0" y="16">B6</text><text transform="matrix(0.2207 0.0563 -0.0760 0.0845 667.1 355.1)" x="0" y="16">D6</text><text transform="matrix(0.2339 0.0655 -0.0884 0.0984 650.7 373.3)" x="0" y="16">F6</text><text transform="matrix(0.2485 0.0771 -0.1042 0.1159 631.5 394.7)" x="0" y="16">H6</text><text transform="matrix(0.2647 0.0922 -0.1247 0.1387 608.7 420.1)" x="0" y="16">B6</text><text transform="matrix(0.2827 0.1122 -0.1518 0.1689 581.2 450.7)" x="0" y="16">D6</text><text transform="matrix(0.3024 0.1395 -0.1888 0.2100 547.3 488.3)" x="0" y="16">F6</text><text transform="matrix(0.3234 0.1781 -0.2413 0.2684 504.7 535.8)" x="0" y="16">H6</text><text transform="matrix(0.3444 0.2354 -0.3190 0.3549 449.2 597.5)" x="0" y="16">B6</text><text transform="matrix(0.3614 0.3256 -0.4415 0.4911 374.1 681.0)" x="0" y="16">D6</text><text transform="matrix(0.1589 0.0243 -0.0284 0.0364 756.3 275.7)" x="0" y="16">E7</text><text transform="matrix(0.1660 0.0268 -0.0314 0.0401 750.3 283.3)" x="0" y="16">G7</text><text transform="matrix(0.1736 0.0297 -0.0348 0.0445 743.7 291.7)" x="0" y="16">A7</text><text transform="matrix(0.1820 0.0331 -0.0388 0.0496 736.4 301.1)" x="0" y="16">C7</text><text transform="matrix(0.1912 0.0371 -0.0435 0.0557 728.2 311.7)" x="0" y="16">E7</text><text transform="matrix(0.2013 0.0420 -0.0492 0.0629 718.9 323.5)" x="0" y="16">G7</text><text transform="matrix(0.2126 0.0478 -0.0560 0.0717 708.4 336.9)" x="0" y="16">A7</text><text transform="matrix(0.2250 0.0549 -0.0644 0.0824 696.4 352.3)" x="0" y="16">C7</text><text transform="matrix(0.2390 0.0638 -0.0749 0.0958 682.5 370.1)" x="0" y="16">E7</text><text transform="matrix(0.2546 0.0749 -0.0880 0.1127 666.3 390.9)" x="0" y="16">G7</text><text transform="matrix(0.2723 0.0894 -0.1050 0.1344 647.0 415.5)" x="0" y="16">A7</text><text transform="matrix(0.2922 0.1084 -0.1275 0.1631 623.9 445.1)" x="0" y="16">C7</text><text transform="matrix(0.3146 0.1342 -0.1580 0.2021 595.5 481.4)" x="0" y="16">E7</text><text transform="matrix(0.3397 0.1706 -0.2008 0.2570 559.9 527.0)" x="0" y="16">G7</text><text transform="matrix(0.3672 0.2240 -0.2638 0.3376 513.9 585.9)" x="0" y="16">A7</text><text transform="matrix(0.3951 0.3071 -0.3619 0.4631 452.1 665.0)" x="0" y="16">C7</text><text transform="matrix(0.1678 0.0264 -0.0262 0.0395 769.9 282.0)" x="0" y="16">F8</text><text transform="matrix(0.1757 0.0292 -0.0290 0.0437 764.4 290.3)" x="0" y="16">H8</text><text transform="matrix(0.1843 0.0325 -0.0323 0.0487 758.3 299.5)" x="0" y="16">B8</text><text transform="matrix(0.1938 0.0364 -0.0363 0.0546 751.4 309.8)" x="0" y="16">D8</text><text transform="matrix(0.2043 0.0411 -0.0409 0.0616 743.7 321.4)" x="0" y="16">F8</text><text transform="matrix(0.2160 0.0467 -0.0466 0.0701 735.0 334.6)" x="0" y="16">H8</text><text transform="matrix(0.2291 0.0536 -0.0534 0.0805 725.0 349.6)" x="0" y="16">B8</text><text transform="matrix(0.2437 0.0621 -0.0620 0.0933 713.5 366.9)" x="0" y="16">D8</text><text transform="matrix(0.2604 0.0729 -0.0727 0.1095 700.1 387.1)" x="0" y="16">F8</text><text transform="matrix(0.2792 0.0867 -0.0865 0.1303 684.2 411.0)" x="0" y="16">H8</text><text transform="matrix(0.3008 0.1048 -0.1047 0.1577 665.2 439.7)" x="0" y="16">B8</text><text transform="matrix(0.3257 0.1293 -0.1292 0.1946 641.9 474.7)" x="0" y="16">D8</text><text transform="matrix(0.3544 0.1635 -0.1635 0.2462 612.8 518.5)" x="0" y="16">F8</text><text transform="matrix(0.3873 0.2133 -0.2135 0.3215 575.4 574.8)" x="0" y="16">H8</text><text transform="matrix(0.4244 0.2901 -0.2905 0.4374 525.6 649.8)" x="0" y="16">B8</text><text transform="matrix(0.1695 0.0259 -0.0212 0.0388 789.1 280.7)" x="0" y="16">E1</text><text transform="matrix(0.1776 0.0287 -0.0235 0.0429 784.7 288.8)" x="0" y="16">G1</text><text transform="matrix(0.1865 0.0319 -0.0261 0.0478 779.7 297.9)" x="0" y="16">A1</text><text transform="matrix(0.1963 0.0357 -0.0293 0.0535 774.2 308.0)" x="0" y="16">C1</text><text transform="matrix(0.2071 0.0402 -0.0330 0.0604 768.0 319.4)" x="0" y="16">E1</text><text transform="matrix(0.2192 0.0457 -0.0375 0.0686 760.9 332.3)" x="0" y="16">G1</text><text transform="matrix(0.2328 0.0523 -0.0430 0.0786 752.9 346.9)" x="0" y="16">A1</text><text transform="matrix(0.2482 0.0606 -0.0497 0.0910 743.7 363.8)" x="0" y="16">C1</text><text transform="matrix(0.2656 0.0709 -0.0582 0.1065 732.9 383.5)" x="0" y="16">E1</text><text transform="matrix(0.2857 0.0841 -0.0691 0.1264 720.2 406.7)" x="0" y="16">G1</text><text transform="matrix(0.3088 0.1013 -0.0834 0.1525 705.0 434.5)" x="0" y="16">A1</text><text transform="matrix(0.3358 0.1246 -0.1025 0.1875 686.5 468.3)" x="0" y="16">C1</text><text transform="matrix(0.3675 0.1568 -0.1291 0.2362 663.5 510.4)" x="0" y="16">E1</text><text transform="matrix(0.4052 0.2034 -0.1676 0.3066 634.1 564.2)" x="0" y="16">G1</text><text transform="matrix(0.4499 0.2745 -0.2263 0.4138 595.2 635.5)" x="0" y="16">A1</text><text transform="matrix(0.5024 0.3905 -0.3221 0.5891 541.2 734.2)" x="0" y="16">C1</text><text transform="matrix(0.1712 0.0255 -0.0164 0.0382 808.1 279.4)" x="0" y="16">D2</text><text transform="matrix(0.1795 0.0282 -0.0181 0.0422 804.6 287.4)" x="0" y="16">F2</text><text transform="matrix(0.1885 0.0313 -0.0202 0.0469 800.8 296.3)" x="0" y="16">H2</text><text transform="matrix(0.1986 0.0350 -0.0225 0.0525 796.5 306.3)" x="0" y="16">B2</text><text transform="matrix(0.2098 0.0394 -0.0254 0.0591 791.7 317.4)" x="0" y="16">D2</text><text transform="matrix(0.2223 0.0447 -0.0288 0.0671 786.3 330.0)" x="0" y="16">F2</text><text transform="matrix(0.2364 0.0511 -0.0330 0.0767 780.2 344.3)" x="0" y="16">H2</text><text transform="matrix(0.2523 0.0590 -0.0381 0.0887 773.1 360.8)" x="0" y="16">B2</text><text transform="matrix(0.2705 0.0690 -0.0445 0.1036 764.9 380.0)" x="0" y="16">D2</text><text transform="matrix(0.2916 0.0816 -0.0527 0.1227 755.2 402.6)" x="0" y="16">F2</text><text transform="matrix(0.3160 0.0981 -0.0634 0.1476 743.6 429.5)" x="0" y="16">H2</text><text transform="matrix(0.3449 0.1201 -0.0777 0.1808 729.6 462.1)" x="0" y="16">B2</text><text transform="matrix(0.3793 0.1505 -0.0974 0.2267 712.2 502.6)" x="0" y="16">D2</text><text transform="matrix(0.4210 0.1942 -0.1257 0.2926 690.1 554.2)" x="0" y="16">F2</text><text transform="matrix(0.4722 0.2601 -0.1684 0.3921 661.0 621.9)" x="0" y="16">H2</text><text transform="matrix(0.5358 0.3662 -0.2373 0.5524 621.0 715.0)" x="0" y="16">B2</text><text transform="matrix(0.1728 0.0251 -0.0117 0.0375 826.7 278.1)" x="0" y="16">C3</text><text transform="matrix(0.1812 0.0277 -0.0130 0.0415 824.2 286.0)" x="0" y="16">E3</text><text transform="matrix(0.1905 0.0308 -0.0144 0.0461 821.5 294.8)" x="0" y="16">G3</text><text transform="matrix(0.2008 0.0344 -0.0161 0.0515 818.4 304.5)" x="0" y="16">A3</text><text transform="matrix(0.2123 0.0386 -0.0181 0.0579 815.0 315.5)" x="0" y="16">C3</text><text transform="matrix(0.2251 0.0437 -0.0205 0.0656 811.2 327.8)" x="0" y="16">E3</text><text transform="matrix(0.2397 0.0500 -0.0234 0.0750 806.8 341.8)" x="0" y="16">G3</text><text transform="matrix(0.2562 0.0576 -0.0270 0.0865 801.8 357.9)" x="0" y="16">A3</text><text transform="matrix(0.2751 0.0671 -0.0315 0.1009 795.9 376.6)" x="0" y="16">C3</text><text transform="matrix(0.2970 0.0792 -0.0372 0.1191 789.1 398.5)" x="0" y="16">E3</text><text transform="matrix(0.3227 0.0950 -0.0446 0.1429 780.9 424.6)" x="0" y="16">G3</text><text transform="matrix(0.3532 0.1159 -0.0545 0.1745 771.1 456.2)" x="0" y="16">A3</text><text transform="matrix(0.3899 0.1446 -0.0680 0.2178 758.9 495.2)" x="0" y="16">C3</text><text transform="matrix(0.4350 0.1856 -0.0873 0.2796 743.5 544.5)" x="0" y="16">E3</text><text transform="matrix(0.4915 0.2468 -0.1161 0.3720 723.4 609.0)" x="0" y="16">G3</text><text transform="matrix(0.5642 0.3441 -0.1621 0.5191 695.9 696.9)" x="0" y="16">A3</text><text transform="matrix(0.2597 0.0562 -0.0164 0.0844 829.7 355.1)" x="0" y="16">H4</text><text transform="matrix(0.2793 0.0654 -0.0191 0.0982 826.2 373.3)" x="0" y="16">B4</text><text transform="matrix(0.3020 0.0770 -0.0226 0.1157 822.0 394.6)" x="0" y="16">D4</text><text transform="matrix(0.3287 0.0920 -0.0270 0.1384 817.1 419.9)" x="0" y="16">F4</text><text transform="matrix(0.3606 0.1119 -0.0328 0.1684 811.1 450.4)" x="0" y="16">H4</text><text transform="matrix(0.3994 0.1391 -0.0408 0.2094 803.8 488.0)" x="0" y="16">B4</text><text transform="matrix(0.4474 0.1775 -0.0522 0.2675 794.6 535.3)" x="0" y="16">D4</text><text transform="matrix(0.5083 0.2345 -0.0689 0.3535 782.6 596.8)" x="0" y="16">F4</text><text transform="matrix(0.5883 0.3240 -0.0953 0.4887 766.4 680.0)" x="0" y="16">H4</text><text transform="matrix(0.5229 0.2231 -0.0262 0.3363 838.9 585.2)" x="0" y="16">E5</text><text transform="matrix(0.6087 0.3056 -0.0359 0.4609 832.8 664.0)" x="0" y="16">G5</text></g><g fill="#d0d0d0" stroke="#d0d0d0" stroke-width="0.8" font-family="Liberation Sans" font-weight="bold" font-size="47" text-anchor="middle"><text transform="matrix(0.0798 0.0248 -0.1514 0.0370 251.3 276.7)" x="0" y="16">H3</text><text transform="matrix(0.0828 0.0244 -0.1446 0.0365 274.2 275.5)" x="0" y="16">G4</text><text transform="matrix(0.0819 0.0269 -0.1596 0.0402 243.8 283.1)" x="0" y="16">A4</text><text transform="matrix(0.0852 0.0264 -0.1523 0.0396 267.8 281.8)" x="0" y="16">H5</text><text transform="matrix(0.0841 0.0293 -0.1688 0.0439 235.7 290.1)" x="0" y="16">B5</text><text transform="matrix(0.0883 0.0260 -0.1451 0.0389 291.3 280.5)" x="0" y="16">G6</text><text transform="matrix(0.0877 0.0288 -0.1607 0.0431 260.8 288.7)" x="0" y="16">A6</text><text transform="matrix(0.0914 0.0256 -0.1382 0.0383 314.5 279.2)" x="0" y="16">F7</text><text transform="matrix(0.0911 0.0283 -0.1529 0.0423 285.4 287.3)" x="0" y="16">H7</text><text transform="matrix(0.0903 0.0314 -0.1701 0.0471 253.1 296.2)" x="0" y="16">B7</text><text transform="matrix(0.0943 0.0252 -0.1315 0.0376 337.2 278.0)" x="0" y="16">E8</text><text transform="matrix(0.0944 0.0278 -0.1454 0.0416 309.6 285.9)" x="0" y="16">G8</text><text transform="matrix(0.0941 0.0309 -0.1616 0.0462 278.9 294.7)" x="0" y="16">A8</text><text transform="matrix(0.0930 0.0345 -0.1806 0.0517 244.8 304.4)" x="0" y="16">C8</text><text transform="matrix(0.0971 0.0248 -0.1250 0.0370 359.6 276.7)" x="0" y="16">D1</text><text transform="matrix(0.0976 0.0273 -0.1380 0.0409 333.4 284.5)" x="0" y="16">F1</text><text transform="matrix(0.0977 0.0303 -0.1533 0.0454 304.3 293.1)" x="0" y="16">H1</text><text transform="matrix(0.0972 0.0338 -0.1712 0.0507 271.9 302.7)" x="0" y="16">B1</text><text transform="matrix(0.0958 0.0380 -0.1924 0.0570 235.6 313.5)" x="0" y="16">D1</text><text transform="matrix(0.0998 0.0244 -0.1187 0.0364 381.7 275.5)" x="0" y="16">C2</text><text transform="matrix(0.1007 0.0269 -0.1310 0.0402 356.7 283.2)" x="0" y="16">E2</text><text transform="matrix(0.1012 0.0298 -0.1453 0.0446 329.1 291.6)" x="0" y="16">G2</text><text transform="matrix(0.1012 0.0332 -0.1621 0.0498 298.5 301.1)" x="0" y="16">A2</text><text transform="matrix(0.1005 0.0373 -0.1820 0.0559 264.1 311.6)" x="0" y="16">C2</text><text transform="matrix(0.1037 0.0264 -0.1241 0.0395 379.7 281.9)" x="0" y="16">D3</text><text transform="matrix(0.1046 0.0293 -0.1375 0.0438 353.6 290.2)" x="0" y="16">F3</text><text transform="matrix(0.1050 0.0326 -0.1533 0.0488 324.5 299.4)" x="0" y="16">H3</text><text transform="matrix(0.1049 0.0365 -0.1719 0.0548 292.1 309.8)" x="0" y="16">B3</text><text transform="matrix(0.1039 0.0412 -0.1941 0.0619 255.5 321.4)" x="0" y="16">D3</text><text transform="matrix(0.1065 0.0260 -0.1174 0.0389 402.3 280.6)" x="0" y="16">C4</text><text transform="matrix(0.1078 0.0288 -0.1300 0.0431 377.6 288.7)" x="0" y="16">E4</text><text transform="matrix(0.1087 0.0320 -0.1448 0.0479 350.1 297.8)" x="0" y="16">G4</text><text transform="matrix(0.1092 0.0358 -0.1622 0.0537 319.5 308.0)" x="0" y="16">A4</text><text transform="matrix(0.1089 0.0404 -0.1829 0.0606 285.0 319.4)" x="0" y="16">C4</text><text transform="matrix(0.1076 0.0459 -0.2079 0.0689 246.0 332.3)" x="0" y="16">E4</text><text transform="matrix(0.1092 0.0256 -0.1110 0.0382 424.5 279.3)" x="0" y="16">B5</text><text transform="matrix(0.1109 0.0283 -0.1228 0.0423 401.1 287.3)" x="0" y="16">D5</text><text transform="matrix(0.1123 0.0314 -0.1366 0.0471 375.2 296.2)" x="0" y="16">F5</text><text transform="matrix(0.1132 0.0351 -0.1528 0.0527 346.3 306.2)" x="0" y="16">H5</text><text transform="matrix(0.1136 0.0396 -0.1722 0.0593 313.9 317.4)" x="0" y="16">B5</text><text transform="matrix(0.1131 0.0449 -0.1954 0.0673 277.2 330.0)" x="0" y="16">D5</text><text transform="matrix(0.1113 0.0514 -0.2237 0.0771 235.4 344.4)" x="0" y="16">F5</text><text transform="matrix(0.1118 0.0251 -0.1047 0.0376 446.3 278.0)" x="0" y="16">A6</text><text transform="matrix(0.1138 0.0278 -0.1158 0.0416 424.3 285.9)" x="0" y="16">C6</text><text transform="matrix(0.1156 0.0309 -0.1286 0.0462 399.9 294.7)" x="0" y="16">E6</text><text transform="matrix(0.1171 0.0345 -0.1438 0.0517 372.7 304.5)" x="0" y="16">G6</text><text transform="matrix(0.1181 0.0388 -0.1618 0.0581 342.2 315.4)" x="0" y="16">A6</text><text transform="matrix(0.1184 0.0439 -0.1834 0.0659 307.7 327.8)" x="0" y="16">C6</text><text transform="matrix(0.1176 0.0502 -0.2097 0.0753 268.5 341.9)" x="0" y="16">E6</text><text transform="matrix(0.1144 0.0247 -0.0986 0.0370 467.8 276.8)" x="0" y="16">H7</text><text transform="matrix(0.1167 0.0273 -0.1090 0.0409 447.1 284.6)" x="0" y="16">B7</text><text transform="matrix(0.1189 0.0303 -0.1210 0.0454 424.1 293.2)" x="0" y="16">D7</text><text transform="matrix(0.1208 0.0338 -0.1351 0.0507 398.5 302.8)" x="0" y="16">F7</text><text transform="matrix(0.1224 0.0380 -0.1518 0.0570 369.9 313.5)" x="0" y="16">H7</text><text transform="matrix(0.1234 0.0430 -0.1719 0.0645 337.6 325.6)" x="0" y="16">B7</text><text transform="matrix(0.1236 0.0490 -0.1962 0.0736 300.9 339.4)" x="0" y="16">D7</text><text transform="matrix(0.1224 0.0565 -0.2260 0.0848 258.7 355.2)" x="0" y="16">F7</text><text transform="matrix(0.1168 0.0243 -0.0928 0.0364 488.9 275.6)" x="0" y="16">G8</text><text transform="matrix(0.1194 0.0268 -0.1024 0.0402 469.4 283.2)" x="0" y="16">A8</text><text transform="matrix(0.1220 0.0298 -0.1136 0.0446 447.9 291.7)" x="0" y="16">C8</text><text transform="matrix(0.1244 0.0332 -0.1267 0.0497 423.9 301.1)" x="0" y="16">E8</text><text transform="matrix(0.1265 0.0372 -0.1422 0.0558 397.0 311.6)" x="0" y="16">G8</text><text transform="matrix(0.1282 0.0421 -0.1608 0.0631 366.8 323.5)" x="0" y="16">A8</text><text transform="matrix(0.1292 0.0479 -0.1833 0.0719 332.5 337.0)" x="0" y="16">C8</text><text transform="matrix(0.1291 0.0551 -0.2108 0.0827 293.2 352.4)" x="0" y="16">E8</text><text transform="matrix(0.1275 0.0640 -0.2450 0.0962 247.7 370.2)" x="0" y="16">G8</text><text transform="matrix(0.1221 0.0264 -0.0960 0.0395 491.4 281.9)" x="0" y="16">H1</text><text transform="matrix(0.1250 0.0292 -0.1064 0.0438 471.2 290.2)" x="0" y="16">B1</text><text transform="matrix(0.1278 0.0326 -0.1186 0.0488 448.8 299.5)" x="0" y="16">D1</text><text transform="matrix(0.1304 0.0365 -0.1329 0.0547 423.6 309.8)" x="0" y="16">F1</text><text transform="matrix(0.1328 0.0412 -0.1501 0.0618 395.4 321.4)" x="0" y="16">H1</text><text transform="matrix(0.1346 0.0469 -0.1709 0.0703 363.4 334.6)" x="0" y="16">B1</text><text transform="matrix(0.1355 0.0538 -0.1962 0.0808 326.7 349.7)" x="0" y="16">D1</text><text transform="matrix(0.1352 0.0624 -0.2276 0.0937 284.5 367.1)" x="0" y="16">F1</text><text transform="matrix(0.1329 0.0732 -0.2673 0.1100 235.1 387.4)" x="0" y="16">H1</text><text transform="matrix(0.1246 0.0260 -0.0898 0.0389 513.0 280.6)" x="0" y="16">G2</text><text transform="matrix(0.1278 0.0287 -0.0995 0.0430 494.1 288.8)" x="0" y="16">A2</text><text transform="matrix(0.1310 0.0320 -0.1107 0.0479 473.2 297.8)" x="0" y="16">C2</text><text transform="matrix(0.1342 0.0358 -0.1240 0.0537 449.7 308.0)" x="0" y="16">E2</text><text transform="matrix(0.1371 0.0403 -0.1399 0.0605 423.4 319.4)" x="0" y="16">G2</text><text transform="matrix(0.1396 0.0458 -0.1590 0.0688 393.6 332.3)" x="0" y="16">A2</text><text transform="matrix(0.1416 0.0525 -0.1823 0.0788 359.5 347.0)" x="0" y="16">C2</text><text transform="matrix(0.1425 0.0608 -0.2111 0.0913 320.3 364.0)" x="0" y="16">E2</text><text transform="matrix(0.1418 0.0712 -0.2473 0.1070 274.6 383.7)" x="0" y="16">G2</text><text transform="matrix(0.1270 0.0255 -0.0838 0.0382 534.3 279.3)" x="0" y="16">F3</text><text transform="matrix(0.1306 0.0282 -0.0927 0.0423 516.7 287.3)" x="0" y="16">H3</text><text transform="matrix(0.1342 0.0314 -0.1032 0.0470 497.1 296.3)" x="0" y="16">B3</text><text transform="matrix(0.1377 0.0351 -0.1154 0.0526 475.3 306.2)" x="0" y="16">D3</text><text transform="matrix(0.1412 0.0395 -0.1300 0.0593 450.8 317.4)" x="0" y="16">F3</text><text transform="matrix(0.1445 0.0448 -0.1476 0.0673 423.1 330.0)" x="0" y="16">H3</text><text transform="matrix(0.1473 0.0513 -0.1689 0.0770 391.5 344.4)" x="0" y="16">B3</text><text transform="matrix(0.1493 0.0593 -0.1953 0.0890 355.2 361.0)" x="0" y="16">D3</text><text transform="matrix(0.1501 0.0692 -0.2283 0.1041 313.0 380.2)" x="0" y="16">F3</text><text transform="matrix(0.1489 0.0820 -0.2704 0.1233 263.3 402.9)" x="0" y="16">H3</text><text transform="matrix(0.1293 0.0251 -0.0780 0.0376 555.2 278.1)" x="0" y="16">E4</text><text transform="matrix(0.1332 0.0278 -0.0863 0.0416 538.8 286.0)" x="0" y="16">G4</text><text transform="matrix(0.1371 0.0308 -0.0958 0.0462 520.6 294.7)" x="0" y="16">A4</text><text transform="matrix(0.1411 0.0344 -0.1071 0.0516 500.4 304.5)" x="0" y="16">C4</text><text transform="matrix(0.1452 0.0387 -0.1205 0.0581 477.6 315.4)" x="0" y="16">E4</text><text transform="matrix(0.1491 0.0439 -0.1366 0.0658 452.0 327.8)" x="0" y="16">G4</text><text transform="matrix(0.1527 0.0501 -0.1561 0.0752 422.8 341.9)" x="0" y="16">A4</text><text transform="matrix(0.1558 0.0578 -0.1802 0.0868 389.2 358.0)" x="0" y="16">C4</text><text transform="matrix(0.1580 0.0674 -0.2102 0.1013 350.3 376.8)" x="0" y="16">E4</text><text transform="matrix(0.1586 0.0796 -0.2485 0.1197 304.6 398.8)" x="0" y="16">G4</text><text transform="matrix(0.1565 0.0955 -0.2982 0.1436 250.2 425.0)" x="0" y="16">A4</text><text transform="matrix(0.1316 0.0247 -0.0724 0.0370 575.8 276.8)" x="0" y="16">D5</text><text transform="matrix(0.1357 0.0273 -0.0800 0.0408 560.6 284.6)" x="0" y="16">F5</text><text transform="matrix(0.1400 0.0303 -0.0888 0.0453 543.7 293.2)" x="0" y="16">H5</text><text transform="matrix(0.1444 0.0338 -0.0991 0.0506 524.9 302.8)" x="0" y="16">B5</text><text transform="matrix(0.1489 0.0380 -0.1114 0.0569 503.9 313.5)" x="0" y="16">D5</text><text transform="matrix(0.1534 0.0429 -0.1261 0.0644 480.2 325.6)" x="0" y="16">F5</text><text transform="matrix(0.1578 0.0490 -0.1439 0.0735 453.3 339.4)" x="0" y="16">H5</text><text transform="matrix(0.1619 0.0564 -0.1658 0.0847 422.4 355.2)" x="0" y="16">B5</text><text transform="matrix(0.1653 0.0656 -0.1930 0.0986 386.6 373.4)" x="0" y="16">D5</text><text transform="matrix(0.1676 0.0773 -0.2276 0.1163 344.7 394.8)" x="0" y="16">F5</text><text transform="matrix(0.1679 0.0925 -0.2724 0.1391 294.9 420.3)" x="0" y="16">H5</text><text transform="matrix(0.1647 0.1126 -0.3318 0.1695 234.8 451.0)" x="0" y="16">B5</text><text transform="matrix(0.1337 0.0243 -0.0670 0.0364 596.0 275.6)" x="0" y="16">C6</text><text transform="matrix(0.1381 0.0268 -0.0739 0.0402 581.9 283.2)" x="0" y="16">E6</text><text transform="matrix(0.1427 0.0297 -0.0820 0.0445 566.4 291.7)" x="0" y="16">G6</text><text transform="matrix(0.1475 0.0332 -0.0914 0.0497 549.1 301.1)" x="0" y="16">A6</text><text transform="matrix(0.1525 0.0372 -0.1026 0.0558 529.7 311.6)" x="0" y="16">C6</text><text transform="matrix(0.1575 0.0420 -0.1160 0.0630 507.9 323.5)" x="0" y="16">E6</text><text transform="matrix(0.1627 0.0479 -0.1322 0.0718 483.1 337.0)" x="0" y="16">G6</text><text transform="matrix(0.1676 0.0550 -0.1520 0.0826 454.8 352.4)" x="0" y="16">A6</text><text transform="matrix(0.1723 0.0639 -0.1767 0.0960 422.0 370.2)" x="0" y="16">C6</text><text transform="matrix(0.1761 0.0751 -0.2079 0.1130 383.7 391.0)" x="0" y="16">E6</text><text transform="matrix(0.1785 0.0896 -0.2481 0.1348 338.2 415.7)" x="0" y="16">G6</text><text transform="matrix(0.1783 0.1088 -0.3012 0.1637 283.6 445.4)" x="0" y="16">A6</text><text transform="matrix(0.1404 0.0264 -0.0680 0.0395 603.0 281.9)" x="0" y="16">D7</text><text transform="matrix(0.1453 0.0292 -0.0754 0.0438 588.6 290.2)" x="0" y="16">F7</text><text transform="matrix(0.1505 0.0325 -0.0840 0.0488 572.7 299.5)" x="0" y="16">H7</text><text transform="matrix(0.1559 0.0365 -0.0942 0.0547 555.0 309.8)" x="0" y="16">B7</text><text transform="matrix(0.1615 0.0412 -0.1063 0.0617 534.9 321.4)" x="0" y="16">D7</text><text transform="matrix(0.1672 0.0468 -0.1210 0.0702 512.3 334.6)" x="0" y="16">F7</text><text transform="matrix(0.1731 0.0537 -0.1389 0.0806 486.3 349.6)" x="0" y="16">H7</text><text transform="matrix(0.1788 0.0623 -0.1611 0.0935 456.4 367.0)" x="0" y="16">B7</text><text transform="matrix(0.1841 0.0731 -0.1891 0.1098 421.5 387.3)" x="0" y="16">D7</text><text transform="matrix(0.1884 0.0869 -0.2251 0.1307 380.2 411.2)" x="0" y="16">F7</text><text transform="matrix(0.1909 0.1051 -0.2725 0.1582 330.7 440.0)" x="0" y="16">H7</text><text transform="matrix(0.1899 0.1298 -0.3365 0.1954 270.1 475.2)" x="0" y="16">B7</text><text transform="matrix(0.1426 0.0260 -0.0623 0.0388 623.6 280.6)" x="0" y="16">C8</text><text transform="matrix(0.1478 0.0287 -0.0690 0.0430 610.5 288.8)" x="0" y="16">E8</text><text transform="matrix(0.1533 0.0319 -0.0768 0.0479 596.0 297.9)" x="0" y="16">G8</text><text transform="matrix(0.1591 0.0358 -0.0860 0.0536 579.7 308.0)" x="0" y="16">A8</text><text transform="matrix(0.1652 0.0403 -0.0970 0.0604 561.4 319.4)" x="0" y="16">C8</text><text transform="matrix(0.1716 0.0458 -0.1102 0.0687 540.8 332.3)" x="0" y="16">E8</text><text transform="matrix(0.1782 0.0524 -0.1263 0.0787 517.2 347.0)" x="0" y="16">G8</text><text transform="matrix(0.1849 0.0607 -0.1463 0.0912 490.0 363.9)" x="0" y="16">A8</text><text transform="matrix(0.1915 0.0711 -0.1713 0.1068 458.3 383.7)" x="0" y="16">C8</text><text transform="matrix(0.1976 0.0843 -0.2034 0.1268 421.0 406.9)" x="0" y="16">E8</text><text transform="matrix(0.2026 0.1017 -0.2455 0.1530 376.3 434.8)" x="0" y="16">G8</text><text transform="matrix(0.2050 0.1251 -0.3021 0.1883 321.8 468.7)" x="0" y="16">A8</text><text transform="matrix(0.2027 0.1575 -0.3807 0.2373 254.0 511.0)" x="0" y="16">C8</text><text transform="matrix(0.1447 0.0255 -0.0568 0.0382 643.9 279.3)" x="0" y="16">B1</text><text transform="matrix(0.1502 0.0282 -0.0628 0.0423 632.0 287.4)" x="0" y="16">D1</text><text transform="matrix(0.1560 0.0314 -0.0699 0.0470 618.8 296.3)" x="0" y="16">F1</text><text transform="matrix(0.1622 0.0351 -0.0782 0.0526 604.0 306.2)" x="0" y="16">H1</text><text transform="matrix(0.1687 0.0395 -0.0880 0.0592 587.4 317.4)" x="0" y="16">B1</text><text transform="matrix(0.1757 0.0448 -0.0999 0.0672 568.6 330.0)" x="0" y="16">D1</text><text transform="matrix(0.1830 0.0512 -0.1143 0.0769 547.3 344.4)" x="0" y="16">F1</text><text transform="matrix(0.1907 0.0592 -0.1321 0.0889 522.7 360.9)" x="0" y="16">H1</text><text transform="matrix(0.1985 0.0691 -0.1545 0.1039 494.1 380.1)" x="0" y="16">B1</text><text transform="matrix(0.2062 0.0818 -0.1830 0.1231 460.5 402.7)" x="0" y="16">D1</text><text transform="matrix(0.2133 0.0984 -0.2201 0.1480 420.3 429.7)" x="0" y="16">F1</text><text transform="matrix(0.2189 0.1206 -0.2699 0.1815 371.6 462.5)" x="0" y="16">H1</text><text transform="matrix(0.2212 0.1512 -0.3386 0.2278 311.1 503.2)" x="0" y="16">B1</text><text transform="matrix(0.2167 0.1952 -0.4374 0.2942 234.2 555.0)" x="0" y="16">D1</text><text transform="matrix(0.1467 0.0251 -0.0514 0.0376 663.9 278.1)" x="0" y="16">A2</text><text transform="matrix(0.1524 0.0277 -0.0569 0.0415 653.1 286.0)" x="0" y="16">C2</text><text transform="matrix(0.1585 0.0308 -0.0632 0.0461 641.1 294.7)" x="0" y="16">E2</text><text transform="matrix(0.1651 0.0344 -0.0706 0.0516 627.8 304.5)" x="0" y="16">G2</text><text transform="matrix(0.1721 0.0387 -0.0794 0.0580 612.8 315.4)" x="0" y="16">A2</text><text transform="matrix(0.1796 0.0438 -0.0900 0.0657 595.9 327.8)" x="0" y="16">C2</text><text transform="matrix(0.1876 0.0500 -0.1029 0.0751 576.6 341.8)" x="0" y="16">E2</text><text transform="matrix(0.1961 0.0577 -0.1187 0.0867 554.6 358.0)" x="0" y="16">G2</text><text transform="matrix(0.2050 0.0673 -0.1384 0.1011 528.9 376.7)" x="0" y="16">A2</text><text transform="matrix(0.2142 0.0795 -0.1636 0.1195 498.8 398.7)" x="0" y="16">C2</text><text transform="matrix(0.2233 0.0953 -0.1962 0.1433 463.0 424.9)" x="0" y="16">E2</text><text transform="matrix(0.2317 0.1163 -0.2398 0.1751 419.6 456.5)" x="0" y="16">G2</text><text transform="matrix(0.2382 0.1453 -0.2996 0.2188 366.0 495.7)" x="0" y="16">A2</text><text transform="matrix(0.2400 0.1866 -0.3849 0.2811 298.1 545.3)" x="0" y="16">C2</text><text transform="matrix(0.2318 0.2483 -0.5126 0.3744 209.3 610.2)" x="0" y="16">E2</text><text transform="matrix(0.1487 0.0247 -0.0463 0.0370 683.6 276.9)" x="0" y="16">H3</text><text transform="matrix(0.1546 0.0273 -0.0511 0.0408 673.9 284.6)" x="0" y="16">B3</text><text transform="matrix(0.1610 0.0303 -0.0567 0.0453 663.1 293.2)" x="0" y="16">D3</text><text transform="matrix(0.1679 0.0338 -0.0633 0.0506 651.1 302.8)" x="0" y="16">F3</text><text transform="matrix(0.1753 0.0379 -0.0711 0.0568 637.7 313.5)" x="0" y="16">H3</text><text transform="matrix(0.1833 0.0429 -0.0805 0.0643 622.6 325.6)" x="0" y="16">B3</text><text transform="matrix(0.1919 0.0489 -0.0919 0.0734 605.4 339.4)" x="0" y="16">D3</text><text transform="matrix(0.2012 0.0563 -0.1058 0.0846 585.6 355.1)" x="0" y="16">F3</text><text transform="matrix(0.2111 0.0655 -0.1232 0.0984 562.8 373.4)" x="0" y="16">H3</text><text transform="matrix(0.2216 0.0772 -0.1452 0.1160 536.0 394.7)" x="0" y="16">B3</text><text transform="matrix(0.2326 0.0923 -0.1738 0.1388 504.3 420.1)" x="0" y="16">D3</text><text transform="matrix(0.2435 0.1123 -0.2116 0.1691 465.9 450.8)" x="0" y="16">F3</text><text transform="matrix(0.2536 0.1397 -0.2633 0.2104 418.7 488.5)" x="0" y="16">H3</text><text transform="matrix(0.2611 0.1784 -0.3365 0.2688 359.2 536.0)" x="0" y="16">B3</text><text transform="matrix(0.2619 0.2359 -0.4451 0.3556 281.8 597.9)" x="0" y="16">D3</text><text transform="matrix(0.1505 0.0243 -0.0412 0.0364 702.9 275.6)" x="0" y="16">G4</text><text transform="matrix(0.1567 0.0268 -0.0455 0.0401 694.3 283.3)" x="0" y="16">A4</text><text transform="matrix(0.1633 0.0297 -0.0505 0.0445 684.7 291.7)" x="0" y="16">C4</text><text transform="matrix(0.1705 0.0331 -0.0563 0.0496 674.0 301.1)" x="0" y="16">E4</text><text transform="matrix(0.1783 0.0372 -0.0632 0.0557 662.1 311.7)" x="0" y="16">G4</text><text transform="matrix(0.1868 0.0420 -0.0714 0.0630 648.7 323.5)" x="0" y="16">A4</text><text transform="matrix(0.1960 0.0478 -0.0814 0.0718 633.4 336.9)" x="0" y="16">C4</text><text transform="matrix(0.2060 0.0549 -0.0936 0.0825 616.0 352.3)" x="0" y="16">E4</text><text transform="matrix(0.2168 0.0638 -0.1087 0.0959 595.8 370.1)" x="0" y="16">G4</text><text transform="matrix(0.2286 0.0750 -0.1279 0.1128 572.2 390.9)" x="0" y="16">A4</text><text transform="matrix(0.2411 0.0895 -0.1526 0.1345 544.3 415.5)" x="0" y="16">C4</text><text transform="matrix(0.2544 0.1085 -0.1852 0.1633 510.7 445.2)" x="0" y="16">E4</text><text transform="matrix(0.2677 0.1344 -0.2295 0.2024 469.4 481.6)" x="0" y="16">G4</text><text transform="matrix(0.2801 0.1708 -0.2919 0.2574 417.7 527.2)" x="0" y="16">A4</text><text transform="matrix(0.2887 0.2244 -0.3836 0.3383 350.7 586.2)" x="0" y="16">C4</text><text transform="matrix(0.2873 0.3078 -0.5264 0.4642 260.9 665.5)" x="0" y="16">E4</text><text transform="matrix(0.1587 0.0264 -0.0401 0.0395 714.3 282.0)" x="0" y="16">H5</text><text transform="matrix(0.1656 0.0292 -0.0444 0.0437 705.9 290.3)" x="0" y="16">B5</text><text transform="matrix(0.1730 0.0325 -0.0495 0.0487 696.5 299.5)" x="0" y="16">D5</text><text transform="matrix(0.1812 0.0364 -0.0555 0.0546 686.0 309.8)" x="0" y="16">F5</text><text transform="matrix(0.1901 0.0411 -0.0627 0.0617 674.2 321.4)" x="0" y="16">H5</text><text transform="matrix(0.1998 0.0468 -0.0713 0.0702 660.8 334.6)" x="0" y="16">B5</text><text transform="matrix(0.2104 0.0536 -0.0819 0.0805 645.5 349.6)" x="0" y="16">D5</text><text transform="matrix(0.2222 0.0622 -0.0949 0.0934 627.9 367.0)" x="0" y="16">F5</text><text transform="matrix(0.2350 0.0729 -0.1114 0.1096 607.3 387.2)" x="0" y="16">H5</text><text transform="matrix(0.2491 0.0867 -0.1326 0.1305 583.0 411.1)" x="0" y="16">B5</text><text transform="matrix(0.2643 0.1049 -0.1604 0.1578 553.9 439.8)" x="0" y="16">D5</text><text transform="matrix(0.2806 0.1294 -0.1981 0.1949 518.2 474.9)" x="0" y="16">F5</text><text transform="matrix(0.2973 0.1637 -0.2507 0.2466 473.6 518.7)" x="0" y="16">H5</text><text transform="matrix(0.3127 0.2137 -0.3274 0.3221 416.3 575.1)" x="0" y="16">B5</text><text transform="matrix(0.3227 0.2907 -0.4457 0.4384 339.9 650.3)" x="0" y="16">D5</text><text transform="matrix(0.1606 0.0259 -0.0349 0.0388 734.0 280.7)" x="0" y="16">G6</text><text transform="matrix(0.1677 0.0287 -0.0386 0.0430 726.7 288.8)" x="0" y="16">A6</text><text transform="matrix(0.1754 0.0319 -0.0430 0.0478 718.5 297.9)" x="0" y="16">C6</text><text transform="matrix(0.1839 0.0357 -0.0481 0.0536 709.4 308.0)" x="0" y="16">E6</text><text transform="matrix(0.1932 0.0403 -0.0543 0.0604 699.2 319.4)" x="0" y="16">G6</text><text transform="matrix(0.2034 0.0457 -0.0617 0.0686 687.6 332.3)" x="0" y="16">A6</text><text transform="matrix(0.2147 0.0524 -0.0707 0.0786 674.4 347.0)" x="0" y="16">C6</text><text transform="matrix(0.2272 0.0606 -0.0818 0.0910 659.2 363.9)" x="0" y="16">E6</text><text transform="matrix(0.2410 0.0709 -0.0958 0.1066 641.5 383.6)" x="0" y="16">G6</text><text transform="matrix(0.2564 0.0842 -0.1138 0.1265 620.6 406.8)" x="0" y="16">A6</text><text transform="matrix(0.2735 0.1015 -0.1372 0.1527 595.6 434.6)" x="0" y="16">C6</text><text transform="matrix(0.2924 0.1247 -0.1688 0.1878 565.2 468.5)" x="0" y="16">E6</text><text transform="matrix(0.3128 0.1570 -0.2126 0.2365 527.3 510.6)" x="0" y="16">G6</text><text transform="matrix(0.3341 0.2038 -0.2761 0.3071 478.8 564.5)" x="0" y="16">A6</text><text transform="matrix(0.3539 0.2751 -0.3729 0.4148 414.7 635.9)" x="0" y="16">C6</text><text transform="matrix(0.3654 0.3916 -0.5311 0.5907 325.7 734.9)" x="0" y="16">E6</text><text transform="matrix(0.1624 0.0255 -0.0298 0.0382 753.4 279.4)" x="0" y="16">F7</text><text transform="matrix(0.1697 0.0282 -0.0330 0.0422 747.1 287.4)" x="0" y="16">H7</text><text transform="matrix(0.1777 0.0313 -0.0367 0.0470 740.2 296.3)" x="0" y="16">B7</text><text transform="matrix(0.1865 0.0350 -0.0410 0.0525 732.4 306.3)" x="0" y="16">D7</text><text transform="matrix(0.1961 0.0394 -0.0462 0.0591 723.7 317.4)" x="0" y="16">F7</text><text transform="matrix(0.2068 0.0447 -0.0524 0.0671 713.8 330.0)" x="0" y="16">H7</text><text transform="matrix(0.2186 0.0512 -0.0600 0.0768 702.6 344.4)" x="0" y="16">B7</text><text transform="matrix(0.2318 0.0591 -0.0694 0.0887 689.7 360.9)" x="0" y="16">D7</text><text transform="matrix(0.2466 0.0690 -0.0811 0.1037 674.7 380.1)" x="0" y="16">F7</text><text transform="matrix(0.2632 0.0817 -0.0960 0.1228 657.1 402.6)" x="0" y="16">H7</text><text transform="matrix(0.2819 0.0982 -0.1154 0.1477 636.0 429.6)" x="0" y="16">B7</text><text transform="matrix(0.3031 0.1203 -0.1415 0.1810 610.5 462.3)" x="0" y="16">D7</text><text transform="matrix(0.3268 0.1508 -0.1775 0.2271 578.8 502.8)" x="0" y="16">F7</text><text transform="matrix(0.3532 0.1945 -0.2291 0.2932 538.5 554.4)" x="0" y="16">H7</text><text transform="matrix(0.3813 0.2606 -0.3071 0.3929 485.4 622.3)" x="0" y="16">B7</text><text transform="matrix(0.4076 0.3672 -0.4329 0.5539 412.5 715.6)" x="0" y="16">D7</text><text transform="matrix(0.1641 0.0251 -0.0249 0.0376 772.5 278.1)" x="0" y="16">E8</text><text transform="matrix(0.1716 0.0277 -0.0276 0.0415 767.2 286.0)" x="0" y="16">G8</text><text transform="matrix(0.1799 0.0308 -0.0306 0.0461 761.4 294.8)" x="0" y="16">A8</text><text transform="matrix(0.1889 0.0344 -0.0342 0.0515 754.9 304.5)" x="0" y="16">C8</text><text transform="matrix(0.1989 0.0386 -0.0385 0.0580 747.7 315.4)" x="0" y="16">E8</text><text transform="matrix(0.2100 0.0438 -0.0436 0.0657 739.5 327.8)" x="0" y="16">G8</text><text transform="matrix(0.2223 0.0500 -0.0498 0.0750 730.2 341.8)" x="0" y="16">A8</text><text transform="matrix(0.2362 0.0576 -0.0575 0.0865 719.5 357.9)" x="0" y="16">C8</text><text transform="matrix(0.2518 0.0672 -0.0670 0.1009 707.0 376.6)" x="0" y="16">E8</text><text transform="matrix(0.2695 0.0793 -0.0792 0.1192 692.5 398.6)" x="0" y="16">G8</text><text transform="matrix(0.2897 0.0951 -0.0950 0.1430 675.1 424.7)" x="0" y="16">A8</text><text transform="matrix(0.3128 0.1161 -0.1160 0.1747 654.1 456.3)" x="0" y="16">C8</text><text transform="matrix(0.3395 0.1449 -0.1449 0.2181 628.2 495.3)" x="0" y="16">E8</text><text transform="matrix(0.3703 0.1859 -0.1860 0.2801 595.4 544.8)" x="0" y="16">G8</text><text transform="matrix(0.4054 0.2473 -0.2476 0.3728 552.4 609.4)" x="0" y="16">A8</text><text transform="matrix(0.4439 0.3450 -0.3456 0.5204 493.9 697.5)" x="0" y="16">C8</text><text transform="matrix(0.1658 0.0247 -0.0202 0.0369 791.2 276.9)" x="0" y="16">D1</text><text transform="matrix(0.1735 0.0273 -0.0223 0.0408 787.0 284.7)" x="0" y="16">F1</text><text transform="matrix(0.1819 0.0302 -0.0248 0.0453 782.3 293.3)" x="0" y="16">H1</text><text transform="matrix(0.1912 0.0337 -0.0276 0.0505 777.0 302.8)" x="0" y="16">B1</text><text transform="matrix(0.2016 0.0379 -0.0311 0.0568 771.2 313.5)" x="0" y="16">D1</text><text transform="matrix(0.2130 0.0428 -0.0351 0.0643 764.6 325.6)" x="0" y="16">F1</text><text transform="matrix(0.2258 0.0489 -0.0401 0.0733 757.1 339.3)" x="0" y="16">H1</text><text transform="matrix(0.2403 0.0562 -0.0462 0.0844 748.5 355.1)" x="0" y="16">B1</text><text transform="matrix(0.2566 0.0654 -0.0537 0.0983 738.5 373.3)" x="0" y="16">D1</text><text transform="matrix(0.2753 0.0770 -0.0633 0.1158 726.8 394.6)" x="0" y="16">F1</text><text transform="matrix(0.2968 0.0921 -0.0757 0.1385 713.0 420.0)" x="0" y="16">H1</text><text transform="matrix(0.3217 0.1121 -0.0922 0.1686 696.3 450.5)" x="0" y="16">B1</text><text transform="matrix(0.3510 0.1393 -0.1147 0.2097 675.7 488.2)" x="0" y="16">D1</text><text transform="matrix(0.3855 0.1778 -0.1465 0.2679 649.8 535.6)" x="0" y="16">F1</text><text transform="matrix(0.4266 0.2350 -0.1937 0.3542 616.1 597.2)" x="0" y="16">H1</text><text transform="matrix(0.4752 0.3248 -0.2679 0.4899 570.5 680.5)" x="0" y="16">B1</text><text transform="matrix(0.1673 0.0243 -0.0156 0.0364 809.7 275.7)" x="0" y="16">C2</text><text transform="matrix(0.1752 0.0268 -0.0172 0.0401 806.4 283.3)" x="0" y="16">E2</text><text transform="matrix(0.1839 0.0297 -0.0191 0.0445 802.8 291.8)" x="0" y="16">G2</text><text transform="matrix(0.1934 0.0331 -0.0213 0.0496 798.7 301.2)" x="0" y="16">A2</text><text transform="matrix(0.2040 0.0371 -0.0239 0.0557 794.2 311.7)" x="0" y="16">C2</text><text transform="matrix(0.2159 0.0419 -0.0270 0.0629 789.1 323.5)" x="0" y="16">E2</text><text transform="matrix(0.2291 0.0478 -0.0308 0.0717 783.4 336.9)" x="0" y="16">G2</text><text transform="matrix(0.2441 0.0549 -0.0354 0.0824 776.8 352.3)" x="0" y="16">A2</text><text transform="matrix(0.2611 0.0637 -0.0411 0.0957 769.1 370.1)" x="0" y="16">C2</text><text transform="matrix(0.2807 0.0749 -0.0483 0.1126 760.2 390.8)" x="0" y="16">E2</text><text transform="matrix(0.3033 0.0893 -0.0577 0.1343 749.7 415.4)" x="0" y="16">G2</text><text transform="matrix(0.3299 0.1083 -0.0700 0.1629 737.0 445.0)" x="0" y="16">A2</text><text transform="matrix(0.3613 0.1340 -0.0867 0.2018 721.4 481.3)" x="0" y="16">C2</text><text transform="matrix(0.3991 0.1703 -0.1102 0.2565 701.8 526.8)" x="0" y="16">E2</text><text transform="matrix(0.4452 0.2235 -0.1447 0.3369 676.6 585.6)" x="0" y="16">G2</text><text transform="matrix(0.5022 0.3064 -0.1984 0.4620 642.7 664.5)" x="0" y="16">A2</text><text transform="matrix(0.1769 0.0264 -0.0123 0.0394 825.5 282.0)" x="0" y="16">D3</text><text transform="matrix(0.1857 0.0292 -0.0136 0.0437 822.9 290.3)" x="0" y="16">F3</text><text transform="matrix(0.1955 0.0325 -0.0152 0.0487 820.0 299.5)" x="0" y="16">H3</text><text transform="matrix(0.2064 0.0364 -0.0170 0.0546 816.8 309.8)" x="0" y="16">B3</text><text transform="matrix(0.2185 0.0411 -0.0192 0.0616 813.2 321.4)" x="0" y="16">D3</text><text transform="matrix(0.2322 0.0467 -0.0219 0.0701 809.1 334.6)" x="0" y="16">F3</text><text transform="matrix(0.2476 0.0536 -0.0251 0.0804 804.4 349.6)" x="0" y="16">H3</text><text transform="matrix(0.2653 0.0621 -0.0291 0.0933 799.0 366.9)" x="0" y="16">B3</text><text transform="matrix(0.2856 0.0728 -0.0342 0.1094 792.7 387.1)" x="0" y="16">D3</text><text transform="matrix(0.3093 0.0866 -0.0406 0.1302 785.2 411.0)" x="0" y="16">F3</text><text transform="matrix(0.3372 0.1047 -0.0492 0.1575 776.3 439.6)" x="0" y="16">H3</text><text transform="matrix(0.3706 0.1291 -0.0607 0.1943 765.3 474.6)" x="0" y="16">B3</text><text transform="matrix(0.4112 0.1632 -0.0768 0.2458 751.7 518.3)" x="0" y="16">D3</text><text transform="matrix(0.4616 0.2129 -0.1002 0.3209 734.2 574.5)" x="0" y="16">F3</text><text transform="matrix(0.5255 0.2894 -0.1363 0.4364 710.8 649.3)" x="0" y="16">H3</text><text transform="matrix(0.2510 0.0523 -0.0153 0.0785 831.3 346.9)" x="0" y="16">G4</text><text transform="matrix(0.2692 0.0605 -0.0177 0.0909 828.0 363.8)" x="0" y="16">A4</text><text transform="matrix(0.2902 0.0708 -0.0207 0.1064 824.2 383.5)" x="0" y="16">C4</text><text transform="matrix(0.3148 0.0840 -0.0246 0.1263 819.7 406.7)" x="0" y="16">E4</text><text transform="matrix(0.3440 0.1012 -0.0297 0.1523 814.3 434.4)" x="0" y="16">G4</text><text transform="matrix(0.3790 0.1244 -0.0365 0.1873 807.7 468.2)" x="0" y="16">A4</text><text transform="matrix(0.4220 0.1566 -0.0460 0.2358 799.5 510.2)" x="0" y="16">C4</text><text transform="matrix(0.4759 0.2031 -0.0597 0.3060 789.0 563.9)" x="0" y="16">E4</text><text transform="matrix(0.5454 0.2738 -0.0805 0.4129 775.1 635.0)" x="0" y="16">G4</text><text transform="matrix(0.6384 0.3894 -0.1145 0.5875 755.9 733.5)" x="0" y="16">A4</text><text transform="matrix(0.4885 0.1939 -0.0227 0.2921 841.3 553.9)" x="0" y="16">D5</text><text transform="matrix(0.5626 0.2595 -0.0304 0.3913 836.1 621.5)" x="0" y="16">F5</text><text transform="matrix(0.6631 0.3652 -0.0429 0.5510 828.8 714.4)" x="0" y="16">H5</text></g><rect x="245" y="120" width="574" height="220" fill="url(#fog)"/></g><path d="M245 169 L416 156 L819 176.3" fill="none" stroke="#4a4a98" stroke-width="1" stroke-dasharray="14 2"/><path d="M420.5 156 L291.3 700" stroke="#5c5cb8" stroke-width="0.8"/><defs><filter id="blur8" x="-30%" y="-30%" width="160%" height="160%"><feGaussianBlur stdDeviation="9"/></filter><linearGradient id="topg" x1="0" y1="305" x2="0" y2="513" gradientUnits="userSpaceOnUse"><stop offset="0" stop-color="#e6e424"/><stop offset="1" stop-color="#dcd81c"/></linearGradient><linearGradient id="lfg" x1="463" y1="452" x2="452" y2="477" gradientUnits="userSpaceOnUse"><stop offset="0" stop-color="#8e8a00"/><stop offset="0.5" stop-color="#b4b008"/><stop offset="1" stop-color="#d0cc12"/></linearGradient><linearGradient id="lfd" x1="331" y1="0" x2="560" y2="0" gradientUnits="userSpaceOnUse"><stop offset="0" stop-color="#000" stop-opacity="0.22"/><stop offset="1" stop-color="#000" stop-opacity="0"/></linearGradient><linearGradient id="rfg" x1="652" y1="433" x2="672" y2="448" gradientUnits="userSpaceOnUse"><stop offset="0" stop-color="#9a9600"/><stop offset="0.45" stop-color="#c0bc0c"/><stop offset="1" stop-color="#d6d214"/></linearGradient><linearGradient id="gfg" x1="0" y1="344" x2="0" y2="406" gradientUnits="userSpaceOnUse"><stop offset="0" stop-color="#1aa51a"/><stop offset="1" stop-color="#0a780a"/></linearGradient><radialGradient id="glow"><stop offset="0" stop-color="#ffffff" stop-opacity="0.75"/><stop offset="0.8" stop-color="#ffffff" stop-opacity="0.55"/><stop offset="1" stop-color="#ffffff" stop-opacity="0"/></radialGradient></defs><path d="M338 418 L593 546 L708 378 L712 356 L600 520 Z" fill="#000" opacity="0.18" filter="url(#blur8)"/><path d="M505.6 304.9 L709.5 354 L595.5 513.1 L331 390.6Z" fill="url(#topg)"/><path d="M331 390.6 L595.5 513.1 L593 542.8 L338.1 415Z" fill="url(#lfg)"/><path d="M331 390.6 L595.5 513.1 L593 542.8 L338.1 415Z" fill="url(#lfd)"/><path d="M595.5 513.1 L709.5 354 L705.4 376.2 L593 542.8Z" fill="url(#rfg)"/><path d="M338.1 415 L506.3 323.4 L705.4 376.2 M505.6 304.9 L506.3 323.4" fill="none" stroke="#7a7620" stroke-opacity="0.85" stroke-width="1.5"/><filter id="blur4" x="-30%" y="-50%" width="160%" height="200%"><feGaussianBlur stdDeviation="4"/></filter><path d="M520 366 L646 404 L656 378 L662 386 L652 420 L525 386Z" fill="#6a6600" opacity="0.35" filter="url(#blur4)"/><path d="M505.6 304.9 L709.5 354 L705.4 376.2 L593 542.8 L338.1 415 L331 390.6Z" fill="none" stroke="#0a0a80" stroke-width="2.2" stroke-linejoin="round"/><path d="M331 390.6 L595.5 513.1 L709.5 354 M595.5 513.1 L593 542.8" fill="none" stroke="#0a0a80" stroke-width="2.2"/><path d="M524.5 341.4 L653.4 373.2 L648.5 378.5 L525.3 344.5Z" fill="#3ccf3c"/><path d="M525.3 344.5 L648.5 378.5 L644.3 406.2 L524.5 368.8Z" fill="url(#gfg)"/><path d="M648.5 378.5 L653.4 373.2 L650.5 403 L644.3 406.2Z" fill="#2cb02c"/><path d="M529 363.5 L645 398.5" stroke="#1a6070" stroke-width="1.3" opacity="0.85"/><path d="M524.5 341.4 L653.4 373.2 L650.5 403 L644.3 406.2 L524.5 368.8Z" fill="none" stroke="#1414f0" stroke-width="2.2" stroke-linejoin="round"/><path d="M525.3 344.5 L648.5 378.5 L653.4 373.2 M648.5 378.5 L644.3 406.2" fill="none" stroke="#1414f0" stroke-width="1.6"/><path d="M579.5 371 H587.5 M583.5 367 V375" stroke="#e02020" stroke-width="1"/><path d="M534.5 333 V235" stroke="#2a2af0" stroke-width="1"/><path d="M530 244 L534.5 234.5 L539 244 M530 254 L534.5 244.5 L539 254" fill="none" stroke="#2a2af0" stroke-width="1"/><path d="M534.5 333 L580 305" stroke="#30d030" stroke-width="1"/><path d="M572 302 L580.5 304.5 L576 311.5 M568 304 L576.5 306.5 L572 313.5" fill="none" stroke="#30d030" stroke-width="1"/><path d="M534.5 333 L623 356.5" stroke="#f04010" stroke-width="1"/><path d="M606.5 345 L623.5 357 L610.5 363 M599 343 L616 355 L603 361" fill="none" stroke="#f04010" stroke-width="1"/><circle cx="534.8" cy="332.4" r="11" fill="url(#glow)"/><path d="M371.6 362 L355.4 430" stroke="#3a3a90" stroke-width="0.8" opacity="0.35"/><circle cx="711" cy="99.8" r="10.8" fill="#ededed"/><circle cx="740.8" cy="99.8" r="10.8" fill="#ededed"/><circle cx="770.9" cy="99.8" r="10.8" fill="#ededed"/><circle cx="800.7" cy="99.8" r="10.8" fill="#ededed"/><rect x="705" y="95" width="13" height="9" fill="none" stroke="#8a8a8a" stroke-width="2"/><path d="M709 106.5 H714 M711.5 104 V106" stroke="#8a8a8a" stroke-width="1.6"/><circle cx="740.8" cy="99.8" r="3" fill="#8a8a8a"/><g stroke="#8a8a8a" stroke-width="1.4" transform="translate(740.8 99.8)"><path d="M5.00 0.00 L8.50 0.00"/><path d="M3.54 3.54 L6.01 6.01"/><path d="M0.00 5.00 L0.00 8.50"/><path d="M-3.54 3.54 L-6.01 6.01"/><path d="M-5.00 0.00 L-8.50 0.00"/><path d="M-3.54 -3.54 L-6.01 -6.01"/><path d="M-0.00 -5.00 L-0.00 -8.50"/><path d="M3.54 -3.54 L6.01 -6.01"/></g><circle cx="770.9" cy="99.8" r="3" fill="#8a8a8a"/><g stroke="#8a8a8a" stroke-width="1.4" transform="translate(770.9 99.8)"><path d="M5.00 0.00 L8.50 0.00"/><path d="M3.54 3.54 L6.01 6.01"/><path d="M0.00 5.00 L0.00 8.50"/><path d="M-3.54 3.54 L-6.01 6.01"/><path d="M-5.00 0.00 L-8.50 0.00"/><path d="M-3.54 -3.54 L-6.01 -6.01"/><path d="M-0.00 -5.00 L-0.00 -8.50"/><path d="M3.54 -3.54 L6.01 -6.01"/></g><rect x="794" y="95" width="10" height="10" rx="1" fill="#8a8a8a"/><path d="M803 99 L808 95.5 V104.5 L803 101Z" fill="#8a8a8a"/><text x="251" y="687.8" font-family="Liberation Sans" font-size="15" fill="#0c2cff" stroke="#0c2cff" stroke-width="0.3" textLength="113.5">www.historian.by</text><rect x="245.5" y="82.5" width="573" height="617" fill="none" stroke="#cfcfcf" stroke-width="1" opacity="0.5"/></svg>
<div class="a" style="left:0px;top:0px;width:1024px;height:56px;background:#0e0e0e;"></div>
<div class="a" style="left:0px;top:0px;width:1px;height:28px;background:#4a4a4a;"></div>
<div class="a t" style="left:12px;top:7px;font-size:12.5px;line-height:12.5px;color:#ffffff;transform-origin:0 0;transform:scaleX(0.908);">N</div>
<div class="a" style="left:9px;top:21px;width:14px;height:2px;background:#2a8fe0;"></div>
<div class="a" style="left:1px;top:29px;width:78px;height:25px;background:#2d2d2d;"></div>
<div class="a t" style="left:18px;top:34px;font-size:12px;line-height:12px;color:#f0f0f0;transform-origin:0 0;">Проект</div>
<div class="a t" style="left:96px;top:34px;font-size:12px;line-height:12px;color:#f0f0f0;transform-origin:0 0;">Базовые</div>
<div class="a t" style="left:168px;top:34px;font-size:12px;line-height:12px;color:#f0f0f0;transform-origin:0 0;">Скриптование</div>
<div class="a t" style="left:273px;top:34px;font-size:12px;line-height:12px;color:#f0f0f0;transform-origin:0 0;">Окна</div>
<div class="a t" style="left:326px;top:34px;font-size:12px;line-height:12px;color:#f0f0f0;transform-origin:0 0;">Инструменты</div>
<div class="a t" style="left:429px;top:34px;font-size:12px;line-height:12px;color:#f0f0f0;transform-origin:0 0;">Редактор сцен</div>
<div class="a t" style="left:536px;top:34px;font-size:12px;line-height:12px;color:#f0f0f0;transform-origin:0 0;">Моделирование</div>
<div class="a t" style="left:481px;top:9px;font-size:12px;line-height:12px;color:#f0f0f0;transform-origin:0 0;transform:scaleX(0.942);">Example...</div>
<div class="a" style="left:954px;top:15px;width:9px;height:2px;background:#ffffff;"></div>
<svg class="a" style="left:979px;top:8px;" width="12" height="12" viewBox="0 0 12 12"><path d="M3.5 3.5V1.5H10.5V8.5H8.5" fill="none" stroke="#fff" stroke-width="1.2"/><rect x="1.5" y="3.5" width="7" height="7" fill="none" stroke="#fff" stroke-width="1.2"/></svg>
<svg class="a" style="left:1005px;top:9px;" width="11" height="11" viewBox="0 0 11 11"><path d="M1 1L10 10M10 1L1 10" stroke="#fff" stroke-width="1.6"/></svg>
<svg class="a" style="left:1005px;top:38px;" width="11" height="8" viewBox="0 0 11 8"><path d="M1 1.5L5.5 6L10 1.5" fill="none" stroke="#fff" stroke-width="1.8"/></svg>
<svg class="a" style="left:39px;top:5px;" width="18" height="18" viewBox="0 0 18 18"><path d="M1.5 12C1.5 6 6 3 10.5 4L10.5 1L16.5 6.5L10.5 11.5L10.5 8C7.5 7 5 9 5 12Z" fill="#f4c030" stroke="#d89a10" stroke-width="0.5"/><path d="M16.5 6.5C16.5 12.5 12 15.5 7.5 14.5L7.5 17.5L1.5 12L7.5 7L7.5 10.5C10.5 11.5 13 9.5 13 6.5Z" transform="translate(0 1)" fill="#b0c0d4" stroke="#8898b0" stroke-width="0.5"/></svg>
<svg class="a" style="left:61px;top:5px;" width="17" height="17" viewBox="0 0 17 17"><path d="M0.5 0.5H9.5L13.5 4.5V15.5H0.5Z" fill="#f0f0f0" stroke="#d8d8d8"/><rect x="2" y="3" width="6" height="11" fill="#e4e6ea"/><path d="M9.5 0.5V4.5H13.5" fill="#fafafa" stroke="#9a9a9a" stroke-width="0.7"/><path d="M12 7.5L13.6 10.7L17 11L14.5 13.3L15.3 16.6L12 14.9L8.7 16.6L9.5 13.3L7 11L10.4 10.7Z" fill="#ffd860" stroke="#f09010" stroke-width="1"/></svg>
<svg class="a" style="left:83px;top:6px;" width="16" height="16" viewBox="0 0 16 16"><rect x="0.5" y="0.5" width="15" height="15" rx="1" fill="#2f8ee0"/><rect x="3" y="1.5" width="10" height="6" fill="#f4f4f4"/><path d="M4 3.5H12M4 5.5H10" stroke="#9ab" stroke-width="0.8"/><rect x="4" y="10" width="8" height="6" fill="#eaeaea"/><rect x="6" y="11" width="2" height="4" fill="#555"/></svg>
<svg class="a" style="left:105px;top:6px;" width="16" height="16" viewBox="0 0 16 16"><rect x="0.5" y="0.5" width="15" height="15" rx="1" fill="#2f8ee0"/><rect x="3" y="1.5" width="10" height="6" fill="#f4f4f4"/><path d="M4 3.5H12M4 5.5H10" stroke="#9ab" stroke-width="0.8"/><rect x="4" y="10" width="8" height="6" fill="#eaeaea"/><rect x="6" y="11" width="2" height="4" fill="#555"/></svg>
<svg class="a" style="left:127px;top:6px;" width="17" height="16" viewBox="0 0 17 16"><rect x="4" y="0.5" width="12" height="11" fill="#6a6a6a"/><rect x="0.5" y="4" width="12" height="12" fill="#7c7c7c"/><rect x="2.5" y="5" width="8" height="4" fill="#a0a0a0"/><rect x="3" y="11" width="6" height="5" fill="#a8a8a8"/><rect x="5" y="12" width="2" height="4" fill="#555"/></svg>
<svg class="a" style="left:149px;top:5px;" width="17" height="17" viewBox="0 0 17 17"><path d="M5 6H8.5A5.5 5.5 0 0 1 13 15.5" fill="none" stroke="#555" stroke-width="3"/><path d="M0.5 6L6 1V11Z" fill="#555"/></svg>
<svg class="a" style="left:171px;top:5px;" width="17" height="17" viewBox="0 0 17 17"><path d="M12 6H8.5A5.5 5.5 0 0 0 4 15.5" fill="none" stroke="#555" stroke-width="3"/><path d="M16.5 6L11 1V11Z" fill="#555"/></svg>
<svg class="a" style="left:194px;top:6px;" width="15" height="17" viewBox="0 0 15 17"><path d="M0.5 0.5H7L10 3.5V13H0.5Z" fill="#6a6a6a" stroke="#555" stroke-width="0.6"/><path d="M4.5 3.5H11L14.5 7V16.5H4.5Z" fill="#7c7c7c" stroke="#5a5a5a" stroke-width="0.6"/><path d="M6.5 9.5H12.5M6.5 11.5H12.5M6.5 13.5H12.5" stroke="#505050" stroke-width="1"/></svg>
<svg class="a" style="left:217px;top:9px;" width="12" height="11" viewBox="0 0 12 11"><path d="M1.5 1.5L10.5 9.5M10.5 1.5L1.5 9.5" stroke="#3c3c3c" stroke-width="2.6"/></svg>
<svg class="a" style="left:240px;top:6px;" width="11" height="15" viewBox="0 0 11 15"><path d="M0.5 0.5L10.5 9H6L8.5 14L6.5 14.8L4 9.8L0.5 13Z" fill="#d6d6d6" stroke="#9a9a9a" stroke-width="0.6"/></svg>
<div class="a" style="left:256px;top:1px;width:22px;height:26px;background:#3c3c3c;"></div>
<svg class="a" style="left:259px;top:6px;" width="17" height="17" viewBox="0 0 17 17"><path d="M8 12V2" stroke="#1a3cff" stroke-width="2"/><path d="M6.5 3L8 0.5L9.5 3Z" fill="#1a3cff"/><path d="M8 12H15" stroke="#e81010" stroke-width="2"/><path d="M14 10.5L16.5 12L14 13.5Z" fill="#e81010"/><path d="M8 12L2 16" stroke="#14c414" stroke-width="2.4"/><path d="M8 12L13 10" stroke="#1a3cff" stroke-width="1"/></svg>
<svg class="a" style="left:281px;top:6px;" width="17" height="17" viewBox="0 0 17 17"><path d="M8 12V2" stroke="#1a3cff" stroke-width="2"/><path d="M6.5 3L8 0.5L9.5 3Z" fill="#1a3cff"/><path d="M8 12H15" stroke="#e81010" stroke-width="2"/><path d="M14 10.5L16.5 12L14 13.5Z" fill="#e81010"/><path d="M8 12L2 16" stroke="#14c414" stroke-width="2.4"/></svg>
<svg class="a" style="left:303px;top:6px;" width="17" height="17" viewBox="0 0 17 17"><circle cx="8.5" cy="8.5" r="7.5" fill="none" stroke="#9a9a9a" stroke-width="1.2"/><circle cx="8.5" cy="8.5" r="4.8" fill="none" stroke="#14b014" stroke-width="1.2"/><path d="M8.5 3.7V13.3" stroke="#1a3cff" stroke-width="1.2"/><path d="M3.7 8.5H13.3" stroke="#d01010" stroke-width="1.2"/></svg>
<svg class="a" style="left:326px;top:6px;" width="17" height="17" viewBox="0 0 17 17"><path d="M8 12V2" stroke="#1a3cff" stroke-width="2"/><path d="M6.5 3L8 0.5L9.5 3Z" fill="#1a3cff"/><path d="M8 12H15" stroke="#e81010" stroke-width="2"/><path d="M14 10.5L16.5 12L14 13.5Z" fill="#e81010"/><path d="M8 12L2 16" stroke="#14c414" stroke-width="2.4"/><rect x="6" y="9" width="5" height="5" fill="#0d9a0d"/></svg>
<svg class="a" style="left:347px;top:6px;" width="17" height="17" viewBox="0 0 17 17"><path d="M8 12V2" stroke="#1a3cff" stroke-width="2"/><path d="M6.5 3L8 0.5L9.5 3Z" fill="#1a3cff"/><path d="M8 12H15" stroke="#e81010" stroke-width="2"/><path d="M14 10.5L16.5 12L14 13.5Z" fill="#e81010"/><path d="M8 12L2 16" stroke="#14c414" stroke-width="2.4"/><circle cx="8.5" cy="11.5" r="3.5" fill="#12a012"/></svg>
<svg class="a" style="left:372px;top:8px;" width="11" height="12" viewBox="0 0 11 12"><path d="M0.5 0.5L10.5 6L0.5 11.5Z" fill="#5ba55b"/></svg>
<svg class="a" style="left:394px;top:8px;" width="11" height="12" viewBox="0 0 11 12"><path d="M0.5 0.5L10.5 6L0.5 11.5Z" fill="#5ba55b"/></svg>
<svg class="a" style="left:416px;top:8px;" width="11" height="12" viewBox="0 0 11 12"><path d="M0.5 0.5L10.5 6L0.5 11.5Z" fill="#555555"/></svg>
<svg class="a" style="left:436px;top:6px;" width="16" height="16" viewBox="0 0 16 16"><path d="M2 1.5L8 7.5" stroke="#c0c0c0" stroke-width="1.2" stroke-linecap="round"/><path d="M8.8 8.8L14.3 14.2" stroke="#3a8ee6" stroke-width="2.6" stroke-linecap="round"/><path d="M1.8 14.2L9.8 6.2" stroke="#f2f2f2" stroke-width="3" stroke-linecap="round"/><circle cx="11.8" cy="4.2" r="3.4" fill="#f2f2f2"/><path d="M11.8 4.2L15.5 0.5" stroke="#0e0e0e" stroke-width="2.2"/><circle cx="2.2" cy="13.8" r="0.7" fill="#0e0e0e"/></svg>
<svg class="a" style="left:460px;top:9px;" width="7" height="9" viewBox="0 0 7 9"><rect x="0.5" y="1" width="6" height="1.5" fill="#fff"/><path d="M0 4.5H7L3.5 8Z" fill="#fff"/></svg>
<div class="a" style="left:4px;top:59px;width:235px;height:473px;box-sizing:border-box;border:1px solid #4a4a4a;"></div>
<div class="a" style="left:5px;top:60px;width:233px;height:19px;background:#0b0b0b;"></div>
<div class="a t" style="left:10.5px;top:63.5px;font-size:12px;line-height:12px;color:#9c9c9c;transform-origin:0 0;transform:scaleX(0.978);">Ресурсы</div>
<svg class="a" style="left:191px;top:67px;" width="8" height="5" viewBox="0 0 8 5"><path d="M0 0H8L4 4.5Z" fill="#8c8c8c"/></svg>
<svg class="a" style="left:207px;top:63px;" width="8" height="11" viewBox="0 0 8 11"><path d="M2 0.5H6M2.5 0.5V7M5.5 0.5V7M0.5 7H7.5M4 7V10.5" fill="none" stroke="#8c8c8c" stroke-width="1.2"/></svg>
<svg class="a" style="left:222px;top:64px;" width="10" height="10" viewBox="0 0 10 10"><path d="M1 1L9 9M9 1L1 9" stroke="#8c8c8c" stroke-width="1.8"/></svg>
<div class="a" style="left:5px;top:79px;width:233px;height:1px;background:#474747;"></div>
<div class="a" style="left:5px;top:80px;width:233px;height:23px;background:#333333;"></div>
<div class="a" style="left:5px;top:103px;width:233px;height:1px;background:#474747;"></div>
<svg class="a" style="left:8px;top:84px;" width="16" height="16" viewBox="0 0 16 16"><path d="M2 1.5L8 7.5" stroke="#c0c0c0" stroke-width="1.2" stroke-linecap="round"/><path d="M8.8 8.8L14.3 14.2" stroke="#3a8ee6" stroke-width="2.6" stroke-linecap="round"/><path d="M1.8 14.2L9.8 6.2" stroke="#f2f2f2" stroke-width="3" stroke-linecap="round"/><circle cx="11.8" cy="4.2" r="3.4" fill="#f2f2f2"/><path d="M11.8 4.2L15.5 0.5" stroke="#333333" stroke-width="2.2"/><circle cx="2.2" cy="13.8" r="0.7" fill="#333333"/></svg>
<svg class="a" style="left:28px;top:84px;" width="17" height="17" viewBox="0 0 17 17"><rect x="0.5" y="0.5" width="7" height="6.5" fill="#3cc83c"/><path d="M8.8 7L12.6 0.5L16.4 7Z" fill="#2aa0f0"/><circle cx="4" cy="12" r="3.7" fill="#e84a20"/><path d="M12.6 8L16.5 12L12.6 16L8.7 12Z" fill="#f5b030"/></svg>
<div class="a" style="left:49px;top:85px;width:1px;height:15px;background:#222;"></div>
<svg class="a" style="left:54px;top:84px;" width="17" height="16" viewBox="0 0 17 16"><path d="M0.5 0.5H8L11.5 4V15.5H0.5Z" fill="#a8a8a8" stroke="#989898" stroke-width="0.6"/><path d="M8 0.5V4H11.5" fill="#c8c8c8"/><path d="M6.5 14.5L15 6" stroke="#989898" stroke-width="3.2"/><path d="M6.5 14.5L15 6" stroke="#b8b8b8" stroke-width="1"/></svg>
<div class="a" style="left:75px;top:85px;width:1px;height:15px;background:#222;"></div>
<svg class="a" style="left:80px;top:84px;" width="17" height="17" viewBox="0 0 17 17"><path d="M0.5 1.5L4 0.5H9L12 3.5V15.5L4 16.5L0.5 15.5Z" fill="#9a9a9a"/><path d="M4 0.5V16.5" stroke="#888" stroke-width="0.8"/><path d="M12.5 8L13.8 10.8L16.5 11L14.5 13L15.2 16L12.5 14.5L9.8 16L10.5 13L8.5 11L11.2 10.8Z" fill="#a8a8a8" stroke="#8a8a8a" stroke-width="0.5"/></svg>
<svg class="a" style="left:100px;top:84px;" width="17" height="17" viewBox="0 0 17 17"><path d="M0.5 0.5H8L11.5 4V15.5H0.5Z" fill="#a8a8a8" stroke="#989898" stroke-width="0.6"/><path d="M8 0.5V4H11.5" fill="#c8c8c8"/><path d="M12.5 8L13.8 10.8L16.5 11L14.5 13L15.2 16L12.5 14.5L9.8 16L10.5 13L8.5 11L11.2 10.8Z" fill="#a0a0a0" stroke="#8a8a8a" stroke-width="0.5"/></svg>
<svg class="a" style="left:122px;top:86px;" width="12" height="12" viewBox="0 0 12 12"><path d="M1.5 1.5L10.5 10.5M10.5 1.5L1.5 10.5" stroke="#8c8c8c" stroke-width="2.8"/></svg>
<svg class="a" style="left:140px;top:86px;" width="17" height="13" viewBox="0 0 17 13"><rect x="0.5" y="0.5" width="16" height="12" fill="#6a6a6a" stroke="#a8a8a8" stroke-width="1.2"/><rect x="2" y="2" width="13" height="9" fill="#9c9c9c" stroke="#777" stroke-width="0.8"/><path d="M4.5 3.5V9.5M3.5 3.5H5.5M3.5 9.5H5.5" stroke="#444" stroke-width="0.8"/></svg>
<svg class="a" style="left:161px;top:83px;" width="14" height="17" viewBox="0 0 14 17"><path d="M2 0.5L8 10M11 0.5L6 10" stroke="#a0a0a0" stroke-width="1.2"/><circle cx="4.5" cy="13.5" r="2.3" fill="none" stroke="#a0a0a0" stroke-width="1.1"/><circle cx="10.5" cy="12" r="2.3" fill="none" stroke="#a0a0a0" stroke-width="1.1"/></svg>
<svg class="a" style="left:180px;top:84px;" width="16" height="17" viewBox="0 0 16 17"><path d="M0.5 0.5H7.5L10.5 3.5V13H0.5Z" fill="#9a9a9a" stroke="#8a8a8a" stroke-width="0.6"/><path d="M4.5 3.5H11L14.5 7V16.5H4.5Z" fill="#ababab" stroke="#8a8a8a" stroke-width="0.6"/><path d="M6.5 9.5H12.5M6.5 11.5H12.5M6.5 13.5H12.5" stroke="#808080" stroke-width="0.9"/></svg>
<svg class="a" style="left:199px;top:84px;" width="17" height="17" viewBox="0 0 17 17"><rect x="0.5" y="2" width="10" height="12" fill="#9a9a9a"/><rect x="3" y="0.5" width="5" height="3" fill="#b0b0b0"/><path d="M6.5 5.5H12.5L15.5 8.5V16.5H6.5Z" fill="#ababab" stroke="#8a8a8a" stroke-width="0.6"/><path d="M8.5 10.5H13.5M8.5 12.5H13.5M8.5 14.5H13.5" stroke="#808080" stroke-width="0.9"/></svg>
<div class="a" style="left:5px;top:104px;width:216px;height:239px;background:#262626;"></div>
<div class="a" style="left:221px;top:104px;width:17px;height:239px;background:#2e2e2e;"></div>
<div class="a" style="left:221px;top:120px;width:17px;height:105px;background:#3d3d3d;"></div>
<svg class="a" style="left:226px;top:109px;" width="8" height="6" viewBox="0 0 8 6"><path d="M0.5 5L4 1.5L7.5 5" fill="none" stroke="#8a8a8a" stroke-width="1.2"/></svg>
<svg class="a" style="left:226px;top:333px;" width="8" height="6" viewBox="0 0 8 6"><path d="M0.5 1L4 4.5L7.5 1" fill="none" stroke="#8a8a8a" stroke-width="1.2"/></svg>
<svg class="a" style="left:12px;top:108px;" width="8" height="8" viewBox="0 0 8 8"><rect x="0.5" y="0.5" width="7" height="7" fill="#353535" stroke="#404040"/><path d="M1.5 3.5H6.5" stroke="#d8d8d8" stroke-width="1"/></svg>
<svg class="a" style="left:26px;top:105px;" width="14" height="16" viewBox="0 0 14 16"><defs><linearGradient id="fg" x1="0" y1="0" x2="1" y2="1"><stop offset="0" stop-color="#ffe88a"/><stop offset="1" stop-color="#f2c94a"/></linearGradient></defs><path d="M0.5 0.5H11.5V10L13.5 11.5V15.5H0.5Z" fill="url(#fg)" stroke="#d7a72a"/><path d="M10.5 11.5L13.5 10.5V15.5H10.5Z" fill="#f6d765" stroke="#d7a72a" stroke-width="0.8"/></svg>
<div class="a t" style="left:46px;top:108px;font-size:11px;line-height:11px;color:#e8e8e8;transform-origin:0 0;transform:scaleX(0.975);">Базовые</div>
<svg class="a" style="left:31px;top:127px;" width="8" height="8" viewBox="0 0 8 8"><rect x="0.5" y="0.5" width="7" height="7" fill="#353535" stroke="#404040"/><path d="M1.5 3.5H6.5" stroke="#d8d8d8" stroke-width="1"/><path d="M3.5 1.5V6.5" stroke="#d8d8d8" stroke-width="1"/></svg>
<svg class="a" style="left:45px;top:123px;" width="14" height="16" viewBox="0 0 14 16"><defs><linearGradient id="fg" x1="0" y1="0" x2="1" y2="1"><stop offset="0" stop-color="#ffe88a"/><stop offset="1" stop-color="#f2c94a"/></linearGradient></defs><path d="M0.5 0.5H11.5V10L13.5 11.5V15.5H0.5Z" fill="url(#fg)" stroke="#d7a72a"/><path d="M10.5 11.5L13.5 10.5V15.5H10.5Z" fill="#f6d765" stroke="#d7a72a" stroke-width="0.8"/></svg>
<div class="a t" style="left:65.5px;top:126px;font-size:11px;line-height:11px;color:#e8e8e8;transform-origin:0 0;transform:scaleX(0.990);">Общие</div>
<svg class="a" style="left:31px;top:145px;" width="8" height="8" viewBox="0 0 8 8"><rect x="0.5" y="0.5" width="7" height="7" fill="#353535" stroke="#404040"/><path d="M1.5 3.5H6.5" stroke="#d8d8d8" stroke-width="1"/><path d="M3.5 1.5V6.5" stroke="#d8d8d8" stroke-width="1"/></svg>
<svg class="a" style="left:45px;top:141px;" width="14" height="16" viewBox="0 0 14 16"><defs><linearGradient id="fg" x1="0" y1="0" x2="1" y2="1"><stop offset="0" stop-color="#ffe88a"/><stop offset="1" stop-color="#f2c94a"/></linearGradient></defs><path d="M0.5 0.5H11.5V10L13.5 11.5V15.5H0.5Z" fill="url(#fg)" stroke="#d7a72a"/><path d="M10.5 11.5L13.5 10.5V15.5H10.5Z" fill="#f6d765" stroke="#d7a72a" stroke-width="0.8"/></svg>
<div class="a t" style="left:65.5px;top:144px;font-size:11px;line-height:11px;color:#e8e8e8;transform-origin:0 0;transform:scaleX(0.990);">Скриптование</div>
<svg class="a" style="left:31px;top:163px;" width="8" height="8" viewBox="0 0 8 8"><rect x="0.5" y="0.5" width="7" height="7" fill="#353535" stroke="#404040"/><path d="M1.5 3.5H6.5" stroke="#d8d8d8" stroke-width="1"/><path d="M3.5 1.5V6.5" stroke="#d8d8d8" stroke-width="1"/></svg>
<svg class="a" style="left:45px;top:159px;" width="14" height="16" viewBox="0 0 14 16"><defs><linearGradient id="fg" x1="0" y1="0" x2="1" y2="1"><stop offset="0" stop-color="#ffe88a"/><stop offset="1" stop-color="#f2c94a"/></linearGradient></defs><path d="M0.5 0.5H11.5V10L13.5 11.5V15.5H0.5Z" fill="url(#fg)" stroke="#d7a72a"/><path d="M10.5 11.5L13.5 10.5V15.5H10.5Z" fill="#f6d765" stroke="#d7a72a" stroke-width="0.8"/></svg>
<div class="a t" style="left:65.5px;top:162px;font-size:11px;line-height:11px;color:#e8e8e8;transform-origin:0 0;transform:scaleX(0.990);">Пользовательский интерфейс</div>
<svg class="a" style="left:31px;top:181px;" width="8" height="8" viewBox="0 0 8 8"><rect x="0.5" y="0.5" width="7" height="7" fill="#353535" stroke="#404040"/><path d="M1.5 3.5H6.5" stroke="#d8d8d8" stroke-width="1"/><path d="M3.5 1.5V6.5" stroke="#d8d8d8" stroke-width="1"/></svg>
<svg class="a" style="left:45px;top:177px;" width="14" height="16" viewBox="0 0 14 16"><defs><linearGradient id="fg" x1="0" y1="0" x2="1" y2="1"><stop offset="0" stop-color="#ffe88a"/><stop offset="1" stop-color="#f2c94a"/></linearGradient></defs><path d="M0.5 0.5H11.5V10L13.5 11.5V15.5H0.5Z" fill="url(#fg)" stroke="#d7a72a"/><path d="M10.5 11.5L13.5 10.5V15.5H10.5Z" fill="#f6d765" stroke="#d7a72a" stroke-width="0.8"/></svg>
<div class="a t" style="left:65.5px;top:180px;font-size:11px;line-height:11px;color:#e8e8e8;transform-origin:0 0;transform:scaleX(0.990);">Общее сцены</div>
<svg class="a" style="left:31px;top:199px;" width="8" height="8" viewBox="0 0 8 8"><rect x="0.5" y="0.5" width="7" height="7" fill="#353535" stroke="#404040"/><path d="M1.5 3.5H6.5" stroke="#d8d8d8" stroke-width="1"/><path d="M3.5 1.5V6.5" stroke="#d8d8d8" stroke-width="1"/></svg>
<svg class="a" style="left:45px;top:195px;" width="14" height="16" viewBox="0 0 14 16"><defs><linearGradient id="fg" x1="0" y1="0" x2="1" y2="1"><stop offset="0" stop-color="#ffe88a"/><stop offset="1" stop-color="#f2c94a"/></linearGradient></defs><path d="M0.5 0.5H11.5V10L13.5 11.5V15.5H0.5Z" fill="url(#fg)" stroke="#d7a72a"/><path d="M10.5 11.5L13.5 10.5V15.5H10.5Z" fill="#f6d765" stroke="#d7a72a" stroke-width="0.8"/></svg>
<div class="a t" style="left:65.5px;top:198px;font-size:11px;line-height:11px;color:#e8e8e8;transform-origin:0 0;transform:scaleX(0.990);">Объекты сцены</div>
<svg class="a" style="left:31px;top:217px;" width="8" height="8" viewBox="0 0 8 8"><rect x="0.5" y="0.5" width="7" height="7" fill="#353535" stroke="#404040"/><path d="M1.5 3.5H6.5" stroke="#d8d8d8" stroke-width="1"/><path d="M3.5 1.5V6.5" stroke="#d8d8d8" stroke-width="1"/></svg>
<svg class="a" style="left:45px;top:213px;" width="14" height="16" viewBox="0 0 14 16"><defs><linearGradient id="fg" x1="0" y1="0" x2="1" y2="1"><stop offset="0" stop-color="#ffe88a"/><stop offset="1" stop-color="#f2c94a"/></linearGradient></defs><path d="M0.5 0.5H11.5V10L13.5 11.5V15.5H0.5Z" fill="url(#fg)" stroke="#d7a72a"/><path d="M10.5 11.5L13.5 10.5V15.5H10.5Z" fill="#f6d765" stroke="#d7a72a" stroke-width="0.8"/></svg>
<div class="a t" style="left:65.5px;top:216px;font-size:11px;line-height:11px;color:#e8e8e8;transform-origin:0 0;transform:scaleX(0.990);">Примитивы</div>
<svg class="a" style="left:31px;top:235px;" width="8" height="8" viewBox="0 0 8 8"><rect x="0.5" y="0.5" width="7" height="7" fill="#353535" stroke="#404040"/><path d="M1.5 3.5H6.5" stroke="#d8d8d8" stroke-width="1"/><path d="M3.5 1.5V6.5" stroke="#d8d8d8" stroke-width="1"/></svg>
<svg class="a" style="left:45px;top:231px;" width="14" height="16" viewBox="0 0 14 16"><defs><linearGradient id="fg" x1="0" y1="0" x2="1" y2="1"><stop offset="0" stop-color="#ffe88a"/><stop offset="1" stop-color="#f2c94a"/></linearGradient></defs><path d="M0.5 0.5H11.5V10L13.5 11.5V15.5H0.5Z" fill="url(#fg)" stroke="#d7a72a"/><path d="M10.5 11.5L13.5 10.5V15.5H10.5Z" fill="#f6d765" stroke="#d7a72a" stroke-width="0.8"/></svg>
<div class="a t" style="left:65.5px;top:234px;font-size:11px;line-height:11px;color:#e8e8e8;transform-origin:0 0;transform:scaleX(0.990);">Физика</div>
<svg class="a" style="left:31px;top:253px;" width="8" height="8" viewBox="0 0 8 8"><rect x="0.5" y="0.5" width="7" height="7" fill="#353535" stroke="#404040"/><path d="M1.5 3.5H6.5" stroke="#d8d8d8" stroke-width="1"/><path d="M3.5 1.5V6.5" stroke="#d8d8d8" stroke-width="1"/></svg>
<svg class="a" style="left:45px;top:249px;" width="14" height="16" viewBox="0 0 14 16"><defs><linearGradient id="fg" x1="0" y1="0" x2="1" y2="1"><stop offset="0" stop-color="#ffe88a"/><stop offset="1" stop-color="#f2c94a"/></linearGradient></defs><path d="M0.5 0.5H11.5V10L13.5 11.5V15.5H0.5Z" fill="url(#fg)" stroke="#d7a72a"/><path d="M10.5 11.5L13.5 10.5V15.5H10.5Z" fill="#f6d765" stroke="#d7a72a" stroke-width="0.8"/></svg>
<div class="a t" style="left:65.5px;top:252px;font-size:11px;line-height:11px;color:#e8e8e8;transform-origin:0 0;transform:scaleX(0.990);">Частицы</div>
<svg class="a" style="left:31px;top:271px;" width="8" height="8" viewBox="0 0 8 8"><rect x="0.5" y="0.5" width="7" height="7" fill="#353535" stroke="#404040"/><path d="M1.5 3.5H6.5" stroke="#d8d8d8" stroke-width="1"/><path d="M3.5 1.5V6.5" stroke="#d8d8d8" stroke-width="1"/></svg>
<svg class="a" style="left:45px;top:267px;" width="14" height="16" viewBox="0 0 14 16"><defs><linearGradient id="fg" x1="0" y1="0" x2="1" y2="1"><stop offset="0" stop-color="#ffe88a"/><stop offset="1" stop-color="#f2c94a"/></linearGradient></defs><path d="M0.5 0.5H11.5V10L13.5 11.5V15.5H0.5Z" fill="url(#fg)" stroke="#d7a72a"/><path d="M10.5 11.5L13.5 10.5V15.5H10.5Z" fill="#f6d765" stroke="#d7a72a" stroke-width="0.8"/></svg>
<div class="a t" style="left:65.5px;top:270px;font-size:11px;line-height:11px;color:#e8e8e8;transform-origin:0 0;transform:scaleX(0.990);">Экранные эффекты</div>
<svg class="a" style="left:31px;top:289px;" width="8" height="8" viewBox="0 0 8 8"><rect x="0.5" y="0.5" width="7" height="7" fill="#353535" stroke="#404040"/><path d="M1.5 3.5H6.5" stroke="#d8d8d8" stroke-width="1"/><path d="M3.5 1.5V6.5" stroke="#d8d8d8" stroke-width="1"/></svg>
<svg class="a" style="left:45px;top:285px;" width="14" height="16" viewBox="0 0 14 16"><defs><linearGradient id="fg" x1="0" y1="0" x2="1" y2="1"><stop offset="0" stop-color="#ffe88a"/><stop offset="1" stop-color="#f2c94a"/></linearGradient></defs><path d="M0.5 0.5H11.5V10L13.5 11.5V15.5H0.5Z" fill="url(#fg)" stroke="#d7a72a"/><path d="M10.5 11.5L13.5 10.5V15.5H10.5Z" fill="#f6d765" stroke="#d7a72a" stroke-width="0.8"/></svg>
<div class="a t" style="left:65.5px;top:288px;font-size:11px;line-height:11px;color:#e8e8e8;transform-origin:0 0;transform:scaleX(0.990);">Игровой фреймворк</div>
<svg class="a" style="left:31px;top:307px;" width="8" height="8" viewBox="0 0 8 8"><rect x="0.5" y="0.5" width="7" height="7" fill="#353535" stroke="#404040"/><path d="M1.5 3.5H6.5" stroke="#d8d8d8" stroke-width="1"/><path d="M3.5 1.5V6.5" stroke="#d8d8d8" stroke-width="1"/></svg>
<svg class="a" style="left:45px;top:303px;" width="14" height="16" viewBox="0 0 14 16"><defs><linearGradient id="fg" x1="0" y1="0" x2="1" y2="1"><stop offset="0" stop-color="#ffe88a"/><stop offset="1" stop-color="#f2c94a"/></linearGradient></defs><path d="M0.5 0.5H11.5V10L13.5 11.5V15.5H0.5Z" fill="url(#fg)" stroke="#d7a72a"/><path d="M10.5 11.5L13.5 10.5V15.5H10.5Z" fill="#f6d765" stroke="#d7a72a" stroke-width="0.8"/></svg>
<div class="a t" style="left:65.5px;top:306px;font-size:11px;line-height:11px;color:#e8e8e8;transform-origin:0 0;transform:scaleX(0.990);">3D</div>
<svg class="a" style="left:31px;top:325px;" width="8" height="8" viewBox="0 0 8 8"><rect x="0.5" y="0.5" width="7" height="7" fill="#353535" stroke="#404040"/><path d="M1.5 3.5H6.5" stroke="#d8d8d8" stroke-width="1"/><path d="M3.5 1.5V6.5" stroke="#d8d8d8" stroke-width="1"/></svg>
<svg class="a" style="left:45px;top:321px;" width="14" height="16" viewBox="0 0 14 16"><defs><linearGradient id="fg" x1="0" y1="0" x2="1" y2="1"><stop offset="0" stop-color="#ffe88a"/><stop offset="1" stop-color="#f2c94a"/></linearGradient></defs><path d="M0.5 0.5H11.5V10L13.5 11.5V15.5H0.5Z" fill="url(#fg)" stroke="#d7a72a"/><path d="M10.5 11.5L13.5 10.5V15.5H10.5Z" fill="#f6d765" stroke="#d7a72a" stroke-width="0.8"/></svg>
<div class="a t" style="left:65.5px;top:324px;font-size:11px;line-height:11px;color:#e8e8e8;transform-origin:0 0;transform:scaleX(0.990);">2D</div>
<svg class="a" style="left:26px;top:339px;" width="14" height="4" viewBox="0 0 14 4"><rect x="0.5" y="0.5" width="11" height="4" fill="#f6d46a" stroke="#d7a72a"/></svg>
<div class="a" style="left:5px;top:343px;width:233px;height:16px;background:#2e2e2e;"></div>
<div class="a" style="left:21px;top:343px;width:151px;height:16px;background:#3d3d3d;"></div>
<svg class="a" style="left:11px;top:347px;" width="6" height="8" viewBox="0 0 6 8"><path d="M5 0.5L1.5 4L5 7.5" fill="none" stroke="#8a8a8a" stroke-width="1.2"/></svg>
<svg class="a" style="left:210px;top:347px;" width="6" height="8" viewBox="0 0 6 8"><path d="M1 0.5L4.5 4L1 7.5" fill="none" stroke="#8a8a8a" stroke-width="1.2"/></svg>
<div class="a" style="left:5px;top:359px;width:233px;height:5px;background:#333333;"></div>
<div class="a" style="left:5px;top:364px;width:233px;height:1px;background:#474747;"></div>
<div class="a" style="left:5px;top:365px;width:233px;height:23px;background:#333333;"></div>
<svg class="a" style="left:9px;top:370px;" width="14" height="15" viewBox="0 0 14 15"><path d="M7 0.5L13.5 7H9.5V14.5H4.5V7H0.5Z" fill="#8a8a8a"/></svg>
<div class="a t" style="left:30.5px;top:370.5px;font-size:11px;line-height:11px;color:#e8e8e8;transform-origin:0 0;transform:scaleX(0.979);">Корень</div>
<svg class="a" style="left:77px;top:375px;" width="4" height="6" viewBox="0 0 4 6"><path d="M0 0L3.5 3L0 6Z" fill="#777"/></svg>
<div class="a" style="left:5px;top:388px;width:233px;height:1px;background:#474747;"></div>
<div class="a" style="left:5px;top:389px;width:215px;height:142px;background:#262626;"></div>
<div class="a" style="left:220px;top:389px;width:18px;height:142px;background:#2e2e2e;"></div>
<div class="a" style="left:221px;top:405px;width:17px;height:71px;background:#3d3d3d;"></div>
<svg class="a" style="left:225px;top:394px;" width="8" height="6" viewBox="0 0 8 6"><path d="M0.5 5L4 1.5L7.5 5" fill="none" stroke="#8a8a8a" stroke-width="1.2"/></svg>
<svg class="a" style="left:225px;top:522px;" width="8" height="6" viewBox="0 0 8 6"><path d="M0.5 1L4 4.5L7.5 1" fill="none" stroke="#8a8a8a" stroke-width="1.2"/></svg>
<svg class="a" style="left:12px;top:395px;" width="19" height="22" viewBox="0 0 19 22"><defs><linearGradient id="fgb" x1="0" y1="0" x2="1" y2="0.6"><stop offset="0" stop-color="#fde07a"/><stop offset="1" stop-color="#f3cd4e"/></linearGradient></defs><path d="M0.5 0.5H16.5V14.5L18.5 16V21.5H0.5Z" fill="url(#fgb)" stroke="#e0b040"/><path d="M14 21.5V16.5L15.8 14L18.5 16V21.5Z" fill="#f8d868" stroke="#d9a63a" stroke-width="0.8"/></svg>
<div class="a t" style="left:37px;top:394px;font-size:11px;line-height:11px;color:#e8e8e8;transform-origin:0 0;transform:scaleX(0.990);">Базовые</div>
<svg class="a" style="left:12px;top:429px;" width="19" height="22" viewBox="0 0 19 22"><defs><linearGradient id="fgb" x1="0" y1="0" x2="1" y2="0.6"><stop offset="0" stop-color="#fde07a"/><stop offset="1" stop-color="#f3cd4e"/></linearGradient></defs><path d="M0.5 0.5H16.5V14.5L18.5 16V21.5H0.5Z" fill="url(#fgb)" stroke="#e0b040"/><path d="M14 21.5V16.5L15.8 14L18.5 16V21.5Z" fill="#f8d868" stroke="#d9a63a" stroke-width="0.8"/></svg>
<div class="a t" style="left:37px;top:428px;font-size:11px;line-height:11px;color:#e8e8e8;transform-origin:0 0;transform:scaleX(0.990);">Дополнения</div>
<svg class="a" style="left:12px;top:463px;" width="19" height="22" viewBox="0 0 19 22"><defs><linearGradient id="fgb" x1="0" y1="0" x2="1" y2="0.6"><stop offset="0" stop-color="#fde07a"/><stop offset="1" stop-color="#f3cd4e"/></linearGradient></defs><path d="M0.5 0.5H16.5V14.5L18.5 16V21.5H0.5Z" fill="url(#fgb)" stroke="#e0b040"/><path d="M14 21.5V16.5L15.8 14L18.5 16V21.5Z" fill="#f8d868" stroke="#d9a63a" stroke-width="0.8"/></svg>
<div class="a t" style="left:37px;top:462px;font-size:11px;line-height:11px;color:#e8e8e8;transform-origin:0 0;transform:scaleX(0.990);">Избранное</div>
<svg class="a" style="left:12px;top:497px;" width="19" height="22" viewBox="0 0 19 22"><defs><linearGradient id="fgb" x1="0" y1="0" x2="1" y2="0.6"><stop offset="0" stop-color="#fde07a"/><stop offset="1" stop-color="#f3cd4e"/></linearGradient></defs><path d="M0.5 0.5H16.5V14.5L18.5 16V21.5H0.5Z" fill="url(#fgb)" stroke="#e0b040"/><path d="M14 21.5V16.5L15.8 14L18.5 16V21.5Z" fill="#f8d868" stroke="#d9a63a" stroke-width="0.8"/></svg>
<div class="a t" style="left:37px;top:496px;font-size:11px;line-height:11px;color:#e8e8e8;transform-origin:0 0;transform:scaleX(0.990);">Все типы</div>
<svg class="a" style="left:12px;top:530px;" width="19" height="1" viewBox="0 0 19 1"><rect width="19" height="1" fill="#a88a3a"/></svg>
<div class="a" style="left:5px;top:531px;width:233px;height:1px;background:#474747;"></div>
<div class="a" style="left:5px;top:532px;width:84px;height:21px;background:#474747;"></div>
<div class="a t" style="left:12.5px;top:534px;font-size:12px;line-height:12px;color:#e8e8e8;transform-origin:0 0;transform:scaleX(0.976);">Ресурсы</div>
<svg class="a" style="left:67px;top:536px;" width="10" height="10" viewBox="0 0 10 10"><path d="M1 1L9 9M9 1L1 9" stroke="#f4f4f4" stroke-width="1.9"/></svg>
<div class="a t" style="left:92.5px;top:534px;font-size:12px;line-height:12px;color:#e8e8e8;transform-origin:0 0;transform:scaleX(1.011);">Магазины</div>
<svg class="a" style="left:157px;top:536px;" width="10" height="10" viewBox="0 0 10 10"><path d="M1 1L9 9M9 1L1 9" stroke="#f4f4f4" stroke-width="1.9"/></svg>
<div class="a" style="left:4px;top:559px;width:235px;height:142px;background:#363636;box-sizing:border-box;border:1px solid #4a4a4a;"></div>
<div class="a" style="left:5px;top:560px;width:233px;height:19px;background:#0b0b0b;"></div>
<div class="a t" style="left:10.5px;top:564px;font-size:12px;line-height:12px;color:#9c9c9c;transform-origin:0 0;transform:scaleX(1.007);">Предпросмотр</div>
<svg class="a" style="left:191px;top:567px;" width="8" height="5" viewBox="0 0 8 5"><path d="M0 0H8L4 4.5Z" fill="#8c8c8c"/></svg>
<svg class="a" style="left:207px;top:563px;" width="8" height="11" viewBox="0 0 8 11"><path d="M2 0.5H6M2.5 0.5V7M5.5 0.5V7M0.5 7H7.5M4 7V10.5" fill="none" stroke="#8c8c8c" stroke-width="1.2"/></svg>
<svg class="a" style="left:222px;top:564px;" width="10" height="10" viewBox="0 0 10 10"><path d="M1 1L9 9M9 1L1 9" stroke="#8c8c8c" stroke-width="1.8"/></svg>
<div class="a" style="left:5px;top:579px;width:233px;height:1px;background:#474747;"></div>
<div class="a t" style="left:12px;top:708px;font-size:12px;line-height:12px;color:#e8e8e8;transform-origin:0 0;transform:scaleX(1.030);">Логи</div>
<div class="a t" style="left:49.5px;top:708px;font-size:12px;line-height:12px;color:#e8e8e8;transform-origin:0 0;transform:scaleX(0.976);">Вывод</div>
<div class="a t" style="left:94.5px;top:708px;font-size:12px;line-height:12px;color:#e8e8e8;transform-origin:0 0;transform:scaleX(0.942);">Отладка</div>
<div class="a t" style="left:251.5px;top:66px;font-size:12px;line-height:12px;color:#e8e8e8;transform-origin:0 0;transform:scaleX(0.954);">Стартовая страница</div>
<svg class="a" style="left:373px;top:67px;" width="10" height="10" viewBox="0 0 10 10"><path d="M1 1L9 9M9 1L1 9" stroke="#f4f4f4" stroke-width="1.9"/></svg>
<div class="a" style="left:393px;top:60px;width:199px;height:22px;background:#464646;"></div>
<div class="a t" style="left:400px;top:66px;font-size:12px;line-height:12px;color:#e8e8e8;transform-origin:0 0;">Physics rotational motor.scene</div>
<svg class="a" style="left:574px;top:67px;" width="10" height="10" viewBox="0 0 10 10"><path d="M1 1L9 9M9 1L1 9" stroke="#f4f4f4" stroke-width="1.9"/></svg>
<svg class="a" style="left:801px;top:66px;" width="10" height="9" viewBox="0 0 10 9"><rect x="0.5" y="0" width="9" height="1.6" fill="#8a8a8a"/><path d="M0 3.5H10L5 8.5Z" fill="#8a8a8a"/></svg>
<div class="a" style="left:825px;top:59px;width:195px;height:211px;box-sizing:border-box;border:1px solid #4a4a4a;"></div>
<div class="a" style="left:826px;top:60px;width:193px;height:19px;background:#0b0b0b;"></div>
<div class="a t" style="left:832px;top:63.5px;font-size:12px;line-height:12px;color:#9c9c9c;transform-origin:0 0;transform:scaleX(0.956);">Объекты</div>
<svg class="a" style="left:972px;top:67px;" width="8" height="5" viewBox="0 0 8 5"><path d="M0 0H8L4 4.5Z" fill="#8c8c8c"/></svg>
<svg class="a" style="left:988px;top:63px;" width="8" height="11" viewBox="0 0 8 11"><path d="M2 0.5H6M2.5 0.5V7M5.5 0.5V7M0.5 7H7.5M4 7V10.5" fill="none" stroke="#8c8c8c" stroke-width="1.2"/></svg>
<svg class="a" style="left:1003px;top:64px;" width="10" height="10" viewBox="0 0 10 10"><path d="M1 1L9 9M9 1L1 9" stroke="#8c8c8c" stroke-width="1.8"/></svg>
<div class="a" style="left:826px;top:79px;width:193px;height:1px;background:#474747;"></div>
<div class="a" style="left:826px;top:80px;width:193px;height:23px;background:#333333;"></div>
<div class="a" style="left:826px;top:103px;width:193px;height:1px;background:#474747;"></div>
<svg class="a" style="left:829px;top:84px;" width="16" height="16" viewBox="0 0 16 16"><path d="M2 1.5L8 7.5" stroke="#c0c0c0" stroke-width="1.2" stroke-linecap="round"/><path d="M8.8 8.8L14.3 14.2" stroke="#3a8ee6" stroke-width="2.6" stroke-linecap="round"/><path d="M1.8 14.2L9.8 6.2" stroke="#f2f2f2" stroke-width="3" stroke-linecap="round"/><circle cx="11.8" cy="4.2" r="3.4" fill="#f2f2f2"/><path d="M11.8 4.2L15.5 0.5" stroke="#333333" stroke-width="2.2"/><circle cx="2.2" cy="13.8" r="0.7" fill="#333333"/></svg>
<svg class="a" style="left:849px;top:84px;" width="16" height="16" viewBox="0 0 16 16"><path d="M5 5V12H10" fill="none" stroke="#9a9a9a" stroke-width="1"/><path d="M0.5 4L5 0.5L9.5 4L5 7.5Z" fill="#c8b040"/><path d="M9 7L12 5L15 7L12 9.5Z" fill="#30b0e0"/><path d="M9 12.5L12 10.5L15 12.5L12 15Z" fill="#e070c0"/></svg>
<div class="a" style="left:870px;top:85px;width:1px;height:15px;background:#222;"></div>
<svg class="a" style="left:875px;top:84px;" width="17" height="16" viewBox="0 0 17 16"><path d="M0.5 0.5H8L11.5 4V15.5H0.5Z" fill="#f0f0f0"/><path d="M7 14L15 6" stroke="#f0a030" stroke-width="3"/><path d="M13.5 4.5L16 7" stroke="#e070c0" stroke-width="3"/></svg>
<svg class="a" style="left:896px;top:84px;" width="16" height="16" viewBox="0 0 16 16"><rect x="3" y="0.5" width="12.5" height="11" rx="1" fill="#4a90e0"/><rect x="0.5" y="3.5" width="12.5" height="11.5" rx="1" fill="#5aa0f0"/><rect x="1.5" y="6.5" width="10.5" height="7.5" fill="#f4f4f4"/></svg>
<div class="a" style="left:916px;top:85px;width:1px;height:15px;background:#222;"></div>
<svg class="a" style="left:921px;top:84px;" width="17" height="17" viewBox="0 0 17 17"><path d="M0.5 0.5H8.5L12.5 4.5V15.5H0.5Z" fill="#ececec" stroke="#c8c8c8" stroke-width="0.6"/><path d="M8.5 0.5V4.5H12.5" fill="#d0d0d0"/><path d="M12.3 7.5L13.8 10.6L17 10.9L14.6 13L15.3 16.3L12.3 14.6L9.3 16.3L10 13L7.6 10.9L10.8 10.6Z" fill="#f5b93a" stroke="#d88a10" stroke-width="0.5"/></svg>
<svg class="a" style="left:943px;top:86px;" width="13" height="13" viewBox="0 0 13 13"><path d="M1.5 1.5L11.5 11.5M11.5 1.5L1.5 11.5" stroke="#7a7a7a" stroke-width="3"/></svg>
<svg class="a" style="left:961px;top:86px;" width="17" height="13" viewBox="0 0 17 13"><rect x="0.5" y="0.5" width="16" height="12" fill="#f4f4f4"/><rect x="2" y="2" width="13" height="9" fill="#333"/><rect x="3" y="3" width="11" height="7" fill="#eee"/><path d="M4.5 3.5V9.5M3.5 3.5H5.5M3.5 9.5H5.5" stroke="#333" stroke-width="0.8"/></svg>
<svg class="a" style="left:982px;top:84px;" width="16" height="17" viewBox="0 0 16 17"><path d="M0.5 0.5H7.5L10.5 3.5V13H0.5Z" fill="#9a9a9a" stroke="#8a8a8a" stroke-width="0.6"/><path d="M4.5 3.5H11L14.5 7V16.5H4.5Z" fill="#ababab" stroke="#8a8a8a" stroke-width="0.6"/><path d="M6.5 9.5H12.5M6.5 11.5H12.5M6.5 13.5H12.5" stroke="#808080" stroke-width="0.9"/></svg>
<div class="a" style="left:826px;top:104px;width:175px;height:148px;background:#262626;"></div>
<div class="a" style="left:826px;top:104px;width:175px;height:18px;background:#3a3a3a;"></div>
<div class="a" style="left:1001px;top:104px;width:18px;height:148px;background:#2e2e2e;"></div>
<div class="a" style="left:1001px;top:121px;width:17px;height:51px;background:#3d3d3d;"></div>
<svg class="a" style="left:1006px;top:109px;" width="8" height="6" viewBox="0 0 8 6"><path d="M0.5 5L4 1.5L7.5 5" fill="none" stroke="#8a8a8a" stroke-width="1.2"/></svg>
<svg class="a" style="left:1006px;top:243px;" width="8" height="6" viewBox="0 0 8 6"><path d="M0.5 1L4 4.5L7.5 1" fill="none" stroke="#8a8a8a" stroke-width="1.2"/></svg>
<svg class="a" style="left:833px;top:108px;" width="8" height="8" viewBox="0 0 8 8"><rect x="0.5" y="0.5" width="7" height="7" fill="#353535" stroke="#404040"/><path d="M1.5 3.5H6.5" stroke="#d8d8d8" stroke-width="1"/></svg>
<svg class="a" style="left:847px;top:106px;" width="15" height="15" viewBox="0 0 15 15"><rect x="0.5" y="0.5" width="14" height="14" fill="#7ccff0"/><path d="M0.5 5H14.5M0.5 10H14.5M5 0.5V14.5M10 0.5V14.5" stroke="#5ab0d8" stroke-width="0.6"/><rect x="0.5" y="6" width="3" height="8.5" fill="#e8d88a"/><path d="M6 9L7.5 5L9 9Z" fill="#111"/><path d="M7.5 9V14" stroke="#c04040" stroke-width="0.8"/><rect x="10" y="1" width="3" height="2.5" fill="#e02020"/></svg>
<div class="a" style="left:867.5px;top:106px;width:133.5px;height:17px;overflow:hidden">
<div class="a t" style="left:0px;top:2px;font-size:11px;line-height:11px;color:#e8e8e8;transform-origin:0 0;transform:scaleX(0.976);">'Корень' - Scene</div>
</div>
<svg class="a" style="left:865px;top:125px;" width="16" height="12" viewBox="0 0 16 12"><rect x="0.5" y="2" width="11" height="9" rx="1" fill="#8a8a8a"/><rect x="3" y="4" width="7" height="5" fill="#2aa0f0"/><path d="M11.5 6.5L15.5 3V11L11.5 7.5Z" fill="#8a8a8a"/><rect x="2" y="0.5" width="8" height="2" fill="#a0a0a0"/></svg>
<div class="a" style="left:887px;top:124px;width:114px;height:17px;overflow:hidden">
<div class="a t" style="left:0px;top:2px;font-size:11px;line-height:11px;color:#e8e8e8;transform-origin:0 0;transform:scaleX(0.975);">Camera Editor - Camera</div>
</div>
<svg class="a" style="left:865px;top:143px;" width="16" height="12" viewBox="0 0 16 12"><rect x="0.5" y="2" width="11" height="9" rx="1" fill="#8a8a8a"/><rect x="3" y="4" width="7" height="5" fill="#2aa0f0"/><path d="M11.5 6.5L15.5 3V11L11.5 7.5Z" fill="#8a8a8a"/><rect x="2" y="0.5" width="8" height="2" fill="#a0a0a0"/></svg>
<div class="a" style="left:887px;top:142px;width:114px;height:17px;overflow:hidden">
<div class="a t" style="left:0px;top:2px;font-size:11px;line-height:11px;color:#e8e8e8;transform-origin:0 0;transform:scaleX(0.975);">Camera Editor 2D - Camera</div>
</div>
<svg class="a" style="left:866px;top:158px;" width="13" height="16" viewBox="0 0 13 16"><circle cx="6.5" cy="6" r="5.7" fill="#f3cf70"/><path d="M4 6L5 8L6.5 6.5L8 8L9 6" fill="none" stroke="#c09030" stroke-width="0.7"/><rect x="4" y="11.5" width="5" height="3.5" rx="0.8" fill="#9aaabb"/></svg>
<div class="a" style="left:887px;top:160px;width:114px;height:17px;overflow:hidden">
<div class="a t" style="left:0px;top:2px;font-size:11px;line-height:11px;color:#e8e8e8;transform-origin:0 0;transform:scaleX(0.975);">Ambient Light - Light</div>
</div>
<svg class="a" style="left:866px;top:176px;" width="13" height="16" viewBox="0 0 13 16"><circle cx="6.5" cy="6" r="5.7" fill="#f3cf70"/><path d="M4 6L5 8L6.5 6.5L8 8L9 6" fill="none" stroke="#c09030" stroke-width="0.7"/><rect x="4" y="11.5" width="5" height="3.5" rx="0.8" fill="#9aaabb"/></svg>
<div class="a" style="left:887px;top:178px;width:114px;height:17px;overflow:hidden">
<div class="a t" style="left:0px;top:2px;font-size:11px;line-height:11px;color:#e8e8e8;transform-origin:0 0;transform:scaleX(0.975);">Directional Light - Light</div>
</div>
<svg class="a" style="left:852px;top:198px;" width="8" height="8" viewBox="0 0 8 8"><rect x="0.5" y="0.5" width="7" height="7" fill="#353535" stroke="#404040"/><path d="M1.5 3.5H6.5" stroke="#d8d8d8" stroke-width="1"/><path d="M3.5 1.5V6.5" stroke="#d8d8d8" stroke-width="1"/></svg>
<svg class="a" style="left:865px;top:195px;" width="16" height="15" viewBox="0 0 16 15"><defs><linearGradient id="rg" x1="0" x2="1"><stop offset="0" stop-color="#30e060"/><stop offset="0.35" stop-color="#f0f030"/><stop offset="0.7" stop-color="#f04040"/><stop offset="1" stop-color="#c040f0"/></linearGradient></defs><rect x="0.5" y="0.5" width="15" height="14" fill="#2a8ee0"/><rect x="2" y="4" width="12" height="9" fill="url(#rg)"/><rect x="2" y="2" width="12" height="1.5" fill="#e8f4ff"/></svg>
<div class="a" style="left:887px;top:196px;width:114px;height:17px;overflow:hidden">
<div class="a t" style="left:0px;top:2px;font-size:11px;line-height:11px;color:#e8e8e8;transform-origin:0 0;transform:scaleX(0.975);">Rendering Pipeline - Renderer</div>
</div>
<svg class="a" style="left:865px;top:213px;" width="16" height="14" viewBox="0 0 16 14"><path d="M3 3H13Q16 3 16 8V12Q14.5 13.5 11.5 10H4.5Q1.5 13.5 0 12V8Q0 3 3 3Z" fill="#ececec"/><path d="M3 6.5H6M4.5 5V8" stroke="#30a030" stroke-width="1.2"/><circle cx="11" cy="6.5" r="1" fill="#e03030"/><circle cx="13" cy="6.5" r="1" fill="#3060e0"/><rect x="7.5" y="0.5" width="1" height="2.5" fill="#aaa"/></svg>
<div class="a" style="left:887px;top:214px;width:114px;height:17px;overflow:hidden">
<div class="a t" style="left:0px;top:2px;font-size:11px;line-height:11px;color:#e8e8e8;transform-origin:0 0;transform:scaleX(0.975);">Game Mode - GameMode</div>
</div>
<svg class="a" style="left:866px;top:231px;" width="15" height="16" viewBox="0 0 15 16"><circle cx="7.5" cy="6.5" r="6" fill="#2a8ee0"/><path d="M4 3Q7 2 8 5T5 10Q3 7 4 3Z" fill="#40c040"/><path d="M9 7Q11 6 12 9L10 11Z" fill="#40c040"/><path d="M0.5 14H14.5" stroke="#aaa" stroke-width="1"/><path d="M5.5 15L7.5 12L9.5 15Z" fill="#f0a030"/></svg>
<div class="a" style="left:887px;top:232px;width:114px;height:17px;overflow:hidden">
<div class="a t" style="left:0px;top:2px;font-size:11px;line-height:11px;color:#e8e8e8;transform-origin:0 0;transform:scaleX(0.975);">Network Logic - NetworkLogic</div>
</div>
<svg class="a" style="left:869px;top:249px;" width="10" height="3" viewBox="0 0 10 3"><path d="M0 3Q5 -1 10 3Z" fill="#5aa0e0"/></svg>
<div class="a" style="left:1001px;top:104px;width:18px;height:148px;background:#2e2e2e;"></div>
<div class="a" style="left:1001px;top:121px;width:17px;height:51px;background:#3d3d3d;"></div>
<svg class="a" style="left:1006px;top:109px;" width="8" height="6" viewBox="0 0 8 6"><path d="M0.5 5L4 1.5L7.5 5" fill="none" stroke="#8a8a8a" stroke-width="1.2"/></svg>
<svg class="a" style="left:1006px;top:243px;" width="8" height="6" viewBox="0 0 8 6"><path d="M0.5 1L4 4.5L7.5 1" fill="none" stroke="#8a8a8a" stroke-width="1.2"/></svg>
<div class="a" style="left:826px;top:252px;width:175px;height:16px;background:#2e2e2e;"></div>
<div class="a" style="left:841px;top:252px;width:74px;height:16px;background:#3d3d3d;"></div>
<div class="a" style="left:1001px;top:252px;width:18px;height:16px;background:#2e2e2e;"></div>
<svg class="a" style="left:832px;top:256px;" width="6" height="8" viewBox="0 0 6 8"><path d="M5 0.5L1.5 4L5 7.5" fill="none" stroke="#8a8a8a" stroke-width="1.2"/></svg>
<svg class="a" style="left:991px;top:256px;" width="6" height="8" viewBox="0 0 6 8"><path d="M1 0.5L4.5 4L1 7.5" fill="none" stroke="#8a8a8a" stroke-width="1.2"/></svg>
<div class="a" style="left:826px;top:268px;width:193px;height:1px;background:#4a4a4a;"></div>
<div class="a" style="left:825px;top:275px;width:195px;height:426px;background:#373737;box-sizing:border-box;border:1px solid #4a4a4a;"></div>
<div class="a" style="left:826px;top:276px;width:193px;height:18px;background:#0b0b0b;"></div>
<div class="a t" style="left:831.5px;top:278.5px;font-size:12px;line-height:12px;color:#9c9c9c;transform-origin:0 0;transform:scaleX(1.006);">Настройки</div>
<svg class="a" style="left:972px;top:283px;" width="8" height="5" viewBox="0 0 8 5"><path d="M0 0H8L4 4.5Z" fill="#8c8c8c"/></svg>
<svg class="a" style="left:988px;top:279px;" width="8" height="11" viewBox="0 0 8 11"><path d="M2 0.5H6M2.5 0.5V7M5.5 0.5V7M0.5 7H7.5M4 7V10.5" fill="none" stroke="#8c8c8c" stroke-width="1.2"/></svg>
<svg class="a" style="left:1003px;top:280px;" width="10" height="10" viewBox="0 0 10 10"><path d="M1 1L9 9M9 1L1 9" stroke="#8c8c8c" stroke-width="1.8"/></svg>
<div class="a" style="left:826px;top:294px;width:193px;height:1px;background:#474747;"></div>
<div class="a t" style="left:832px;top:302px;font-size:12px;line-height:12px;color:#e8e8e8;font-weight:bold;transform-origin:0 0;transform:scaleX(0.945);">Scene</div>
<div class="a t" style="left:832px;top:321.5px;font-size:12px;line-height:12px;color:#e8e8e8;transform-origin:0 0;transform:scaleX(0.879);">Scene</div>
<svg class="a" style="left:998px;top:299px;" width="16" height="16" viewBox="0 0 16 16"><path d="M5 5V11H10" fill="none" stroke="#9a9a9a" stroke-width="1"/><path d="M0.5 4L5 0.5L9.5 4L5 7.5Z" fill="#c8b040"/><path d="M9 7L12 5L15 7L12 9.5Z" fill="#30b0e0"/><path d="M9 12.5L12 10.5L15 12.5L12 15Z" fill="#e070c0"/></svg>
<div class="a" style="left:829px;top:341px;width:19px;height:21px;background:#555555;"></div>
<svg class="a" style="left:830px;top:344px;" width="18" height="15" viewBox="0 0 18 15"><rect x="1" y="1" width="16.5" height="13.5" rx="1.5" fill="#2a78c8"/><rect x="2.2" y="3.8" width="14" height="9.6" fill="#f2f2f2"/><circle cx="3.8" cy="5.3" r="0.8" fill="#20a020"/><circle cx="3.8" cy="7.5" r="0.8" fill="#c04040"/><circle cx="3.8" cy="9.7" r="0.8" fill="#4080f0"/><circle cx="3.8" cy="11.8" r="0.8" fill="#444"/><path d="M5.5 7.5H14M5.5 9.7H13M5.5 11.8H14" stroke="#c8c8c8" stroke-width="0.6"/><path d="M6 4.5L9 0.5H17.5L18 3L15 6.5L11 5.8L9 7Z" fill="#d8a060" stroke="#a86a30" stroke-width="0.5"/><path d="M9 2L13 5.5M11 1.5L15 5M13 1L16.5 4.5" stroke="#b07840" stroke-width="0.5"/></svg>
<svg class="a" style="left:853px;top:344px;" width="13" height="16" viewBox="0 0 13 16"><path d="M5.5 0.5H12.5L8.5 6H11.5L2.5 15.5L4.5 8.5H1L5.5 0.5Z" fill="#f5d020" stroke="#c09000" stroke-width="0.7"/><path d="M6.5 1.5H10.5L7.5 5.5" fill="none" stroke="#fff080" stroke-width="0.6"/></svg>
<div class="a" style="left:828px;top:363px;width:175px;height:288px;background:#373737;"></div>
<div class="a" style="left:1003px;top:363px;width:14px;height:288px;background:#2e2e2e;"></div>
<div class="a" style="left:1003px;top:363px;width:14px;height:14px;background:#2b2b2b;"></div>
<div class="a" style="left:1003px;top:377px;width:14px;height:47px;background:#3d3d3d;"></div>
<svg class="a" style="left:1006px;top:367px;" width="8" height="6" viewBox="0 0 8 6"><path d="M0.5 5L4 1.5L7.5 5" fill="none" stroke="#8a8a8a" stroke-width="1.2"/></svg>
<svg class="a" style="left:1006px;top:643px;" width="8" height="6" viewBox="0 0 8 6"><path d="M0.5 1L4 4.5L7.5 1" fill="none" stroke="#8a8a8a" stroke-width="1.2"/></svg>
<div class="a" style="left:828px;top:365px;width:175px;height:17px;background:#2a2a2a;"></div>
<div class="a t" style="left:831.5px;top:368px;font-size:12px;line-height:12px;color:#a8a8a8;transform-origin:0 0;transform:scaleX(0.914);">Компонент</div>
<div class="a" style="left:906px;top:383px;width:6px;height:91px;background:#3f3f3f;"></div>
<div class="a" style="left:828px;top:477px;width:175px;height:17px;background:#2a2a2a;"></div>
<div class="a t" style="left:830.5px;top:479.5px;font-size:12px;line-height:12px;color:#a8a8a8;transform-origin:0 0;transform:scaleX(0.882);">Сцена</div>
<div class="a" style="left:906px;top:495px;width:6px;height:156px;background:#3f3f3f;"></div>
<div class="a t" style="left:847.5px;top:389px;font-size:12px;line-height:12px;color:#e4e4e4;transform-origin:0 0;transform:scaleX(0.882);">Включено</div>
<div class="a t" style="left:847.5px;top:412px;font-size:12px;line-height:12px;color:#e4e4e4;transform-origin:0 0;transform:scaleX(0.831);">Name</div>
<div class="a t" style="left:847.5px;top:435px;font-size:12px;line-height:12px;color:#e4e4e4;transform-origin:0 0;transform:scaleX(0.877);">Screen L...</div>
<div class="a t" style="left:847.5px;top:458px;font-size:12px;line-height:12px;color:#e4e4e4;transform-origin:0 0;transform:scaleX(0.887);">Network ...</div>
<div class="a" style="left:847.5px;top:499px;width:58.5px;height:18px;overflow:hidden">
<div class="a t" style="left:0px;top:2px;font-size:12px;line-height:12px;color:#e4e4e4;transform-origin:0 0;transform:scaleX(0.874);">Renderin...</div>
</div>
<div class="a" style="left:847.5px;top:522px;width:58.5px;height:18px;overflow:hidden">
<div class="a t" style="left:0px;top:2px;font-size:12px;line-height:12px;color:#e4e4e4;transform-origin:0 0;transform:scaleX(0.885);">Backgro...</div>
</div>
<div class="a" style="left:847.5px;top:545px;width:58.5px;height:18px;overflow:hidden">
<div class="a t" style="left:0px;top:2px;font-size:12px;line-height:12px;color:#e4e4e4;transform-origin:0 0;transform:scaleX(0.885);">Backgro...</div>
</div>
<div class="a" style="left:847.5px;top:568px;width:58.5px;height:18px;overflow:hidden">
<div class="a t" style="left:0px;top:2px;font-size:12px;line-height:12px;color:#e4e4e4;transform-origin:0 0;transform:scaleX(0.864);">UI Screen</div>
</div>
<div class="a" style="left:847.5px;top:591px;width:58.5px;height:18px;overflow:hidden">
<div class="a t" style="left:0px;top:2px;font-size:12px;line-height:12px;color:#e4e4e4;transform-origin:0 0;transform:scaleX(0.866);">Mode</div>
</div>
<div class="a" style="left:847.5px;top:614px;width:58.5px;height:18px;overflow:hidden">
<div class="a t" style="left:0px;top:2px;font-size:12px;line-height:12px;color:#e4e4e4;transform-origin:0 0;transform:scaleX(0.876);">Screen ...</div>
</div>
<div class="a" style="left:847.5px;top:637px;width:58.5px;height:18px;overflow:hidden">
<div class="a t" style="left:0px;top:2px;font-size:12px;line-height:12px;color:#e4e4e4;transform-origin:0 0;transform:scaleX(0.860);">Camera ...</div>
</div>
<svg class="a" style="left:952px;top:388px;" width="13" height="13" viewBox="0 0 13 13"><rect x="0.5" y="0.5" width="12" height="12" fill="#222" stroke="#7a7a7a"/><path d="M2.5 6.5L5.2 9.3L10.5 3.5" fill="none" stroke="#fff" stroke-width="2"/></svg>
<div class="a" style="left:951px;top:409px;width:49px;height:18px;background:#262626;box-sizing:border-box;border:1px solid #6a6a6a;"></div>
<div class="a" style="left:926px;top:432px;width:22px;height:18px;background:#3b3b3b;box-sizing:border-box;border:1px solid #5c5c5c;"></div>
<div class="a" style="left:951px;top:432px;width:49px;height:18px;background:#3b3b3b;box-sizing:border-box;border:1px solid #5c5c5c;"></div>
<div class="a t" style="left:956px;top:434.5px;font-size:12px;line-height:12px;color:#e8e8e8;transform-origin:0 0;transform:scaleX(0.863);">Auto</div>
<svg class="a" style="left:988px;top:439px;" width="8" height="5" viewBox="0 0 8 5"><path d="M0 0H8L4 4.5Z" fill="#8c8c8c"/></svg>
<div class="a" style="left:926px;top:455px;width:22px;height:18px;background:#3b3b3b;box-sizing:border-box;border:1px solid #5c5c5c;"></div>
<div class="a" style="left:951px;top:455px;width:49px;height:18px;background:#3b3b3b;box-sizing:border-box;border:1px solid #5c5c5c;"></div>
<div class="a t" style="left:956px;top:457.5px;font-size:12px;line-height:12px;color:#e8e8e8;transform-origin:0 0;transform:scaleX(0.879);">True</div>
<svg class="a" style="left:988px;top:462px;" width="8" height="5" viewBox="0 0 8 5"><path d="M0 0H8L4 4.5Z" fill="#8c8c8c"/></svg>
<svg class="a" style="left:915px;top:504px;" width="6" height="6" viewBox="0 0 6 6"><circle cx="3" cy="3" r="2.5" fill="#7a7a7a"/></svg>
<div class="a" style="left:926px;top:498px;width:22px;height:18px;background:#3b3b3b;box-sizing:border-box;border:1px solid #5c5c5c;"></div>
<svg class="a" style="left:935px;top:504px;" width="6" height="9" viewBox="0 0 6 9"><path d="M0 0L5.5 4.5L0 9Z" fill="#9a9a9a"/></svg>
<div class="a" style="left:955px;top:500px;width:46px;height:18px;overflow:hidden">
<div class="a t" style="left:0px;top:2px;font-size:12px;line-height:12px;color:#e8e8e8;transform-origin:0 0;transform:scaleX(0.865);">Renderir</div>
</div>
<svg class="a" style="left:830px;top:523px;" width="14" height="14" viewBox="0 0 14 14"><rect x="0.5" y="0.5" width="13" height="13" fill="#383838" stroke="#5a5a5a"/><path d="M4 7H10M7 4V10" stroke="#cfcfcf" stroke-width="1"/></svg>
<div class="a" style="left:926px;top:521px;width:22px;height:18px;background:#3b3b3b;box-sizing:border-box;border:1px solid #5c5c5c;"></div>
<div class="a" style="left:951px;top:521px;width:27px;height:17px;background:#232323;box-sizing:border-box;border:1px solid #6a6a6a;"></div>
<div class="a t" style="left:955px;top:524px;font-size:12px;line-height:12px;color:#e8e8e8;transform-origin:0 0;transform:scaleX(0.725);">1 1</div>
<div class="a" style="left:980px;top:521px;width:19px;height:17px;background:#ffffff;"></div>
<div class="a" style="left:926px;top:544px;width:22px;height:18px;background:#3b3b3b;box-sizing:border-box;border:1px solid #5c5c5c;"></div>
<div class="a" style="left:951px;top:544px;width:48px;height:17px;background:#262626;box-sizing:border-box;border:1px solid #6a6a6a;"></div>
<div class="a t" style="left:955px;top:547px;font-size:12px;line-height:12px;color:#e8e8e8;transform-origin:0 0;transform:scaleX(0.890);">1</div>
<div class="a" style="left:926px;top:567px;width:22px;height:18px;background:#3b3b3b;box-sizing:border-box;border:1px solid #5c5c5c;"></div>
<div class="a t" style="left:955px;top:572.5px;font-size:12px;line-height:12px;color:#e8e8e8;transform-origin:0 0;transform:scaleX(0.823);">(Null)</div>
<div class="a" style="left:926px;top:590px;width:22px;height:18px;background:#3b3b3b;box-sizing:border-box;border:1px solid #5c5c5c;"></div>
<div class="a" style="left:951px;top:590px;width:49px;height:18px;background:#3b3b3b;box-sizing:border-box;border:1px solid #5c5c5c;"></div>
<div class="a t" style="left:956px;top:592.5px;font-size:12px;line-height:12px;color:#e8e8e8;transform-origin:0 0;transform:scaleX(0.899);">3D</div>
<svg class="a" style="left:988px;top:597px;" width="8" height="5" viewBox="0 0 8 5"><path d="M0 0H8L4 4.5Z" fill="#8c8c8c"/></svg>
<div class="a" style="left:926px;top:613px;width:22px;height:18px;background:#3b3b3b;box-sizing:border-box;border:1px solid #5c5c5c;"></div>
<div class="a" style="left:951px;top:613px;width:49px;height:18px;background:#3b3b3b;box-sizing:border-box;border:1px solid #5c5c5c;"></div>
<div class="a t" style="left:956px;top:615.5px;font-size:12px;line-height:12px;color:#e8e8e8;transform-origin:0 0;transform:scaleX(0.900);">Un...</div>
<svg class="a" style="left:988px;top:620px;" width="8" height="5" viewBox="0 0 8 5"><path d="M0 0H8L4 4.5Z" fill="#8c8c8c"/></svg>
<svg class="a" style="left:915px;top:641px;" width="6" height="6" viewBox="0 0 6 6"><circle cx="3" cy="3" r="2.5" fill="#7a7a7a"/></svg>
<div class="a" style="left:826px;top:636px;width:176px;height:15px;overflow:hidden">
<div class="a" style="left:100px;top:0px;width:22px;height:20px;box-sizing:border-box;border:1px solid #5c5c5c;background:#3b3b3b"></div>
<svg class="a" style="left:109px;top:5px" width="6" height="9"><path d="M0 0L5.5 4.5L0 9Z" fill="#9a9a9a"/></svg>
<div class="a t" style="left:129px;top:4.5px;font-size:12px;line-height:12px;color:#e8e8e8;transform-origin:0 0;transform:scaleX(0.86)">Camera</div>
<div class="a" style="left:168px;top:4px;width:1px;height:11px;background:#3a70d0"></div>
</div>
<div class="a" style="left:833px;top:659px;width:93px;height:26px;background:#3a3a3a;box-sizing:border-box;border:1px solid #5a5a5a;"></div>
<div class="a t" style="left:869px;top:665.5px;font-size:12px;line-height:12px;color:#e8e8e8;transform-origin:0 0;transform:scaleX(0.864);">Info</div>
</body></html>
